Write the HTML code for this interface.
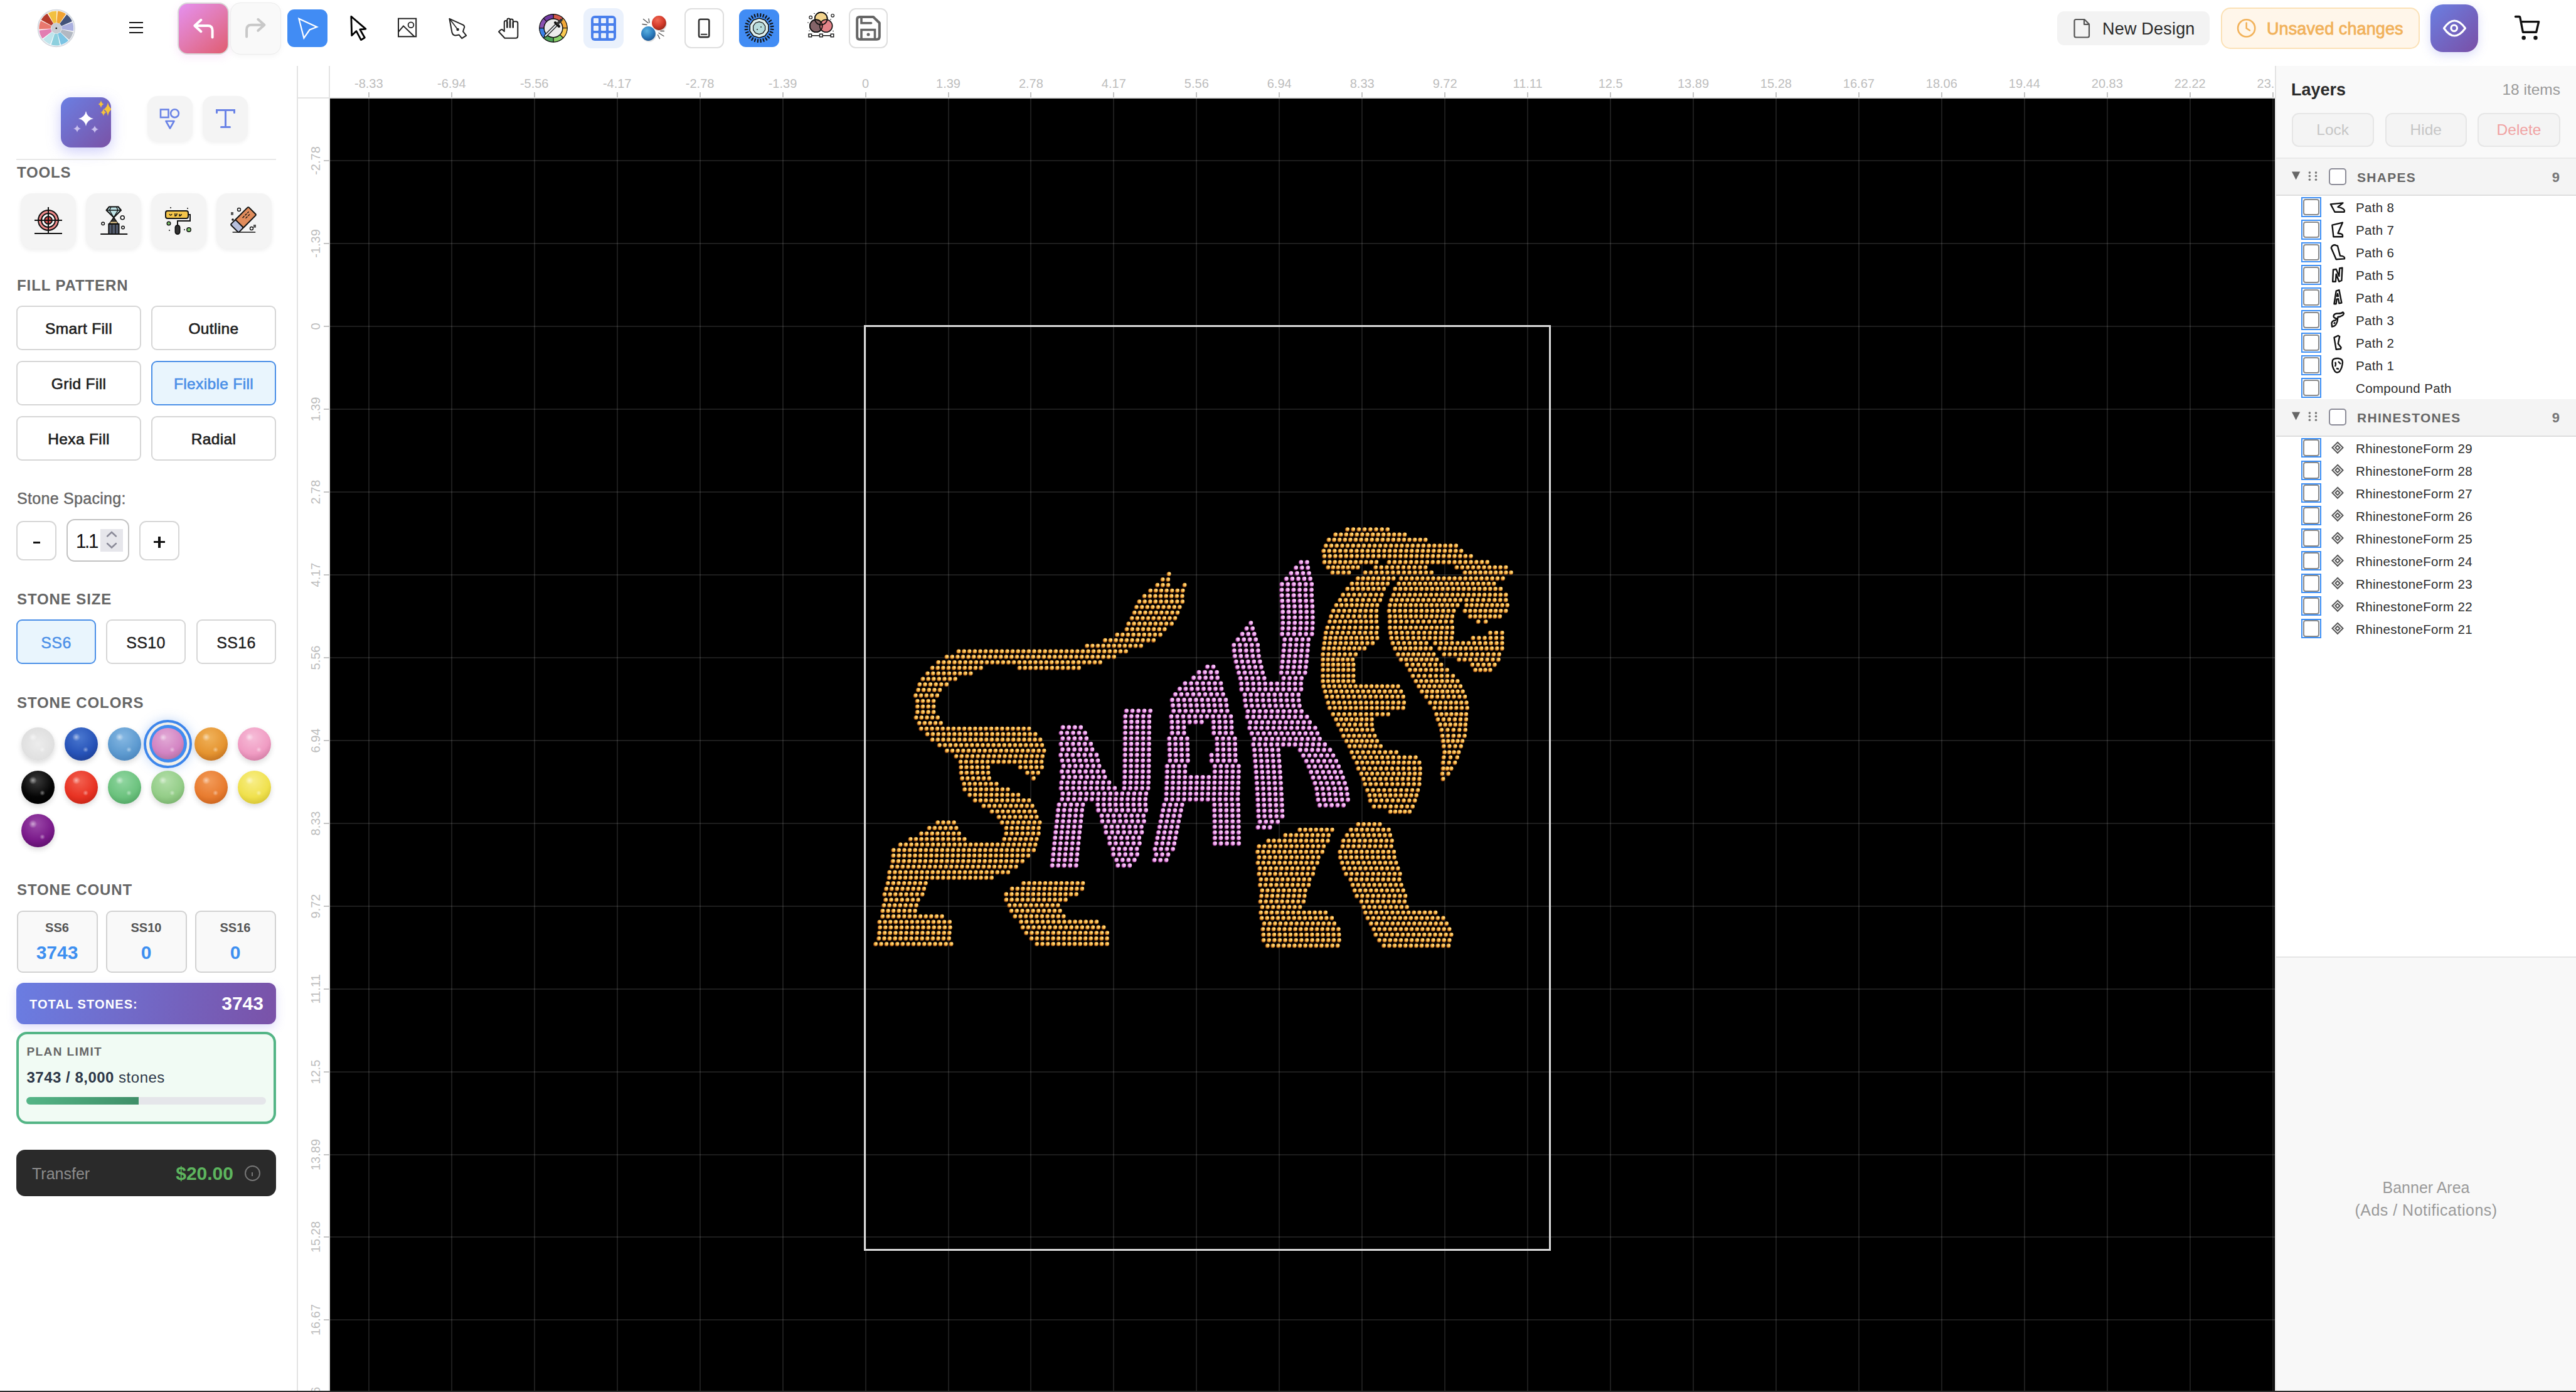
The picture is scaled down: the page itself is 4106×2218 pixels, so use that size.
<!DOCTYPE html><html><head><meta charset="utf-8"><style>
*{box-sizing:border-box;margin:0;padding:0}
html,body{width:4106px;height:2218px;overflow:hidden;background:#fff;font-family:"Liberation Sans",sans-serif}
.a{position:absolute}
.t{position:absolute;line-height:1;white-space:nowrap}
.c{display:flex;align-items:center;justify-content:center}
.hdr{font-weight:bold;color:#666;font-size:24px;letter-spacing:1.6px}
.fb{position:absolute;border:2px solid #d6d6d6;border-radius:9px;background:#fff;font-size:24.5px;color:#1d1d1d;font-weight:normal;-webkit-text-stroke:0.65px currentColor;letter-spacing:0.35px;padding-top:3px;display:flex;align-items:center;justify-content:center;line-height:1}
.rl{position:absolute;font-size:20px;color:#bdbdbd;line-height:1;white-space:nowrap}
.li{position:absolute;font-size:21px;color:#2c2c2c;line-height:1;white-space:nowrap}
</style></head><body>
<div class="a" style="left:526px;top:157px;width:3100px;height:2059px;background:#000;overflow:hidden">
<div class="a" style="left:60.8px;top:0;width:2px;height:2059px;background:rgba(255,255,255,.115)"></div>
<div class="a" style="left:192.8px;top:0;width:2px;height:2059px;background:rgba(255,255,255,.115)"></div>
<div class="a" style="left:324.7px;top:0;width:2px;height:2059px;background:rgba(255,255,255,.115)"></div>
<div class="a" style="left:456.7px;top:0;width:2px;height:2059px;background:rgba(255,255,255,.115)"></div>
<div class="a" style="left:588.6px;top:0;width:2px;height:2059px;background:rgba(255,255,255,.115)"></div>
<div class="a" style="left:720.5px;top:0;width:2px;height:2059px;background:rgba(255,255,255,.115)"></div>
<div class="a" style="left:852.5px;top:0;width:2px;height:2059px;background:rgba(255,255,255,.115)"></div>
<div class="a" style="left:984.5px;top:0;width:2px;height:2059px;background:rgba(255,255,255,.115)"></div>
<div class="a" style="left:1116.4px;top:0;width:2px;height:2059px;background:rgba(255,255,255,.115)"></div>
<div class="a" style="left:1248.3px;top:0;width:2px;height:2059px;background:rgba(255,255,255,.115)"></div>
<div class="a" style="left:1380.3px;top:0;width:2px;height:2059px;background:rgba(255,255,255,.115)"></div>
<div class="a" style="left:1512.2px;top:0;width:2px;height:2059px;background:rgba(255,255,255,.115)"></div>
<div class="a" style="left:1644.2px;top:0;width:2px;height:2059px;background:rgba(255,255,255,.115)"></div>
<div class="a" style="left:1776.1px;top:0;width:2px;height:2059px;background:rgba(255,255,255,.115)"></div>
<div class="a" style="left:1908.1px;top:0;width:2px;height:2059px;background:rgba(255,255,255,.115)"></div>
<div class="a" style="left:2040.1px;top:0;width:2px;height:2059px;background:rgba(255,255,255,.115)"></div>
<div class="a" style="left:2172.0px;top:0;width:2px;height:2059px;background:rgba(255,255,255,.115)"></div>
<div class="a" style="left:2303.9px;top:0;width:2px;height:2059px;background:rgba(255,255,255,.115)"></div>
<div class="a" style="left:2435.9px;top:0;width:2px;height:2059px;background:rgba(255,255,255,.115)"></div>
<div class="a" style="left:2567.8px;top:0;width:2px;height:2059px;background:rgba(255,255,255,.115)"></div>
<div class="a" style="left:2699.8px;top:0;width:2px;height:2059px;background:rgba(255,255,255,.115)"></div>
<div class="a" style="left:2831.8px;top:0;width:2px;height:2059px;background:rgba(255,255,255,.115)"></div>
<div class="a" style="left:2963.7px;top:0;width:2px;height:2059px;background:rgba(255,255,255,.115)"></div>
<div class="a" style="left:3095.6px;top:0;width:2px;height:2059px;background:rgba(255,255,255,.115)"></div>
<div class="a" style="left:0;top:98.1px;width:3100px;height:2px;background:rgba(255,255,255,.115)"></div>
<div class="a" style="left:0;top:230.1px;width:3100px;height:2px;background:rgba(255,255,255,.115)"></div>
<div class="a" style="left:0;top:362.0px;width:3100px;height:2px;background:rgba(255,255,255,.115)"></div>
<div class="a" style="left:0;top:494.0px;width:3100px;height:2px;background:rgba(255,255,255,.115)"></div>
<div class="a" style="left:0;top:625.9px;width:3100px;height:2px;background:rgba(255,255,255,.115)"></div>
<div class="a" style="left:0;top:757.8px;width:3100px;height:2px;background:rgba(255,255,255,.115)"></div>
<div class="a" style="left:0;top:889.8px;width:3100px;height:2px;background:rgba(255,255,255,.115)"></div>
<div class="a" style="left:0;top:1021.8px;width:3100px;height:2px;background:rgba(255,255,255,.115)"></div>
<div class="a" style="left:0;top:1153.7px;width:3100px;height:2px;background:rgba(255,255,255,.115)"></div>
<div class="a" style="left:0;top:1285.6px;width:3100px;height:2px;background:rgba(255,255,255,.115)"></div>
<div class="a" style="left:0;top:1417.6px;width:3100px;height:2px;background:rgba(255,255,255,.115)"></div>
<div class="a" style="left:0;top:1549.5px;width:3100px;height:2px;background:rgba(255,255,255,.115)"></div>
<div class="a" style="left:0;top:1681.5px;width:3100px;height:2px;background:rgba(255,255,255,.115)"></div>
<div class="a" style="left:0;top:1813.4px;width:3100px;height:2px;background:rgba(255,255,255,.115)"></div>
<div class="a" style="left:0;top:1945.4px;width:3100px;height:2px;background:rgba(255,255,255,.115)"></div>
<div class="a" style="left:851px;top:361px;width:1095px;height:1475px;border:3px solid #dcdcdc"></div>
<svg class="a" style="left:0;top:0" width="3100" height="2059" viewBox="0 0 3100 2059">
<path d="M1337.0 757.8h0M1327.0 766.6h0M1335.6 766.6h0M1318.5 775.4h0M1327.1 775.4h0M1335.7 775.4h0M1361.9 775.4h0M1307.4 784.2h0M1316.0 784.2h0M1324.6 784.2h0M1333.2 784.2h0M1341.8 784.2h0M1350.4 784.2h0M1359.0 784.2h0M1297.9 793.0h0M1306.5 793.0h0M1315.1 793.0h0M1323.7 793.0h0M1332.3 793.0h0M1340.9 793.0h0M1349.5 793.0h0M1358.1 793.0h0M1289.7 801.8h0M1298.3 801.8h0M1306.9 801.8h0M1315.5 801.8h0M1324.1 801.8h0M1332.7 801.8h0M1341.3 801.8h0M1349.9 801.8h0M1358.5 801.8h0M1285.2 810.6h0M1293.8 810.6h0M1302.4 810.6h0M1311.0 810.6h0M1319.6 810.6h0M1328.2 810.6h0M1336.8 810.6h0M1345.4 810.6h0M1354.0 810.6h0M1281.9 819.4h0M1290.5 819.4h0M1299.1 819.4h0M1307.7 819.4h0M1316.3 819.4h0M1324.9 819.4h0M1333.5 819.4h0M1342.1 819.4h0M1350.7 819.4h0M1277.9 828.2h0M1286.5 828.2h0M1295.1 828.2h0M1303.7 828.2h0M1312.3 828.2h0M1320.9 828.2h0M1329.5 828.2h0M1338.1 828.2h0M1346.7 828.2h0M1272.5 837.0h0M1281.1 837.0h0M1289.7 837.0h0M1298.3 837.0h0M1306.9 837.0h0M1315.5 837.0h0M1324.1 837.0h0M1332.7 837.0h0M1341.3 837.0h0M1269.8 845.8h0M1278.4 845.8h0M1287.0 845.8h0M1295.6 845.8h0M1304.2 845.8h0M1312.8 845.8h0M1321.4 845.8h0M1330.0 845.8h0M1254.4 854.6h0M1263.0 854.6h0M1271.6 854.6h0M1280.2 854.6h0M1288.8 854.6h0M1297.4 854.6h0M1306.0 854.6h0M1314.6 854.6h0M1323.2 854.6h0M1235.1 863.4h0M1243.7 863.4h0M1252.3 863.4h0M1260.9 863.4h0M1269.5 863.4h0M1278.1 863.4h0M1286.7 863.4h0M1295.3 863.4h0M1303.9 863.4h0M1312.5 863.4h0M1206.4 872.2h0M1215.0 872.2h0M1223.6 872.2h0M1232.2 872.2h0M1240.8 872.2h0M1249.4 872.2h0M1258.0 872.2h0M1266.6 872.2h0M1275.2 872.2h0M1283.8 872.2h0M1292.4 872.2h0M1001.7 881.0h0M1010.3 881.0h0M1018.9 881.0h0M1027.5 881.0h0M1036.1 881.0h0M1044.7 881.0h0M1053.3 881.0h0M1061.9 881.0h0M1070.5 881.0h0M1079.1 881.0h0M1087.7 881.0h0M1096.3 881.0h0M1104.9 881.0h0M1113.5 881.0h0M1122.1 881.0h0M1130.7 881.0h0M1139.3 881.0h0M1147.9 881.0h0M1156.5 881.0h0M1165.1 881.0h0M1173.7 881.0h0M1182.3 881.0h0M1190.9 881.0h0M1199.5 881.0h0M1208.1 881.0h0M1216.7 881.0h0M1225.3 881.0h0M1233.9 881.0h0M1242.5 881.0h0M1251.1 881.0h0M1259.7 881.0h0M1268.3 881.0h0M982.8 889.8h0M991.4 889.8h0M1000.0 889.8h0M1008.6 889.8h0M1017.2 889.8h0M1025.8 889.8h0M1034.4 889.8h0M1043.0 889.8h0M1051.6 889.8h0M1060.2 889.8h0M1068.8 889.8h0M1077.4 889.8h0M1086.0 889.8h0M1094.6 889.8h0M1103.2 889.8h0M1111.8 889.8h0M1120.4 889.8h0M1129.0 889.8h0M1137.6 889.8h0M1146.2 889.8h0M1154.8 889.8h0M1163.4 889.8h0M1172.0 889.8h0M1180.6 889.8h0M1189.2 889.8h0M1197.8 889.8h0M1206.4 889.8h0M1215.0 889.8h0M1223.6 889.8h0M1232.2 889.8h0M1240.8 889.8h0M1249.4 889.8h0M969.3 898.6h0M977.9 898.6h0M986.5 898.6h0M995.1 898.6h0M1003.7 898.6h0M1012.3 898.6h0M1020.9 898.6h0M1029.5 898.6h0M1038.1 898.6h0M1046.7 898.6h0M1055.3 898.6h0M1063.9 898.6h0M1072.5 898.6h0M1081.1 898.6h0M1089.7 898.6h0M1098.3 898.6h0M1106.9 898.6h0M1115.5 898.6h0M1124.1 898.6h0M1132.7 898.6h0M1141.3 898.6h0M1149.9 898.6h0M1158.5 898.6h0M1167.1 898.6h0M1175.7 898.6h0M1184.3 898.6h0M1192.9 898.6h0M1201.5 898.6h0M1210.1 898.6h0M1218.7 898.6h0M1227.3 898.6h0M959.8 907.4h0M968.4 907.4h0M977.0 907.4h0M985.6 907.4h0M994.2 907.4h0M1002.8 907.4h0M1011.4 907.4h0M1020.0 907.4h0M1028.6 907.4h0M1037.2 907.4h0M1098.8 907.4h0M1107.4 907.4h0M1116.0 907.4h0M1124.6 907.4h0M1133.2 907.4h0M1141.8 907.4h0M1150.4 907.4h0M1159.0 907.4h0M1167.6 907.4h0M1176.2 907.4h0M1184.8 907.4h0M1193.4 907.4h0M952.2 916.2h0M960.8 916.2h0M969.4 916.2h0M978.0 916.2h0M986.6 916.2h0M995.2 916.2h0M1003.8 916.2h0M1012.4 916.2h0M1021.0 916.2h0M944.7 925.0h0M953.3 925.0h0M961.9 925.0h0M970.5 925.0h0M979.1 925.0h0M987.7 925.0h0M996.3 925.0h0M939.5 933.8h0M948.1 933.8h0M956.7 933.8h0M965.3 933.8h0M973.9 933.8h0M982.5 933.8h0M937.3 942.6h0M945.9 942.6h0M954.5 942.6h0M963.1 942.6h0M971.7 942.6h0M933.1 951.4h0M941.7 951.4h0M950.3 951.4h0M958.9 951.4h0M967.5 951.4h0M936.0 960.2h0M944.6 960.2h0M953.2 960.2h0M961.8 960.2h0M936.0 969.0h0M944.6 969.0h0M953.2 969.0h0M961.8 969.0h0M936.0 977.8h0M944.6 977.8h0M953.2 977.8h0M961.8 977.8h0M933.9 986.6h0M942.5 986.6h0M951.1 986.6h0M959.7 986.6h0M968.3 986.6h0M938.9 995.4h0M947.5 995.4h0M956.1 995.4h0M964.7 995.4h0M973.3 995.4h0M941.9 1004.2h0M950.5 1004.2h0M959.1 1004.2h0M967.7 1004.2h0M976.3 1004.2h0M984.9 1004.2h0M993.5 1004.2h0M1002.1 1004.2h0M1010.7 1004.2h0M1019.3 1004.2h0M1027.9 1004.2h0M1036.5 1004.2h0M1045.1 1004.2h0M1053.7 1004.2h0M1062.3 1004.2h0M1070.9 1004.2h0M1079.5 1004.2h0M1088.1 1004.2h0M1096.7 1004.2h0M1105.3 1004.2h0M1113.9 1004.2h0M951.9 1013.0h0M960.5 1013.0h0M969.1 1013.0h0M977.7 1013.0h0M986.3 1013.0h0M994.9 1013.0h0M1003.5 1013.0h0M1012.1 1013.0h0M1020.7 1013.0h0M1029.3 1013.0h0M1037.9 1013.0h0M1046.5 1013.0h0M1055.1 1013.0h0M1063.7 1013.0h0M1072.3 1013.0h0M1080.9 1013.0h0M1089.5 1013.0h0M1098.1 1013.0h0M1106.7 1013.0h0M1115.3 1013.0h0M1123.9 1013.0h0M959.8 1021.8h0M968.4 1021.8h0M977.0 1021.8h0M985.6 1021.8h0M994.2 1021.8h0M1002.8 1021.8h0M1011.4 1021.8h0M1020.0 1021.8h0M1028.6 1021.8h0M1037.2 1021.8h0M1045.8 1021.8h0M1054.4 1021.8h0M1063.0 1021.8h0M1071.6 1021.8h0M1080.2 1021.8h0M1088.8 1021.8h0M1097.4 1021.8h0M1106.0 1021.8h0M1114.6 1021.8h0M1123.2 1021.8h0M1131.8 1021.8h0M971.2 1030.6h0M979.8 1030.6h0M988.4 1030.6h0M997.0 1030.6h0M1005.6 1030.6h0M1014.2 1030.6h0M1022.8 1030.6h0M1031.4 1030.6h0M1040.0 1030.6h0M1048.6 1030.6h0M1057.2 1030.6h0M1065.8 1030.6h0M1074.4 1030.6h0M1083.0 1030.6h0M1091.6 1030.6h0M1100.2 1030.6h0M1108.8 1030.6h0M1117.4 1030.6h0M1126.0 1030.6h0M1134.6 1030.6h0M983.1 1039.4h0M991.7 1039.4h0M1000.3 1039.4h0M1008.9 1039.4h0M1017.5 1039.4h0M1026.1 1039.4h0M1034.7 1039.4h0M1043.3 1039.4h0M1051.9 1039.4h0M1060.5 1039.4h0M1069.1 1039.4h0M1077.7 1039.4h0M1086.3 1039.4h0M1094.9 1039.4h0M1103.5 1039.4h0M1112.1 1039.4h0M1120.7 1039.4h0M1129.3 1039.4h0M1137.9 1039.4h0M997.8 1048.2h0M1006.4 1048.2h0M1015.0 1048.2h0M1023.6 1048.2h0M1032.2 1048.2h0M1040.8 1048.2h0M1049.4 1048.2h0M1058.0 1048.2h0M1066.6 1048.2h0M1075.2 1048.2h0M1083.8 1048.2h0M1092.4 1048.2h0M1101.0 1048.2h0M1109.6 1048.2h0M1118.2 1048.2h0M1126.8 1048.2h0M1135.4 1048.2h0M1004.8 1057.0h0M1013.4 1057.0h0M1022.0 1057.0h0M1030.6 1057.0h0M1039.2 1057.0h0M1047.8 1057.0h0M1056.4 1057.0h0M1065.0 1057.0h0M1073.6 1057.0h0M1082.2 1057.0h0M1090.8 1057.0h0M1099.4 1057.0h0M1108.0 1057.0h0M1116.6 1057.0h0M1125.2 1057.0h0M1133.8 1057.0h0M1005.5 1065.8h0M1014.1 1065.8h0M1022.7 1065.8h0M1031.3 1065.8h0M1039.9 1065.8h0M1048.5 1065.8h0M1100.0 1065.8h0M1108.6 1065.8h0M1117.2 1065.8h0M1125.8 1065.8h0M1134.4 1065.8h0M1005.8 1074.6h0M1014.4 1074.6h0M1023.0 1074.6h0M1031.6 1074.6h0M1040.2 1074.6h0M1048.8 1074.6h0M1111.2 1074.6h0M1119.8 1074.6h0M1128.4 1074.6h0M1007.3 1083.4h0M1015.9 1083.4h0M1024.5 1083.4h0M1033.1 1083.4h0M1041.7 1083.4h0M1050.3 1083.4h0M1121.2 1083.4h0M1010.4 1092.2h0M1019.0 1092.2h0M1027.6 1092.2h0M1036.2 1092.2h0M1044.8 1092.2h0M1053.4 1092.2h0M1062.0 1092.2h0M1011.3 1101.0h0M1019.9 1101.0h0M1028.5 1101.0h0M1037.1 1101.0h0M1045.7 1101.0h0M1054.3 1101.0h0M1062.9 1101.0h0M1071.5 1101.0h0M1080.1 1101.0h0M1019.3 1109.8h0M1027.9 1109.8h0M1036.5 1109.8h0M1045.1 1109.8h0M1053.7 1109.8h0M1062.3 1109.8h0M1070.9 1109.8h0M1079.5 1109.8h0M1088.1 1109.8h0M1096.7 1109.8h0M1027.9 1118.6h0M1036.5 1118.6h0M1045.1 1118.6h0M1053.7 1118.6h0M1062.3 1118.6h0M1070.9 1118.6h0M1079.5 1118.6h0M1088.1 1118.6h0M1096.7 1118.6h0M1105.3 1118.6h0M1113.9 1118.6h0M1041.7 1127.4h0M1050.3 1127.4h0M1058.9 1127.4h0M1067.5 1127.4h0M1076.1 1127.4h0M1084.7 1127.4h0M1093.3 1127.4h0M1101.9 1127.4h0M1110.5 1127.4h0M1119.1 1127.4h0M1054.7 1136.2h0M1063.3 1136.2h0M1071.9 1136.2h0M1080.5 1136.2h0M1089.1 1136.2h0M1097.7 1136.2h0M1106.3 1136.2h0M1114.9 1136.2h0M1123.5 1136.2h0M1065.8 1145.0h0M1074.4 1145.0h0M1083.0 1145.0h0M1091.6 1145.0h0M1100.2 1145.0h0M1108.8 1145.0h0M1117.4 1145.0h0M1126.0 1145.0h0M968.4 1153.8h0M977.0 1153.8h0M985.6 1153.8h0M994.2 1153.8h0M1070.8 1153.8h0M1079.4 1153.8h0M1088.0 1153.8h0M1096.6 1153.8h0M1105.2 1153.8h0M1113.8 1153.8h0M1122.4 1153.8h0M1131.0 1153.8h0M954.9 1162.6h0M963.5 1162.6h0M972.1 1162.6h0M980.7 1162.6h0M989.3 1162.6h0M997.9 1162.6h0M1077.7 1162.6h0M1086.3 1162.6h0M1094.9 1162.6h0M1103.5 1162.6h0M1112.1 1162.6h0M1120.7 1162.6h0M1129.3 1162.6h0M942.1 1171.4h0M950.7 1171.4h0M959.3 1171.4h0M967.9 1171.4h0M976.5 1171.4h0M985.1 1171.4h0M993.7 1171.4h0M1002.3 1171.4h0M1077.5 1171.4h0M1086.1 1171.4h0M1094.7 1171.4h0M1103.3 1171.4h0M1111.9 1171.4h0M1120.5 1171.4h0M1129.1 1171.4h0M925.0 1180.2h0M933.6 1180.2h0M942.2 1180.2h0M950.8 1180.2h0M959.4 1180.2h0M968.0 1180.2h0M976.6 1180.2h0M985.2 1180.2h0M993.8 1180.2h0M1002.4 1180.2h0M1011.0 1180.2h0M1074.5 1180.2h0M1083.1 1180.2h0M1091.7 1180.2h0M1100.3 1180.2h0M1108.9 1180.2h0M1117.5 1180.2h0M1126.1 1180.2h0M908.9 1189.0h0M917.5 1189.0h0M926.1 1189.0h0M934.7 1189.0h0M943.3 1189.0h0M951.9 1189.0h0M960.5 1189.0h0M969.1 1189.0h0M977.7 1189.0h0M986.3 1189.0h0M994.9 1189.0h0M1003.5 1189.0h0M1012.1 1189.0h0M1020.7 1189.0h0M1029.3 1189.0h0M1037.9 1189.0h0M1046.5 1189.0h0M1055.1 1189.0h0M1063.7 1189.0h0M1072.3 1189.0h0M1080.9 1189.0h0M1089.5 1189.0h0M1098.1 1189.0h0M1106.7 1189.0h0M1115.3 1189.0h0M1123.9 1189.0h0M897.9 1197.8h0M906.5 1197.8h0M915.1 1197.8h0M923.7 1197.8h0M932.3 1197.8h0M940.9 1197.8h0M949.5 1197.8h0M958.1 1197.8h0M966.7 1197.8h0M975.3 1197.8h0M983.9 1197.8h0M992.5 1197.8h0M1001.1 1197.8h0M1009.7 1197.8h0M1018.3 1197.8h0M1026.9 1197.8h0M1035.5 1197.8h0M1044.1 1197.8h0M1052.7 1197.8h0M1061.3 1197.8h0M1069.9 1197.8h0M1078.5 1197.8h0M1087.1 1197.8h0M1095.7 1197.8h0M1104.3 1197.8h0M1112.9 1197.8h0M1121.5 1197.8h0M897.7 1206.6h0M906.3 1206.6h0M914.9 1206.6h0M923.5 1206.6h0M932.1 1206.6h0M940.7 1206.6h0M949.3 1206.6h0M957.9 1206.6h0M966.5 1206.6h0M975.1 1206.6h0M983.7 1206.6h0M992.3 1206.6h0M1000.9 1206.6h0M1009.5 1206.6h0M1018.1 1206.6h0M1026.7 1206.6h0M1035.3 1206.6h0M1043.9 1206.6h0M1052.5 1206.6h0M1061.1 1206.6h0M1069.7 1206.6h0M1078.3 1206.6h0M1086.9 1206.6h0M1095.5 1206.6h0M1104.1 1206.6h0M1112.7 1206.6h0M897.0 1215.4h0M905.6 1215.4h0M914.2 1215.4h0M922.8 1215.4h0M931.4 1215.4h0M940.0 1215.4h0M948.6 1215.4h0M957.2 1215.4h0M965.8 1215.4h0M974.4 1215.4h0M983.0 1215.4h0M991.6 1215.4h0M1000.2 1215.4h0M1008.8 1215.4h0M1017.4 1215.4h0M1026.0 1215.4h0M1034.6 1215.4h0M1043.2 1215.4h0M1051.8 1215.4h0M1060.4 1215.4h0M1069.0 1215.4h0M1077.6 1215.4h0M1086.2 1215.4h0M1094.8 1215.4h0M1103.4 1215.4h0M895.3 1224.2h0M903.9 1224.2h0M912.5 1224.2h0M921.1 1224.2h0M929.7 1224.2h0M938.3 1224.2h0M946.9 1224.2h0M955.5 1224.2h0M964.1 1224.2h0M972.7 1224.2h0M981.3 1224.2h0M989.9 1224.2h0M998.5 1224.2h0M1007.1 1224.2h0M1015.7 1224.2h0M1024.3 1224.2h0M1032.9 1224.2h0M1041.5 1224.2h0M1050.1 1224.2h0M1058.7 1224.2h0M1067.3 1224.2h0M1075.9 1224.2h0M1084.5 1224.2h0M1093.1 1224.2h0M891.4 1233.0h0M900.0 1233.0h0M908.6 1233.0h0M917.2 1233.0h0M925.8 1233.0h0M934.4 1233.0h0M943.0 1233.0h0M951.6 1233.0h0M960.2 1233.0h0M968.8 1233.0h0M977.4 1233.0h0M986.0 1233.0h0M994.6 1233.0h0M1003.2 1233.0h0M1011.8 1233.0h0M1020.4 1233.0h0M1029.0 1233.0h0M1037.6 1233.0h0M1046.2 1233.0h0M1054.8 1233.0h0M1063.4 1233.0h0M1072.0 1233.0h0M1080.6 1233.0h0M890.9 1241.8h0M899.5 1241.8h0M908.1 1241.8h0M916.7 1241.8h0M925.3 1241.8h0M933.9 1241.8h0M942.5 1241.8h0M951.1 1241.8h0M959.7 1241.8h0M968.3 1241.8h0M976.9 1241.8h0M985.5 1241.8h0M994.1 1241.8h0M1002.7 1241.8h0M1011.3 1241.8h0M1019.9 1241.8h0M1028.5 1241.8h0M1037.1 1241.8h0M1045.7 1241.8h0M1054.3 1241.8h0M888.9 1250.6h0M897.5 1250.6h0M906.1 1250.6h0M914.7 1250.6h0M923.3 1250.6h0M931.9 1250.6h0M940.5 1250.6h0M949.1 1250.6h0M886.3 1259.4h0M894.9 1259.4h0M903.5 1259.4h0M912.1 1259.4h0M920.7 1259.4h0M929.3 1259.4h0M937.9 1259.4h0M946.5 1259.4h0M883.7 1268.2h0M892.3 1268.2h0M900.9 1268.2h0M909.5 1268.2h0M918.1 1268.2h0M926.7 1268.2h0M935.3 1268.2h0M943.9 1268.2h0M885.5 1277.0h0M894.1 1277.0h0M902.7 1277.0h0M911.3 1277.0h0M919.9 1277.0h0M928.5 1277.0h0M937.1 1277.0h0M882.6 1285.8h0M891.2 1285.8h0M899.8 1285.8h0M908.4 1285.8h0M917.0 1285.8h0M925.6 1285.8h0M934.2 1285.8h0M880.6 1294.6h0M889.2 1294.6h0M897.8 1294.6h0M906.4 1294.6h0M915.0 1294.6h0M923.6 1294.6h0M932.2 1294.6h0M880.5 1303.4h0M889.1 1303.4h0M897.7 1303.4h0M906.3 1303.4h0M914.9 1303.4h0M923.5 1303.4h0M932.1 1303.4h0M940.7 1303.4h0M949.3 1303.4h0M957.9 1303.4h0M966.5 1303.4h0M975.1 1303.4h0M875.6 1312.2h0M884.2 1312.2h0M892.8 1312.2h0M901.4 1312.2h0M910.0 1312.2h0M918.6 1312.2h0M927.2 1312.2h0M935.8 1312.2h0M944.4 1312.2h0M953.0 1312.2h0M961.6 1312.2h0M970.2 1312.2h0M978.8 1312.2h0M987.4 1312.2h0M876.3 1321.0h0M884.9 1321.0h0M893.5 1321.0h0M902.1 1321.0h0M910.7 1321.0h0M919.3 1321.0h0M927.9 1321.0h0M936.5 1321.0h0M945.1 1321.0h0M953.7 1321.0h0M962.3 1321.0h0M970.9 1321.0h0M979.5 1321.0h0M988.1 1321.0h0M875.2 1329.8h0M883.8 1329.8h0M892.4 1329.8h0M901.0 1329.8h0M909.6 1329.8h0M918.2 1329.8h0M926.8 1329.8h0M935.4 1329.8h0M944.0 1329.8h0M952.6 1329.8h0M961.2 1329.8h0M969.8 1329.8h0M978.4 1329.8h0M987.0 1329.8h0M874.5 1338.6h0M883.1 1338.6h0M891.7 1338.6h0M900.3 1338.6h0M908.9 1338.6h0M917.5 1338.6h0M926.1 1338.6h0M934.7 1338.6h0M943.3 1338.6h0M951.9 1338.6h0M960.5 1338.6h0M969.1 1338.6h0M977.7 1338.6h0M986.3 1338.6h0M869.5 1347.4h0M878.1 1347.4h0M886.7 1347.4h0M895.3 1347.4h0M903.9 1347.4h0M912.5 1347.4h0M921.1 1347.4h0M929.7 1347.4h0M938.3 1347.4h0M946.9 1347.4h0M955.5 1347.4h0M964.1 1347.4h0M972.7 1347.4h0M981.3 1347.4h0M989.9 1347.4h0M1105.2 1250.5h0M1113.8 1250.5h0M1122.4 1250.5h0M1131.0 1250.5h0M1139.6 1250.5h0M1148.2 1250.5h0M1156.8 1250.5h0M1165.4 1250.5h0M1174.0 1250.5h0M1182.6 1250.5h0M1191.2 1250.5h0M1199.8 1250.5h0M1086.8 1259.3h0M1095.4 1259.3h0M1104.0 1259.3h0M1112.6 1259.3h0M1121.2 1259.3h0M1129.8 1259.3h0M1138.4 1259.3h0M1147.0 1259.3h0M1155.6 1259.3h0M1164.2 1259.3h0M1172.8 1259.3h0M1181.4 1259.3h0M1190.0 1259.3h0M1198.6 1259.3h0M1077.5 1268.1h0M1086.1 1268.1h0M1094.7 1268.1h0M1103.3 1268.1h0M1111.9 1268.1h0M1120.5 1268.1h0M1129.1 1268.1h0M1137.7 1268.1h0M1146.3 1268.1h0M1154.9 1268.1h0M1163.5 1268.1h0M1172.1 1268.1h0M1180.7 1268.1h0M1189.3 1268.1h0M1077.6 1276.9h0M1086.2 1276.9h0M1094.8 1276.9h0M1103.4 1276.9h0M1112.0 1276.9h0M1120.6 1276.9h0M1129.2 1276.9h0M1137.8 1276.9h0M1146.4 1276.9h0M1155.0 1276.9h0M1163.6 1276.9h0M1172.2 1276.9h0M1082.6 1285.7h0M1091.2 1285.7h0M1099.8 1285.7h0M1108.4 1285.7h0M1117.0 1285.7h0M1125.6 1285.7h0M1134.2 1285.7h0M1142.8 1285.7h0M1151.4 1285.7h0M1160.0 1285.7h0M1085.8 1294.5h0M1094.4 1294.5h0M1103.0 1294.5h0M1111.6 1294.5h0M1120.2 1294.5h0M1128.8 1294.5h0M1137.4 1294.5h0M1146.0 1294.5h0M1154.6 1294.5h0M1163.2 1294.5h0M1091.6 1303.3h0M1100.2 1303.3h0M1108.8 1303.3h0M1117.4 1303.3h0M1126.0 1303.3h0M1134.6 1303.3h0M1143.2 1303.3h0M1151.8 1303.3h0M1160.4 1303.3h0M1169.0 1303.3h0M1101.2 1312.1h0M1109.8 1312.1h0M1118.4 1312.1h0M1127.0 1312.1h0M1135.6 1312.1h0M1144.2 1312.1h0M1152.8 1312.1h0M1161.4 1312.1h0M1170.0 1312.1h0M1178.6 1312.1h0M1187.2 1312.1h0M1195.8 1312.1h0M1204.4 1312.1h0M1213.0 1312.1h0M1221.6 1312.1h0M1103.9 1320.9h0M1112.5 1320.9h0M1121.1 1320.9h0M1129.7 1320.9h0M1138.3 1320.9h0M1146.9 1320.9h0M1155.5 1320.9h0M1164.1 1320.9h0M1172.7 1320.9h0M1181.3 1320.9h0M1189.9 1320.9h0M1198.5 1320.9h0M1207.1 1320.9h0M1215.7 1320.9h0M1224.3 1320.9h0M1232.9 1320.9h0M1109.5 1329.7h0M1118.1 1329.7h0M1126.7 1329.7h0M1135.3 1329.7h0M1143.9 1329.7h0M1152.5 1329.7h0M1161.1 1329.7h0M1169.7 1329.7h0M1178.3 1329.7h0M1186.9 1329.7h0M1195.5 1329.7h0M1204.1 1329.7h0M1212.7 1329.7h0M1221.3 1329.7h0M1229.9 1329.7h0M1238.5 1329.7h0M1117.8 1338.5h0M1126.4 1338.5h0M1135.0 1338.5h0M1143.6 1338.5h0M1152.2 1338.5h0M1160.8 1338.5h0M1169.4 1338.5h0M1178.0 1338.5h0M1186.6 1338.5h0M1195.2 1338.5h0M1203.8 1338.5h0M1212.4 1338.5h0M1221.0 1338.5h0M1229.6 1338.5h0M1238.2 1338.5h0M1126.5 1347.3h0M1135.1 1347.3h0M1143.7 1347.3h0M1152.3 1347.3h0M1160.9 1347.3h0M1169.5 1347.3h0M1178.1 1347.3h0M1186.7 1347.3h0M1195.3 1347.3h0M1203.9 1347.3h0M1212.5 1347.3h0M1221.1 1347.3h0M1229.7 1347.3h0M1238.3 1347.3h0M1545.5 1165.3h0M1554.1 1165.3h0M1562.7 1165.3h0M1571.3 1165.3h0M1579.9 1165.3h0M1588.5 1165.3h0M1597.1 1165.3h0M1522.5 1174.1h0M1531.1 1174.1h0M1539.7 1174.1h0M1548.3 1174.1h0M1556.9 1174.1h0M1565.5 1174.1h0M1574.1 1174.1h0M1582.7 1174.1h0M1591.3 1174.1h0M1495.5 1182.9h0M1504.1 1182.9h0M1512.7 1182.9h0M1521.3 1182.9h0M1529.9 1182.9h0M1538.5 1182.9h0M1547.1 1182.9h0M1555.7 1182.9h0M1564.3 1182.9h0M1572.9 1182.9h0M1581.5 1182.9h0M1590.1 1182.9h0M1480.4 1191.7h0M1489.0 1191.7h0M1497.6 1191.7h0M1506.2 1191.7h0M1514.8 1191.7h0M1523.4 1191.7h0M1532.0 1191.7h0M1540.6 1191.7h0M1549.2 1191.7h0M1557.8 1191.7h0M1566.4 1191.7h0M1575.0 1191.7h0M1583.6 1191.7h0M1478.2 1200.5h0M1486.8 1200.5h0M1495.4 1200.5h0M1504.0 1200.5h0M1512.6 1200.5h0M1521.2 1200.5h0M1529.8 1200.5h0M1538.4 1200.5h0M1547.0 1200.5h0M1555.6 1200.5h0M1564.2 1200.5h0M1572.8 1200.5h0M1581.4 1200.5h0M1480.5 1209.3h0M1489.1 1209.3h0M1497.7 1209.3h0M1506.3 1209.3h0M1514.9 1209.3h0M1523.5 1209.3h0M1532.1 1209.3h0M1540.7 1209.3h0M1549.3 1209.3h0M1557.9 1209.3h0M1566.5 1209.3h0M1575.1 1209.3h0M1478.7 1218.1h0M1487.3 1218.1h0M1495.9 1218.1h0M1504.5 1218.1h0M1513.1 1218.1h0M1521.7 1218.1h0M1530.3 1218.1h0M1538.9 1218.1h0M1547.5 1218.1h0M1556.1 1218.1h0M1564.7 1218.1h0M1573.3 1218.1h0M1481.7 1226.9h0M1490.3 1226.9h0M1498.9 1226.9h0M1507.5 1226.9h0M1516.1 1226.9h0M1524.7 1226.9h0M1533.3 1226.9h0M1541.9 1226.9h0M1550.5 1226.9h0M1559.1 1226.9h0M1567.7 1226.9h0M1480.4 1235.7h0M1489.0 1235.7h0M1497.6 1235.7h0M1506.2 1235.7h0M1514.8 1235.7h0M1523.4 1235.7h0M1532.0 1235.7h0M1540.6 1235.7h0M1549.2 1235.7h0M1557.8 1235.7h0M1566.4 1235.7h0M1483.4 1244.5h0M1492.0 1244.5h0M1500.6 1244.5h0M1509.2 1244.5h0M1517.8 1244.5h0M1526.4 1244.5h0M1535.0 1244.5h0M1543.6 1244.5h0M1552.2 1244.5h0M1560.8 1244.5h0M1482.2 1253.3h0M1490.8 1253.3h0M1499.4 1253.3h0M1508.0 1253.3h0M1516.6 1253.3h0M1525.2 1253.3h0M1533.8 1253.3h0M1542.4 1253.3h0M1551.0 1253.3h0M1559.6 1253.3h0M1485.4 1262.1h0M1494.0 1262.1h0M1502.6 1262.1h0M1511.2 1262.1h0M1519.8 1262.1h0M1528.4 1262.1h0M1537.0 1262.1h0M1545.6 1262.1h0M1554.2 1262.1h0M1484.2 1270.9h0M1492.8 1270.9h0M1501.4 1270.9h0M1510.0 1270.9h0M1518.6 1270.9h0M1527.2 1270.9h0M1535.8 1270.9h0M1544.4 1270.9h0M1553.0 1270.9h0M1482.7 1279.7h0M1491.3 1279.7h0M1499.9 1279.7h0M1508.5 1279.7h0M1517.1 1279.7h0M1525.7 1279.7h0M1534.3 1279.7h0M1542.9 1279.7h0M1551.5 1279.7h0M1485.6 1288.5h0M1494.2 1288.5h0M1502.8 1288.5h0M1511.4 1288.5h0M1520.0 1288.5h0M1528.6 1288.5h0M1537.2 1288.5h0M1545.8 1288.5h0M1483.3 1297.3h0M1491.9 1297.3h0M1500.5 1297.3h0M1509.1 1297.3h0M1517.7 1297.3h0M1526.3 1297.3h0M1534.9 1297.3h0M1543.5 1297.3h0M1552.1 1297.3h0M1560.7 1297.3h0M1569.3 1297.3h0M1577.9 1297.3h0M1586.5 1297.3h0M1484.8 1306.1h0M1493.4 1306.1h0M1502.0 1306.1h0M1510.6 1306.1h0M1519.2 1306.1h0M1527.8 1306.1h0M1536.4 1306.1h0M1545.0 1306.1h0M1553.6 1306.1h0M1562.2 1306.1h0M1570.8 1306.1h0M1579.4 1306.1h0M1588.0 1306.1h0M1596.6 1306.1h0M1488.7 1314.9h0M1497.3 1314.9h0M1505.9 1314.9h0M1514.5 1314.9h0M1523.1 1314.9h0M1531.7 1314.9h0M1540.3 1314.9h0M1548.9 1314.9h0M1557.5 1314.9h0M1566.1 1314.9h0M1574.7 1314.9h0M1583.3 1314.9h0M1591.9 1314.9h0M1600.5 1314.9h0M1486.7 1323.7h0M1495.3 1323.7h0M1503.9 1323.7h0M1512.5 1323.7h0M1521.1 1323.7h0M1529.7 1323.7h0M1538.3 1323.7h0M1546.9 1323.7h0M1555.5 1323.7h0M1564.1 1323.7h0M1572.7 1323.7h0M1581.3 1323.7h0M1589.9 1323.7h0M1598.5 1323.7h0M1607.1 1323.7h0M1487.5 1332.5h0M1496.1 1332.5h0M1504.7 1332.5h0M1513.3 1332.5h0M1521.9 1332.5h0M1530.5 1332.5h0M1539.1 1332.5h0M1547.7 1332.5h0M1556.3 1332.5h0M1564.9 1332.5h0M1573.5 1332.5h0M1582.1 1332.5h0M1590.7 1332.5h0M1599.3 1332.5h0M1607.9 1332.5h0M1487.8 1341.3h0M1496.4 1341.3h0M1505.0 1341.3h0M1513.6 1341.3h0M1522.2 1341.3h0M1530.8 1341.3h0M1539.4 1341.3h0M1548.0 1341.3h0M1556.6 1341.3h0M1565.2 1341.3h0M1573.8 1341.3h0M1582.4 1341.3h0M1591.0 1341.3h0M1599.6 1341.3h0M1608.2 1341.3h0M1494.1 1350.1h0M1502.7 1350.1h0M1511.3 1350.1h0M1519.9 1350.1h0M1528.5 1350.1h0M1537.1 1350.1h0M1545.7 1350.1h0M1554.3 1350.1h0M1562.9 1350.1h0M1571.5 1350.1h0M1580.1 1350.1h0M1588.7 1350.1h0M1597.3 1350.1h0M1605.9 1350.1h0M1638.6 1156.5h0M1647.2 1156.5h0M1655.8 1156.5h0M1664.4 1156.5h0M1673.0 1156.5h0M1627.0 1165.3h0M1635.6 1165.3h0M1644.2 1165.3h0M1652.8 1165.3h0M1661.4 1165.3h0M1670.0 1165.3h0M1678.6 1165.3h0M1687.2 1165.3h0M1620.7 1174.1h0M1629.3 1174.1h0M1637.9 1174.1h0M1646.5 1174.1h0M1655.1 1174.1h0M1663.7 1174.1h0M1672.3 1174.1h0M1680.9 1174.1h0M1689.5 1174.1h0M1614.9 1182.9h0M1623.5 1182.9h0M1632.1 1182.9h0M1640.7 1182.9h0M1649.3 1182.9h0M1657.9 1182.9h0M1666.5 1182.9h0M1675.1 1182.9h0M1683.7 1182.9h0M1692.3 1182.9h0M1613.8 1191.7h0M1622.4 1191.7h0M1631.0 1191.7h0M1639.6 1191.7h0M1648.2 1191.7h0M1656.8 1191.7h0M1665.4 1191.7h0M1674.0 1191.7h0M1682.6 1191.7h0M1691.2 1191.7h0M1609.5 1200.5h0M1618.1 1200.5h0M1626.7 1200.5h0M1635.3 1200.5h0M1643.9 1200.5h0M1652.5 1200.5h0M1661.1 1200.5h0M1669.7 1200.5h0M1678.3 1200.5h0M1686.9 1200.5h0M1695.5 1200.5h0M1610.1 1209.3h0M1618.7 1209.3h0M1627.3 1209.3h0M1635.9 1209.3h0M1644.5 1209.3h0M1653.1 1209.3h0M1661.7 1209.3h0M1670.3 1209.3h0M1678.9 1209.3h0M1687.5 1209.3h0M1696.1 1209.3h0M1612.9 1218.1h0M1621.5 1218.1h0M1630.1 1218.1h0M1638.7 1218.1h0M1647.3 1218.1h0M1655.9 1218.1h0M1664.5 1218.1h0M1673.1 1218.1h0M1681.7 1218.1h0M1690.3 1218.1h0M1698.9 1218.1h0M1615.9 1226.9h0M1624.5 1226.9h0M1633.1 1226.9h0M1641.7 1226.9h0M1650.3 1226.9h0M1658.9 1226.9h0M1667.5 1226.9h0M1676.1 1226.9h0M1684.7 1226.9h0M1693.3 1226.9h0M1701.9 1226.9h0M1619.2 1235.7h0M1627.8 1235.7h0M1636.4 1235.7h0M1645.0 1235.7h0M1653.6 1235.7h0M1662.2 1235.7h0M1670.8 1235.7h0M1679.4 1235.7h0M1688.0 1235.7h0M1696.6 1235.7h0M1705.2 1235.7h0M1626.6 1244.5h0M1635.2 1244.5h0M1643.8 1244.5h0M1652.4 1244.5h0M1661.0 1244.5h0M1669.6 1244.5h0M1678.2 1244.5h0M1686.8 1244.5h0M1695.4 1244.5h0M1704.0 1244.5h0M1629.8 1253.3h0M1638.4 1253.3h0M1647.0 1253.3h0M1655.6 1253.3h0M1664.2 1253.3h0M1672.8 1253.3h0M1681.4 1253.3h0M1690.0 1253.3h0M1698.6 1253.3h0M1707.2 1253.3h0M1632.9 1262.1h0M1641.5 1262.1h0M1650.1 1262.1h0M1658.7 1262.1h0M1667.3 1262.1h0M1675.9 1262.1h0M1684.5 1262.1h0M1693.1 1262.1h0M1701.7 1262.1h0M1710.3 1262.1h0M1636.3 1270.9h0M1644.9 1270.9h0M1653.5 1270.9h0M1662.1 1270.9h0M1670.7 1270.9h0M1679.3 1270.9h0M1687.9 1270.9h0M1696.5 1270.9h0M1705.1 1270.9h0M1713.7 1270.9h0M1643.7 1279.7h0M1652.3 1279.7h0M1660.9 1279.7h0M1669.5 1279.7h0M1678.1 1279.7h0M1686.7 1279.7h0M1695.3 1279.7h0M1703.9 1279.7h0M1712.5 1279.7h0M1647.4 1288.5h0M1656.0 1288.5h0M1664.6 1288.5h0M1673.2 1288.5h0M1681.8 1288.5h0M1690.4 1288.5h0M1699.0 1288.5h0M1707.6 1288.5h0M1716.2 1288.5h0M1650.0 1297.3h0M1658.6 1297.3h0M1667.2 1297.3h0M1675.8 1297.3h0M1684.4 1297.3h0M1693.0 1297.3h0M1701.6 1297.3h0M1710.2 1297.3h0M1718.8 1297.3h0M1727.4 1297.3h0M1736.0 1297.3h0M1744.6 1297.3h0M1753.2 1297.3h0M1761.8 1297.3h0M1653.7 1306.1h0M1662.3 1306.1h0M1670.9 1306.1h0M1679.5 1306.1h0M1688.1 1306.1h0M1696.7 1306.1h0M1705.3 1306.1h0M1713.9 1306.1h0M1722.5 1306.1h0M1731.1 1306.1h0M1739.7 1306.1h0M1748.3 1306.1h0M1756.9 1306.1h0M1765.5 1306.1h0M1774.1 1306.1h0M1659.0 1314.9h0M1667.6 1314.9h0M1676.2 1314.9h0M1684.8 1314.9h0M1693.4 1314.9h0M1702.0 1314.9h0M1710.6 1314.9h0M1719.2 1314.9h0M1727.8 1314.9h0M1736.4 1314.9h0M1745.0 1314.9h0M1753.6 1314.9h0M1762.2 1314.9h0M1770.8 1314.9h0M1779.4 1314.9h0M1663.5 1323.7h0M1672.1 1323.7h0M1680.7 1323.7h0M1689.3 1323.7h0M1697.9 1323.7h0M1706.5 1323.7h0M1715.1 1323.7h0M1723.7 1323.7h0M1732.3 1323.7h0M1740.9 1323.7h0M1749.5 1323.7h0M1758.1 1323.7h0M1766.7 1323.7h0M1775.3 1323.7h0M1783.9 1323.7h0M1666.5 1332.5h0M1675.1 1332.5h0M1683.7 1332.5h0M1692.3 1332.5h0M1700.9 1332.5h0M1709.5 1332.5h0M1718.1 1332.5h0M1726.7 1332.5h0M1735.3 1332.5h0M1743.9 1332.5h0M1752.5 1332.5h0M1761.1 1332.5h0M1769.7 1332.5h0M1778.3 1332.5h0M1786.9 1332.5h0M1672.2 1341.3h0M1680.8 1341.3h0M1689.4 1341.3h0M1698.0 1341.3h0M1706.6 1341.3h0M1715.2 1341.3h0M1723.8 1341.3h0M1732.4 1341.3h0M1741.0 1341.3h0M1749.6 1341.3h0M1758.2 1341.3h0M1766.8 1341.3h0M1775.4 1341.3h0M1784.0 1341.3h0M1679.5 1350.1h0M1688.1 1350.1h0M1696.7 1350.1h0M1705.3 1350.1h0M1713.9 1350.1h0M1722.5 1350.1h0M1731.1 1350.1h0M1739.7 1350.1h0M1748.3 1350.1h0M1756.9 1350.1h0M1765.5 1350.1h0M1774.1 1350.1h0M1782.7 1350.1h0M1621.4 686.7h0M1630.6 686.7h0M1639.7 686.7h0M1648.8 686.7h0M1658.0 686.7h0M1667.1 686.7h0M1676.3 686.7h0M1685.4 686.7h0M1602.4 695.0h0M1610.9 695.0h0M1619.4 695.0h0M1627.9 695.0h0M1636.4 695.0h0M1644.9 695.0h0M1653.3 695.0h0M1661.8 695.0h0M1670.3 695.0h0M1678.8 695.0h0M1687.3 695.0h0M1695.7 695.0h0M1704.2 695.0h0M1712.7 695.0h0M1591.8 703.3h0M1600.3 703.3h0M1608.9 703.3h0M1617.5 703.3h0M1626.0 703.3h0M1634.6 703.3h0M1643.1 703.3h0M1651.7 703.3h0M1660.3 703.3h0M1668.8 703.3h0M1677.4 703.3h0M1686.0 703.3h0M1694.5 703.3h0M1703.1 703.3h0M1711.6 703.3h0M1720.2 703.3h0M1728.8 703.3h0M1737.3 703.3h0M1745.9 703.3h0M1587.0 712.8h0M1595.7 712.8h0M1604.3 712.8h0M1613.0 712.8h0M1621.6 712.8h0M1630.3 712.8h0M1638.9 712.8h0M1647.5 712.8h0M1656.2 712.8h0M1664.8 712.8h0M1673.5 712.8h0M1682.1 712.8h0M1690.8 712.8h0M1699.4 712.8h0M1708.0 712.8h0M1716.7 712.8h0M1725.3 712.8h0M1734.0 712.8h0M1742.6 712.8h0M1751.3 712.8h0M1759.9 712.8h0M1768.6 712.8h0M1777.2 712.8h0M1785.8 712.8h0M1794.5 712.8h0M1583.5 721.1h0M1592.3 721.1h0M1601.0 721.1h0M1609.8 721.1h0M1618.6 721.1h0M1627.3 721.1h0M1636.1 721.1h0M1644.9 721.1h0M1653.7 721.1h0M1662.4 721.1h0M1671.2 721.1h0M1680.0 721.1h0M1688.7 721.1h0M1697.5 721.1h0M1706.3 721.1h0M1715.1 721.1h0M1723.8 721.1h0M1732.6 721.1h0M1741.4 721.1h0M1750.1 721.1h0M1758.9 721.1h0M1767.7 721.1h0M1776.5 721.1h0M1785.2 721.1h0M1794.0 721.1h0M1802.8 721.1h0M1584.7 729.4h0M1593.3 729.4h0M1602.0 729.4h0M1610.6 729.4h0M1619.3 729.4h0M1627.9 729.4h0M1636.6 729.4h0M1645.2 729.4h0M1653.9 729.4h0M1662.5 729.4h0M1671.2 729.4h0M1679.8 729.4h0M1688.5 729.4h0M1697.1 729.4h0M1705.8 729.4h0M1714.4 729.4h0M1723.1 729.4h0M1731.7 729.4h0M1740.4 729.4h0M1749.0 729.4h0M1757.6 729.4h0M1766.3 729.4h0M1774.9 729.4h0M1783.6 729.4h0M1792.2 729.4h0M1800.9 729.4h0M1809.5 729.4h0M1818.2 729.4h0M1584.7 738.9h0M1593.0 738.9h0M1601.3 738.9h0M1609.6 738.9h0M1617.9 738.9h0M1626.2 738.9h0M1634.5 738.9h0M1642.8 738.9h0M1651.1 738.9h0M1659.3 738.9h0M1667.6 738.9h0M1687.8 738.9h0M1696.5 738.9h0M1705.2 738.9h0M1713.9 738.9h0M1722.6 738.9h0M1731.3 738.9h0M1740.0 738.9h0M1748.6 738.9h0M1757.3 738.9h0M1766.0 738.9h0M1774.7 738.9h0M1783.4 738.9h0M1792.1 738.9h0M1800.8 738.9h0M1809.5 738.9h0M1818.2 738.9h0M1826.9 738.9h0M1835.6 738.9h0M1844.3 738.9h0M1590.6 747.2h0M1598.5 747.2h0M1606.4 747.2h0M1614.3 747.2h0M1622.2 747.2h0M1630.1 747.2h0M1638.0 747.2h0M1666.5 747.2h0M1675.3 747.2h0M1684.1 747.2h0M1692.9 747.2h0M1701.8 747.2h0M1710.6 747.2h0M1719.4 747.2h0M1728.2 747.2h0M1737.1 747.2h0M1745.9 747.2h0M1795.7 747.2h0M1804.4 747.2h0M1813.1 747.2h0M1821.7 747.2h0M1830.4 747.2h0M1839.1 747.2h0M1847.8 747.2h0M1856.5 747.2h0M1865.2 747.2h0M1873.9 747.2h0M1597.7 755.5h0M1606.4 755.5h0M1615.1 755.5h0M1623.8 755.5h0M1649.9 755.5h0M1658.7 755.5h0M1667.4 755.5h0M1676.2 755.5h0M1685.0 755.5h0M1693.8 755.5h0M1702.6 755.5h0M1711.4 755.5h0M1720.2 755.5h0M1729.0 755.5h0M1737.8 755.5h0M1746.6 755.5h0M1755.4 755.5h0M1808.7 755.5h0M1816.9 755.5h0M1825.0 755.5h0M1833.2 755.5h0M1841.4 755.5h0M1849.5 755.5h0M1857.7 755.5h0M1865.9 755.5h0M1874.0 755.5h0M1882.2 755.5h0M1638.0 764.9h0M1646.1 764.9h0M1654.3 764.9h0M1662.4 764.9h0M1670.5 764.9h0M1678.7 764.9h0M1686.8 764.9h0M1694.9 764.9h0M1706.8 764.9h0M1715.3 764.9h0M1723.9 764.9h0M1732.4 764.9h0M1741.0 764.9h0M1749.5 764.9h0M1758.0 764.9h0M1766.6 764.9h0M1775.1 764.9h0M1783.7 764.9h0M1792.2 764.9h0M1800.8 764.9h0M1809.3 764.9h0M1817.9 764.9h0M1826.4 764.9h0M1835.0 764.9h0M1843.5 764.9h0M1852.1 764.9h0M1860.6 764.9h0M1869.2 764.9h0M1628.5 773.2h0M1636.7 773.2h0M1644.8 773.2h0M1652.9 773.2h0M1661.0 773.2h0M1669.2 773.2h0M1677.3 773.2h0M1685.4 773.2h0M1703.2 773.2h0M1711.6 773.2h0M1720.1 773.2h0M1728.5 773.2h0M1736.9 773.2h0M1745.4 773.2h0M1753.8 773.2h0M1762.2 773.2h0M1770.6 773.2h0M1779.1 773.2h0M1787.5 773.2h0M1795.9 773.2h0M1804.4 773.2h0M1812.8 773.2h0M1821.2 773.2h0M1829.7 773.2h0M1838.1 773.2h0M1846.5 773.2h0M1854.9 773.2h0M1621.4 781.5h0M1629.7 781.5h0M1638.0 781.5h0M1646.3 781.5h0M1654.6 781.5h0M1662.9 781.5h0M1671.2 781.5h0M1679.5 781.5h0M1697.3 781.5h0M1705.7 781.5h0M1714.1 781.5h0M1722.5 781.5h0M1730.9 781.5h0M1739.4 781.5h0M1747.8 781.5h0M1756.2 781.5h0M1764.6 781.5h0M1773.0 781.5h0M1781.4 781.5h0M1789.9 781.5h0M1798.3 781.5h0M1806.7 781.5h0M1815.1 781.5h0M1823.5 781.5h0M1831.9 781.5h0M1840.4 781.5h0M1848.8 781.5h0M1857.2 781.5h0M1865.6 781.5h0M1614.3 791.0h0M1623.1 791.0h0M1631.9 791.0h0M1640.7 791.0h0M1649.5 791.0h0M1658.3 791.0h0M1667.1 791.0h0M1675.9 791.0h0M1694.9 791.0h0M1703.4 791.0h0M1712.0 791.0h0M1720.5 791.0h0M1729.0 791.0h0M1737.5 791.0h0M1746.1 791.0h0M1754.6 791.0h0M1763.1 791.0h0M1771.6 791.0h0M1780.1 791.0h0M1788.7 791.0h0M1797.2 791.0h0M1805.7 791.0h0M1814.2 791.0h0M1822.8 791.0h0M1831.3 791.0h0M1839.8 791.0h0M1848.3 791.0h0M1856.9 791.0h0M1865.4 791.0h0M1873.9 791.0h0M1609.6 799.3h0M1618.7 799.3h0M1627.9 799.3h0M1637.0 799.3h0M1646.1 799.3h0M1655.3 799.3h0M1664.4 799.3h0M1673.6 799.3h0M1691.4 799.3h0M1699.8 799.3h0M1708.3 799.3h0M1716.8 799.3h0M1725.3 799.3h0M1733.8 799.3h0M1742.2 799.3h0M1750.7 799.3h0M1759.2 799.3h0M1767.7 799.3h0M1776.2 799.3h0M1784.6 799.3h0M1793.1 799.3h0M1801.6 799.3h0M1811.1 799.3h0M1820.1 799.3h0M1829.0 799.3h0M1838.0 799.3h0M1847.0 799.3h0M1856.0 799.3h0M1864.9 799.3h0M1873.9 799.3h0M1603.6 807.6h0M1611.8 807.6h0M1619.9 807.6h0M1628.1 807.6h0M1636.2 807.6h0M1644.4 807.6h0M1652.5 807.6h0M1660.7 807.6h0M1668.8 807.6h0M1689.0 807.6h0M1697.3 807.6h0M1705.6 807.6h0M1713.9 807.6h0M1722.2 807.6h0M1730.5 807.6h0M1738.8 807.6h0M1747.1 807.6h0M1755.4 807.6h0M1763.7 807.6h0M1772.0 807.6h0M1780.3 807.6h0M1788.6 807.6h0M1796.9 807.6h0M1811.1 807.6h0M1819.2 807.6h0M1827.4 807.6h0M1835.5 807.6h0M1843.7 807.6h0M1851.8 807.6h0M1860.0 807.6h0M1868.1 807.6h0M1876.3 807.6h0M1598.9 816.6h0M1607.5 816.6h0M1616.1 816.6h0M1624.7 816.6h0M1633.3 816.6h0M1641.9 816.6h0M1650.5 816.6h0M1659.1 816.6h0M1667.6 816.6h0M1687.8 816.6h0M1696.4 816.6h0M1705.0 816.6h0M1713.6 816.6h0M1722.2 816.6h0M1730.8 816.6h0M1739.4 816.6h0M1748.0 816.6h0M1756.6 816.6h0M1765.1 816.6h0M1773.7 816.6h0M1782.3 816.6h0M1790.9 816.6h0M1808.7 816.6h0M1816.9 816.6h0M1825.0 816.6h0M1833.2 816.6h0M1841.3 816.6h0M1849.5 816.6h0M1857.6 816.6h0M1865.8 816.6h0M1873.9 816.6h0M1595.3 825.4h0M1604.4 825.4h0M1613.4 825.4h0M1622.5 825.4h0M1631.5 825.4h0M1640.5 825.4h0M1649.6 825.4h0M1658.6 825.4h0M1667.6 825.4h0M1689.0 825.4h0M1697.3 825.4h0M1705.6 825.4h0M1713.9 825.4h0M1722.2 825.4h0M1730.5 825.4h0M1738.8 825.4h0M1747.1 825.4h0M1755.4 825.4h0M1763.7 825.4h0M1772.0 825.4h0M1780.3 825.4h0M1788.6 825.4h0M1817.0 825.4h0M1824.9 825.4h0M1832.8 825.4h0M1840.7 825.4h0M1848.6 825.4h0M1856.5 825.4h0M1864.4 825.4h0M1593.0 833.7h0M1601.3 833.7h0M1609.6 833.7h0M1617.9 833.7h0M1626.2 833.7h0M1634.5 833.7h0M1642.8 833.7h0M1651.1 833.7h0M1659.3 833.7h0M1667.6 833.7h0M1689.0 833.7h0M1697.9 833.7h0M1706.9 833.7h0M1715.8 833.7h0M1724.8 833.7h0M1733.7 833.7h0M1742.6 833.7h0M1751.6 833.7h0M1760.5 833.7h0M1769.5 833.7h0M1778.4 833.7h0M1787.4 833.7h0M1830.0 833.7h0M1841.9 833.7h0M1589.4 843.2h0M1598.2 843.2h0M1607.1 843.2h0M1615.9 843.2h0M1624.7 843.2h0M1633.5 843.2h0M1642.4 843.2h0M1651.2 843.2h0M1660.0 843.2h0M1668.8 843.2h0M1689.0 843.2h0M1697.3 843.2h0M1705.6 843.2h0M1713.9 843.2h0M1722.2 843.2h0M1730.5 843.2h0M1738.8 843.2h0M1747.1 843.2h0M1755.4 843.2h0M1763.7 843.2h0M1772.0 843.2h0M1780.3 843.2h0M1788.6 843.2h0M1587.0 851.5h0M1596.0 851.5h0M1605.0 851.5h0M1613.9 851.5h0M1622.9 851.5h0M1631.8 851.5h0M1640.8 851.5h0M1649.7 851.5h0M1658.7 851.5h0M1667.6 851.5h0M1690.2 851.5h0M1699.1 851.5h0M1708.1 851.5h0M1717.0 851.5h0M1725.9 851.5h0M1734.9 851.5h0M1743.8 851.5h0M1752.8 851.5h0M1761.7 851.5h0M1770.7 851.5h0M1779.6 851.5h0M1788.6 851.5h0M1849.0 851.5h0M1858.5 851.5h0M1868.0 851.5h0M1585.9 859.8h0M1594.2 859.8h0M1602.4 859.8h0M1610.7 859.8h0M1619.0 859.8h0M1627.3 859.8h0M1635.6 859.8h0M1643.9 859.8h0M1652.2 859.8h0M1660.5 859.8h0M1668.8 859.8h0M1691.4 859.8h0M1700.1 859.8h0M1708.8 859.8h0M1717.5 859.8h0M1726.3 859.8h0M1735.0 859.8h0M1743.7 859.8h0M1752.5 859.8h0M1761.2 859.8h0M1769.9 859.8h0M1778.6 859.8h0M1787.4 859.8h0M1821.7 859.8h0M1831.0 859.8h0M1840.2 859.8h0M1849.5 859.8h0M1858.7 859.8h0M1868.0 859.8h0M1584.7 868.1h0M1593.2 868.1h0M1601.8 868.1h0M1610.4 868.1h0M1618.9 868.1h0M1627.5 868.1h0M1636.0 868.1h0M1644.6 868.1h0M1653.2 868.1h0M1661.7 868.1h0M1693.7 868.1h0M1702.6 868.1h0M1711.5 868.1h0M1720.4 868.1h0M1729.3 868.1h0M1738.2 868.1h0M1747.1 868.1h0M1761.3 868.1h0M1770.2 868.1h0M1779.1 868.1h0M1788.0 868.1h0M1796.9 868.1h0M1805.7 868.1h0M1814.6 868.1h0M1823.5 868.1h0M1832.4 868.1h0M1841.3 868.1h0M1850.2 868.1h0M1859.1 868.1h0M1868.0 868.1h0M1583.5 876.4h0M1591.6 876.4h0M1599.8 876.4h0M1607.9 876.4h0M1616.1 876.4h0M1624.2 876.4h0M1632.4 876.4h0M1640.5 876.4h0M1648.7 876.4h0M1697.3 876.4h0M1705.4 876.4h0M1713.5 876.4h0M1721.7 876.4h0M1729.8 876.4h0M1737.9 876.4h0M1746.1 876.4h0M1754.2 876.4h0M1768.4 876.4h0M1776.7 876.4h0M1785.0 876.4h0M1793.3 876.4h0M1801.6 876.4h0M1809.9 876.4h0M1818.2 876.4h0M1826.5 876.4h0M1834.8 876.4h0M1843.1 876.4h0M1851.4 876.4h0M1859.7 876.4h0M1868.0 876.4h0M1582.3 885.9h0M1591.0 885.9h0M1599.7 885.9h0M1608.4 885.9h0M1617.1 885.9h0M1625.8 885.9h0M1634.5 885.9h0M1702.0 885.9h0M1710.2 885.9h0M1718.3 885.9h0M1726.4 885.9h0M1734.5 885.9h0M1742.7 885.9h0M1750.8 885.9h0M1758.9 885.9h0M1775.5 885.9h0M1784.3 885.9h0M1793.1 885.9h0M1801.8 885.9h0M1810.6 885.9h0M1819.4 885.9h0M1828.1 885.9h0M1836.9 885.9h0M1845.7 885.9h0M1854.5 885.9h0M1863.2 885.9h0M1582.3 894.2h0M1590.2 894.2h0M1598.1 894.2h0M1606.0 894.2h0M1613.9 894.2h0M1621.8 894.2h0M1629.7 894.2h0M1706.8 894.2h0M1714.9 894.2h0M1723.0 894.2h0M1731.1 894.2h0M1739.3 894.2h0M1747.4 894.2h0M1755.5 894.2h0M1763.7 894.2h0M1799.2 894.2h0M1808.2 894.2h0M1817.2 894.2h0M1826.2 894.2h0M1835.1 894.2h0M1844.1 894.2h0M1853.1 894.2h0M1862.1 894.2h0M1582.3 902.4h0M1590.4 902.4h0M1598.5 902.4h0M1606.6 902.4h0M1614.7 902.4h0M1622.8 902.4h0M1630.9 902.4h0M1716.2 902.4h0M1725.3 902.4h0M1734.4 902.4h0M1743.5 902.4h0M1752.6 902.4h0M1761.7 902.4h0M1770.8 902.4h0M1820.6 902.4h0M1829.5 902.4h0M1838.3 902.4h0M1847.2 902.4h0M1856.1 902.4h0M1582.3 910.7h0M1590.4 910.7h0M1598.5 910.7h0M1606.6 910.7h0M1614.7 910.7h0M1622.8 910.7h0M1630.9 910.7h0M1721.0 910.7h0M1729.5 910.7h0M1737.9 910.7h0M1746.4 910.7h0M1754.9 910.7h0M1763.3 910.7h0M1771.8 910.7h0M1780.3 910.7h0M1825.3 910.7h0M1833.2 910.7h0M1841.1 910.7h0M1849.0 910.7h0M1582.3 920.2h0M1590.4 920.2h0M1598.5 920.2h0M1606.6 920.2h0M1614.7 920.2h0M1622.8 920.2h0M1630.9 920.2h0M1725.7 920.2h0M1734.9 920.2h0M1744.0 920.2h0M1753.2 920.2h0M1762.3 920.2h0M1771.5 920.2h0M1780.6 920.2h0M1789.7 920.2h0M1582.3 928.5h0M1590.4 928.5h0M1598.5 928.5h0M1606.6 928.5h0M1614.7 928.5h0M1622.8 928.5h0M1630.9 928.5h0M1730.5 928.5h0M1738.8 928.5h0M1747.1 928.5h0M1755.4 928.5h0M1763.7 928.5h0M1772.0 928.5h0M1780.3 928.5h0M1788.6 928.5h0M1796.9 928.5h0M1583.5 936.8h0M1592.0 936.8h0M1600.4 936.8h0M1608.9 936.8h0M1617.4 936.8h0M1625.8 936.8h0M1634.3 936.8h0M1642.8 936.8h0M1651.2 936.8h0M1659.7 936.8h0M1668.2 936.8h0M1676.6 936.8h0M1685.1 936.8h0M1693.6 936.8h0M1702.0 936.8h0M1735.2 936.8h0M1743.5 936.8h0M1751.8 936.8h0M1760.1 936.8h0M1768.4 936.8h0M1776.7 936.8h0M1785.0 936.8h0M1793.3 936.8h0M1801.6 936.8h0M1585.9 945.1h0M1594.5 945.1h0M1603.1 945.1h0M1611.8 945.1h0M1620.4 945.1h0M1629.0 945.1h0M1637.7 945.1h0M1646.3 945.1h0M1654.9 945.1h0M1663.6 945.1h0M1672.2 945.1h0M1680.9 945.1h0M1689.5 945.1h0M1698.1 945.1h0M1706.8 945.1h0M1740.0 945.1h0M1748.1 945.1h0M1756.3 945.1h0M1764.4 945.1h0M1772.6 945.1h0M1780.7 945.1h0M1788.9 945.1h0M1797.0 945.1h0M1805.2 945.1h0M1588.2 953.4h0M1596.9 953.4h0M1605.7 953.4h0M1614.4 953.4h0M1623.1 953.4h0M1631.8 953.4h0M1640.6 953.4h0M1649.3 953.4h0M1658.0 953.4h0M1666.7 953.4h0M1675.4 953.4h0M1684.2 953.4h0M1692.9 953.4h0M1701.6 953.4h0M1710.3 953.4h0M1747.1 953.4h0M1755.9 953.4h0M1764.7 953.4h0M1773.5 953.4h0M1782.3 953.4h0M1791.1 953.4h0M1799.9 953.4h0M1808.7 953.4h0M1590.6 962.9h0M1599.2 962.9h0M1607.9 962.9h0M1616.5 962.9h0M1625.1 962.9h0M1633.8 962.9h0M1642.4 962.9h0M1651.1 962.9h0M1659.7 962.9h0M1668.3 962.9h0M1677.0 962.9h0M1685.6 962.9h0M1694.2 962.9h0M1702.9 962.9h0M1711.5 962.9h0M1753.0 962.9h0M1761.3 962.9h0M1769.6 962.9h0M1777.9 962.9h0M1786.2 962.9h0M1794.5 962.9h0M1802.8 962.9h0M1811.1 962.9h0M1593.0 971.2h0M1601.3 971.2h0M1609.7 971.2h0M1618.1 971.2h0M1626.5 971.2h0M1634.9 971.2h0M1643.3 971.2h0M1651.6 971.2h0M1660.0 971.2h0M1668.4 971.2h0M1676.8 971.2h0M1685.2 971.2h0M1693.6 971.2h0M1701.9 971.2h0M1710.3 971.2h0M1760.1 971.2h0M1768.8 971.2h0M1777.5 971.2h0M1786.2 971.2h0M1794.9 971.2h0M1803.6 971.2h0M1812.3 971.2h0M1598.5 981.3h0M1607.3 981.3h0M1616.1 981.3h0M1624.9 981.3h0M1633.6 981.3h0M1642.4 981.3h0M1651.2 981.3h0M1659.9 981.3h0M1668.7 981.3h0M1677.5 981.3h0M1686.3 981.3h0M1763.2 981.3h0M1771.1 981.3h0M1779.0 981.3h0M1786.9 981.3h0M1794.8 981.3h0M1802.7 981.3h0M1810.6 981.3h0M1603.3 989.6h0M1611.4 989.6h0M1619.5 989.6h0M1627.7 989.6h0M1635.8 989.6h0M1643.9 989.6h0M1652.0 989.6h0M1660.2 989.6h0M1765.6 989.6h0M1774.6 989.6h0M1783.6 989.6h0M1792.6 989.6h0M1801.6 989.6h0M1810.6 989.6h0M1606.8 997.9h0M1615.7 997.9h0M1624.6 997.9h0M1633.5 997.9h0M1642.4 997.9h0M1651.3 997.9h0M1660.2 997.9h0M1769.1 997.9h0M1777.2 997.9h0M1785.2 997.9h0M1793.3 997.9h0M1801.4 997.9h0M1809.4 997.9h0M1611.6 1006.2h0M1619.9 1006.2h0M1628.2 1006.2h0M1636.5 1006.2h0M1644.8 1006.2h0M1653.1 1006.2h0M1661.4 1006.2h0M1771.5 1006.2h0M1781.0 1006.2h0M1790.5 1006.2h0M1799.9 1006.2h0M1809.4 1006.2h0M1615.1 1015.7h0M1623.4 1015.7h0M1631.7 1015.7h0M1640.0 1015.7h0M1648.3 1015.7h0M1656.6 1015.7h0M1664.9 1015.7h0M1772.7 1015.7h0M1781.6 1015.7h0M1790.5 1015.7h0M1799.3 1015.7h0M1808.2 1015.7h0M1619.9 1024.0h0M1628.0 1024.0h0M1636.1 1024.0h0M1644.2 1024.0h0M1652.3 1024.0h0M1660.4 1024.0h0M1668.5 1024.0h0M1773.9 1024.0h0M1781.6 1024.0h0M1789.3 1024.0h0M1797.0 1024.0h0M1804.7 1024.0h0M1624.6 1032.3h0M1632.9 1032.3h0M1641.2 1032.3h0M1649.5 1032.3h0M1657.8 1032.3h0M1666.1 1032.3h0M1674.4 1032.3h0M1775.0 1032.3h0M1784.1 1032.3h0M1793.2 1032.3h0M1802.3 1032.3h0M1628.2 1041.8h0M1637.1 1041.8h0M1646.0 1041.8h0M1654.8 1041.8h0M1663.7 1041.8h0M1672.6 1041.8h0M1681.5 1041.8h0M1690.4 1041.8h0M1699.3 1041.8h0M1776.2 1041.8h0M1783.7 1041.8h0M1791.2 1041.8h0M1798.8 1041.8h0M1631.7 1050.1h0M1640.7 1050.1h0M1649.6 1050.1h0M1658.6 1050.1h0M1667.5 1050.1h0M1676.5 1050.1h0M1685.4 1050.1h0M1694.3 1050.1h0M1703.3 1050.1h0M1712.2 1050.1h0M1721.2 1050.1h0M1730.1 1050.1h0M1775.0 1050.1h0M1785.7 1050.1h0M1796.4 1050.1h0M1636.5 1058.4h0M1644.8 1058.4h0M1653.1 1058.4h0M1661.4 1058.4h0M1669.7 1058.4h0M1678.0 1058.4h0M1686.3 1058.4h0M1694.6 1058.4h0M1702.9 1058.4h0M1711.2 1058.4h0M1719.4 1058.4h0M1727.7 1058.4h0M1736.0 1058.4h0M1773.9 1058.4h0M1783.3 1058.4h0M1792.8 1058.4h0M1638.8 1067.8h0M1647.8 1067.8h0M1656.7 1067.8h0M1665.7 1067.8h0M1674.6 1067.8h0M1683.6 1067.8h0M1692.5 1067.8h0M1701.5 1067.8h0M1710.4 1067.8h0M1719.3 1067.8h0M1728.3 1067.8h0M1737.2 1067.8h0M1773.9 1067.8h0M1780.4 1067.8h0M1786.9 1067.8h0M1643.6 1076.1h0M1652.1 1076.1h0M1660.6 1076.1h0M1669.1 1076.1h0M1677.6 1076.1h0M1686.1 1076.1h0M1694.7 1076.1h0M1703.2 1076.1h0M1711.7 1076.1h0M1720.2 1076.1h0M1728.7 1076.1h0M1737.2 1076.1h0M1772.7 1076.1h0M1782.2 1076.1h0M1647.1 1084.4h0M1656.0 1084.4h0M1664.9 1084.4h0M1673.8 1084.4h0M1682.7 1084.4h0M1691.6 1084.4h0M1700.5 1084.4h0M1709.4 1084.4h0M1718.3 1084.4h0M1727.2 1084.4h0M1736.0 1084.4h0M1773.9 1084.4h0M1649.5 1092.7h0M1658.2 1092.7h0M1666.8 1092.7h0M1675.5 1092.7h0M1684.1 1092.7h0M1692.8 1092.7h0M1701.4 1092.7h0M1710.1 1092.7h0M1718.7 1092.7h0M1727.4 1092.7h0M1736.0 1092.7h0M1653.1 1102.2h0M1662.0 1102.2h0M1671.0 1102.2h0M1679.9 1102.2h0M1688.9 1102.2h0M1697.8 1102.2h0M1706.8 1102.2h0M1715.8 1102.2h0M1724.7 1102.2h0M1733.7 1102.2h0M1656.6 1110.5h0M1664.9 1110.5h0M1673.2 1110.5h0M1681.5 1110.5h0M1689.8 1110.5h0M1698.1 1110.5h0M1706.4 1110.5h0M1714.7 1110.5h0M1723.0 1110.5h0M1731.3 1110.5h0M1657.8 1118.8h0M1666.7 1118.8h0M1675.6 1118.8h0M1684.5 1118.8h0M1693.4 1118.8h0M1702.3 1118.8h0M1711.2 1118.8h0M1720.0 1118.8h0M1728.9 1118.8h0M1663.7 1128.3h0M1672.5 1128.3h0M1681.3 1128.3h0M1690.2 1128.3h0M1699.0 1128.3h0M1707.8 1128.3h0M1716.6 1128.3h0M1725.4 1128.3h0M1689.8 1136.6h0M1697.5 1136.6h0M1705.2 1136.6h0M1712.9 1136.6h0M1720.6 1136.6h0" stroke="#8e4414" stroke-width="7.0" stroke-linecap="round" fill="none"/>
<path d="M1337.0 757.8h0M1327.0 766.6h0M1335.6 766.6h0M1318.5 775.4h0M1327.1 775.4h0M1335.7 775.4h0M1361.9 775.4h0M1307.4 784.2h0M1316.0 784.2h0M1324.6 784.2h0M1333.2 784.2h0M1341.8 784.2h0M1350.4 784.2h0M1359.0 784.2h0M1297.9 793.0h0M1306.5 793.0h0M1315.1 793.0h0M1323.7 793.0h0M1332.3 793.0h0M1340.9 793.0h0M1349.5 793.0h0M1358.1 793.0h0M1289.7 801.8h0M1298.3 801.8h0M1306.9 801.8h0M1315.5 801.8h0M1324.1 801.8h0M1332.7 801.8h0M1341.3 801.8h0M1349.9 801.8h0M1358.5 801.8h0M1285.2 810.6h0M1293.8 810.6h0M1302.4 810.6h0M1311.0 810.6h0M1319.6 810.6h0M1328.2 810.6h0M1336.8 810.6h0M1345.4 810.6h0M1354.0 810.6h0M1281.9 819.4h0M1290.5 819.4h0M1299.1 819.4h0M1307.7 819.4h0M1316.3 819.4h0M1324.9 819.4h0M1333.5 819.4h0M1342.1 819.4h0M1350.7 819.4h0M1277.9 828.2h0M1286.5 828.2h0M1295.1 828.2h0M1303.7 828.2h0M1312.3 828.2h0M1320.9 828.2h0M1329.5 828.2h0M1338.1 828.2h0M1346.7 828.2h0M1272.5 837.0h0M1281.1 837.0h0M1289.7 837.0h0M1298.3 837.0h0M1306.9 837.0h0M1315.5 837.0h0M1324.1 837.0h0M1332.7 837.0h0M1341.3 837.0h0M1269.8 845.8h0M1278.4 845.8h0M1287.0 845.8h0M1295.6 845.8h0M1304.2 845.8h0M1312.8 845.8h0M1321.4 845.8h0M1330.0 845.8h0M1254.4 854.6h0M1263.0 854.6h0M1271.6 854.6h0M1280.2 854.6h0M1288.8 854.6h0M1297.4 854.6h0M1306.0 854.6h0M1314.6 854.6h0M1323.2 854.6h0M1235.1 863.4h0M1243.7 863.4h0M1252.3 863.4h0M1260.9 863.4h0M1269.5 863.4h0M1278.1 863.4h0M1286.7 863.4h0M1295.3 863.4h0M1303.9 863.4h0M1312.5 863.4h0M1206.4 872.2h0M1215.0 872.2h0M1223.6 872.2h0M1232.2 872.2h0M1240.8 872.2h0M1249.4 872.2h0M1258.0 872.2h0M1266.6 872.2h0M1275.2 872.2h0M1283.8 872.2h0M1292.4 872.2h0M1001.7 881.0h0M1010.3 881.0h0M1018.9 881.0h0M1027.5 881.0h0M1036.1 881.0h0M1044.7 881.0h0M1053.3 881.0h0M1061.9 881.0h0M1070.5 881.0h0M1079.1 881.0h0M1087.7 881.0h0M1096.3 881.0h0M1104.9 881.0h0M1113.5 881.0h0M1122.1 881.0h0M1130.7 881.0h0M1139.3 881.0h0M1147.9 881.0h0M1156.5 881.0h0M1165.1 881.0h0M1173.7 881.0h0M1182.3 881.0h0M1190.9 881.0h0M1199.5 881.0h0M1208.1 881.0h0M1216.7 881.0h0M1225.3 881.0h0M1233.9 881.0h0M1242.5 881.0h0M1251.1 881.0h0M1259.7 881.0h0M1268.3 881.0h0M982.8 889.8h0M991.4 889.8h0M1000.0 889.8h0M1008.6 889.8h0M1017.2 889.8h0M1025.8 889.8h0M1034.4 889.8h0M1043.0 889.8h0M1051.6 889.8h0M1060.2 889.8h0M1068.8 889.8h0M1077.4 889.8h0M1086.0 889.8h0M1094.6 889.8h0M1103.2 889.8h0M1111.8 889.8h0M1120.4 889.8h0M1129.0 889.8h0M1137.6 889.8h0M1146.2 889.8h0M1154.8 889.8h0M1163.4 889.8h0M1172.0 889.8h0M1180.6 889.8h0M1189.2 889.8h0M1197.8 889.8h0M1206.4 889.8h0M1215.0 889.8h0M1223.6 889.8h0M1232.2 889.8h0M1240.8 889.8h0M1249.4 889.8h0M969.3 898.6h0M977.9 898.6h0M986.5 898.6h0M995.1 898.6h0M1003.7 898.6h0M1012.3 898.6h0M1020.9 898.6h0M1029.5 898.6h0M1038.1 898.6h0M1046.7 898.6h0M1055.3 898.6h0M1063.9 898.6h0M1072.5 898.6h0M1081.1 898.6h0M1089.7 898.6h0M1098.3 898.6h0M1106.9 898.6h0M1115.5 898.6h0M1124.1 898.6h0M1132.7 898.6h0M1141.3 898.6h0M1149.9 898.6h0M1158.5 898.6h0M1167.1 898.6h0M1175.7 898.6h0M1184.3 898.6h0M1192.9 898.6h0M1201.5 898.6h0M1210.1 898.6h0M1218.7 898.6h0M1227.3 898.6h0M959.8 907.4h0M968.4 907.4h0M977.0 907.4h0M985.6 907.4h0M994.2 907.4h0M1002.8 907.4h0M1011.4 907.4h0M1020.0 907.4h0M1028.6 907.4h0M1037.2 907.4h0M1098.8 907.4h0M1107.4 907.4h0M1116.0 907.4h0M1124.6 907.4h0M1133.2 907.4h0M1141.8 907.4h0M1150.4 907.4h0M1159.0 907.4h0M1167.6 907.4h0M1176.2 907.4h0M1184.8 907.4h0M1193.4 907.4h0M952.2 916.2h0M960.8 916.2h0M969.4 916.2h0M978.0 916.2h0M986.6 916.2h0M995.2 916.2h0M1003.8 916.2h0M1012.4 916.2h0M1021.0 916.2h0M944.7 925.0h0M953.3 925.0h0M961.9 925.0h0M970.5 925.0h0M979.1 925.0h0M987.7 925.0h0M996.3 925.0h0M939.5 933.8h0M948.1 933.8h0M956.7 933.8h0M965.3 933.8h0M973.9 933.8h0M982.5 933.8h0M937.3 942.6h0M945.9 942.6h0M954.5 942.6h0M963.1 942.6h0M971.7 942.6h0M933.1 951.4h0M941.7 951.4h0M950.3 951.4h0M958.9 951.4h0M967.5 951.4h0M936.0 960.2h0M944.6 960.2h0M953.2 960.2h0M961.8 960.2h0M936.0 969.0h0M944.6 969.0h0M953.2 969.0h0M961.8 969.0h0M936.0 977.8h0M944.6 977.8h0M953.2 977.8h0M961.8 977.8h0M933.9 986.6h0M942.5 986.6h0M951.1 986.6h0M959.7 986.6h0M968.3 986.6h0M938.9 995.4h0M947.5 995.4h0M956.1 995.4h0M964.7 995.4h0M973.3 995.4h0M941.9 1004.2h0M950.5 1004.2h0M959.1 1004.2h0M967.7 1004.2h0M976.3 1004.2h0M984.9 1004.2h0M993.5 1004.2h0M1002.1 1004.2h0M1010.7 1004.2h0M1019.3 1004.2h0M1027.9 1004.2h0M1036.5 1004.2h0M1045.1 1004.2h0M1053.7 1004.2h0M1062.3 1004.2h0M1070.9 1004.2h0M1079.5 1004.2h0M1088.1 1004.2h0M1096.7 1004.2h0M1105.3 1004.2h0M1113.9 1004.2h0M951.9 1013.0h0M960.5 1013.0h0M969.1 1013.0h0M977.7 1013.0h0M986.3 1013.0h0M994.9 1013.0h0M1003.5 1013.0h0M1012.1 1013.0h0M1020.7 1013.0h0M1029.3 1013.0h0M1037.9 1013.0h0M1046.5 1013.0h0M1055.1 1013.0h0M1063.7 1013.0h0M1072.3 1013.0h0M1080.9 1013.0h0M1089.5 1013.0h0M1098.1 1013.0h0M1106.7 1013.0h0M1115.3 1013.0h0M1123.9 1013.0h0M959.8 1021.8h0M968.4 1021.8h0M977.0 1021.8h0M985.6 1021.8h0M994.2 1021.8h0M1002.8 1021.8h0M1011.4 1021.8h0M1020.0 1021.8h0M1028.6 1021.8h0M1037.2 1021.8h0M1045.8 1021.8h0M1054.4 1021.8h0M1063.0 1021.8h0M1071.6 1021.8h0M1080.2 1021.8h0M1088.8 1021.8h0M1097.4 1021.8h0M1106.0 1021.8h0M1114.6 1021.8h0M1123.2 1021.8h0M1131.8 1021.8h0M971.2 1030.6h0M979.8 1030.6h0M988.4 1030.6h0M997.0 1030.6h0M1005.6 1030.6h0M1014.2 1030.6h0M1022.8 1030.6h0M1031.4 1030.6h0M1040.0 1030.6h0M1048.6 1030.6h0M1057.2 1030.6h0M1065.8 1030.6h0M1074.4 1030.6h0M1083.0 1030.6h0M1091.6 1030.6h0M1100.2 1030.6h0M1108.8 1030.6h0M1117.4 1030.6h0M1126.0 1030.6h0M1134.6 1030.6h0M983.1 1039.4h0M991.7 1039.4h0M1000.3 1039.4h0M1008.9 1039.4h0M1017.5 1039.4h0M1026.1 1039.4h0M1034.7 1039.4h0M1043.3 1039.4h0M1051.9 1039.4h0M1060.5 1039.4h0M1069.1 1039.4h0M1077.7 1039.4h0M1086.3 1039.4h0M1094.9 1039.4h0M1103.5 1039.4h0M1112.1 1039.4h0M1120.7 1039.4h0M1129.3 1039.4h0M1137.9 1039.4h0M997.8 1048.2h0M1006.4 1048.2h0M1015.0 1048.2h0M1023.6 1048.2h0M1032.2 1048.2h0M1040.8 1048.2h0M1049.4 1048.2h0M1058.0 1048.2h0M1066.6 1048.2h0M1075.2 1048.2h0M1083.8 1048.2h0M1092.4 1048.2h0M1101.0 1048.2h0M1109.6 1048.2h0M1118.2 1048.2h0M1126.8 1048.2h0M1135.4 1048.2h0M1004.8 1057.0h0M1013.4 1057.0h0M1022.0 1057.0h0M1030.6 1057.0h0M1039.2 1057.0h0M1047.8 1057.0h0M1056.4 1057.0h0M1065.0 1057.0h0M1073.6 1057.0h0M1082.2 1057.0h0M1090.8 1057.0h0M1099.4 1057.0h0M1108.0 1057.0h0M1116.6 1057.0h0M1125.2 1057.0h0M1133.8 1057.0h0M1005.5 1065.8h0M1014.1 1065.8h0M1022.7 1065.8h0M1031.3 1065.8h0M1039.9 1065.8h0M1048.5 1065.8h0M1100.0 1065.8h0M1108.6 1065.8h0M1117.2 1065.8h0M1125.8 1065.8h0M1134.4 1065.8h0M1005.8 1074.6h0M1014.4 1074.6h0M1023.0 1074.6h0M1031.6 1074.6h0M1040.2 1074.6h0M1048.8 1074.6h0M1111.2 1074.6h0M1119.8 1074.6h0M1128.4 1074.6h0M1007.3 1083.4h0M1015.9 1083.4h0M1024.5 1083.4h0M1033.1 1083.4h0M1041.7 1083.4h0M1050.3 1083.4h0M1121.2 1083.4h0M1010.4 1092.2h0M1019.0 1092.2h0M1027.6 1092.2h0M1036.2 1092.2h0M1044.8 1092.2h0M1053.4 1092.2h0M1062.0 1092.2h0M1011.3 1101.0h0M1019.9 1101.0h0M1028.5 1101.0h0M1037.1 1101.0h0M1045.7 1101.0h0M1054.3 1101.0h0M1062.9 1101.0h0M1071.5 1101.0h0M1080.1 1101.0h0M1019.3 1109.8h0M1027.9 1109.8h0M1036.5 1109.8h0M1045.1 1109.8h0M1053.7 1109.8h0M1062.3 1109.8h0M1070.9 1109.8h0M1079.5 1109.8h0M1088.1 1109.8h0M1096.7 1109.8h0M1027.9 1118.6h0M1036.5 1118.6h0M1045.1 1118.6h0M1053.7 1118.6h0M1062.3 1118.6h0M1070.9 1118.6h0M1079.5 1118.6h0M1088.1 1118.6h0M1096.7 1118.6h0M1105.3 1118.6h0M1113.9 1118.6h0M1041.7 1127.4h0M1050.3 1127.4h0M1058.9 1127.4h0M1067.5 1127.4h0M1076.1 1127.4h0M1084.7 1127.4h0M1093.3 1127.4h0M1101.9 1127.4h0M1110.5 1127.4h0M1119.1 1127.4h0M1054.7 1136.2h0M1063.3 1136.2h0M1071.9 1136.2h0M1080.5 1136.2h0M1089.1 1136.2h0M1097.7 1136.2h0M1106.3 1136.2h0M1114.9 1136.2h0M1123.5 1136.2h0M1065.8 1145.0h0M1074.4 1145.0h0M1083.0 1145.0h0M1091.6 1145.0h0M1100.2 1145.0h0M1108.8 1145.0h0M1117.4 1145.0h0M1126.0 1145.0h0M968.4 1153.8h0M977.0 1153.8h0M985.6 1153.8h0M994.2 1153.8h0M1070.8 1153.8h0M1079.4 1153.8h0M1088.0 1153.8h0M1096.6 1153.8h0M1105.2 1153.8h0M1113.8 1153.8h0M1122.4 1153.8h0M1131.0 1153.8h0M954.9 1162.6h0M963.5 1162.6h0M972.1 1162.6h0M980.7 1162.6h0M989.3 1162.6h0M997.9 1162.6h0M1077.7 1162.6h0M1086.3 1162.6h0M1094.9 1162.6h0M1103.5 1162.6h0M1112.1 1162.6h0M1120.7 1162.6h0M1129.3 1162.6h0M942.1 1171.4h0M950.7 1171.4h0M959.3 1171.4h0M967.9 1171.4h0M976.5 1171.4h0M985.1 1171.4h0M993.7 1171.4h0M1002.3 1171.4h0M1077.5 1171.4h0M1086.1 1171.4h0M1094.7 1171.4h0M1103.3 1171.4h0M1111.9 1171.4h0M1120.5 1171.4h0M1129.1 1171.4h0M925.0 1180.2h0M933.6 1180.2h0M942.2 1180.2h0M950.8 1180.2h0M959.4 1180.2h0M968.0 1180.2h0M976.6 1180.2h0M985.2 1180.2h0M993.8 1180.2h0M1002.4 1180.2h0M1011.0 1180.2h0M1074.5 1180.2h0M1083.1 1180.2h0M1091.7 1180.2h0M1100.3 1180.2h0M1108.9 1180.2h0M1117.5 1180.2h0M1126.1 1180.2h0M908.9 1189.0h0M917.5 1189.0h0M926.1 1189.0h0M934.7 1189.0h0M943.3 1189.0h0M951.9 1189.0h0M960.5 1189.0h0M969.1 1189.0h0M977.7 1189.0h0M986.3 1189.0h0M994.9 1189.0h0M1003.5 1189.0h0M1012.1 1189.0h0M1020.7 1189.0h0M1029.3 1189.0h0M1037.9 1189.0h0M1046.5 1189.0h0M1055.1 1189.0h0M1063.7 1189.0h0M1072.3 1189.0h0M1080.9 1189.0h0M1089.5 1189.0h0M1098.1 1189.0h0M1106.7 1189.0h0M1115.3 1189.0h0M1123.9 1189.0h0M897.9 1197.8h0M906.5 1197.8h0M915.1 1197.8h0M923.7 1197.8h0M932.3 1197.8h0M940.9 1197.8h0M949.5 1197.8h0M958.1 1197.8h0M966.7 1197.8h0M975.3 1197.8h0M983.9 1197.8h0M992.5 1197.8h0M1001.1 1197.8h0M1009.7 1197.8h0M1018.3 1197.8h0M1026.9 1197.8h0M1035.5 1197.8h0M1044.1 1197.8h0M1052.7 1197.8h0M1061.3 1197.8h0M1069.9 1197.8h0M1078.5 1197.8h0M1087.1 1197.8h0M1095.7 1197.8h0M1104.3 1197.8h0M1112.9 1197.8h0M1121.5 1197.8h0M897.7 1206.6h0M906.3 1206.6h0M914.9 1206.6h0M923.5 1206.6h0M932.1 1206.6h0M940.7 1206.6h0M949.3 1206.6h0M957.9 1206.6h0M966.5 1206.6h0M975.1 1206.6h0M983.7 1206.6h0M992.3 1206.6h0M1000.9 1206.6h0M1009.5 1206.6h0M1018.1 1206.6h0M1026.7 1206.6h0M1035.3 1206.6h0M1043.9 1206.6h0M1052.5 1206.6h0M1061.1 1206.6h0M1069.7 1206.6h0M1078.3 1206.6h0M1086.9 1206.6h0M1095.5 1206.6h0M1104.1 1206.6h0M1112.7 1206.6h0M897.0 1215.4h0M905.6 1215.4h0M914.2 1215.4h0M922.8 1215.4h0M931.4 1215.4h0M940.0 1215.4h0M948.6 1215.4h0M957.2 1215.4h0M965.8 1215.4h0M974.4 1215.4h0M983.0 1215.4h0M991.6 1215.4h0M1000.2 1215.4h0M1008.8 1215.4h0M1017.4 1215.4h0M1026.0 1215.4h0M1034.6 1215.4h0M1043.2 1215.4h0M1051.8 1215.4h0M1060.4 1215.4h0M1069.0 1215.4h0M1077.6 1215.4h0M1086.2 1215.4h0M1094.8 1215.4h0M1103.4 1215.4h0M895.3 1224.2h0M903.9 1224.2h0M912.5 1224.2h0M921.1 1224.2h0M929.7 1224.2h0M938.3 1224.2h0M946.9 1224.2h0M955.5 1224.2h0M964.1 1224.2h0M972.7 1224.2h0M981.3 1224.2h0M989.9 1224.2h0M998.5 1224.2h0M1007.1 1224.2h0M1015.7 1224.2h0M1024.3 1224.2h0M1032.9 1224.2h0M1041.5 1224.2h0M1050.1 1224.2h0M1058.7 1224.2h0M1067.3 1224.2h0M1075.9 1224.2h0M1084.5 1224.2h0M1093.1 1224.2h0M891.4 1233.0h0M900.0 1233.0h0M908.6 1233.0h0M917.2 1233.0h0M925.8 1233.0h0M934.4 1233.0h0M943.0 1233.0h0M951.6 1233.0h0M960.2 1233.0h0M968.8 1233.0h0M977.4 1233.0h0M986.0 1233.0h0M994.6 1233.0h0M1003.2 1233.0h0M1011.8 1233.0h0M1020.4 1233.0h0M1029.0 1233.0h0M1037.6 1233.0h0M1046.2 1233.0h0M1054.8 1233.0h0M1063.4 1233.0h0M1072.0 1233.0h0M1080.6 1233.0h0M890.9 1241.8h0M899.5 1241.8h0M908.1 1241.8h0M916.7 1241.8h0M925.3 1241.8h0M933.9 1241.8h0M942.5 1241.8h0M951.1 1241.8h0M959.7 1241.8h0M968.3 1241.8h0M976.9 1241.8h0M985.5 1241.8h0M994.1 1241.8h0M1002.7 1241.8h0M1011.3 1241.8h0M1019.9 1241.8h0M1028.5 1241.8h0M1037.1 1241.8h0M1045.7 1241.8h0M1054.3 1241.8h0M888.9 1250.6h0M897.5 1250.6h0M906.1 1250.6h0M914.7 1250.6h0M923.3 1250.6h0M931.9 1250.6h0M940.5 1250.6h0M949.1 1250.6h0M886.3 1259.4h0M894.9 1259.4h0M903.5 1259.4h0M912.1 1259.4h0M920.7 1259.4h0M929.3 1259.4h0M937.9 1259.4h0M946.5 1259.4h0M883.7 1268.2h0M892.3 1268.2h0M900.9 1268.2h0M909.5 1268.2h0M918.1 1268.2h0M926.7 1268.2h0M935.3 1268.2h0M943.9 1268.2h0M885.5 1277.0h0M894.1 1277.0h0M902.7 1277.0h0M911.3 1277.0h0M919.9 1277.0h0M928.5 1277.0h0M937.1 1277.0h0M882.6 1285.8h0M891.2 1285.8h0M899.8 1285.8h0M908.4 1285.8h0M917.0 1285.8h0M925.6 1285.8h0M934.2 1285.8h0M880.6 1294.6h0M889.2 1294.6h0M897.8 1294.6h0M906.4 1294.6h0M915.0 1294.6h0M923.6 1294.6h0M932.2 1294.6h0M880.5 1303.4h0M889.1 1303.4h0M897.7 1303.4h0M906.3 1303.4h0M914.9 1303.4h0M923.5 1303.4h0M932.1 1303.4h0M940.7 1303.4h0M949.3 1303.4h0M957.9 1303.4h0M966.5 1303.4h0M975.1 1303.4h0M875.6 1312.2h0M884.2 1312.2h0M892.8 1312.2h0M901.4 1312.2h0M910.0 1312.2h0M918.6 1312.2h0M927.2 1312.2h0M935.8 1312.2h0M944.4 1312.2h0M953.0 1312.2h0M961.6 1312.2h0M970.2 1312.2h0M978.8 1312.2h0M987.4 1312.2h0M876.3 1321.0h0M884.9 1321.0h0M893.5 1321.0h0M902.1 1321.0h0M910.7 1321.0h0M919.3 1321.0h0M927.9 1321.0h0M936.5 1321.0h0M945.1 1321.0h0M953.7 1321.0h0M962.3 1321.0h0M970.9 1321.0h0M979.5 1321.0h0M988.1 1321.0h0M875.2 1329.8h0M883.8 1329.8h0M892.4 1329.8h0M901.0 1329.8h0M909.6 1329.8h0M918.2 1329.8h0M926.8 1329.8h0M935.4 1329.8h0M944.0 1329.8h0M952.6 1329.8h0M961.2 1329.8h0M969.8 1329.8h0M978.4 1329.8h0M987.0 1329.8h0M874.5 1338.6h0M883.1 1338.6h0M891.7 1338.6h0M900.3 1338.6h0M908.9 1338.6h0M917.5 1338.6h0M926.1 1338.6h0M934.7 1338.6h0M943.3 1338.6h0M951.9 1338.6h0M960.5 1338.6h0M969.1 1338.6h0M977.7 1338.6h0M986.3 1338.6h0M869.5 1347.4h0M878.1 1347.4h0M886.7 1347.4h0M895.3 1347.4h0M903.9 1347.4h0M912.5 1347.4h0M921.1 1347.4h0M929.7 1347.4h0M938.3 1347.4h0M946.9 1347.4h0M955.5 1347.4h0M964.1 1347.4h0M972.7 1347.4h0M981.3 1347.4h0M989.9 1347.4h0M1105.2 1250.5h0M1113.8 1250.5h0M1122.4 1250.5h0M1131.0 1250.5h0M1139.6 1250.5h0M1148.2 1250.5h0M1156.8 1250.5h0M1165.4 1250.5h0M1174.0 1250.5h0M1182.6 1250.5h0M1191.2 1250.5h0M1199.8 1250.5h0M1086.8 1259.3h0M1095.4 1259.3h0M1104.0 1259.3h0M1112.6 1259.3h0M1121.2 1259.3h0M1129.8 1259.3h0M1138.4 1259.3h0M1147.0 1259.3h0M1155.6 1259.3h0M1164.2 1259.3h0M1172.8 1259.3h0M1181.4 1259.3h0M1190.0 1259.3h0M1198.6 1259.3h0M1077.5 1268.1h0M1086.1 1268.1h0M1094.7 1268.1h0M1103.3 1268.1h0M1111.9 1268.1h0M1120.5 1268.1h0M1129.1 1268.1h0M1137.7 1268.1h0M1146.3 1268.1h0M1154.9 1268.1h0M1163.5 1268.1h0M1172.1 1268.1h0M1180.7 1268.1h0M1189.3 1268.1h0M1077.6 1276.9h0M1086.2 1276.9h0M1094.8 1276.9h0M1103.4 1276.9h0M1112.0 1276.9h0M1120.6 1276.9h0M1129.2 1276.9h0M1137.8 1276.9h0M1146.4 1276.9h0M1155.0 1276.9h0M1163.6 1276.9h0M1172.2 1276.9h0M1082.6 1285.7h0M1091.2 1285.7h0M1099.8 1285.7h0M1108.4 1285.7h0M1117.0 1285.7h0M1125.6 1285.7h0M1134.2 1285.7h0M1142.8 1285.7h0M1151.4 1285.7h0M1160.0 1285.7h0M1085.8 1294.5h0M1094.4 1294.5h0M1103.0 1294.5h0M1111.6 1294.5h0M1120.2 1294.5h0M1128.8 1294.5h0M1137.4 1294.5h0M1146.0 1294.5h0M1154.6 1294.5h0M1163.2 1294.5h0M1091.6 1303.3h0M1100.2 1303.3h0M1108.8 1303.3h0M1117.4 1303.3h0M1126.0 1303.3h0M1134.6 1303.3h0M1143.2 1303.3h0M1151.8 1303.3h0M1160.4 1303.3h0M1169.0 1303.3h0M1101.2 1312.1h0M1109.8 1312.1h0M1118.4 1312.1h0M1127.0 1312.1h0M1135.6 1312.1h0M1144.2 1312.1h0M1152.8 1312.1h0M1161.4 1312.1h0M1170.0 1312.1h0M1178.6 1312.1h0M1187.2 1312.1h0M1195.8 1312.1h0M1204.4 1312.1h0M1213.0 1312.1h0M1221.6 1312.1h0M1103.9 1320.9h0M1112.5 1320.9h0M1121.1 1320.9h0M1129.7 1320.9h0M1138.3 1320.9h0M1146.9 1320.9h0M1155.5 1320.9h0M1164.1 1320.9h0M1172.7 1320.9h0M1181.3 1320.9h0M1189.9 1320.9h0M1198.5 1320.9h0M1207.1 1320.9h0M1215.7 1320.9h0M1224.3 1320.9h0M1232.9 1320.9h0M1109.5 1329.7h0M1118.1 1329.7h0M1126.7 1329.7h0M1135.3 1329.7h0M1143.9 1329.7h0M1152.5 1329.7h0M1161.1 1329.7h0M1169.7 1329.7h0M1178.3 1329.7h0M1186.9 1329.7h0M1195.5 1329.7h0M1204.1 1329.7h0M1212.7 1329.7h0M1221.3 1329.7h0M1229.9 1329.7h0M1238.5 1329.7h0M1117.8 1338.5h0M1126.4 1338.5h0M1135.0 1338.5h0M1143.6 1338.5h0M1152.2 1338.5h0M1160.8 1338.5h0M1169.4 1338.5h0M1178.0 1338.5h0M1186.6 1338.5h0M1195.2 1338.5h0M1203.8 1338.5h0M1212.4 1338.5h0M1221.0 1338.5h0M1229.6 1338.5h0M1238.2 1338.5h0M1126.5 1347.3h0M1135.1 1347.3h0M1143.7 1347.3h0M1152.3 1347.3h0M1160.9 1347.3h0M1169.5 1347.3h0M1178.1 1347.3h0M1186.7 1347.3h0M1195.3 1347.3h0M1203.9 1347.3h0M1212.5 1347.3h0M1221.1 1347.3h0M1229.7 1347.3h0M1238.3 1347.3h0M1545.5 1165.3h0M1554.1 1165.3h0M1562.7 1165.3h0M1571.3 1165.3h0M1579.9 1165.3h0M1588.5 1165.3h0M1597.1 1165.3h0M1522.5 1174.1h0M1531.1 1174.1h0M1539.7 1174.1h0M1548.3 1174.1h0M1556.9 1174.1h0M1565.5 1174.1h0M1574.1 1174.1h0M1582.7 1174.1h0M1591.3 1174.1h0M1495.5 1182.9h0M1504.1 1182.9h0M1512.7 1182.9h0M1521.3 1182.9h0M1529.9 1182.9h0M1538.5 1182.9h0M1547.1 1182.9h0M1555.7 1182.9h0M1564.3 1182.9h0M1572.9 1182.9h0M1581.5 1182.9h0M1590.1 1182.9h0M1480.4 1191.7h0M1489.0 1191.7h0M1497.6 1191.7h0M1506.2 1191.7h0M1514.8 1191.7h0M1523.4 1191.7h0M1532.0 1191.7h0M1540.6 1191.7h0M1549.2 1191.7h0M1557.8 1191.7h0M1566.4 1191.7h0M1575.0 1191.7h0M1583.6 1191.7h0M1478.2 1200.5h0M1486.8 1200.5h0M1495.4 1200.5h0M1504.0 1200.5h0M1512.6 1200.5h0M1521.2 1200.5h0M1529.8 1200.5h0M1538.4 1200.5h0M1547.0 1200.5h0M1555.6 1200.5h0M1564.2 1200.5h0M1572.8 1200.5h0M1581.4 1200.5h0M1480.5 1209.3h0M1489.1 1209.3h0M1497.7 1209.3h0M1506.3 1209.3h0M1514.9 1209.3h0M1523.5 1209.3h0M1532.1 1209.3h0M1540.7 1209.3h0M1549.3 1209.3h0M1557.9 1209.3h0M1566.5 1209.3h0M1575.1 1209.3h0M1478.7 1218.1h0M1487.3 1218.1h0M1495.9 1218.1h0M1504.5 1218.1h0M1513.1 1218.1h0M1521.7 1218.1h0M1530.3 1218.1h0M1538.9 1218.1h0M1547.5 1218.1h0M1556.1 1218.1h0M1564.7 1218.1h0M1573.3 1218.1h0M1481.7 1226.9h0M1490.3 1226.9h0M1498.9 1226.9h0M1507.5 1226.9h0M1516.1 1226.9h0M1524.7 1226.9h0M1533.3 1226.9h0M1541.9 1226.9h0M1550.5 1226.9h0M1559.1 1226.9h0M1567.7 1226.9h0M1480.4 1235.7h0M1489.0 1235.7h0M1497.6 1235.7h0M1506.2 1235.7h0M1514.8 1235.7h0M1523.4 1235.7h0M1532.0 1235.7h0M1540.6 1235.7h0M1549.2 1235.7h0M1557.8 1235.7h0M1566.4 1235.7h0M1483.4 1244.5h0M1492.0 1244.5h0M1500.6 1244.5h0M1509.2 1244.5h0M1517.8 1244.5h0M1526.4 1244.5h0M1535.0 1244.5h0M1543.6 1244.5h0M1552.2 1244.5h0M1560.8 1244.5h0M1482.2 1253.3h0M1490.8 1253.3h0M1499.4 1253.3h0M1508.0 1253.3h0M1516.6 1253.3h0M1525.2 1253.3h0M1533.8 1253.3h0M1542.4 1253.3h0M1551.0 1253.3h0M1559.6 1253.3h0M1485.4 1262.1h0M1494.0 1262.1h0M1502.6 1262.1h0M1511.2 1262.1h0M1519.8 1262.1h0M1528.4 1262.1h0M1537.0 1262.1h0M1545.6 1262.1h0M1554.2 1262.1h0M1484.2 1270.9h0M1492.8 1270.9h0M1501.4 1270.9h0M1510.0 1270.9h0M1518.6 1270.9h0M1527.2 1270.9h0M1535.8 1270.9h0M1544.4 1270.9h0M1553.0 1270.9h0M1482.7 1279.7h0M1491.3 1279.7h0M1499.9 1279.7h0M1508.5 1279.7h0M1517.1 1279.7h0M1525.7 1279.7h0M1534.3 1279.7h0M1542.9 1279.7h0M1551.5 1279.7h0M1485.6 1288.5h0M1494.2 1288.5h0M1502.8 1288.5h0M1511.4 1288.5h0M1520.0 1288.5h0M1528.6 1288.5h0M1537.2 1288.5h0M1545.8 1288.5h0M1483.3 1297.3h0M1491.9 1297.3h0M1500.5 1297.3h0M1509.1 1297.3h0M1517.7 1297.3h0M1526.3 1297.3h0M1534.9 1297.3h0M1543.5 1297.3h0M1552.1 1297.3h0M1560.7 1297.3h0M1569.3 1297.3h0M1577.9 1297.3h0M1586.5 1297.3h0M1484.8 1306.1h0M1493.4 1306.1h0M1502.0 1306.1h0M1510.6 1306.1h0M1519.2 1306.1h0M1527.8 1306.1h0M1536.4 1306.1h0M1545.0 1306.1h0M1553.6 1306.1h0M1562.2 1306.1h0M1570.8 1306.1h0M1579.4 1306.1h0M1588.0 1306.1h0M1596.6 1306.1h0M1488.7 1314.9h0M1497.3 1314.9h0M1505.9 1314.9h0M1514.5 1314.9h0M1523.1 1314.9h0M1531.7 1314.9h0M1540.3 1314.9h0M1548.9 1314.9h0M1557.5 1314.9h0M1566.1 1314.9h0M1574.7 1314.9h0M1583.3 1314.9h0M1591.9 1314.9h0M1600.5 1314.9h0M1486.7 1323.7h0M1495.3 1323.7h0M1503.9 1323.7h0M1512.5 1323.7h0M1521.1 1323.7h0M1529.7 1323.7h0M1538.3 1323.7h0M1546.9 1323.7h0M1555.5 1323.7h0M1564.1 1323.7h0M1572.7 1323.7h0M1581.3 1323.7h0M1589.9 1323.7h0M1598.5 1323.7h0M1607.1 1323.7h0M1487.5 1332.5h0M1496.1 1332.5h0M1504.7 1332.5h0M1513.3 1332.5h0M1521.9 1332.5h0M1530.5 1332.5h0M1539.1 1332.5h0M1547.7 1332.5h0M1556.3 1332.5h0M1564.9 1332.5h0M1573.5 1332.5h0M1582.1 1332.5h0M1590.7 1332.5h0M1599.3 1332.5h0M1607.9 1332.5h0M1487.8 1341.3h0M1496.4 1341.3h0M1505.0 1341.3h0M1513.6 1341.3h0M1522.2 1341.3h0M1530.8 1341.3h0M1539.4 1341.3h0M1548.0 1341.3h0M1556.6 1341.3h0M1565.2 1341.3h0M1573.8 1341.3h0M1582.4 1341.3h0M1591.0 1341.3h0M1599.6 1341.3h0M1608.2 1341.3h0M1494.1 1350.1h0M1502.7 1350.1h0M1511.3 1350.1h0M1519.9 1350.1h0M1528.5 1350.1h0M1537.1 1350.1h0M1545.7 1350.1h0M1554.3 1350.1h0M1562.9 1350.1h0M1571.5 1350.1h0M1580.1 1350.1h0M1588.7 1350.1h0M1597.3 1350.1h0M1605.9 1350.1h0M1638.6 1156.5h0M1647.2 1156.5h0M1655.8 1156.5h0M1664.4 1156.5h0M1673.0 1156.5h0M1627.0 1165.3h0M1635.6 1165.3h0M1644.2 1165.3h0M1652.8 1165.3h0M1661.4 1165.3h0M1670.0 1165.3h0M1678.6 1165.3h0M1687.2 1165.3h0M1620.7 1174.1h0M1629.3 1174.1h0M1637.9 1174.1h0M1646.5 1174.1h0M1655.1 1174.1h0M1663.7 1174.1h0M1672.3 1174.1h0M1680.9 1174.1h0M1689.5 1174.1h0M1614.9 1182.9h0M1623.5 1182.9h0M1632.1 1182.9h0M1640.7 1182.9h0M1649.3 1182.9h0M1657.9 1182.9h0M1666.5 1182.9h0M1675.1 1182.9h0M1683.7 1182.9h0M1692.3 1182.9h0M1613.8 1191.7h0M1622.4 1191.7h0M1631.0 1191.7h0M1639.6 1191.7h0M1648.2 1191.7h0M1656.8 1191.7h0M1665.4 1191.7h0M1674.0 1191.7h0M1682.6 1191.7h0M1691.2 1191.7h0M1609.5 1200.5h0M1618.1 1200.5h0M1626.7 1200.5h0M1635.3 1200.5h0M1643.9 1200.5h0M1652.5 1200.5h0M1661.1 1200.5h0M1669.7 1200.5h0M1678.3 1200.5h0M1686.9 1200.5h0M1695.5 1200.5h0M1610.1 1209.3h0M1618.7 1209.3h0M1627.3 1209.3h0M1635.9 1209.3h0M1644.5 1209.3h0M1653.1 1209.3h0M1661.7 1209.3h0M1670.3 1209.3h0M1678.9 1209.3h0M1687.5 1209.3h0M1696.1 1209.3h0M1612.9 1218.1h0M1621.5 1218.1h0M1630.1 1218.1h0M1638.7 1218.1h0M1647.3 1218.1h0M1655.9 1218.1h0M1664.5 1218.1h0M1673.1 1218.1h0M1681.7 1218.1h0M1690.3 1218.1h0M1698.9 1218.1h0M1615.9 1226.9h0M1624.5 1226.9h0M1633.1 1226.9h0M1641.7 1226.9h0M1650.3 1226.9h0M1658.9 1226.9h0M1667.5 1226.9h0M1676.1 1226.9h0M1684.7 1226.9h0M1693.3 1226.9h0M1701.9 1226.9h0M1619.2 1235.7h0M1627.8 1235.7h0M1636.4 1235.7h0M1645.0 1235.7h0M1653.6 1235.7h0M1662.2 1235.7h0M1670.8 1235.7h0M1679.4 1235.7h0M1688.0 1235.7h0M1696.6 1235.7h0M1705.2 1235.7h0M1626.6 1244.5h0M1635.2 1244.5h0M1643.8 1244.5h0M1652.4 1244.5h0M1661.0 1244.5h0M1669.6 1244.5h0M1678.2 1244.5h0M1686.8 1244.5h0M1695.4 1244.5h0M1704.0 1244.5h0M1629.8 1253.3h0M1638.4 1253.3h0M1647.0 1253.3h0M1655.6 1253.3h0M1664.2 1253.3h0M1672.8 1253.3h0M1681.4 1253.3h0M1690.0 1253.3h0M1698.6 1253.3h0M1707.2 1253.3h0M1632.9 1262.1h0M1641.5 1262.1h0M1650.1 1262.1h0M1658.7 1262.1h0M1667.3 1262.1h0M1675.9 1262.1h0M1684.5 1262.1h0M1693.1 1262.1h0M1701.7 1262.1h0M1710.3 1262.1h0M1636.3 1270.9h0M1644.9 1270.9h0M1653.5 1270.9h0M1662.1 1270.9h0M1670.7 1270.9h0M1679.3 1270.9h0M1687.9 1270.9h0M1696.5 1270.9h0M1705.1 1270.9h0M1713.7 1270.9h0M1643.7 1279.7h0M1652.3 1279.7h0M1660.9 1279.7h0M1669.5 1279.7h0M1678.1 1279.7h0M1686.7 1279.7h0M1695.3 1279.7h0M1703.9 1279.7h0M1712.5 1279.7h0M1647.4 1288.5h0M1656.0 1288.5h0M1664.6 1288.5h0M1673.2 1288.5h0M1681.8 1288.5h0M1690.4 1288.5h0M1699.0 1288.5h0M1707.6 1288.5h0M1716.2 1288.5h0M1650.0 1297.3h0M1658.6 1297.3h0M1667.2 1297.3h0M1675.8 1297.3h0M1684.4 1297.3h0M1693.0 1297.3h0M1701.6 1297.3h0M1710.2 1297.3h0M1718.8 1297.3h0M1727.4 1297.3h0M1736.0 1297.3h0M1744.6 1297.3h0M1753.2 1297.3h0M1761.8 1297.3h0M1653.7 1306.1h0M1662.3 1306.1h0M1670.9 1306.1h0M1679.5 1306.1h0M1688.1 1306.1h0M1696.7 1306.1h0M1705.3 1306.1h0M1713.9 1306.1h0M1722.5 1306.1h0M1731.1 1306.1h0M1739.7 1306.1h0M1748.3 1306.1h0M1756.9 1306.1h0M1765.5 1306.1h0M1774.1 1306.1h0M1659.0 1314.9h0M1667.6 1314.9h0M1676.2 1314.9h0M1684.8 1314.9h0M1693.4 1314.9h0M1702.0 1314.9h0M1710.6 1314.9h0M1719.2 1314.9h0M1727.8 1314.9h0M1736.4 1314.9h0M1745.0 1314.9h0M1753.6 1314.9h0M1762.2 1314.9h0M1770.8 1314.9h0M1779.4 1314.9h0M1663.5 1323.7h0M1672.1 1323.7h0M1680.7 1323.7h0M1689.3 1323.7h0M1697.9 1323.7h0M1706.5 1323.7h0M1715.1 1323.7h0M1723.7 1323.7h0M1732.3 1323.7h0M1740.9 1323.7h0M1749.5 1323.7h0M1758.1 1323.7h0M1766.7 1323.7h0M1775.3 1323.7h0M1783.9 1323.7h0M1666.5 1332.5h0M1675.1 1332.5h0M1683.7 1332.5h0M1692.3 1332.5h0M1700.9 1332.5h0M1709.5 1332.5h0M1718.1 1332.5h0M1726.7 1332.5h0M1735.3 1332.5h0M1743.9 1332.5h0M1752.5 1332.5h0M1761.1 1332.5h0M1769.7 1332.5h0M1778.3 1332.5h0M1786.9 1332.5h0M1672.2 1341.3h0M1680.8 1341.3h0M1689.4 1341.3h0M1698.0 1341.3h0M1706.6 1341.3h0M1715.2 1341.3h0M1723.8 1341.3h0M1732.4 1341.3h0M1741.0 1341.3h0M1749.6 1341.3h0M1758.2 1341.3h0M1766.8 1341.3h0M1775.4 1341.3h0M1784.0 1341.3h0M1679.5 1350.1h0M1688.1 1350.1h0M1696.7 1350.1h0M1705.3 1350.1h0M1713.9 1350.1h0M1722.5 1350.1h0M1731.1 1350.1h0M1739.7 1350.1h0M1748.3 1350.1h0M1756.9 1350.1h0M1765.5 1350.1h0M1774.1 1350.1h0M1782.7 1350.1h0M1621.4 686.7h0M1630.6 686.7h0M1639.7 686.7h0M1648.8 686.7h0M1658.0 686.7h0M1667.1 686.7h0M1676.3 686.7h0M1685.4 686.7h0M1602.4 695.0h0M1610.9 695.0h0M1619.4 695.0h0M1627.9 695.0h0M1636.4 695.0h0M1644.9 695.0h0M1653.3 695.0h0M1661.8 695.0h0M1670.3 695.0h0M1678.8 695.0h0M1687.3 695.0h0M1695.7 695.0h0M1704.2 695.0h0M1712.7 695.0h0M1591.8 703.3h0M1600.3 703.3h0M1608.9 703.3h0M1617.5 703.3h0M1626.0 703.3h0M1634.6 703.3h0M1643.1 703.3h0M1651.7 703.3h0M1660.3 703.3h0M1668.8 703.3h0M1677.4 703.3h0M1686.0 703.3h0M1694.5 703.3h0M1703.1 703.3h0M1711.6 703.3h0M1720.2 703.3h0M1728.8 703.3h0M1737.3 703.3h0M1745.9 703.3h0M1587.0 712.8h0M1595.7 712.8h0M1604.3 712.8h0M1613.0 712.8h0M1621.6 712.8h0M1630.3 712.8h0M1638.9 712.8h0M1647.5 712.8h0M1656.2 712.8h0M1664.8 712.8h0M1673.5 712.8h0M1682.1 712.8h0M1690.8 712.8h0M1699.4 712.8h0M1708.0 712.8h0M1716.7 712.8h0M1725.3 712.8h0M1734.0 712.8h0M1742.6 712.8h0M1751.3 712.8h0M1759.9 712.8h0M1768.6 712.8h0M1777.2 712.8h0M1785.8 712.8h0M1794.5 712.8h0M1583.5 721.1h0M1592.3 721.1h0M1601.0 721.1h0M1609.8 721.1h0M1618.6 721.1h0M1627.3 721.1h0M1636.1 721.1h0M1644.9 721.1h0M1653.7 721.1h0M1662.4 721.1h0M1671.2 721.1h0M1680.0 721.1h0M1688.7 721.1h0M1697.5 721.1h0M1706.3 721.1h0M1715.1 721.1h0M1723.8 721.1h0M1732.6 721.1h0M1741.4 721.1h0M1750.1 721.1h0M1758.9 721.1h0M1767.7 721.1h0M1776.5 721.1h0M1785.2 721.1h0M1794.0 721.1h0M1802.8 721.1h0M1584.7 729.4h0M1593.3 729.4h0M1602.0 729.4h0M1610.6 729.4h0M1619.3 729.4h0M1627.9 729.4h0M1636.6 729.4h0M1645.2 729.4h0M1653.9 729.4h0M1662.5 729.4h0M1671.2 729.4h0M1679.8 729.4h0M1688.5 729.4h0M1697.1 729.4h0M1705.8 729.4h0M1714.4 729.4h0M1723.1 729.4h0M1731.7 729.4h0M1740.4 729.4h0M1749.0 729.4h0M1757.6 729.4h0M1766.3 729.4h0M1774.9 729.4h0M1783.6 729.4h0M1792.2 729.4h0M1800.9 729.4h0M1809.5 729.4h0M1818.2 729.4h0M1584.7 738.9h0M1593.0 738.9h0M1601.3 738.9h0M1609.6 738.9h0M1617.9 738.9h0M1626.2 738.9h0M1634.5 738.9h0M1642.8 738.9h0M1651.1 738.9h0M1659.3 738.9h0M1667.6 738.9h0M1687.8 738.9h0M1696.5 738.9h0M1705.2 738.9h0M1713.9 738.9h0M1722.6 738.9h0M1731.3 738.9h0M1740.0 738.9h0M1748.6 738.9h0M1757.3 738.9h0M1766.0 738.9h0M1774.7 738.9h0M1783.4 738.9h0M1792.1 738.9h0M1800.8 738.9h0M1809.5 738.9h0M1818.2 738.9h0M1826.9 738.9h0M1835.6 738.9h0M1844.3 738.9h0M1590.6 747.2h0M1598.5 747.2h0M1606.4 747.2h0M1614.3 747.2h0M1622.2 747.2h0M1630.1 747.2h0M1638.0 747.2h0M1666.5 747.2h0M1675.3 747.2h0M1684.1 747.2h0M1692.9 747.2h0M1701.8 747.2h0M1710.6 747.2h0M1719.4 747.2h0M1728.2 747.2h0M1737.1 747.2h0M1745.9 747.2h0M1795.7 747.2h0M1804.4 747.2h0M1813.1 747.2h0M1821.7 747.2h0M1830.4 747.2h0M1839.1 747.2h0M1847.8 747.2h0M1856.5 747.2h0M1865.2 747.2h0M1873.9 747.2h0M1597.7 755.5h0M1606.4 755.5h0M1615.1 755.5h0M1623.8 755.5h0M1649.9 755.5h0M1658.7 755.5h0M1667.4 755.5h0M1676.2 755.5h0M1685.0 755.5h0M1693.8 755.5h0M1702.6 755.5h0M1711.4 755.5h0M1720.2 755.5h0M1729.0 755.5h0M1737.8 755.5h0M1746.6 755.5h0M1755.4 755.5h0M1808.7 755.5h0M1816.9 755.5h0M1825.0 755.5h0M1833.2 755.5h0M1841.4 755.5h0M1849.5 755.5h0M1857.7 755.5h0M1865.9 755.5h0M1874.0 755.5h0M1882.2 755.5h0M1638.0 764.9h0M1646.1 764.9h0M1654.3 764.9h0M1662.4 764.9h0M1670.5 764.9h0M1678.7 764.9h0M1686.8 764.9h0M1694.9 764.9h0M1706.8 764.9h0M1715.3 764.9h0M1723.9 764.9h0M1732.4 764.9h0M1741.0 764.9h0M1749.5 764.9h0M1758.0 764.9h0M1766.6 764.9h0M1775.1 764.9h0M1783.7 764.9h0M1792.2 764.9h0M1800.8 764.9h0M1809.3 764.9h0M1817.9 764.9h0M1826.4 764.9h0M1835.0 764.9h0M1843.5 764.9h0M1852.1 764.9h0M1860.6 764.9h0M1869.2 764.9h0M1628.5 773.2h0M1636.7 773.2h0M1644.8 773.2h0M1652.9 773.2h0M1661.0 773.2h0M1669.2 773.2h0M1677.3 773.2h0M1685.4 773.2h0M1703.2 773.2h0M1711.6 773.2h0M1720.1 773.2h0M1728.5 773.2h0M1736.9 773.2h0M1745.4 773.2h0M1753.8 773.2h0M1762.2 773.2h0M1770.6 773.2h0M1779.1 773.2h0M1787.5 773.2h0M1795.9 773.2h0M1804.4 773.2h0M1812.8 773.2h0M1821.2 773.2h0M1829.7 773.2h0M1838.1 773.2h0M1846.5 773.2h0M1854.9 773.2h0M1621.4 781.5h0M1629.7 781.5h0M1638.0 781.5h0M1646.3 781.5h0M1654.6 781.5h0M1662.9 781.5h0M1671.2 781.5h0M1679.5 781.5h0M1697.3 781.5h0M1705.7 781.5h0M1714.1 781.5h0M1722.5 781.5h0M1730.9 781.5h0M1739.4 781.5h0M1747.8 781.5h0M1756.2 781.5h0M1764.6 781.5h0M1773.0 781.5h0M1781.4 781.5h0M1789.9 781.5h0M1798.3 781.5h0M1806.7 781.5h0M1815.1 781.5h0M1823.5 781.5h0M1831.9 781.5h0M1840.4 781.5h0M1848.8 781.5h0M1857.2 781.5h0M1865.6 781.5h0M1614.3 791.0h0M1623.1 791.0h0M1631.9 791.0h0M1640.7 791.0h0M1649.5 791.0h0M1658.3 791.0h0M1667.1 791.0h0M1675.9 791.0h0M1694.9 791.0h0M1703.4 791.0h0M1712.0 791.0h0M1720.5 791.0h0M1729.0 791.0h0M1737.5 791.0h0M1746.1 791.0h0M1754.6 791.0h0M1763.1 791.0h0M1771.6 791.0h0M1780.1 791.0h0M1788.7 791.0h0M1797.2 791.0h0M1805.7 791.0h0M1814.2 791.0h0M1822.8 791.0h0M1831.3 791.0h0M1839.8 791.0h0M1848.3 791.0h0M1856.9 791.0h0M1865.4 791.0h0M1873.9 791.0h0M1609.6 799.3h0M1618.7 799.3h0M1627.9 799.3h0M1637.0 799.3h0M1646.1 799.3h0M1655.3 799.3h0M1664.4 799.3h0M1673.6 799.3h0M1691.4 799.3h0M1699.8 799.3h0M1708.3 799.3h0M1716.8 799.3h0M1725.3 799.3h0M1733.8 799.3h0M1742.2 799.3h0M1750.7 799.3h0M1759.2 799.3h0M1767.7 799.3h0M1776.2 799.3h0M1784.6 799.3h0M1793.1 799.3h0M1801.6 799.3h0M1811.1 799.3h0M1820.1 799.3h0M1829.0 799.3h0M1838.0 799.3h0M1847.0 799.3h0M1856.0 799.3h0M1864.9 799.3h0M1873.9 799.3h0M1603.6 807.6h0M1611.8 807.6h0M1619.9 807.6h0M1628.1 807.6h0M1636.2 807.6h0M1644.4 807.6h0M1652.5 807.6h0M1660.7 807.6h0M1668.8 807.6h0M1689.0 807.6h0M1697.3 807.6h0M1705.6 807.6h0M1713.9 807.6h0M1722.2 807.6h0M1730.5 807.6h0M1738.8 807.6h0M1747.1 807.6h0M1755.4 807.6h0M1763.7 807.6h0M1772.0 807.6h0M1780.3 807.6h0M1788.6 807.6h0M1796.9 807.6h0M1811.1 807.6h0M1819.2 807.6h0M1827.4 807.6h0M1835.5 807.6h0M1843.7 807.6h0M1851.8 807.6h0M1860.0 807.6h0M1868.1 807.6h0M1876.3 807.6h0M1598.9 816.6h0M1607.5 816.6h0M1616.1 816.6h0M1624.7 816.6h0M1633.3 816.6h0M1641.9 816.6h0M1650.5 816.6h0M1659.1 816.6h0M1667.6 816.6h0M1687.8 816.6h0M1696.4 816.6h0M1705.0 816.6h0M1713.6 816.6h0M1722.2 816.6h0M1730.8 816.6h0M1739.4 816.6h0M1748.0 816.6h0M1756.6 816.6h0M1765.1 816.6h0M1773.7 816.6h0M1782.3 816.6h0M1790.9 816.6h0M1808.7 816.6h0M1816.9 816.6h0M1825.0 816.6h0M1833.2 816.6h0M1841.3 816.6h0M1849.5 816.6h0M1857.6 816.6h0M1865.8 816.6h0M1873.9 816.6h0M1595.3 825.4h0M1604.4 825.4h0M1613.4 825.4h0M1622.5 825.4h0M1631.5 825.4h0M1640.5 825.4h0M1649.6 825.4h0M1658.6 825.4h0M1667.6 825.4h0M1689.0 825.4h0M1697.3 825.4h0M1705.6 825.4h0M1713.9 825.4h0M1722.2 825.4h0M1730.5 825.4h0M1738.8 825.4h0M1747.1 825.4h0M1755.4 825.4h0M1763.7 825.4h0M1772.0 825.4h0M1780.3 825.4h0M1788.6 825.4h0M1817.0 825.4h0M1824.9 825.4h0M1832.8 825.4h0M1840.7 825.4h0M1848.6 825.4h0M1856.5 825.4h0M1864.4 825.4h0M1593.0 833.7h0M1601.3 833.7h0M1609.6 833.7h0M1617.9 833.7h0M1626.2 833.7h0M1634.5 833.7h0M1642.8 833.7h0M1651.1 833.7h0M1659.3 833.7h0M1667.6 833.7h0M1689.0 833.7h0M1697.9 833.7h0M1706.9 833.7h0M1715.8 833.7h0M1724.8 833.7h0M1733.7 833.7h0M1742.6 833.7h0M1751.6 833.7h0M1760.5 833.7h0M1769.5 833.7h0M1778.4 833.7h0M1787.4 833.7h0M1830.0 833.7h0M1841.9 833.7h0M1589.4 843.2h0M1598.2 843.2h0M1607.1 843.2h0M1615.9 843.2h0M1624.7 843.2h0M1633.5 843.2h0M1642.4 843.2h0M1651.2 843.2h0M1660.0 843.2h0M1668.8 843.2h0M1689.0 843.2h0M1697.3 843.2h0M1705.6 843.2h0M1713.9 843.2h0M1722.2 843.2h0M1730.5 843.2h0M1738.8 843.2h0M1747.1 843.2h0M1755.4 843.2h0M1763.7 843.2h0M1772.0 843.2h0M1780.3 843.2h0M1788.6 843.2h0M1587.0 851.5h0M1596.0 851.5h0M1605.0 851.5h0M1613.9 851.5h0M1622.9 851.5h0M1631.8 851.5h0M1640.8 851.5h0M1649.7 851.5h0M1658.7 851.5h0M1667.6 851.5h0M1690.2 851.5h0M1699.1 851.5h0M1708.1 851.5h0M1717.0 851.5h0M1725.9 851.5h0M1734.9 851.5h0M1743.8 851.5h0M1752.8 851.5h0M1761.7 851.5h0M1770.7 851.5h0M1779.6 851.5h0M1788.6 851.5h0M1849.0 851.5h0M1858.5 851.5h0M1868.0 851.5h0M1585.9 859.8h0M1594.2 859.8h0M1602.4 859.8h0M1610.7 859.8h0M1619.0 859.8h0M1627.3 859.8h0M1635.6 859.8h0M1643.9 859.8h0M1652.2 859.8h0M1660.5 859.8h0M1668.8 859.8h0M1691.4 859.8h0M1700.1 859.8h0M1708.8 859.8h0M1717.5 859.8h0M1726.3 859.8h0M1735.0 859.8h0M1743.7 859.8h0M1752.5 859.8h0M1761.2 859.8h0M1769.9 859.8h0M1778.6 859.8h0M1787.4 859.8h0M1821.7 859.8h0M1831.0 859.8h0M1840.2 859.8h0M1849.5 859.8h0M1858.7 859.8h0M1868.0 859.8h0M1584.7 868.1h0M1593.2 868.1h0M1601.8 868.1h0M1610.4 868.1h0M1618.9 868.1h0M1627.5 868.1h0M1636.0 868.1h0M1644.6 868.1h0M1653.2 868.1h0M1661.7 868.1h0M1693.7 868.1h0M1702.6 868.1h0M1711.5 868.1h0M1720.4 868.1h0M1729.3 868.1h0M1738.2 868.1h0M1747.1 868.1h0M1761.3 868.1h0M1770.2 868.1h0M1779.1 868.1h0M1788.0 868.1h0M1796.9 868.1h0M1805.7 868.1h0M1814.6 868.1h0M1823.5 868.1h0M1832.4 868.1h0M1841.3 868.1h0M1850.2 868.1h0M1859.1 868.1h0M1868.0 868.1h0M1583.5 876.4h0M1591.6 876.4h0M1599.8 876.4h0M1607.9 876.4h0M1616.1 876.4h0M1624.2 876.4h0M1632.4 876.4h0M1640.5 876.4h0M1648.7 876.4h0M1697.3 876.4h0M1705.4 876.4h0M1713.5 876.4h0M1721.7 876.4h0M1729.8 876.4h0M1737.9 876.4h0M1746.1 876.4h0M1754.2 876.4h0M1768.4 876.4h0M1776.7 876.4h0M1785.0 876.4h0M1793.3 876.4h0M1801.6 876.4h0M1809.9 876.4h0M1818.2 876.4h0M1826.5 876.4h0M1834.8 876.4h0M1843.1 876.4h0M1851.4 876.4h0M1859.7 876.4h0M1868.0 876.4h0M1582.3 885.9h0M1591.0 885.9h0M1599.7 885.9h0M1608.4 885.9h0M1617.1 885.9h0M1625.8 885.9h0M1634.5 885.9h0M1702.0 885.9h0M1710.2 885.9h0M1718.3 885.9h0M1726.4 885.9h0M1734.5 885.9h0M1742.7 885.9h0M1750.8 885.9h0M1758.9 885.9h0M1775.5 885.9h0M1784.3 885.9h0M1793.1 885.9h0M1801.8 885.9h0M1810.6 885.9h0M1819.4 885.9h0M1828.1 885.9h0M1836.9 885.9h0M1845.7 885.9h0M1854.5 885.9h0M1863.2 885.9h0M1582.3 894.2h0M1590.2 894.2h0M1598.1 894.2h0M1606.0 894.2h0M1613.9 894.2h0M1621.8 894.2h0M1629.7 894.2h0M1706.8 894.2h0M1714.9 894.2h0M1723.0 894.2h0M1731.1 894.2h0M1739.3 894.2h0M1747.4 894.2h0M1755.5 894.2h0M1763.7 894.2h0M1799.2 894.2h0M1808.2 894.2h0M1817.2 894.2h0M1826.2 894.2h0M1835.1 894.2h0M1844.1 894.2h0M1853.1 894.2h0M1862.1 894.2h0M1582.3 902.4h0M1590.4 902.4h0M1598.5 902.4h0M1606.6 902.4h0M1614.7 902.4h0M1622.8 902.4h0M1630.9 902.4h0M1716.2 902.4h0M1725.3 902.4h0M1734.4 902.4h0M1743.5 902.4h0M1752.6 902.4h0M1761.7 902.4h0M1770.8 902.4h0M1820.6 902.4h0M1829.5 902.4h0M1838.3 902.4h0M1847.2 902.4h0M1856.1 902.4h0M1582.3 910.7h0M1590.4 910.7h0M1598.5 910.7h0M1606.6 910.7h0M1614.7 910.7h0M1622.8 910.7h0M1630.9 910.7h0M1721.0 910.7h0M1729.5 910.7h0M1737.9 910.7h0M1746.4 910.7h0M1754.9 910.7h0M1763.3 910.7h0M1771.8 910.7h0M1780.3 910.7h0M1825.3 910.7h0M1833.2 910.7h0M1841.1 910.7h0M1849.0 910.7h0M1582.3 920.2h0M1590.4 920.2h0M1598.5 920.2h0M1606.6 920.2h0M1614.7 920.2h0M1622.8 920.2h0M1630.9 920.2h0M1725.7 920.2h0M1734.9 920.2h0M1744.0 920.2h0M1753.2 920.2h0M1762.3 920.2h0M1771.5 920.2h0M1780.6 920.2h0M1789.7 920.2h0M1582.3 928.5h0M1590.4 928.5h0M1598.5 928.5h0M1606.6 928.5h0M1614.7 928.5h0M1622.8 928.5h0M1630.9 928.5h0M1730.5 928.5h0M1738.8 928.5h0M1747.1 928.5h0M1755.4 928.5h0M1763.7 928.5h0M1772.0 928.5h0M1780.3 928.5h0M1788.6 928.5h0M1796.9 928.5h0M1583.5 936.8h0M1592.0 936.8h0M1600.4 936.8h0M1608.9 936.8h0M1617.4 936.8h0M1625.8 936.8h0M1634.3 936.8h0M1642.8 936.8h0M1651.2 936.8h0M1659.7 936.8h0M1668.2 936.8h0M1676.6 936.8h0M1685.1 936.8h0M1693.6 936.8h0M1702.0 936.8h0M1735.2 936.8h0M1743.5 936.8h0M1751.8 936.8h0M1760.1 936.8h0M1768.4 936.8h0M1776.7 936.8h0M1785.0 936.8h0M1793.3 936.8h0M1801.6 936.8h0M1585.9 945.1h0M1594.5 945.1h0M1603.1 945.1h0M1611.8 945.1h0M1620.4 945.1h0M1629.0 945.1h0M1637.7 945.1h0M1646.3 945.1h0M1654.9 945.1h0M1663.6 945.1h0M1672.2 945.1h0M1680.9 945.1h0M1689.5 945.1h0M1698.1 945.1h0M1706.8 945.1h0M1740.0 945.1h0M1748.1 945.1h0M1756.3 945.1h0M1764.4 945.1h0M1772.6 945.1h0M1780.7 945.1h0M1788.9 945.1h0M1797.0 945.1h0M1805.2 945.1h0M1588.2 953.4h0M1596.9 953.4h0M1605.7 953.4h0M1614.4 953.4h0M1623.1 953.4h0M1631.8 953.4h0M1640.6 953.4h0M1649.3 953.4h0M1658.0 953.4h0M1666.7 953.4h0M1675.4 953.4h0M1684.2 953.4h0M1692.9 953.4h0M1701.6 953.4h0M1710.3 953.4h0M1747.1 953.4h0M1755.9 953.4h0M1764.7 953.4h0M1773.5 953.4h0M1782.3 953.4h0M1791.1 953.4h0M1799.9 953.4h0M1808.7 953.4h0M1590.6 962.9h0M1599.2 962.9h0M1607.9 962.9h0M1616.5 962.9h0M1625.1 962.9h0M1633.8 962.9h0M1642.4 962.9h0M1651.1 962.9h0M1659.7 962.9h0M1668.3 962.9h0M1677.0 962.9h0M1685.6 962.9h0M1694.2 962.9h0M1702.9 962.9h0M1711.5 962.9h0M1753.0 962.9h0M1761.3 962.9h0M1769.6 962.9h0M1777.9 962.9h0M1786.2 962.9h0M1794.5 962.9h0M1802.8 962.9h0M1811.1 962.9h0M1593.0 971.2h0M1601.3 971.2h0M1609.7 971.2h0M1618.1 971.2h0M1626.5 971.2h0M1634.9 971.2h0M1643.3 971.2h0M1651.6 971.2h0M1660.0 971.2h0M1668.4 971.2h0M1676.8 971.2h0M1685.2 971.2h0M1693.6 971.2h0M1701.9 971.2h0M1710.3 971.2h0M1760.1 971.2h0M1768.8 971.2h0M1777.5 971.2h0M1786.2 971.2h0M1794.9 971.2h0M1803.6 971.2h0M1812.3 971.2h0M1598.5 981.3h0M1607.3 981.3h0M1616.1 981.3h0M1624.9 981.3h0M1633.6 981.3h0M1642.4 981.3h0M1651.2 981.3h0M1659.9 981.3h0M1668.7 981.3h0M1677.5 981.3h0M1686.3 981.3h0M1763.2 981.3h0M1771.1 981.3h0M1779.0 981.3h0M1786.9 981.3h0M1794.8 981.3h0M1802.7 981.3h0M1810.6 981.3h0M1603.3 989.6h0M1611.4 989.6h0M1619.5 989.6h0M1627.7 989.6h0M1635.8 989.6h0M1643.9 989.6h0M1652.0 989.6h0M1660.2 989.6h0M1765.6 989.6h0M1774.6 989.6h0M1783.6 989.6h0M1792.6 989.6h0M1801.6 989.6h0M1810.6 989.6h0M1606.8 997.9h0M1615.7 997.9h0M1624.6 997.9h0M1633.5 997.9h0M1642.4 997.9h0M1651.3 997.9h0M1660.2 997.9h0M1769.1 997.9h0M1777.2 997.9h0M1785.2 997.9h0M1793.3 997.9h0M1801.4 997.9h0M1809.4 997.9h0M1611.6 1006.2h0M1619.9 1006.2h0M1628.2 1006.2h0M1636.5 1006.2h0M1644.8 1006.2h0M1653.1 1006.2h0M1661.4 1006.2h0M1771.5 1006.2h0M1781.0 1006.2h0M1790.5 1006.2h0M1799.9 1006.2h0M1809.4 1006.2h0M1615.1 1015.7h0M1623.4 1015.7h0M1631.7 1015.7h0M1640.0 1015.7h0M1648.3 1015.7h0M1656.6 1015.7h0M1664.9 1015.7h0M1772.7 1015.7h0M1781.6 1015.7h0M1790.5 1015.7h0M1799.3 1015.7h0M1808.2 1015.7h0M1619.9 1024.0h0M1628.0 1024.0h0M1636.1 1024.0h0M1644.2 1024.0h0M1652.3 1024.0h0M1660.4 1024.0h0M1668.5 1024.0h0M1773.9 1024.0h0M1781.6 1024.0h0M1789.3 1024.0h0M1797.0 1024.0h0M1804.7 1024.0h0M1624.6 1032.3h0M1632.9 1032.3h0M1641.2 1032.3h0M1649.5 1032.3h0M1657.8 1032.3h0M1666.1 1032.3h0M1674.4 1032.3h0M1775.0 1032.3h0M1784.1 1032.3h0M1793.2 1032.3h0M1802.3 1032.3h0M1628.2 1041.8h0M1637.1 1041.8h0M1646.0 1041.8h0M1654.8 1041.8h0M1663.7 1041.8h0M1672.6 1041.8h0M1681.5 1041.8h0M1690.4 1041.8h0M1699.3 1041.8h0M1776.2 1041.8h0M1783.7 1041.8h0M1791.2 1041.8h0M1798.8 1041.8h0M1631.7 1050.1h0M1640.7 1050.1h0M1649.6 1050.1h0M1658.6 1050.1h0M1667.5 1050.1h0M1676.5 1050.1h0M1685.4 1050.1h0M1694.3 1050.1h0M1703.3 1050.1h0M1712.2 1050.1h0M1721.2 1050.1h0M1730.1 1050.1h0M1775.0 1050.1h0M1785.7 1050.1h0M1796.4 1050.1h0M1636.5 1058.4h0M1644.8 1058.4h0M1653.1 1058.4h0M1661.4 1058.4h0M1669.7 1058.4h0M1678.0 1058.4h0M1686.3 1058.4h0M1694.6 1058.4h0M1702.9 1058.4h0M1711.2 1058.4h0M1719.4 1058.4h0M1727.7 1058.4h0M1736.0 1058.4h0M1773.9 1058.4h0M1783.3 1058.4h0M1792.8 1058.4h0M1638.8 1067.8h0M1647.8 1067.8h0M1656.7 1067.8h0M1665.7 1067.8h0M1674.6 1067.8h0M1683.6 1067.8h0M1692.5 1067.8h0M1701.5 1067.8h0M1710.4 1067.8h0M1719.3 1067.8h0M1728.3 1067.8h0M1737.2 1067.8h0M1773.9 1067.8h0M1780.4 1067.8h0M1786.9 1067.8h0M1643.6 1076.1h0M1652.1 1076.1h0M1660.6 1076.1h0M1669.1 1076.1h0M1677.6 1076.1h0M1686.1 1076.1h0M1694.7 1076.1h0M1703.2 1076.1h0M1711.7 1076.1h0M1720.2 1076.1h0M1728.7 1076.1h0M1737.2 1076.1h0M1772.7 1076.1h0M1782.2 1076.1h0M1647.1 1084.4h0M1656.0 1084.4h0M1664.9 1084.4h0M1673.8 1084.4h0M1682.7 1084.4h0M1691.6 1084.4h0M1700.5 1084.4h0M1709.4 1084.4h0M1718.3 1084.4h0M1727.2 1084.4h0M1736.0 1084.4h0M1773.9 1084.4h0M1649.5 1092.7h0M1658.2 1092.7h0M1666.8 1092.7h0M1675.5 1092.7h0M1684.1 1092.7h0M1692.8 1092.7h0M1701.4 1092.7h0M1710.1 1092.7h0M1718.7 1092.7h0M1727.4 1092.7h0M1736.0 1092.7h0M1653.1 1102.2h0M1662.0 1102.2h0M1671.0 1102.2h0M1679.9 1102.2h0M1688.9 1102.2h0M1697.8 1102.2h0M1706.8 1102.2h0M1715.8 1102.2h0M1724.7 1102.2h0M1733.7 1102.2h0M1656.6 1110.5h0M1664.9 1110.5h0M1673.2 1110.5h0M1681.5 1110.5h0M1689.8 1110.5h0M1698.1 1110.5h0M1706.4 1110.5h0M1714.7 1110.5h0M1723.0 1110.5h0M1731.3 1110.5h0M1657.8 1118.8h0M1666.7 1118.8h0M1675.6 1118.8h0M1684.5 1118.8h0M1693.4 1118.8h0M1702.3 1118.8h0M1711.2 1118.8h0M1720.0 1118.8h0M1728.9 1118.8h0M1663.7 1128.3h0M1672.5 1128.3h0M1681.3 1128.3h0M1690.2 1128.3h0M1699.0 1128.3h0M1707.8 1128.3h0M1716.6 1128.3h0M1725.4 1128.3h0M1689.8 1136.6h0M1697.5 1136.6h0M1705.2 1136.6h0M1712.9 1136.6h0M1720.6 1136.6h0" stroke="#f2b244" stroke-width="5.9" stroke-linecap="round" fill="none" transform="translate(0.6 -0.6)"/>
<path d="M1337.0 757.8h0M1327.0 766.6h0M1335.6 766.6h0M1318.5 775.4h0M1327.1 775.4h0M1335.7 775.4h0M1361.9 775.4h0M1307.4 784.2h0M1316.0 784.2h0M1324.6 784.2h0M1333.2 784.2h0M1341.8 784.2h0M1350.4 784.2h0M1359.0 784.2h0M1297.9 793.0h0M1306.5 793.0h0M1315.1 793.0h0M1323.7 793.0h0M1332.3 793.0h0M1340.9 793.0h0M1349.5 793.0h0M1358.1 793.0h0M1289.7 801.8h0M1298.3 801.8h0M1306.9 801.8h0M1315.5 801.8h0M1324.1 801.8h0M1332.7 801.8h0M1341.3 801.8h0M1349.9 801.8h0M1358.5 801.8h0M1285.2 810.6h0M1293.8 810.6h0M1302.4 810.6h0M1311.0 810.6h0M1319.6 810.6h0M1328.2 810.6h0M1336.8 810.6h0M1345.4 810.6h0M1354.0 810.6h0M1281.9 819.4h0M1290.5 819.4h0M1299.1 819.4h0M1307.7 819.4h0M1316.3 819.4h0M1324.9 819.4h0M1333.5 819.4h0M1342.1 819.4h0M1350.7 819.4h0M1277.9 828.2h0M1286.5 828.2h0M1295.1 828.2h0M1303.7 828.2h0M1312.3 828.2h0M1320.9 828.2h0M1329.5 828.2h0M1338.1 828.2h0M1346.7 828.2h0M1272.5 837.0h0M1281.1 837.0h0M1289.7 837.0h0M1298.3 837.0h0M1306.9 837.0h0M1315.5 837.0h0M1324.1 837.0h0M1332.7 837.0h0M1341.3 837.0h0M1269.8 845.8h0M1278.4 845.8h0M1287.0 845.8h0M1295.6 845.8h0M1304.2 845.8h0M1312.8 845.8h0M1321.4 845.8h0M1330.0 845.8h0M1254.4 854.6h0M1263.0 854.6h0M1271.6 854.6h0M1280.2 854.6h0M1288.8 854.6h0M1297.4 854.6h0M1306.0 854.6h0M1314.6 854.6h0M1323.2 854.6h0M1235.1 863.4h0M1243.7 863.4h0M1252.3 863.4h0M1260.9 863.4h0M1269.5 863.4h0M1278.1 863.4h0M1286.7 863.4h0M1295.3 863.4h0M1303.9 863.4h0M1312.5 863.4h0M1206.4 872.2h0M1215.0 872.2h0M1223.6 872.2h0M1232.2 872.2h0M1240.8 872.2h0M1249.4 872.2h0M1258.0 872.2h0M1266.6 872.2h0M1275.2 872.2h0M1283.8 872.2h0M1292.4 872.2h0M1001.7 881.0h0M1010.3 881.0h0M1018.9 881.0h0M1027.5 881.0h0M1036.1 881.0h0M1044.7 881.0h0M1053.3 881.0h0M1061.9 881.0h0M1070.5 881.0h0M1079.1 881.0h0M1087.7 881.0h0M1096.3 881.0h0M1104.9 881.0h0M1113.5 881.0h0M1122.1 881.0h0M1130.7 881.0h0M1139.3 881.0h0M1147.9 881.0h0M1156.5 881.0h0M1165.1 881.0h0M1173.7 881.0h0M1182.3 881.0h0M1190.9 881.0h0M1199.5 881.0h0M1208.1 881.0h0M1216.7 881.0h0M1225.3 881.0h0M1233.9 881.0h0M1242.5 881.0h0M1251.1 881.0h0M1259.7 881.0h0M1268.3 881.0h0M982.8 889.8h0M991.4 889.8h0M1000.0 889.8h0M1008.6 889.8h0M1017.2 889.8h0M1025.8 889.8h0M1034.4 889.8h0M1043.0 889.8h0M1051.6 889.8h0M1060.2 889.8h0M1068.8 889.8h0M1077.4 889.8h0M1086.0 889.8h0M1094.6 889.8h0M1103.2 889.8h0M1111.8 889.8h0M1120.4 889.8h0M1129.0 889.8h0M1137.6 889.8h0M1146.2 889.8h0M1154.8 889.8h0M1163.4 889.8h0M1172.0 889.8h0M1180.6 889.8h0M1189.2 889.8h0M1197.8 889.8h0M1206.4 889.8h0M1215.0 889.8h0M1223.6 889.8h0M1232.2 889.8h0M1240.8 889.8h0M1249.4 889.8h0M969.3 898.6h0M977.9 898.6h0M986.5 898.6h0M995.1 898.6h0M1003.7 898.6h0M1012.3 898.6h0M1020.9 898.6h0M1029.5 898.6h0M1038.1 898.6h0M1046.7 898.6h0M1055.3 898.6h0M1063.9 898.6h0M1072.5 898.6h0M1081.1 898.6h0M1089.7 898.6h0M1098.3 898.6h0M1106.9 898.6h0M1115.5 898.6h0M1124.1 898.6h0M1132.7 898.6h0M1141.3 898.6h0M1149.9 898.6h0M1158.5 898.6h0M1167.1 898.6h0M1175.7 898.6h0M1184.3 898.6h0M1192.9 898.6h0M1201.5 898.6h0M1210.1 898.6h0M1218.7 898.6h0M1227.3 898.6h0M959.8 907.4h0M968.4 907.4h0M977.0 907.4h0M985.6 907.4h0M994.2 907.4h0M1002.8 907.4h0M1011.4 907.4h0M1020.0 907.4h0M1028.6 907.4h0M1037.2 907.4h0M1098.8 907.4h0M1107.4 907.4h0M1116.0 907.4h0M1124.6 907.4h0M1133.2 907.4h0M1141.8 907.4h0M1150.4 907.4h0M1159.0 907.4h0M1167.6 907.4h0M1176.2 907.4h0M1184.8 907.4h0M1193.4 907.4h0M952.2 916.2h0M960.8 916.2h0M969.4 916.2h0M978.0 916.2h0M986.6 916.2h0M995.2 916.2h0M1003.8 916.2h0M1012.4 916.2h0M1021.0 916.2h0M944.7 925.0h0M953.3 925.0h0M961.9 925.0h0M970.5 925.0h0M979.1 925.0h0M987.7 925.0h0M996.3 925.0h0M939.5 933.8h0M948.1 933.8h0M956.7 933.8h0M965.3 933.8h0M973.9 933.8h0M982.5 933.8h0M937.3 942.6h0M945.9 942.6h0M954.5 942.6h0M963.1 942.6h0M971.7 942.6h0M933.1 951.4h0M941.7 951.4h0M950.3 951.4h0M958.9 951.4h0M967.5 951.4h0M936.0 960.2h0M944.6 960.2h0M953.2 960.2h0M961.8 960.2h0M936.0 969.0h0M944.6 969.0h0M953.2 969.0h0M961.8 969.0h0M936.0 977.8h0M944.6 977.8h0M953.2 977.8h0M961.8 977.8h0M933.9 986.6h0M942.5 986.6h0M951.1 986.6h0M959.7 986.6h0M968.3 986.6h0M938.9 995.4h0M947.5 995.4h0M956.1 995.4h0M964.7 995.4h0M973.3 995.4h0M941.9 1004.2h0M950.5 1004.2h0M959.1 1004.2h0M967.7 1004.2h0M976.3 1004.2h0M984.9 1004.2h0M993.5 1004.2h0M1002.1 1004.2h0M1010.7 1004.2h0M1019.3 1004.2h0M1027.9 1004.2h0M1036.5 1004.2h0M1045.1 1004.2h0M1053.7 1004.2h0M1062.3 1004.2h0M1070.9 1004.2h0M1079.5 1004.2h0M1088.1 1004.2h0M1096.7 1004.2h0M1105.3 1004.2h0M1113.9 1004.2h0M951.9 1013.0h0M960.5 1013.0h0M969.1 1013.0h0M977.7 1013.0h0M986.3 1013.0h0M994.9 1013.0h0M1003.5 1013.0h0M1012.1 1013.0h0M1020.7 1013.0h0M1029.3 1013.0h0M1037.9 1013.0h0M1046.5 1013.0h0M1055.1 1013.0h0M1063.7 1013.0h0M1072.3 1013.0h0M1080.9 1013.0h0M1089.5 1013.0h0M1098.1 1013.0h0M1106.7 1013.0h0M1115.3 1013.0h0M1123.9 1013.0h0M959.8 1021.8h0M968.4 1021.8h0M977.0 1021.8h0M985.6 1021.8h0M994.2 1021.8h0M1002.8 1021.8h0M1011.4 1021.8h0M1020.0 1021.8h0M1028.6 1021.8h0M1037.2 1021.8h0M1045.8 1021.8h0M1054.4 1021.8h0M1063.0 1021.8h0M1071.6 1021.8h0M1080.2 1021.8h0M1088.8 1021.8h0M1097.4 1021.8h0M1106.0 1021.8h0M1114.6 1021.8h0M1123.2 1021.8h0M1131.8 1021.8h0M971.2 1030.6h0M979.8 1030.6h0M988.4 1030.6h0M997.0 1030.6h0M1005.6 1030.6h0M1014.2 1030.6h0M1022.8 1030.6h0M1031.4 1030.6h0M1040.0 1030.6h0M1048.6 1030.6h0M1057.2 1030.6h0M1065.8 1030.6h0M1074.4 1030.6h0M1083.0 1030.6h0M1091.6 1030.6h0M1100.2 1030.6h0M1108.8 1030.6h0M1117.4 1030.6h0M1126.0 1030.6h0M1134.6 1030.6h0M983.1 1039.4h0M991.7 1039.4h0M1000.3 1039.4h0M1008.9 1039.4h0M1017.5 1039.4h0M1026.1 1039.4h0M1034.7 1039.4h0M1043.3 1039.4h0M1051.9 1039.4h0M1060.5 1039.4h0M1069.1 1039.4h0M1077.7 1039.4h0M1086.3 1039.4h0M1094.9 1039.4h0M1103.5 1039.4h0M1112.1 1039.4h0M1120.7 1039.4h0M1129.3 1039.4h0M1137.9 1039.4h0M997.8 1048.2h0M1006.4 1048.2h0M1015.0 1048.2h0M1023.6 1048.2h0M1032.2 1048.2h0M1040.8 1048.2h0M1049.4 1048.2h0M1058.0 1048.2h0M1066.6 1048.2h0M1075.2 1048.2h0M1083.8 1048.2h0M1092.4 1048.2h0M1101.0 1048.2h0M1109.6 1048.2h0M1118.2 1048.2h0M1126.8 1048.2h0M1135.4 1048.2h0M1004.8 1057.0h0M1013.4 1057.0h0M1022.0 1057.0h0M1030.6 1057.0h0M1039.2 1057.0h0M1047.8 1057.0h0M1056.4 1057.0h0M1065.0 1057.0h0M1073.6 1057.0h0M1082.2 1057.0h0M1090.8 1057.0h0M1099.4 1057.0h0M1108.0 1057.0h0M1116.6 1057.0h0M1125.2 1057.0h0M1133.8 1057.0h0M1005.5 1065.8h0M1014.1 1065.8h0M1022.7 1065.8h0M1031.3 1065.8h0M1039.9 1065.8h0M1048.5 1065.8h0M1100.0 1065.8h0M1108.6 1065.8h0M1117.2 1065.8h0M1125.8 1065.8h0M1134.4 1065.8h0M1005.8 1074.6h0M1014.4 1074.6h0M1023.0 1074.6h0M1031.6 1074.6h0M1040.2 1074.6h0M1048.8 1074.6h0M1111.2 1074.6h0M1119.8 1074.6h0M1128.4 1074.6h0M1007.3 1083.4h0M1015.9 1083.4h0M1024.5 1083.4h0M1033.1 1083.4h0M1041.7 1083.4h0M1050.3 1083.4h0M1121.2 1083.4h0M1010.4 1092.2h0M1019.0 1092.2h0M1027.6 1092.2h0M1036.2 1092.2h0M1044.8 1092.2h0M1053.4 1092.2h0M1062.0 1092.2h0M1011.3 1101.0h0M1019.9 1101.0h0M1028.5 1101.0h0M1037.1 1101.0h0M1045.7 1101.0h0M1054.3 1101.0h0M1062.9 1101.0h0M1071.5 1101.0h0M1080.1 1101.0h0M1019.3 1109.8h0M1027.9 1109.8h0M1036.5 1109.8h0M1045.1 1109.8h0M1053.7 1109.8h0M1062.3 1109.8h0M1070.9 1109.8h0M1079.5 1109.8h0M1088.1 1109.8h0M1096.7 1109.8h0M1027.9 1118.6h0M1036.5 1118.6h0M1045.1 1118.6h0M1053.7 1118.6h0M1062.3 1118.6h0M1070.9 1118.6h0M1079.5 1118.6h0M1088.1 1118.6h0M1096.7 1118.6h0M1105.3 1118.6h0M1113.9 1118.6h0M1041.7 1127.4h0M1050.3 1127.4h0M1058.9 1127.4h0M1067.5 1127.4h0M1076.1 1127.4h0M1084.7 1127.4h0M1093.3 1127.4h0M1101.9 1127.4h0M1110.5 1127.4h0M1119.1 1127.4h0M1054.7 1136.2h0M1063.3 1136.2h0M1071.9 1136.2h0M1080.5 1136.2h0M1089.1 1136.2h0M1097.7 1136.2h0M1106.3 1136.2h0M1114.9 1136.2h0M1123.5 1136.2h0M1065.8 1145.0h0M1074.4 1145.0h0M1083.0 1145.0h0M1091.6 1145.0h0M1100.2 1145.0h0M1108.8 1145.0h0M1117.4 1145.0h0M1126.0 1145.0h0M968.4 1153.8h0M977.0 1153.8h0M985.6 1153.8h0M994.2 1153.8h0M1070.8 1153.8h0M1079.4 1153.8h0M1088.0 1153.8h0M1096.6 1153.8h0M1105.2 1153.8h0M1113.8 1153.8h0M1122.4 1153.8h0M1131.0 1153.8h0M954.9 1162.6h0M963.5 1162.6h0M972.1 1162.6h0M980.7 1162.6h0M989.3 1162.6h0M997.9 1162.6h0M1077.7 1162.6h0M1086.3 1162.6h0M1094.9 1162.6h0M1103.5 1162.6h0M1112.1 1162.6h0M1120.7 1162.6h0M1129.3 1162.6h0M942.1 1171.4h0M950.7 1171.4h0M959.3 1171.4h0M967.9 1171.4h0M976.5 1171.4h0M985.1 1171.4h0M993.7 1171.4h0M1002.3 1171.4h0M1077.5 1171.4h0M1086.1 1171.4h0M1094.7 1171.4h0M1103.3 1171.4h0M1111.9 1171.4h0M1120.5 1171.4h0M1129.1 1171.4h0M925.0 1180.2h0M933.6 1180.2h0M942.2 1180.2h0M950.8 1180.2h0M959.4 1180.2h0M968.0 1180.2h0M976.6 1180.2h0M985.2 1180.2h0M993.8 1180.2h0M1002.4 1180.2h0M1011.0 1180.2h0M1074.5 1180.2h0M1083.1 1180.2h0M1091.7 1180.2h0M1100.3 1180.2h0M1108.9 1180.2h0M1117.5 1180.2h0M1126.1 1180.2h0M908.9 1189.0h0M917.5 1189.0h0M926.1 1189.0h0M934.7 1189.0h0M943.3 1189.0h0M951.9 1189.0h0M960.5 1189.0h0M969.1 1189.0h0M977.7 1189.0h0M986.3 1189.0h0M994.9 1189.0h0M1003.5 1189.0h0M1012.1 1189.0h0M1020.7 1189.0h0M1029.3 1189.0h0M1037.9 1189.0h0M1046.5 1189.0h0M1055.1 1189.0h0M1063.7 1189.0h0M1072.3 1189.0h0M1080.9 1189.0h0M1089.5 1189.0h0M1098.1 1189.0h0M1106.7 1189.0h0M1115.3 1189.0h0M1123.9 1189.0h0M897.9 1197.8h0M906.5 1197.8h0M915.1 1197.8h0M923.7 1197.8h0M932.3 1197.8h0M940.9 1197.8h0M949.5 1197.8h0M958.1 1197.8h0M966.7 1197.8h0M975.3 1197.8h0M983.9 1197.8h0M992.5 1197.8h0M1001.1 1197.8h0M1009.7 1197.8h0M1018.3 1197.8h0M1026.9 1197.8h0M1035.5 1197.8h0M1044.1 1197.8h0M1052.7 1197.8h0M1061.3 1197.8h0M1069.9 1197.8h0M1078.5 1197.8h0M1087.1 1197.8h0M1095.7 1197.8h0M1104.3 1197.8h0M1112.9 1197.8h0M1121.5 1197.8h0M897.7 1206.6h0M906.3 1206.6h0M914.9 1206.6h0M923.5 1206.6h0M932.1 1206.6h0M940.7 1206.6h0M949.3 1206.6h0M957.9 1206.6h0M966.5 1206.6h0M975.1 1206.6h0M983.7 1206.6h0M992.3 1206.6h0M1000.9 1206.6h0M1009.5 1206.6h0M1018.1 1206.6h0M1026.7 1206.6h0M1035.3 1206.6h0M1043.9 1206.6h0M1052.5 1206.6h0M1061.1 1206.6h0M1069.7 1206.6h0M1078.3 1206.6h0M1086.9 1206.6h0M1095.5 1206.6h0M1104.1 1206.6h0M1112.7 1206.6h0M897.0 1215.4h0M905.6 1215.4h0M914.2 1215.4h0M922.8 1215.4h0M931.4 1215.4h0M940.0 1215.4h0M948.6 1215.4h0M957.2 1215.4h0M965.8 1215.4h0M974.4 1215.4h0M983.0 1215.4h0M991.6 1215.4h0M1000.2 1215.4h0M1008.8 1215.4h0M1017.4 1215.4h0M1026.0 1215.4h0M1034.6 1215.4h0M1043.2 1215.4h0M1051.8 1215.4h0M1060.4 1215.4h0M1069.0 1215.4h0M1077.6 1215.4h0M1086.2 1215.4h0M1094.8 1215.4h0M1103.4 1215.4h0M895.3 1224.2h0M903.9 1224.2h0M912.5 1224.2h0M921.1 1224.2h0M929.7 1224.2h0M938.3 1224.2h0M946.9 1224.2h0M955.5 1224.2h0M964.1 1224.2h0M972.7 1224.2h0M981.3 1224.2h0M989.9 1224.2h0M998.5 1224.2h0M1007.1 1224.2h0M1015.7 1224.2h0M1024.3 1224.2h0M1032.9 1224.2h0M1041.5 1224.2h0M1050.1 1224.2h0M1058.7 1224.2h0M1067.3 1224.2h0M1075.9 1224.2h0M1084.5 1224.2h0M1093.1 1224.2h0M891.4 1233.0h0M900.0 1233.0h0M908.6 1233.0h0M917.2 1233.0h0M925.8 1233.0h0M934.4 1233.0h0M943.0 1233.0h0M951.6 1233.0h0M960.2 1233.0h0M968.8 1233.0h0M977.4 1233.0h0M986.0 1233.0h0M994.6 1233.0h0M1003.2 1233.0h0M1011.8 1233.0h0M1020.4 1233.0h0M1029.0 1233.0h0M1037.6 1233.0h0M1046.2 1233.0h0M1054.8 1233.0h0M1063.4 1233.0h0M1072.0 1233.0h0M1080.6 1233.0h0M890.9 1241.8h0M899.5 1241.8h0M908.1 1241.8h0M916.7 1241.8h0M925.3 1241.8h0M933.9 1241.8h0M942.5 1241.8h0M951.1 1241.8h0M959.7 1241.8h0M968.3 1241.8h0M976.9 1241.8h0M985.5 1241.8h0M994.1 1241.8h0M1002.7 1241.8h0M1011.3 1241.8h0M1019.9 1241.8h0M1028.5 1241.8h0M1037.1 1241.8h0M1045.7 1241.8h0M1054.3 1241.8h0M888.9 1250.6h0M897.5 1250.6h0M906.1 1250.6h0M914.7 1250.6h0M923.3 1250.6h0M931.9 1250.6h0M940.5 1250.6h0M949.1 1250.6h0M886.3 1259.4h0M894.9 1259.4h0M903.5 1259.4h0M912.1 1259.4h0M920.7 1259.4h0M929.3 1259.4h0M937.9 1259.4h0M946.5 1259.4h0M883.7 1268.2h0M892.3 1268.2h0M900.9 1268.2h0M909.5 1268.2h0M918.1 1268.2h0M926.7 1268.2h0M935.3 1268.2h0M943.9 1268.2h0M885.5 1277.0h0M894.1 1277.0h0M902.7 1277.0h0M911.3 1277.0h0M919.9 1277.0h0M928.5 1277.0h0M937.1 1277.0h0M882.6 1285.8h0M891.2 1285.8h0M899.8 1285.8h0M908.4 1285.8h0M917.0 1285.8h0M925.6 1285.8h0M934.2 1285.8h0M880.6 1294.6h0M889.2 1294.6h0M897.8 1294.6h0M906.4 1294.6h0M915.0 1294.6h0M923.6 1294.6h0M932.2 1294.6h0M880.5 1303.4h0M889.1 1303.4h0M897.7 1303.4h0M906.3 1303.4h0M914.9 1303.4h0M923.5 1303.4h0M932.1 1303.4h0M940.7 1303.4h0M949.3 1303.4h0M957.9 1303.4h0M966.5 1303.4h0M975.1 1303.4h0M875.6 1312.2h0M884.2 1312.2h0M892.8 1312.2h0M901.4 1312.2h0M910.0 1312.2h0M918.6 1312.2h0M927.2 1312.2h0M935.8 1312.2h0M944.4 1312.2h0M953.0 1312.2h0M961.6 1312.2h0M970.2 1312.2h0M978.8 1312.2h0M987.4 1312.2h0M876.3 1321.0h0M884.9 1321.0h0M893.5 1321.0h0M902.1 1321.0h0M910.7 1321.0h0M919.3 1321.0h0M927.9 1321.0h0M936.5 1321.0h0M945.1 1321.0h0M953.7 1321.0h0M962.3 1321.0h0M970.9 1321.0h0M979.5 1321.0h0M988.1 1321.0h0M875.2 1329.8h0M883.8 1329.8h0M892.4 1329.8h0M901.0 1329.8h0M909.6 1329.8h0M918.2 1329.8h0M926.8 1329.8h0M935.4 1329.8h0M944.0 1329.8h0M952.6 1329.8h0M961.2 1329.8h0M969.8 1329.8h0M978.4 1329.8h0M987.0 1329.8h0M874.5 1338.6h0M883.1 1338.6h0M891.7 1338.6h0M900.3 1338.6h0M908.9 1338.6h0M917.5 1338.6h0M926.1 1338.6h0M934.7 1338.6h0M943.3 1338.6h0M951.9 1338.6h0M960.5 1338.6h0M969.1 1338.6h0M977.7 1338.6h0M986.3 1338.6h0M869.5 1347.4h0M878.1 1347.4h0M886.7 1347.4h0M895.3 1347.4h0M903.9 1347.4h0M912.5 1347.4h0M921.1 1347.4h0M929.7 1347.4h0M938.3 1347.4h0M946.9 1347.4h0M955.5 1347.4h0M964.1 1347.4h0M972.7 1347.4h0M981.3 1347.4h0M989.9 1347.4h0M1105.2 1250.5h0M1113.8 1250.5h0M1122.4 1250.5h0M1131.0 1250.5h0M1139.6 1250.5h0M1148.2 1250.5h0M1156.8 1250.5h0M1165.4 1250.5h0M1174.0 1250.5h0M1182.6 1250.5h0M1191.2 1250.5h0M1199.8 1250.5h0M1086.8 1259.3h0M1095.4 1259.3h0M1104.0 1259.3h0M1112.6 1259.3h0M1121.2 1259.3h0M1129.8 1259.3h0M1138.4 1259.3h0M1147.0 1259.3h0M1155.6 1259.3h0M1164.2 1259.3h0M1172.8 1259.3h0M1181.4 1259.3h0M1190.0 1259.3h0M1198.6 1259.3h0M1077.5 1268.1h0M1086.1 1268.1h0M1094.7 1268.1h0M1103.3 1268.1h0M1111.9 1268.1h0M1120.5 1268.1h0M1129.1 1268.1h0M1137.7 1268.1h0M1146.3 1268.1h0M1154.9 1268.1h0M1163.5 1268.1h0M1172.1 1268.1h0M1180.7 1268.1h0M1189.3 1268.1h0M1077.6 1276.9h0M1086.2 1276.9h0M1094.8 1276.9h0M1103.4 1276.9h0M1112.0 1276.9h0M1120.6 1276.9h0M1129.2 1276.9h0M1137.8 1276.9h0M1146.4 1276.9h0M1155.0 1276.9h0M1163.6 1276.9h0M1172.2 1276.9h0M1082.6 1285.7h0M1091.2 1285.7h0M1099.8 1285.7h0M1108.4 1285.7h0M1117.0 1285.7h0M1125.6 1285.7h0M1134.2 1285.7h0M1142.8 1285.7h0M1151.4 1285.7h0M1160.0 1285.7h0M1085.8 1294.5h0M1094.4 1294.5h0M1103.0 1294.5h0M1111.6 1294.5h0M1120.2 1294.5h0M1128.8 1294.5h0M1137.4 1294.5h0M1146.0 1294.5h0M1154.6 1294.5h0M1163.2 1294.5h0M1091.6 1303.3h0M1100.2 1303.3h0M1108.8 1303.3h0M1117.4 1303.3h0M1126.0 1303.3h0M1134.6 1303.3h0M1143.2 1303.3h0M1151.8 1303.3h0M1160.4 1303.3h0M1169.0 1303.3h0M1101.2 1312.1h0M1109.8 1312.1h0M1118.4 1312.1h0M1127.0 1312.1h0M1135.6 1312.1h0M1144.2 1312.1h0M1152.8 1312.1h0M1161.4 1312.1h0M1170.0 1312.1h0M1178.6 1312.1h0M1187.2 1312.1h0M1195.8 1312.1h0M1204.4 1312.1h0M1213.0 1312.1h0M1221.6 1312.1h0M1103.9 1320.9h0M1112.5 1320.9h0M1121.1 1320.9h0M1129.7 1320.9h0M1138.3 1320.9h0M1146.9 1320.9h0M1155.5 1320.9h0M1164.1 1320.9h0M1172.7 1320.9h0M1181.3 1320.9h0M1189.9 1320.9h0M1198.5 1320.9h0M1207.1 1320.9h0M1215.7 1320.9h0M1224.3 1320.9h0M1232.9 1320.9h0M1109.5 1329.7h0M1118.1 1329.7h0M1126.7 1329.7h0M1135.3 1329.7h0M1143.9 1329.7h0M1152.5 1329.7h0M1161.1 1329.7h0M1169.7 1329.7h0M1178.3 1329.7h0M1186.9 1329.7h0M1195.5 1329.7h0M1204.1 1329.7h0M1212.7 1329.7h0M1221.3 1329.7h0M1229.9 1329.7h0M1238.5 1329.7h0M1117.8 1338.5h0M1126.4 1338.5h0M1135.0 1338.5h0M1143.6 1338.5h0M1152.2 1338.5h0M1160.8 1338.5h0M1169.4 1338.5h0M1178.0 1338.5h0M1186.6 1338.5h0M1195.2 1338.5h0M1203.8 1338.5h0M1212.4 1338.5h0M1221.0 1338.5h0M1229.6 1338.5h0M1238.2 1338.5h0M1126.5 1347.3h0M1135.1 1347.3h0M1143.7 1347.3h0M1152.3 1347.3h0M1160.9 1347.3h0M1169.5 1347.3h0M1178.1 1347.3h0M1186.7 1347.3h0M1195.3 1347.3h0M1203.9 1347.3h0M1212.5 1347.3h0M1221.1 1347.3h0M1229.7 1347.3h0M1238.3 1347.3h0M1545.5 1165.3h0M1554.1 1165.3h0M1562.7 1165.3h0M1571.3 1165.3h0M1579.9 1165.3h0M1588.5 1165.3h0M1597.1 1165.3h0M1522.5 1174.1h0M1531.1 1174.1h0M1539.7 1174.1h0M1548.3 1174.1h0M1556.9 1174.1h0M1565.5 1174.1h0M1574.1 1174.1h0M1582.7 1174.1h0M1591.3 1174.1h0M1495.5 1182.9h0M1504.1 1182.9h0M1512.7 1182.9h0M1521.3 1182.9h0M1529.9 1182.9h0M1538.5 1182.9h0M1547.1 1182.9h0M1555.7 1182.9h0M1564.3 1182.9h0M1572.9 1182.9h0M1581.5 1182.9h0M1590.1 1182.9h0M1480.4 1191.7h0M1489.0 1191.7h0M1497.6 1191.7h0M1506.2 1191.7h0M1514.8 1191.7h0M1523.4 1191.7h0M1532.0 1191.7h0M1540.6 1191.7h0M1549.2 1191.7h0M1557.8 1191.7h0M1566.4 1191.7h0M1575.0 1191.7h0M1583.6 1191.7h0M1478.2 1200.5h0M1486.8 1200.5h0M1495.4 1200.5h0M1504.0 1200.5h0M1512.6 1200.5h0M1521.2 1200.5h0M1529.8 1200.5h0M1538.4 1200.5h0M1547.0 1200.5h0M1555.6 1200.5h0M1564.2 1200.5h0M1572.8 1200.5h0M1581.4 1200.5h0M1480.5 1209.3h0M1489.1 1209.3h0M1497.7 1209.3h0M1506.3 1209.3h0M1514.9 1209.3h0M1523.5 1209.3h0M1532.1 1209.3h0M1540.7 1209.3h0M1549.3 1209.3h0M1557.9 1209.3h0M1566.5 1209.3h0M1575.1 1209.3h0M1478.7 1218.1h0M1487.3 1218.1h0M1495.9 1218.1h0M1504.5 1218.1h0M1513.1 1218.1h0M1521.7 1218.1h0M1530.3 1218.1h0M1538.9 1218.1h0M1547.5 1218.1h0M1556.1 1218.1h0M1564.7 1218.1h0M1573.3 1218.1h0M1481.7 1226.9h0M1490.3 1226.9h0M1498.9 1226.9h0M1507.5 1226.9h0M1516.1 1226.9h0M1524.7 1226.9h0M1533.3 1226.9h0M1541.9 1226.9h0M1550.5 1226.9h0M1559.1 1226.9h0M1567.7 1226.9h0M1480.4 1235.7h0M1489.0 1235.7h0M1497.6 1235.7h0M1506.2 1235.7h0M1514.8 1235.7h0M1523.4 1235.7h0M1532.0 1235.7h0M1540.6 1235.7h0M1549.2 1235.7h0M1557.8 1235.7h0M1566.4 1235.7h0M1483.4 1244.5h0M1492.0 1244.5h0M1500.6 1244.5h0M1509.2 1244.5h0M1517.8 1244.5h0M1526.4 1244.5h0M1535.0 1244.5h0M1543.6 1244.5h0M1552.2 1244.5h0M1560.8 1244.5h0M1482.2 1253.3h0M1490.8 1253.3h0M1499.4 1253.3h0M1508.0 1253.3h0M1516.6 1253.3h0M1525.2 1253.3h0M1533.8 1253.3h0M1542.4 1253.3h0M1551.0 1253.3h0M1559.6 1253.3h0M1485.4 1262.1h0M1494.0 1262.1h0M1502.6 1262.1h0M1511.2 1262.1h0M1519.8 1262.1h0M1528.4 1262.1h0M1537.0 1262.1h0M1545.6 1262.1h0M1554.2 1262.1h0M1484.2 1270.9h0M1492.8 1270.9h0M1501.4 1270.9h0M1510.0 1270.9h0M1518.6 1270.9h0M1527.2 1270.9h0M1535.8 1270.9h0M1544.4 1270.9h0M1553.0 1270.9h0M1482.7 1279.7h0M1491.3 1279.7h0M1499.9 1279.7h0M1508.5 1279.7h0M1517.1 1279.7h0M1525.7 1279.7h0M1534.3 1279.7h0M1542.9 1279.7h0M1551.5 1279.7h0M1485.6 1288.5h0M1494.2 1288.5h0M1502.8 1288.5h0M1511.4 1288.5h0M1520.0 1288.5h0M1528.6 1288.5h0M1537.2 1288.5h0M1545.8 1288.5h0M1483.3 1297.3h0M1491.9 1297.3h0M1500.5 1297.3h0M1509.1 1297.3h0M1517.7 1297.3h0M1526.3 1297.3h0M1534.9 1297.3h0M1543.5 1297.3h0M1552.1 1297.3h0M1560.7 1297.3h0M1569.3 1297.3h0M1577.9 1297.3h0M1586.5 1297.3h0M1484.8 1306.1h0M1493.4 1306.1h0M1502.0 1306.1h0M1510.6 1306.1h0M1519.2 1306.1h0M1527.8 1306.1h0M1536.4 1306.1h0M1545.0 1306.1h0M1553.6 1306.1h0M1562.2 1306.1h0M1570.8 1306.1h0M1579.4 1306.1h0M1588.0 1306.1h0M1596.6 1306.1h0M1488.7 1314.9h0M1497.3 1314.9h0M1505.9 1314.9h0M1514.5 1314.9h0M1523.1 1314.9h0M1531.7 1314.9h0M1540.3 1314.9h0M1548.9 1314.9h0M1557.5 1314.9h0M1566.1 1314.9h0M1574.7 1314.9h0M1583.3 1314.9h0M1591.9 1314.9h0M1600.5 1314.9h0M1486.7 1323.7h0M1495.3 1323.7h0M1503.9 1323.7h0M1512.5 1323.7h0M1521.1 1323.7h0M1529.7 1323.7h0M1538.3 1323.7h0M1546.9 1323.7h0M1555.5 1323.7h0M1564.1 1323.7h0M1572.7 1323.7h0M1581.3 1323.7h0M1589.9 1323.7h0M1598.5 1323.7h0M1607.1 1323.7h0M1487.5 1332.5h0M1496.1 1332.5h0M1504.7 1332.5h0M1513.3 1332.5h0M1521.9 1332.5h0M1530.5 1332.5h0M1539.1 1332.5h0M1547.7 1332.5h0M1556.3 1332.5h0M1564.9 1332.5h0M1573.5 1332.5h0M1582.1 1332.5h0M1590.7 1332.5h0M1599.3 1332.5h0M1607.9 1332.5h0M1487.8 1341.3h0M1496.4 1341.3h0M1505.0 1341.3h0M1513.6 1341.3h0M1522.2 1341.3h0M1530.8 1341.3h0M1539.4 1341.3h0M1548.0 1341.3h0M1556.6 1341.3h0M1565.2 1341.3h0M1573.8 1341.3h0M1582.4 1341.3h0M1591.0 1341.3h0M1599.6 1341.3h0M1608.2 1341.3h0M1494.1 1350.1h0M1502.7 1350.1h0M1511.3 1350.1h0M1519.9 1350.1h0M1528.5 1350.1h0M1537.1 1350.1h0M1545.7 1350.1h0M1554.3 1350.1h0M1562.9 1350.1h0M1571.5 1350.1h0M1580.1 1350.1h0M1588.7 1350.1h0M1597.3 1350.1h0M1605.9 1350.1h0M1638.6 1156.5h0M1647.2 1156.5h0M1655.8 1156.5h0M1664.4 1156.5h0M1673.0 1156.5h0M1627.0 1165.3h0M1635.6 1165.3h0M1644.2 1165.3h0M1652.8 1165.3h0M1661.4 1165.3h0M1670.0 1165.3h0M1678.6 1165.3h0M1687.2 1165.3h0M1620.7 1174.1h0M1629.3 1174.1h0M1637.9 1174.1h0M1646.5 1174.1h0M1655.1 1174.1h0M1663.7 1174.1h0M1672.3 1174.1h0M1680.9 1174.1h0M1689.5 1174.1h0M1614.9 1182.9h0M1623.5 1182.9h0M1632.1 1182.9h0M1640.7 1182.9h0M1649.3 1182.9h0M1657.9 1182.9h0M1666.5 1182.9h0M1675.1 1182.9h0M1683.7 1182.9h0M1692.3 1182.9h0M1613.8 1191.7h0M1622.4 1191.7h0M1631.0 1191.7h0M1639.6 1191.7h0M1648.2 1191.7h0M1656.8 1191.7h0M1665.4 1191.7h0M1674.0 1191.7h0M1682.6 1191.7h0M1691.2 1191.7h0M1609.5 1200.5h0M1618.1 1200.5h0M1626.7 1200.5h0M1635.3 1200.5h0M1643.9 1200.5h0M1652.5 1200.5h0M1661.1 1200.5h0M1669.7 1200.5h0M1678.3 1200.5h0M1686.9 1200.5h0M1695.5 1200.5h0M1610.1 1209.3h0M1618.7 1209.3h0M1627.3 1209.3h0M1635.9 1209.3h0M1644.5 1209.3h0M1653.1 1209.3h0M1661.7 1209.3h0M1670.3 1209.3h0M1678.9 1209.3h0M1687.5 1209.3h0M1696.1 1209.3h0M1612.9 1218.1h0M1621.5 1218.1h0M1630.1 1218.1h0M1638.7 1218.1h0M1647.3 1218.1h0M1655.9 1218.1h0M1664.5 1218.1h0M1673.1 1218.1h0M1681.7 1218.1h0M1690.3 1218.1h0M1698.9 1218.1h0M1615.9 1226.9h0M1624.5 1226.9h0M1633.1 1226.9h0M1641.7 1226.9h0M1650.3 1226.9h0M1658.9 1226.9h0M1667.5 1226.9h0M1676.1 1226.9h0M1684.7 1226.9h0M1693.3 1226.9h0M1701.9 1226.9h0M1619.2 1235.7h0M1627.8 1235.7h0M1636.4 1235.7h0M1645.0 1235.7h0M1653.6 1235.7h0M1662.2 1235.7h0M1670.8 1235.7h0M1679.4 1235.7h0M1688.0 1235.7h0M1696.6 1235.7h0M1705.2 1235.7h0M1626.6 1244.5h0M1635.2 1244.5h0M1643.8 1244.5h0M1652.4 1244.5h0M1661.0 1244.5h0M1669.6 1244.5h0M1678.2 1244.5h0M1686.8 1244.5h0M1695.4 1244.5h0M1704.0 1244.5h0M1629.8 1253.3h0M1638.4 1253.3h0M1647.0 1253.3h0M1655.6 1253.3h0M1664.2 1253.3h0M1672.8 1253.3h0M1681.4 1253.3h0M1690.0 1253.3h0M1698.6 1253.3h0M1707.2 1253.3h0M1632.9 1262.1h0M1641.5 1262.1h0M1650.1 1262.1h0M1658.7 1262.1h0M1667.3 1262.1h0M1675.9 1262.1h0M1684.5 1262.1h0M1693.1 1262.1h0M1701.7 1262.1h0M1710.3 1262.1h0M1636.3 1270.9h0M1644.9 1270.9h0M1653.5 1270.9h0M1662.1 1270.9h0M1670.7 1270.9h0M1679.3 1270.9h0M1687.9 1270.9h0M1696.5 1270.9h0M1705.1 1270.9h0M1713.7 1270.9h0M1643.7 1279.7h0M1652.3 1279.7h0M1660.9 1279.7h0M1669.5 1279.7h0M1678.1 1279.7h0M1686.7 1279.7h0M1695.3 1279.7h0M1703.9 1279.7h0M1712.5 1279.7h0M1647.4 1288.5h0M1656.0 1288.5h0M1664.6 1288.5h0M1673.2 1288.5h0M1681.8 1288.5h0M1690.4 1288.5h0M1699.0 1288.5h0M1707.6 1288.5h0M1716.2 1288.5h0M1650.0 1297.3h0M1658.6 1297.3h0M1667.2 1297.3h0M1675.8 1297.3h0M1684.4 1297.3h0M1693.0 1297.3h0M1701.6 1297.3h0M1710.2 1297.3h0M1718.8 1297.3h0M1727.4 1297.3h0M1736.0 1297.3h0M1744.6 1297.3h0M1753.2 1297.3h0M1761.8 1297.3h0M1653.7 1306.1h0M1662.3 1306.1h0M1670.9 1306.1h0M1679.5 1306.1h0M1688.1 1306.1h0M1696.7 1306.1h0M1705.3 1306.1h0M1713.9 1306.1h0M1722.5 1306.1h0M1731.1 1306.1h0M1739.7 1306.1h0M1748.3 1306.1h0M1756.9 1306.1h0M1765.5 1306.1h0M1774.1 1306.1h0M1659.0 1314.9h0M1667.6 1314.9h0M1676.2 1314.9h0M1684.8 1314.9h0M1693.4 1314.9h0M1702.0 1314.9h0M1710.6 1314.9h0M1719.2 1314.9h0M1727.8 1314.9h0M1736.4 1314.9h0M1745.0 1314.9h0M1753.6 1314.9h0M1762.2 1314.9h0M1770.8 1314.9h0M1779.4 1314.9h0M1663.5 1323.7h0M1672.1 1323.7h0M1680.7 1323.7h0M1689.3 1323.7h0M1697.9 1323.7h0M1706.5 1323.7h0M1715.1 1323.7h0M1723.7 1323.7h0M1732.3 1323.7h0M1740.9 1323.7h0M1749.5 1323.7h0M1758.1 1323.7h0M1766.7 1323.7h0M1775.3 1323.7h0M1783.9 1323.7h0M1666.5 1332.5h0M1675.1 1332.5h0M1683.7 1332.5h0M1692.3 1332.5h0M1700.9 1332.5h0M1709.5 1332.5h0M1718.1 1332.5h0M1726.7 1332.5h0M1735.3 1332.5h0M1743.9 1332.5h0M1752.5 1332.5h0M1761.1 1332.5h0M1769.7 1332.5h0M1778.3 1332.5h0M1786.9 1332.5h0M1672.2 1341.3h0M1680.8 1341.3h0M1689.4 1341.3h0M1698.0 1341.3h0M1706.6 1341.3h0M1715.2 1341.3h0M1723.8 1341.3h0M1732.4 1341.3h0M1741.0 1341.3h0M1749.6 1341.3h0M1758.2 1341.3h0M1766.8 1341.3h0M1775.4 1341.3h0M1784.0 1341.3h0M1679.5 1350.1h0M1688.1 1350.1h0M1696.7 1350.1h0M1705.3 1350.1h0M1713.9 1350.1h0M1722.5 1350.1h0M1731.1 1350.1h0M1739.7 1350.1h0M1748.3 1350.1h0M1756.9 1350.1h0M1765.5 1350.1h0M1774.1 1350.1h0M1782.7 1350.1h0M1621.4 686.7h0M1630.6 686.7h0M1639.7 686.7h0M1648.8 686.7h0M1658.0 686.7h0M1667.1 686.7h0M1676.3 686.7h0M1685.4 686.7h0M1602.4 695.0h0M1610.9 695.0h0M1619.4 695.0h0M1627.9 695.0h0M1636.4 695.0h0M1644.9 695.0h0M1653.3 695.0h0M1661.8 695.0h0M1670.3 695.0h0M1678.8 695.0h0M1687.3 695.0h0M1695.7 695.0h0M1704.2 695.0h0M1712.7 695.0h0M1591.8 703.3h0M1600.3 703.3h0M1608.9 703.3h0M1617.5 703.3h0M1626.0 703.3h0M1634.6 703.3h0M1643.1 703.3h0M1651.7 703.3h0M1660.3 703.3h0M1668.8 703.3h0M1677.4 703.3h0M1686.0 703.3h0M1694.5 703.3h0M1703.1 703.3h0M1711.6 703.3h0M1720.2 703.3h0M1728.8 703.3h0M1737.3 703.3h0M1745.9 703.3h0M1587.0 712.8h0M1595.7 712.8h0M1604.3 712.8h0M1613.0 712.8h0M1621.6 712.8h0M1630.3 712.8h0M1638.9 712.8h0M1647.5 712.8h0M1656.2 712.8h0M1664.8 712.8h0M1673.5 712.8h0M1682.1 712.8h0M1690.8 712.8h0M1699.4 712.8h0M1708.0 712.8h0M1716.7 712.8h0M1725.3 712.8h0M1734.0 712.8h0M1742.6 712.8h0M1751.3 712.8h0M1759.9 712.8h0M1768.6 712.8h0M1777.2 712.8h0M1785.8 712.8h0M1794.5 712.8h0M1583.5 721.1h0M1592.3 721.1h0M1601.0 721.1h0M1609.8 721.1h0M1618.6 721.1h0M1627.3 721.1h0M1636.1 721.1h0M1644.9 721.1h0M1653.7 721.1h0M1662.4 721.1h0M1671.2 721.1h0M1680.0 721.1h0M1688.7 721.1h0M1697.5 721.1h0M1706.3 721.1h0M1715.1 721.1h0M1723.8 721.1h0M1732.6 721.1h0M1741.4 721.1h0M1750.1 721.1h0M1758.9 721.1h0M1767.7 721.1h0M1776.5 721.1h0M1785.2 721.1h0M1794.0 721.1h0M1802.8 721.1h0M1584.7 729.4h0M1593.3 729.4h0M1602.0 729.4h0M1610.6 729.4h0M1619.3 729.4h0M1627.9 729.4h0M1636.6 729.4h0M1645.2 729.4h0M1653.9 729.4h0M1662.5 729.4h0M1671.2 729.4h0M1679.8 729.4h0M1688.5 729.4h0M1697.1 729.4h0M1705.8 729.4h0M1714.4 729.4h0M1723.1 729.4h0M1731.7 729.4h0M1740.4 729.4h0M1749.0 729.4h0M1757.6 729.4h0M1766.3 729.4h0M1774.9 729.4h0M1783.6 729.4h0M1792.2 729.4h0M1800.9 729.4h0M1809.5 729.4h0M1818.2 729.4h0M1584.7 738.9h0M1593.0 738.9h0M1601.3 738.9h0M1609.6 738.9h0M1617.9 738.9h0M1626.2 738.9h0M1634.5 738.9h0M1642.8 738.9h0M1651.1 738.9h0M1659.3 738.9h0M1667.6 738.9h0M1687.8 738.9h0M1696.5 738.9h0M1705.2 738.9h0M1713.9 738.9h0M1722.6 738.9h0M1731.3 738.9h0M1740.0 738.9h0M1748.6 738.9h0M1757.3 738.9h0M1766.0 738.9h0M1774.7 738.9h0M1783.4 738.9h0M1792.1 738.9h0M1800.8 738.9h0M1809.5 738.9h0M1818.2 738.9h0M1826.9 738.9h0M1835.6 738.9h0M1844.3 738.9h0M1590.6 747.2h0M1598.5 747.2h0M1606.4 747.2h0M1614.3 747.2h0M1622.2 747.2h0M1630.1 747.2h0M1638.0 747.2h0M1666.5 747.2h0M1675.3 747.2h0M1684.1 747.2h0M1692.9 747.2h0M1701.8 747.2h0M1710.6 747.2h0M1719.4 747.2h0M1728.2 747.2h0M1737.1 747.2h0M1745.9 747.2h0M1795.7 747.2h0M1804.4 747.2h0M1813.1 747.2h0M1821.7 747.2h0M1830.4 747.2h0M1839.1 747.2h0M1847.8 747.2h0M1856.5 747.2h0M1865.2 747.2h0M1873.9 747.2h0M1597.7 755.5h0M1606.4 755.5h0M1615.1 755.5h0M1623.8 755.5h0M1649.9 755.5h0M1658.7 755.5h0M1667.4 755.5h0M1676.2 755.5h0M1685.0 755.5h0M1693.8 755.5h0M1702.6 755.5h0M1711.4 755.5h0M1720.2 755.5h0M1729.0 755.5h0M1737.8 755.5h0M1746.6 755.5h0M1755.4 755.5h0M1808.7 755.5h0M1816.9 755.5h0M1825.0 755.5h0M1833.2 755.5h0M1841.4 755.5h0M1849.5 755.5h0M1857.7 755.5h0M1865.9 755.5h0M1874.0 755.5h0M1882.2 755.5h0M1638.0 764.9h0M1646.1 764.9h0M1654.3 764.9h0M1662.4 764.9h0M1670.5 764.9h0M1678.7 764.9h0M1686.8 764.9h0M1694.9 764.9h0M1706.8 764.9h0M1715.3 764.9h0M1723.9 764.9h0M1732.4 764.9h0M1741.0 764.9h0M1749.5 764.9h0M1758.0 764.9h0M1766.6 764.9h0M1775.1 764.9h0M1783.7 764.9h0M1792.2 764.9h0M1800.8 764.9h0M1809.3 764.9h0M1817.9 764.9h0M1826.4 764.9h0M1835.0 764.9h0M1843.5 764.9h0M1852.1 764.9h0M1860.6 764.9h0M1869.2 764.9h0M1628.5 773.2h0M1636.7 773.2h0M1644.8 773.2h0M1652.9 773.2h0M1661.0 773.2h0M1669.2 773.2h0M1677.3 773.2h0M1685.4 773.2h0M1703.2 773.2h0M1711.6 773.2h0M1720.1 773.2h0M1728.5 773.2h0M1736.9 773.2h0M1745.4 773.2h0M1753.8 773.2h0M1762.2 773.2h0M1770.6 773.2h0M1779.1 773.2h0M1787.5 773.2h0M1795.9 773.2h0M1804.4 773.2h0M1812.8 773.2h0M1821.2 773.2h0M1829.7 773.2h0M1838.1 773.2h0M1846.5 773.2h0M1854.9 773.2h0M1621.4 781.5h0M1629.7 781.5h0M1638.0 781.5h0M1646.3 781.5h0M1654.6 781.5h0M1662.9 781.5h0M1671.2 781.5h0M1679.5 781.5h0M1697.3 781.5h0M1705.7 781.5h0M1714.1 781.5h0M1722.5 781.5h0M1730.9 781.5h0M1739.4 781.5h0M1747.8 781.5h0M1756.2 781.5h0M1764.6 781.5h0M1773.0 781.5h0M1781.4 781.5h0M1789.9 781.5h0M1798.3 781.5h0M1806.7 781.5h0M1815.1 781.5h0M1823.5 781.5h0M1831.9 781.5h0M1840.4 781.5h0M1848.8 781.5h0M1857.2 781.5h0M1865.6 781.5h0M1614.3 791.0h0M1623.1 791.0h0M1631.9 791.0h0M1640.7 791.0h0M1649.5 791.0h0M1658.3 791.0h0M1667.1 791.0h0M1675.9 791.0h0M1694.9 791.0h0M1703.4 791.0h0M1712.0 791.0h0M1720.5 791.0h0M1729.0 791.0h0M1737.5 791.0h0M1746.1 791.0h0M1754.6 791.0h0M1763.1 791.0h0M1771.6 791.0h0M1780.1 791.0h0M1788.7 791.0h0M1797.2 791.0h0M1805.7 791.0h0M1814.2 791.0h0M1822.8 791.0h0M1831.3 791.0h0M1839.8 791.0h0M1848.3 791.0h0M1856.9 791.0h0M1865.4 791.0h0M1873.9 791.0h0M1609.6 799.3h0M1618.7 799.3h0M1627.9 799.3h0M1637.0 799.3h0M1646.1 799.3h0M1655.3 799.3h0M1664.4 799.3h0M1673.6 799.3h0M1691.4 799.3h0M1699.8 799.3h0M1708.3 799.3h0M1716.8 799.3h0M1725.3 799.3h0M1733.8 799.3h0M1742.2 799.3h0M1750.7 799.3h0M1759.2 799.3h0M1767.7 799.3h0M1776.2 799.3h0M1784.6 799.3h0M1793.1 799.3h0M1801.6 799.3h0M1811.1 799.3h0M1820.1 799.3h0M1829.0 799.3h0M1838.0 799.3h0M1847.0 799.3h0M1856.0 799.3h0M1864.9 799.3h0M1873.9 799.3h0M1603.6 807.6h0M1611.8 807.6h0M1619.9 807.6h0M1628.1 807.6h0M1636.2 807.6h0M1644.4 807.6h0M1652.5 807.6h0M1660.7 807.6h0M1668.8 807.6h0M1689.0 807.6h0M1697.3 807.6h0M1705.6 807.6h0M1713.9 807.6h0M1722.2 807.6h0M1730.5 807.6h0M1738.8 807.6h0M1747.1 807.6h0M1755.4 807.6h0M1763.7 807.6h0M1772.0 807.6h0M1780.3 807.6h0M1788.6 807.6h0M1796.9 807.6h0M1811.1 807.6h0M1819.2 807.6h0M1827.4 807.6h0M1835.5 807.6h0M1843.7 807.6h0M1851.8 807.6h0M1860.0 807.6h0M1868.1 807.6h0M1876.3 807.6h0M1598.9 816.6h0M1607.5 816.6h0M1616.1 816.6h0M1624.7 816.6h0M1633.3 816.6h0M1641.9 816.6h0M1650.5 816.6h0M1659.1 816.6h0M1667.6 816.6h0M1687.8 816.6h0M1696.4 816.6h0M1705.0 816.6h0M1713.6 816.6h0M1722.2 816.6h0M1730.8 816.6h0M1739.4 816.6h0M1748.0 816.6h0M1756.6 816.6h0M1765.1 816.6h0M1773.7 816.6h0M1782.3 816.6h0M1790.9 816.6h0M1808.7 816.6h0M1816.9 816.6h0M1825.0 816.6h0M1833.2 816.6h0M1841.3 816.6h0M1849.5 816.6h0M1857.6 816.6h0M1865.8 816.6h0M1873.9 816.6h0M1595.3 825.4h0M1604.4 825.4h0M1613.4 825.4h0M1622.5 825.4h0M1631.5 825.4h0M1640.5 825.4h0M1649.6 825.4h0M1658.6 825.4h0M1667.6 825.4h0M1689.0 825.4h0M1697.3 825.4h0M1705.6 825.4h0M1713.9 825.4h0M1722.2 825.4h0M1730.5 825.4h0M1738.8 825.4h0M1747.1 825.4h0M1755.4 825.4h0M1763.7 825.4h0M1772.0 825.4h0M1780.3 825.4h0M1788.6 825.4h0M1817.0 825.4h0M1824.9 825.4h0M1832.8 825.4h0M1840.7 825.4h0M1848.6 825.4h0M1856.5 825.4h0M1864.4 825.4h0M1593.0 833.7h0M1601.3 833.7h0M1609.6 833.7h0M1617.9 833.7h0M1626.2 833.7h0M1634.5 833.7h0M1642.8 833.7h0M1651.1 833.7h0M1659.3 833.7h0M1667.6 833.7h0M1689.0 833.7h0M1697.9 833.7h0M1706.9 833.7h0M1715.8 833.7h0M1724.8 833.7h0M1733.7 833.7h0M1742.6 833.7h0M1751.6 833.7h0M1760.5 833.7h0M1769.5 833.7h0M1778.4 833.7h0M1787.4 833.7h0M1830.0 833.7h0M1841.9 833.7h0M1589.4 843.2h0M1598.2 843.2h0M1607.1 843.2h0M1615.9 843.2h0M1624.7 843.2h0M1633.5 843.2h0M1642.4 843.2h0M1651.2 843.2h0M1660.0 843.2h0M1668.8 843.2h0M1689.0 843.2h0M1697.3 843.2h0M1705.6 843.2h0M1713.9 843.2h0M1722.2 843.2h0M1730.5 843.2h0M1738.8 843.2h0M1747.1 843.2h0M1755.4 843.2h0M1763.7 843.2h0M1772.0 843.2h0M1780.3 843.2h0M1788.6 843.2h0M1587.0 851.5h0M1596.0 851.5h0M1605.0 851.5h0M1613.9 851.5h0M1622.9 851.5h0M1631.8 851.5h0M1640.8 851.5h0M1649.7 851.5h0M1658.7 851.5h0M1667.6 851.5h0M1690.2 851.5h0M1699.1 851.5h0M1708.1 851.5h0M1717.0 851.5h0M1725.9 851.5h0M1734.9 851.5h0M1743.8 851.5h0M1752.8 851.5h0M1761.7 851.5h0M1770.7 851.5h0M1779.6 851.5h0M1788.6 851.5h0M1849.0 851.5h0M1858.5 851.5h0M1868.0 851.5h0M1585.9 859.8h0M1594.2 859.8h0M1602.4 859.8h0M1610.7 859.8h0M1619.0 859.8h0M1627.3 859.8h0M1635.6 859.8h0M1643.9 859.8h0M1652.2 859.8h0M1660.5 859.8h0M1668.8 859.8h0M1691.4 859.8h0M1700.1 859.8h0M1708.8 859.8h0M1717.5 859.8h0M1726.3 859.8h0M1735.0 859.8h0M1743.7 859.8h0M1752.5 859.8h0M1761.2 859.8h0M1769.9 859.8h0M1778.6 859.8h0M1787.4 859.8h0M1821.7 859.8h0M1831.0 859.8h0M1840.2 859.8h0M1849.5 859.8h0M1858.7 859.8h0M1868.0 859.8h0M1584.7 868.1h0M1593.2 868.1h0M1601.8 868.1h0M1610.4 868.1h0M1618.9 868.1h0M1627.5 868.1h0M1636.0 868.1h0M1644.6 868.1h0M1653.2 868.1h0M1661.7 868.1h0M1693.7 868.1h0M1702.6 868.1h0M1711.5 868.1h0M1720.4 868.1h0M1729.3 868.1h0M1738.2 868.1h0M1747.1 868.1h0M1761.3 868.1h0M1770.2 868.1h0M1779.1 868.1h0M1788.0 868.1h0M1796.9 868.1h0M1805.7 868.1h0M1814.6 868.1h0M1823.5 868.1h0M1832.4 868.1h0M1841.3 868.1h0M1850.2 868.1h0M1859.1 868.1h0M1868.0 868.1h0M1583.5 876.4h0M1591.6 876.4h0M1599.8 876.4h0M1607.9 876.4h0M1616.1 876.4h0M1624.2 876.4h0M1632.4 876.4h0M1640.5 876.4h0M1648.7 876.4h0M1697.3 876.4h0M1705.4 876.4h0M1713.5 876.4h0M1721.7 876.4h0M1729.8 876.4h0M1737.9 876.4h0M1746.1 876.4h0M1754.2 876.4h0M1768.4 876.4h0M1776.7 876.4h0M1785.0 876.4h0M1793.3 876.4h0M1801.6 876.4h0M1809.9 876.4h0M1818.2 876.4h0M1826.5 876.4h0M1834.8 876.4h0M1843.1 876.4h0M1851.4 876.4h0M1859.7 876.4h0M1868.0 876.4h0M1582.3 885.9h0M1591.0 885.9h0M1599.7 885.9h0M1608.4 885.9h0M1617.1 885.9h0M1625.8 885.9h0M1634.5 885.9h0M1702.0 885.9h0M1710.2 885.9h0M1718.3 885.9h0M1726.4 885.9h0M1734.5 885.9h0M1742.7 885.9h0M1750.8 885.9h0M1758.9 885.9h0M1775.5 885.9h0M1784.3 885.9h0M1793.1 885.9h0M1801.8 885.9h0M1810.6 885.9h0M1819.4 885.9h0M1828.1 885.9h0M1836.9 885.9h0M1845.7 885.9h0M1854.5 885.9h0M1863.2 885.9h0M1582.3 894.2h0M1590.2 894.2h0M1598.1 894.2h0M1606.0 894.2h0M1613.9 894.2h0M1621.8 894.2h0M1629.7 894.2h0M1706.8 894.2h0M1714.9 894.2h0M1723.0 894.2h0M1731.1 894.2h0M1739.3 894.2h0M1747.4 894.2h0M1755.5 894.2h0M1763.7 894.2h0M1799.2 894.2h0M1808.2 894.2h0M1817.2 894.2h0M1826.2 894.2h0M1835.1 894.2h0M1844.1 894.2h0M1853.1 894.2h0M1862.1 894.2h0M1582.3 902.4h0M1590.4 902.4h0M1598.5 902.4h0M1606.6 902.4h0M1614.7 902.4h0M1622.8 902.4h0M1630.9 902.4h0M1716.2 902.4h0M1725.3 902.4h0M1734.4 902.4h0M1743.5 902.4h0M1752.6 902.4h0M1761.7 902.4h0M1770.8 902.4h0M1820.6 902.4h0M1829.5 902.4h0M1838.3 902.4h0M1847.2 902.4h0M1856.1 902.4h0M1582.3 910.7h0M1590.4 910.7h0M1598.5 910.7h0M1606.6 910.7h0M1614.7 910.7h0M1622.8 910.7h0M1630.9 910.7h0M1721.0 910.7h0M1729.5 910.7h0M1737.9 910.7h0M1746.4 910.7h0M1754.9 910.7h0M1763.3 910.7h0M1771.8 910.7h0M1780.3 910.7h0M1825.3 910.7h0M1833.2 910.7h0M1841.1 910.7h0M1849.0 910.7h0M1582.3 920.2h0M1590.4 920.2h0M1598.5 920.2h0M1606.6 920.2h0M1614.7 920.2h0M1622.8 920.2h0M1630.9 920.2h0M1725.7 920.2h0M1734.9 920.2h0M1744.0 920.2h0M1753.2 920.2h0M1762.3 920.2h0M1771.5 920.2h0M1780.6 920.2h0M1789.7 920.2h0M1582.3 928.5h0M1590.4 928.5h0M1598.5 928.5h0M1606.6 928.5h0M1614.7 928.5h0M1622.8 928.5h0M1630.9 928.5h0M1730.5 928.5h0M1738.8 928.5h0M1747.1 928.5h0M1755.4 928.5h0M1763.7 928.5h0M1772.0 928.5h0M1780.3 928.5h0M1788.6 928.5h0M1796.9 928.5h0M1583.5 936.8h0M1592.0 936.8h0M1600.4 936.8h0M1608.9 936.8h0M1617.4 936.8h0M1625.8 936.8h0M1634.3 936.8h0M1642.8 936.8h0M1651.2 936.8h0M1659.7 936.8h0M1668.2 936.8h0M1676.6 936.8h0M1685.1 936.8h0M1693.6 936.8h0M1702.0 936.8h0M1735.2 936.8h0M1743.5 936.8h0M1751.8 936.8h0M1760.1 936.8h0M1768.4 936.8h0M1776.7 936.8h0M1785.0 936.8h0M1793.3 936.8h0M1801.6 936.8h0M1585.9 945.1h0M1594.5 945.1h0M1603.1 945.1h0M1611.8 945.1h0M1620.4 945.1h0M1629.0 945.1h0M1637.7 945.1h0M1646.3 945.1h0M1654.9 945.1h0M1663.6 945.1h0M1672.2 945.1h0M1680.9 945.1h0M1689.5 945.1h0M1698.1 945.1h0M1706.8 945.1h0M1740.0 945.1h0M1748.1 945.1h0M1756.3 945.1h0M1764.4 945.1h0M1772.6 945.1h0M1780.7 945.1h0M1788.9 945.1h0M1797.0 945.1h0M1805.2 945.1h0M1588.2 953.4h0M1596.9 953.4h0M1605.7 953.4h0M1614.4 953.4h0M1623.1 953.4h0M1631.8 953.4h0M1640.6 953.4h0M1649.3 953.4h0M1658.0 953.4h0M1666.7 953.4h0M1675.4 953.4h0M1684.2 953.4h0M1692.9 953.4h0M1701.6 953.4h0M1710.3 953.4h0M1747.1 953.4h0M1755.9 953.4h0M1764.7 953.4h0M1773.5 953.4h0M1782.3 953.4h0M1791.1 953.4h0M1799.9 953.4h0M1808.7 953.4h0M1590.6 962.9h0M1599.2 962.9h0M1607.9 962.9h0M1616.5 962.9h0M1625.1 962.9h0M1633.8 962.9h0M1642.4 962.9h0M1651.1 962.9h0M1659.7 962.9h0M1668.3 962.9h0M1677.0 962.9h0M1685.6 962.9h0M1694.2 962.9h0M1702.9 962.9h0M1711.5 962.9h0M1753.0 962.9h0M1761.3 962.9h0M1769.6 962.9h0M1777.9 962.9h0M1786.2 962.9h0M1794.5 962.9h0M1802.8 962.9h0M1811.1 962.9h0M1593.0 971.2h0M1601.3 971.2h0M1609.7 971.2h0M1618.1 971.2h0M1626.5 971.2h0M1634.9 971.2h0M1643.3 971.2h0M1651.6 971.2h0M1660.0 971.2h0M1668.4 971.2h0M1676.8 971.2h0M1685.2 971.2h0M1693.6 971.2h0M1701.9 971.2h0M1710.3 971.2h0M1760.1 971.2h0M1768.8 971.2h0M1777.5 971.2h0M1786.2 971.2h0M1794.9 971.2h0M1803.6 971.2h0M1812.3 971.2h0M1598.5 981.3h0M1607.3 981.3h0M1616.1 981.3h0M1624.9 981.3h0M1633.6 981.3h0M1642.4 981.3h0M1651.2 981.3h0M1659.9 981.3h0M1668.7 981.3h0M1677.5 981.3h0M1686.3 981.3h0M1763.2 981.3h0M1771.1 981.3h0M1779.0 981.3h0M1786.9 981.3h0M1794.8 981.3h0M1802.7 981.3h0M1810.6 981.3h0M1603.3 989.6h0M1611.4 989.6h0M1619.5 989.6h0M1627.7 989.6h0M1635.8 989.6h0M1643.9 989.6h0M1652.0 989.6h0M1660.2 989.6h0M1765.6 989.6h0M1774.6 989.6h0M1783.6 989.6h0M1792.6 989.6h0M1801.6 989.6h0M1810.6 989.6h0M1606.8 997.9h0M1615.7 997.9h0M1624.6 997.9h0M1633.5 997.9h0M1642.4 997.9h0M1651.3 997.9h0M1660.2 997.9h0M1769.1 997.9h0M1777.2 997.9h0M1785.2 997.9h0M1793.3 997.9h0M1801.4 997.9h0M1809.4 997.9h0M1611.6 1006.2h0M1619.9 1006.2h0M1628.2 1006.2h0M1636.5 1006.2h0M1644.8 1006.2h0M1653.1 1006.2h0M1661.4 1006.2h0M1771.5 1006.2h0M1781.0 1006.2h0M1790.5 1006.2h0M1799.9 1006.2h0M1809.4 1006.2h0M1615.1 1015.7h0M1623.4 1015.7h0M1631.7 1015.7h0M1640.0 1015.7h0M1648.3 1015.7h0M1656.6 1015.7h0M1664.9 1015.7h0M1772.7 1015.7h0M1781.6 1015.7h0M1790.5 1015.7h0M1799.3 1015.7h0M1808.2 1015.7h0M1619.9 1024.0h0M1628.0 1024.0h0M1636.1 1024.0h0M1644.2 1024.0h0M1652.3 1024.0h0M1660.4 1024.0h0M1668.5 1024.0h0M1773.9 1024.0h0M1781.6 1024.0h0M1789.3 1024.0h0M1797.0 1024.0h0M1804.7 1024.0h0M1624.6 1032.3h0M1632.9 1032.3h0M1641.2 1032.3h0M1649.5 1032.3h0M1657.8 1032.3h0M1666.1 1032.3h0M1674.4 1032.3h0M1775.0 1032.3h0M1784.1 1032.3h0M1793.2 1032.3h0M1802.3 1032.3h0M1628.2 1041.8h0M1637.1 1041.8h0M1646.0 1041.8h0M1654.8 1041.8h0M1663.7 1041.8h0M1672.6 1041.8h0M1681.5 1041.8h0M1690.4 1041.8h0M1699.3 1041.8h0M1776.2 1041.8h0M1783.7 1041.8h0M1791.2 1041.8h0M1798.8 1041.8h0M1631.7 1050.1h0M1640.7 1050.1h0M1649.6 1050.1h0M1658.6 1050.1h0M1667.5 1050.1h0M1676.5 1050.1h0M1685.4 1050.1h0M1694.3 1050.1h0M1703.3 1050.1h0M1712.2 1050.1h0M1721.2 1050.1h0M1730.1 1050.1h0M1775.0 1050.1h0M1785.7 1050.1h0M1796.4 1050.1h0M1636.5 1058.4h0M1644.8 1058.4h0M1653.1 1058.4h0M1661.4 1058.4h0M1669.7 1058.4h0M1678.0 1058.4h0M1686.3 1058.4h0M1694.6 1058.4h0M1702.9 1058.4h0M1711.2 1058.4h0M1719.4 1058.4h0M1727.7 1058.4h0M1736.0 1058.4h0M1773.9 1058.4h0M1783.3 1058.4h0M1792.8 1058.4h0M1638.8 1067.8h0M1647.8 1067.8h0M1656.7 1067.8h0M1665.7 1067.8h0M1674.6 1067.8h0M1683.6 1067.8h0M1692.5 1067.8h0M1701.5 1067.8h0M1710.4 1067.8h0M1719.3 1067.8h0M1728.3 1067.8h0M1737.2 1067.8h0M1773.9 1067.8h0M1780.4 1067.8h0M1786.9 1067.8h0M1643.6 1076.1h0M1652.1 1076.1h0M1660.6 1076.1h0M1669.1 1076.1h0M1677.6 1076.1h0M1686.1 1076.1h0M1694.7 1076.1h0M1703.2 1076.1h0M1711.7 1076.1h0M1720.2 1076.1h0M1728.7 1076.1h0M1737.2 1076.1h0M1772.7 1076.1h0M1782.2 1076.1h0M1647.1 1084.4h0M1656.0 1084.4h0M1664.9 1084.4h0M1673.8 1084.4h0M1682.7 1084.4h0M1691.6 1084.4h0M1700.5 1084.4h0M1709.4 1084.4h0M1718.3 1084.4h0M1727.2 1084.4h0M1736.0 1084.4h0M1773.9 1084.4h0M1649.5 1092.7h0M1658.2 1092.7h0M1666.8 1092.7h0M1675.5 1092.7h0M1684.1 1092.7h0M1692.8 1092.7h0M1701.4 1092.7h0M1710.1 1092.7h0M1718.7 1092.7h0M1727.4 1092.7h0M1736.0 1092.7h0M1653.1 1102.2h0M1662.0 1102.2h0M1671.0 1102.2h0M1679.9 1102.2h0M1688.9 1102.2h0M1697.8 1102.2h0M1706.8 1102.2h0M1715.8 1102.2h0M1724.7 1102.2h0M1733.7 1102.2h0M1656.6 1110.5h0M1664.9 1110.5h0M1673.2 1110.5h0M1681.5 1110.5h0M1689.8 1110.5h0M1698.1 1110.5h0M1706.4 1110.5h0M1714.7 1110.5h0M1723.0 1110.5h0M1731.3 1110.5h0M1657.8 1118.8h0M1666.7 1118.8h0M1675.6 1118.8h0M1684.5 1118.8h0M1693.4 1118.8h0M1702.3 1118.8h0M1711.2 1118.8h0M1720.0 1118.8h0M1728.9 1118.8h0M1663.7 1128.3h0M1672.5 1128.3h0M1681.3 1128.3h0M1690.2 1128.3h0M1699.0 1128.3h0M1707.8 1128.3h0M1716.6 1128.3h0M1725.4 1128.3h0M1689.8 1136.6h0M1697.5 1136.6h0M1705.2 1136.6h0M1712.9 1136.6h0M1720.6 1136.6h0" stroke="#ffd977" stroke-width="3.0" stroke-linecap="round" fill="none" transform="translate(1.0 -1.0)"/>
<path d="M1337.0 757.8h0M1327.0 766.6h0M1335.6 766.6h0M1318.5 775.4h0M1327.1 775.4h0M1335.7 775.4h0M1361.9 775.4h0M1307.4 784.2h0M1316.0 784.2h0M1324.6 784.2h0M1333.2 784.2h0M1341.8 784.2h0M1350.4 784.2h0M1359.0 784.2h0M1297.9 793.0h0M1306.5 793.0h0M1315.1 793.0h0M1323.7 793.0h0M1332.3 793.0h0M1340.9 793.0h0M1349.5 793.0h0M1358.1 793.0h0M1289.7 801.8h0M1298.3 801.8h0M1306.9 801.8h0M1315.5 801.8h0M1324.1 801.8h0M1332.7 801.8h0M1341.3 801.8h0M1349.9 801.8h0M1358.5 801.8h0M1285.2 810.6h0M1293.8 810.6h0M1302.4 810.6h0M1311.0 810.6h0M1319.6 810.6h0M1328.2 810.6h0M1336.8 810.6h0M1345.4 810.6h0M1354.0 810.6h0M1281.9 819.4h0M1290.5 819.4h0M1299.1 819.4h0M1307.7 819.4h0M1316.3 819.4h0M1324.9 819.4h0M1333.5 819.4h0M1342.1 819.4h0M1350.7 819.4h0M1277.9 828.2h0M1286.5 828.2h0M1295.1 828.2h0M1303.7 828.2h0M1312.3 828.2h0M1320.9 828.2h0M1329.5 828.2h0M1338.1 828.2h0M1346.7 828.2h0M1272.5 837.0h0M1281.1 837.0h0M1289.7 837.0h0M1298.3 837.0h0M1306.9 837.0h0M1315.5 837.0h0M1324.1 837.0h0M1332.7 837.0h0M1341.3 837.0h0M1269.8 845.8h0M1278.4 845.8h0M1287.0 845.8h0M1295.6 845.8h0M1304.2 845.8h0M1312.8 845.8h0M1321.4 845.8h0M1330.0 845.8h0M1254.4 854.6h0M1263.0 854.6h0M1271.6 854.6h0M1280.2 854.6h0M1288.8 854.6h0M1297.4 854.6h0M1306.0 854.6h0M1314.6 854.6h0M1323.2 854.6h0M1235.1 863.4h0M1243.7 863.4h0M1252.3 863.4h0M1260.9 863.4h0M1269.5 863.4h0M1278.1 863.4h0M1286.7 863.4h0M1295.3 863.4h0M1303.9 863.4h0M1312.5 863.4h0M1206.4 872.2h0M1215.0 872.2h0M1223.6 872.2h0M1232.2 872.2h0M1240.8 872.2h0M1249.4 872.2h0M1258.0 872.2h0M1266.6 872.2h0M1275.2 872.2h0M1283.8 872.2h0M1292.4 872.2h0M1001.7 881.0h0M1010.3 881.0h0M1018.9 881.0h0M1027.5 881.0h0M1036.1 881.0h0M1044.7 881.0h0M1053.3 881.0h0M1061.9 881.0h0M1070.5 881.0h0M1079.1 881.0h0M1087.7 881.0h0M1096.3 881.0h0M1104.9 881.0h0M1113.5 881.0h0M1122.1 881.0h0M1130.7 881.0h0M1139.3 881.0h0M1147.9 881.0h0M1156.5 881.0h0M1165.1 881.0h0M1173.7 881.0h0M1182.3 881.0h0M1190.9 881.0h0M1199.5 881.0h0M1208.1 881.0h0M1216.7 881.0h0M1225.3 881.0h0M1233.9 881.0h0M1242.5 881.0h0M1251.1 881.0h0M1259.7 881.0h0M1268.3 881.0h0M982.8 889.8h0M991.4 889.8h0M1000.0 889.8h0M1008.6 889.8h0M1017.2 889.8h0M1025.8 889.8h0M1034.4 889.8h0M1043.0 889.8h0M1051.6 889.8h0M1060.2 889.8h0M1068.8 889.8h0M1077.4 889.8h0M1086.0 889.8h0M1094.6 889.8h0M1103.2 889.8h0M1111.8 889.8h0M1120.4 889.8h0M1129.0 889.8h0M1137.6 889.8h0M1146.2 889.8h0M1154.8 889.8h0M1163.4 889.8h0M1172.0 889.8h0M1180.6 889.8h0M1189.2 889.8h0M1197.8 889.8h0M1206.4 889.8h0M1215.0 889.8h0M1223.6 889.8h0M1232.2 889.8h0M1240.8 889.8h0M1249.4 889.8h0M969.3 898.6h0M977.9 898.6h0M986.5 898.6h0M995.1 898.6h0M1003.7 898.6h0M1012.3 898.6h0M1020.9 898.6h0M1029.5 898.6h0M1038.1 898.6h0M1046.7 898.6h0M1055.3 898.6h0M1063.9 898.6h0M1072.5 898.6h0M1081.1 898.6h0M1089.7 898.6h0M1098.3 898.6h0M1106.9 898.6h0M1115.5 898.6h0M1124.1 898.6h0M1132.7 898.6h0M1141.3 898.6h0M1149.9 898.6h0M1158.5 898.6h0M1167.1 898.6h0M1175.7 898.6h0M1184.3 898.6h0M1192.9 898.6h0M1201.5 898.6h0M1210.1 898.6h0M1218.7 898.6h0M1227.3 898.6h0M959.8 907.4h0M968.4 907.4h0M977.0 907.4h0M985.6 907.4h0M994.2 907.4h0M1002.8 907.4h0M1011.4 907.4h0M1020.0 907.4h0M1028.6 907.4h0M1037.2 907.4h0M1098.8 907.4h0M1107.4 907.4h0M1116.0 907.4h0M1124.6 907.4h0M1133.2 907.4h0M1141.8 907.4h0M1150.4 907.4h0M1159.0 907.4h0M1167.6 907.4h0M1176.2 907.4h0M1184.8 907.4h0M1193.4 907.4h0M952.2 916.2h0M960.8 916.2h0M969.4 916.2h0M978.0 916.2h0M986.6 916.2h0M995.2 916.2h0M1003.8 916.2h0M1012.4 916.2h0M1021.0 916.2h0M944.7 925.0h0M953.3 925.0h0M961.9 925.0h0M970.5 925.0h0M979.1 925.0h0M987.7 925.0h0M996.3 925.0h0M939.5 933.8h0M948.1 933.8h0M956.7 933.8h0M965.3 933.8h0M973.9 933.8h0M982.5 933.8h0M937.3 942.6h0M945.9 942.6h0M954.5 942.6h0M963.1 942.6h0M971.7 942.6h0M933.1 951.4h0M941.7 951.4h0M950.3 951.4h0M958.9 951.4h0M967.5 951.4h0M936.0 960.2h0M944.6 960.2h0M953.2 960.2h0M961.8 960.2h0M936.0 969.0h0M944.6 969.0h0M953.2 969.0h0M961.8 969.0h0M936.0 977.8h0M944.6 977.8h0M953.2 977.8h0M961.8 977.8h0M933.9 986.6h0M942.5 986.6h0M951.1 986.6h0M959.7 986.6h0M968.3 986.6h0M938.9 995.4h0M947.5 995.4h0M956.1 995.4h0M964.7 995.4h0M973.3 995.4h0M941.9 1004.2h0M950.5 1004.2h0M959.1 1004.2h0M967.7 1004.2h0M976.3 1004.2h0M984.9 1004.2h0M993.5 1004.2h0M1002.1 1004.2h0M1010.7 1004.2h0M1019.3 1004.2h0M1027.9 1004.2h0M1036.5 1004.2h0M1045.1 1004.2h0M1053.7 1004.2h0M1062.3 1004.2h0M1070.9 1004.2h0M1079.5 1004.2h0M1088.1 1004.2h0M1096.7 1004.2h0M1105.3 1004.2h0M1113.9 1004.2h0M951.9 1013.0h0M960.5 1013.0h0M969.1 1013.0h0M977.7 1013.0h0M986.3 1013.0h0M994.9 1013.0h0M1003.5 1013.0h0M1012.1 1013.0h0M1020.7 1013.0h0M1029.3 1013.0h0M1037.9 1013.0h0M1046.5 1013.0h0M1055.1 1013.0h0M1063.7 1013.0h0M1072.3 1013.0h0M1080.9 1013.0h0M1089.5 1013.0h0M1098.1 1013.0h0M1106.7 1013.0h0M1115.3 1013.0h0M1123.9 1013.0h0M959.8 1021.8h0M968.4 1021.8h0M977.0 1021.8h0M985.6 1021.8h0M994.2 1021.8h0M1002.8 1021.8h0M1011.4 1021.8h0M1020.0 1021.8h0M1028.6 1021.8h0M1037.2 1021.8h0M1045.8 1021.8h0M1054.4 1021.8h0M1063.0 1021.8h0M1071.6 1021.8h0M1080.2 1021.8h0M1088.8 1021.8h0M1097.4 1021.8h0M1106.0 1021.8h0M1114.6 1021.8h0M1123.2 1021.8h0M1131.8 1021.8h0M971.2 1030.6h0M979.8 1030.6h0M988.4 1030.6h0M997.0 1030.6h0M1005.6 1030.6h0M1014.2 1030.6h0M1022.8 1030.6h0M1031.4 1030.6h0M1040.0 1030.6h0M1048.6 1030.6h0M1057.2 1030.6h0M1065.8 1030.6h0M1074.4 1030.6h0M1083.0 1030.6h0M1091.6 1030.6h0M1100.2 1030.6h0M1108.8 1030.6h0M1117.4 1030.6h0M1126.0 1030.6h0M1134.6 1030.6h0M983.1 1039.4h0M991.7 1039.4h0M1000.3 1039.4h0M1008.9 1039.4h0M1017.5 1039.4h0M1026.1 1039.4h0M1034.7 1039.4h0M1043.3 1039.4h0M1051.9 1039.4h0M1060.5 1039.4h0M1069.1 1039.4h0M1077.7 1039.4h0M1086.3 1039.4h0M1094.9 1039.4h0M1103.5 1039.4h0M1112.1 1039.4h0M1120.7 1039.4h0M1129.3 1039.4h0M1137.9 1039.4h0M997.8 1048.2h0M1006.4 1048.2h0M1015.0 1048.2h0M1023.6 1048.2h0M1032.2 1048.2h0M1040.8 1048.2h0M1049.4 1048.2h0M1058.0 1048.2h0M1066.6 1048.2h0M1075.2 1048.2h0M1083.8 1048.2h0M1092.4 1048.2h0M1101.0 1048.2h0M1109.6 1048.2h0M1118.2 1048.2h0M1126.8 1048.2h0M1135.4 1048.2h0M1004.8 1057.0h0M1013.4 1057.0h0M1022.0 1057.0h0M1030.6 1057.0h0M1039.2 1057.0h0M1047.8 1057.0h0M1056.4 1057.0h0M1065.0 1057.0h0M1073.6 1057.0h0M1082.2 1057.0h0M1090.8 1057.0h0M1099.4 1057.0h0M1108.0 1057.0h0M1116.6 1057.0h0M1125.2 1057.0h0M1133.8 1057.0h0M1005.5 1065.8h0M1014.1 1065.8h0M1022.7 1065.8h0M1031.3 1065.8h0M1039.9 1065.8h0M1048.5 1065.8h0M1100.0 1065.8h0M1108.6 1065.8h0M1117.2 1065.8h0M1125.8 1065.8h0M1134.4 1065.8h0M1005.8 1074.6h0M1014.4 1074.6h0M1023.0 1074.6h0M1031.6 1074.6h0M1040.2 1074.6h0M1048.8 1074.6h0M1111.2 1074.6h0M1119.8 1074.6h0M1128.4 1074.6h0M1007.3 1083.4h0M1015.9 1083.4h0M1024.5 1083.4h0M1033.1 1083.4h0M1041.7 1083.4h0M1050.3 1083.4h0M1121.2 1083.4h0M1010.4 1092.2h0M1019.0 1092.2h0M1027.6 1092.2h0M1036.2 1092.2h0M1044.8 1092.2h0M1053.4 1092.2h0M1062.0 1092.2h0M1011.3 1101.0h0M1019.9 1101.0h0M1028.5 1101.0h0M1037.1 1101.0h0M1045.7 1101.0h0M1054.3 1101.0h0M1062.9 1101.0h0M1071.5 1101.0h0M1080.1 1101.0h0M1019.3 1109.8h0M1027.9 1109.8h0M1036.5 1109.8h0M1045.1 1109.8h0M1053.7 1109.8h0M1062.3 1109.8h0M1070.9 1109.8h0M1079.5 1109.8h0M1088.1 1109.8h0M1096.7 1109.8h0M1027.9 1118.6h0M1036.5 1118.6h0M1045.1 1118.6h0M1053.7 1118.6h0M1062.3 1118.6h0M1070.9 1118.6h0M1079.5 1118.6h0M1088.1 1118.6h0M1096.7 1118.6h0M1105.3 1118.6h0M1113.9 1118.6h0M1041.7 1127.4h0M1050.3 1127.4h0M1058.9 1127.4h0M1067.5 1127.4h0M1076.1 1127.4h0M1084.7 1127.4h0M1093.3 1127.4h0M1101.9 1127.4h0M1110.5 1127.4h0M1119.1 1127.4h0M1054.7 1136.2h0M1063.3 1136.2h0M1071.9 1136.2h0M1080.5 1136.2h0M1089.1 1136.2h0M1097.7 1136.2h0M1106.3 1136.2h0M1114.9 1136.2h0M1123.5 1136.2h0M1065.8 1145.0h0M1074.4 1145.0h0M1083.0 1145.0h0M1091.6 1145.0h0M1100.2 1145.0h0M1108.8 1145.0h0M1117.4 1145.0h0M1126.0 1145.0h0M968.4 1153.8h0M977.0 1153.8h0M985.6 1153.8h0M994.2 1153.8h0M1070.8 1153.8h0M1079.4 1153.8h0M1088.0 1153.8h0M1096.6 1153.8h0M1105.2 1153.8h0M1113.8 1153.8h0M1122.4 1153.8h0M1131.0 1153.8h0M954.9 1162.6h0M963.5 1162.6h0M972.1 1162.6h0M980.7 1162.6h0M989.3 1162.6h0M997.9 1162.6h0M1077.7 1162.6h0M1086.3 1162.6h0M1094.9 1162.6h0M1103.5 1162.6h0M1112.1 1162.6h0M1120.7 1162.6h0M1129.3 1162.6h0M942.1 1171.4h0M950.7 1171.4h0M959.3 1171.4h0M967.9 1171.4h0M976.5 1171.4h0M985.1 1171.4h0M993.7 1171.4h0M1002.3 1171.4h0M1077.5 1171.4h0M1086.1 1171.4h0M1094.7 1171.4h0M1103.3 1171.4h0M1111.9 1171.4h0M1120.5 1171.4h0M1129.1 1171.4h0M925.0 1180.2h0M933.6 1180.2h0M942.2 1180.2h0M950.8 1180.2h0M959.4 1180.2h0M968.0 1180.2h0M976.6 1180.2h0M985.2 1180.2h0M993.8 1180.2h0M1002.4 1180.2h0M1011.0 1180.2h0M1074.5 1180.2h0M1083.1 1180.2h0M1091.7 1180.2h0M1100.3 1180.2h0M1108.9 1180.2h0M1117.5 1180.2h0M1126.1 1180.2h0M908.9 1189.0h0M917.5 1189.0h0M926.1 1189.0h0M934.7 1189.0h0M943.3 1189.0h0M951.9 1189.0h0M960.5 1189.0h0M969.1 1189.0h0M977.7 1189.0h0M986.3 1189.0h0M994.9 1189.0h0M1003.5 1189.0h0M1012.1 1189.0h0M1020.7 1189.0h0M1029.3 1189.0h0M1037.9 1189.0h0M1046.5 1189.0h0M1055.1 1189.0h0M1063.7 1189.0h0M1072.3 1189.0h0M1080.9 1189.0h0M1089.5 1189.0h0M1098.1 1189.0h0M1106.7 1189.0h0M1115.3 1189.0h0M1123.9 1189.0h0M897.9 1197.8h0M906.5 1197.8h0M915.1 1197.8h0M923.7 1197.8h0M932.3 1197.8h0M940.9 1197.8h0M949.5 1197.8h0M958.1 1197.8h0M966.7 1197.8h0M975.3 1197.8h0M983.9 1197.8h0M992.5 1197.8h0M1001.1 1197.8h0M1009.7 1197.8h0M1018.3 1197.8h0M1026.9 1197.8h0M1035.5 1197.8h0M1044.1 1197.8h0M1052.7 1197.8h0M1061.3 1197.8h0M1069.9 1197.8h0M1078.5 1197.8h0M1087.1 1197.8h0M1095.7 1197.8h0M1104.3 1197.8h0M1112.9 1197.8h0M1121.5 1197.8h0M897.7 1206.6h0M906.3 1206.6h0M914.9 1206.6h0M923.5 1206.6h0M932.1 1206.6h0M940.7 1206.6h0M949.3 1206.6h0M957.9 1206.6h0M966.5 1206.6h0M975.1 1206.6h0M983.7 1206.6h0M992.3 1206.6h0M1000.9 1206.6h0M1009.5 1206.6h0M1018.1 1206.6h0M1026.7 1206.6h0M1035.3 1206.6h0M1043.9 1206.6h0M1052.5 1206.6h0M1061.1 1206.6h0M1069.7 1206.6h0M1078.3 1206.6h0M1086.9 1206.6h0M1095.5 1206.6h0M1104.1 1206.6h0M1112.7 1206.6h0M897.0 1215.4h0M905.6 1215.4h0M914.2 1215.4h0M922.8 1215.4h0M931.4 1215.4h0M940.0 1215.4h0M948.6 1215.4h0M957.2 1215.4h0M965.8 1215.4h0M974.4 1215.4h0M983.0 1215.4h0M991.6 1215.4h0M1000.2 1215.4h0M1008.8 1215.4h0M1017.4 1215.4h0M1026.0 1215.4h0M1034.6 1215.4h0M1043.2 1215.4h0M1051.8 1215.4h0M1060.4 1215.4h0M1069.0 1215.4h0M1077.6 1215.4h0M1086.2 1215.4h0M1094.8 1215.4h0M1103.4 1215.4h0M895.3 1224.2h0M903.9 1224.2h0M912.5 1224.2h0M921.1 1224.2h0M929.7 1224.2h0M938.3 1224.2h0M946.9 1224.2h0M955.5 1224.2h0M964.1 1224.2h0M972.7 1224.2h0M981.3 1224.2h0M989.9 1224.2h0M998.5 1224.2h0M1007.1 1224.2h0M1015.7 1224.2h0M1024.3 1224.2h0M1032.9 1224.2h0M1041.5 1224.2h0M1050.1 1224.2h0M1058.7 1224.2h0M1067.3 1224.2h0M1075.9 1224.2h0M1084.5 1224.2h0M1093.1 1224.2h0M891.4 1233.0h0M900.0 1233.0h0M908.6 1233.0h0M917.2 1233.0h0M925.8 1233.0h0M934.4 1233.0h0M943.0 1233.0h0M951.6 1233.0h0M960.2 1233.0h0M968.8 1233.0h0M977.4 1233.0h0M986.0 1233.0h0M994.6 1233.0h0M1003.2 1233.0h0M1011.8 1233.0h0M1020.4 1233.0h0M1029.0 1233.0h0M1037.6 1233.0h0M1046.2 1233.0h0M1054.8 1233.0h0M1063.4 1233.0h0M1072.0 1233.0h0M1080.6 1233.0h0M890.9 1241.8h0M899.5 1241.8h0M908.1 1241.8h0M916.7 1241.8h0M925.3 1241.8h0M933.9 1241.8h0M942.5 1241.8h0M951.1 1241.8h0M959.7 1241.8h0M968.3 1241.8h0M976.9 1241.8h0M985.5 1241.8h0M994.1 1241.8h0M1002.7 1241.8h0M1011.3 1241.8h0M1019.9 1241.8h0M1028.5 1241.8h0M1037.1 1241.8h0M1045.7 1241.8h0M1054.3 1241.8h0M888.9 1250.6h0M897.5 1250.6h0M906.1 1250.6h0M914.7 1250.6h0M923.3 1250.6h0M931.9 1250.6h0M940.5 1250.6h0M949.1 1250.6h0M886.3 1259.4h0M894.9 1259.4h0M903.5 1259.4h0M912.1 1259.4h0M920.7 1259.4h0M929.3 1259.4h0M937.9 1259.4h0M946.5 1259.4h0M883.7 1268.2h0M892.3 1268.2h0M900.9 1268.2h0M909.5 1268.2h0M918.1 1268.2h0M926.7 1268.2h0M935.3 1268.2h0M943.9 1268.2h0M885.5 1277.0h0M894.1 1277.0h0M902.7 1277.0h0M911.3 1277.0h0M919.9 1277.0h0M928.5 1277.0h0M937.1 1277.0h0M882.6 1285.8h0M891.2 1285.8h0M899.8 1285.8h0M908.4 1285.8h0M917.0 1285.8h0M925.6 1285.8h0M934.2 1285.8h0M880.6 1294.6h0M889.2 1294.6h0M897.8 1294.6h0M906.4 1294.6h0M915.0 1294.6h0M923.6 1294.6h0M932.2 1294.6h0M880.5 1303.4h0M889.1 1303.4h0M897.7 1303.4h0M906.3 1303.4h0M914.9 1303.4h0M923.5 1303.4h0M932.1 1303.4h0M940.7 1303.4h0M949.3 1303.4h0M957.9 1303.4h0M966.5 1303.4h0M975.1 1303.4h0M875.6 1312.2h0M884.2 1312.2h0M892.8 1312.2h0M901.4 1312.2h0M910.0 1312.2h0M918.6 1312.2h0M927.2 1312.2h0M935.8 1312.2h0M944.4 1312.2h0M953.0 1312.2h0M961.6 1312.2h0M970.2 1312.2h0M978.8 1312.2h0M987.4 1312.2h0M876.3 1321.0h0M884.9 1321.0h0M893.5 1321.0h0M902.1 1321.0h0M910.7 1321.0h0M919.3 1321.0h0M927.9 1321.0h0M936.5 1321.0h0M945.1 1321.0h0M953.7 1321.0h0M962.3 1321.0h0M970.9 1321.0h0M979.5 1321.0h0M988.1 1321.0h0M875.2 1329.8h0M883.8 1329.8h0M892.4 1329.8h0M901.0 1329.8h0M909.6 1329.8h0M918.2 1329.8h0M926.8 1329.8h0M935.4 1329.8h0M944.0 1329.8h0M952.6 1329.8h0M961.2 1329.8h0M969.8 1329.8h0M978.4 1329.8h0M987.0 1329.8h0M874.5 1338.6h0M883.1 1338.6h0M891.7 1338.6h0M900.3 1338.6h0M908.9 1338.6h0M917.5 1338.6h0M926.1 1338.6h0M934.7 1338.6h0M943.3 1338.6h0M951.9 1338.6h0M960.5 1338.6h0M969.1 1338.6h0M977.7 1338.6h0M986.3 1338.6h0M869.5 1347.4h0M878.1 1347.4h0M886.7 1347.4h0M895.3 1347.4h0M903.9 1347.4h0M912.5 1347.4h0M921.1 1347.4h0M929.7 1347.4h0M938.3 1347.4h0M946.9 1347.4h0M955.5 1347.4h0M964.1 1347.4h0M972.7 1347.4h0M981.3 1347.4h0M989.9 1347.4h0M1105.2 1250.5h0M1113.8 1250.5h0M1122.4 1250.5h0M1131.0 1250.5h0M1139.6 1250.5h0M1148.2 1250.5h0M1156.8 1250.5h0M1165.4 1250.5h0M1174.0 1250.5h0M1182.6 1250.5h0M1191.2 1250.5h0M1199.8 1250.5h0M1086.8 1259.3h0M1095.4 1259.3h0M1104.0 1259.3h0M1112.6 1259.3h0M1121.2 1259.3h0M1129.8 1259.3h0M1138.4 1259.3h0M1147.0 1259.3h0M1155.6 1259.3h0M1164.2 1259.3h0M1172.8 1259.3h0M1181.4 1259.3h0M1190.0 1259.3h0M1198.6 1259.3h0M1077.5 1268.1h0M1086.1 1268.1h0M1094.7 1268.1h0M1103.3 1268.1h0M1111.9 1268.1h0M1120.5 1268.1h0M1129.1 1268.1h0M1137.7 1268.1h0M1146.3 1268.1h0M1154.9 1268.1h0M1163.5 1268.1h0M1172.1 1268.1h0M1180.7 1268.1h0M1189.3 1268.1h0M1077.6 1276.9h0M1086.2 1276.9h0M1094.8 1276.9h0M1103.4 1276.9h0M1112.0 1276.9h0M1120.6 1276.9h0M1129.2 1276.9h0M1137.8 1276.9h0M1146.4 1276.9h0M1155.0 1276.9h0M1163.6 1276.9h0M1172.2 1276.9h0M1082.6 1285.7h0M1091.2 1285.7h0M1099.8 1285.7h0M1108.4 1285.7h0M1117.0 1285.7h0M1125.6 1285.7h0M1134.2 1285.7h0M1142.8 1285.7h0M1151.4 1285.7h0M1160.0 1285.7h0M1085.8 1294.5h0M1094.4 1294.5h0M1103.0 1294.5h0M1111.6 1294.5h0M1120.2 1294.5h0M1128.8 1294.5h0M1137.4 1294.5h0M1146.0 1294.5h0M1154.6 1294.5h0M1163.2 1294.5h0M1091.6 1303.3h0M1100.2 1303.3h0M1108.8 1303.3h0M1117.4 1303.3h0M1126.0 1303.3h0M1134.6 1303.3h0M1143.2 1303.3h0M1151.8 1303.3h0M1160.4 1303.3h0M1169.0 1303.3h0M1101.2 1312.1h0M1109.8 1312.1h0M1118.4 1312.1h0M1127.0 1312.1h0M1135.6 1312.1h0M1144.2 1312.1h0M1152.8 1312.1h0M1161.4 1312.1h0M1170.0 1312.1h0M1178.6 1312.1h0M1187.2 1312.1h0M1195.8 1312.1h0M1204.4 1312.1h0M1213.0 1312.1h0M1221.6 1312.1h0M1103.9 1320.9h0M1112.5 1320.9h0M1121.1 1320.9h0M1129.7 1320.9h0M1138.3 1320.9h0M1146.9 1320.9h0M1155.5 1320.9h0M1164.1 1320.9h0M1172.7 1320.9h0M1181.3 1320.9h0M1189.9 1320.9h0M1198.5 1320.9h0M1207.1 1320.9h0M1215.7 1320.9h0M1224.3 1320.9h0M1232.9 1320.9h0M1109.5 1329.7h0M1118.1 1329.7h0M1126.7 1329.7h0M1135.3 1329.7h0M1143.9 1329.7h0M1152.5 1329.7h0M1161.1 1329.7h0M1169.7 1329.7h0M1178.3 1329.7h0M1186.9 1329.7h0M1195.5 1329.7h0M1204.1 1329.7h0M1212.7 1329.7h0M1221.3 1329.7h0M1229.9 1329.7h0M1238.5 1329.7h0M1117.8 1338.5h0M1126.4 1338.5h0M1135.0 1338.5h0M1143.6 1338.5h0M1152.2 1338.5h0M1160.8 1338.5h0M1169.4 1338.5h0M1178.0 1338.5h0M1186.6 1338.5h0M1195.2 1338.5h0M1203.8 1338.5h0M1212.4 1338.5h0M1221.0 1338.5h0M1229.6 1338.5h0M1238.2 1338.5h0M1126.5 1347.3h0M1135.1 1347.3h0M1143.7 1347.3h0M1152.3 1347.3h0M1160.9 1347.3h0M1169.5 1347.3h0M1178.1 1347.3h0M1186.7 1347.3h0M1195.3 1347.3h0M1203.9 1347.3h0M1212.5 1347.3h0M1221.1 1347.3h0M1229.7 1347.3h0M1238.3 1347.3h0M1545.5 1165.3h0M1554.1 1165.3h0M1562.7 1165.3h0M1571.3 1165.3h0M1579.9 1165.3h0M1588.5 1165.3h0M1597.1 1165.3h0M1522.5 1174.1h0M1531.1 1174.1h0M1539.7 1174.1h0M1548.3 1174.1h0M1556.9 1174.1h0M1565.5 1174.1h0M1574.1 1174.1h0M1582.7 1174.1h0M1591.3 1174.1h0M1495.5 1182.9h0M1504.1 1182.9h0M1512.7 1182.9h0M1521.3 1182.9h0M1529.9 1182.9h0M1538.5 1182.9h0M1547.1 1182.9h0M1555.7 1182.9h0M1564.3 1182.9h0M1572.9 1182.9h0M1581.5 1182.9h0M1590.1 1182.9h0M1480.4 1191.7h0M1489.0 1191.7h0M1497.6 1191.7h0M1506.2 1191.7h0M1514.8 1191.7h0M1523.4 1191.7h0M1532.0 1191.7h0M1540.6 1191.7h0M1549.2 1191.7h0M1557.8 1191.7h0M1566.4 1191.7h0M1575.0 1191.7h0M1583.6 1191.7h0M1478.2 1200.5h0M1486.8 1200.5h0M1495.4 1200.5h0M1504.0 1200.5h0M1512.6 1200.5h0M1521.2 1200.5h0M1529.8 1200.5h0M1538.4 1200.5h0M1547.0 1200.5h0M1555.6 1200.5h0M1564.2 1200.5h0M1572.8 1200.5h0M1581.4 1200.5h0M1480.5 1209.3h0M1489.1 1209.3h0M1497.7 1209.3h0M1506.3 1209.3h0M1514.9 1209.3h0M1523.5 1209.3h0M1532.1 1209.3h0M1540.7 1209.3h0M1549.3 1209.3h0M1557.9 1209.3h0M1566.5 1209.3h0M1575.1 1209.3h0M1478.7 1218.1h0M1487.3 1218.1h0M1495.9 1218.1h0M1504.5 1218.1h0M1513.1 1218.1h0M1521.7 1218.1h0M1530.3 1218.1h0M1538.9 1218.1h0M1547.5 1218.1h0M1556.1 1218.1h0M1564.7 1218.1h0M1573.3 1218.1h0M1481.7 1226.9h0M1490.3 1226.9h0M1498.9 1226.9h0M1507.5 1226.9h0M1516.1 1226.9h0M1524.7 1226.9h0M1533.3 1226.9h0M1541.9 1226.9h0M1550.5 1226.9h0M1559.1 1226.9h0M1567.7 1226.9h0M1480.4 1235.7h0M1489.0 1235.7h0M1497.6 1235.7h0M1506.2 1235.7h0M1514.8 1235.7h0M1523.4 1235.7h0M1532.0 1235.7h0M1540.6 1235.7h0M1549.2 1235.7h0M1557.8 1235.7h0M1566.4 1235.7h0M1483.4 1244.5h0M1492.0 1244.5h0M1500.6 1244.5h0M1509.2 1244.5h0M1517.8 1244.5h0M1526.4 1244.5h0M1535.0 1244.5h0M1543.6 1244.5h0M1552.2 1244.5h0M1560.8 1244.5h0M1482.2 1253.3h0M1490.8 1253.3h0M1499.4 1253.3h0M1508.0 1253.3h0M1516.6 1253.3h0M1525.2 1253.3h0M1533.8 1253.3h0M1542.4 1253.3h0M1551.0 1253.3h0M1559.6 1253.3h0M1485.4 1262.1h0M1494.0 1262.1h0M1502.6 1262.1h0M1511.2 1262.1h0M1519.8 1262.1h0M1528.4 1262.1h0M1537.0 1262.1h0M1545.6 1262.1h0M1554.2 1262.1h0M1484.2 1270.9h0M1492.8 1270.9h0M1501.4 1270.9h0M1510.0 1270.9h0M1518.6 1270.9h0M1527.2 1270.9h0M1535.8 1270.9h0M1544.4 1270.9h0M1553.0 1270.9h0M1482.7 1279.7h0M1491.3 1279.7h0M1499.9 1279.7h0M1508.5 1279.7h0M1517.1 1279.7h0M1525.7 1279.7h0M1534.3 1279.7h0M1542.9 1279.7h0M1551.5 1279.7h0M1485.6 1288.5h0M1494.2 1288.5h0M1502.8 1288.5h0M1511.4 1288.5h0M1520.0 1288.5h0M1528.6 1288.5h0M1537.2 1288.5h0M1545.8 1288.5h0M1483.3 1297.3h0M1491.9 1297.3h0M1500.5 1297.3h0M1509.1 1297.3h0M1517.7 1297.3h0M1526.3 1297.3h0M1534.9 1297.3h0M1543.5 1297.3h0M1552.1 1297.3h0M1560.7 1297.3h0M1569.3 1297.3h0M1577.9 1297.3h0M1586.5 1297.3h0M1484.8 1306.1h0M1493.4 1306.1h0M1502.0 1306.1h0M1510.6 1306.1h0M1519.2 1306.1h0M1527.8 1306.1h0M1536.4 1306.1h0M1545.0 1306.1h0M1553.6 1306.1h0M1562.2 1306.1h0M1570.8 1306.1h0M1579.4 1306.1h0M1588.0 1306.1h0M1596.6 1306.1h0M1488.7 1314.9h0M1497.3 1314.9h0M1505.9 1314.9h0M1514.5 1314.9h0M1523.1 1314.9h0M1531.7 1314.9h0M1540.3 1314.9h0M1548.9 1314.9h0M1557.5 1314.9h0M1566.1 1314.9h0M1574.7 1314.9h0M1583.3 1314.9h0M1591.9 1314.9h0M1600.5 1314.9h0M1486.7 1323.7h0M1495.3 1323.7h0M1503.9 1323.7h0M1512.5 1323.7h0M1521.1 1323.7h0M1529.7 1323.7h0M1538.3 1323.7h0M1546.9 1323.7h0M1555.5 1323.7h0M1564.1 1323.7h0M1572.7 1323.7h0M1581.3 1323.7h0M1589.9 1323.7h0M1598.5 1323.7h0M1607.1 1323.7h0M1487.5 1332.5h0M1496.1 1332.5h0M1504.7 1332.5h0M1513.3 1332.5h0M1521.9 1332.5h0M1530.5 1332.5h0M1539.1 1332.5h0M1547.7 1332.5h0M1556.3 1332.5h0M1564.9 1332.5h0M1573.5 1332.5h0M1582.1 1332.5h0M1590.7 1332.5h0M1599.3 1332.5h0M1607.9 1332.5h0M1487.8 1341.3h0M1496.4 1341.3h0M1505.0 1341.3h0M1513.6 1341.3h0M1522.2 1341.3h0M1530.8 1341.3h0M1539.4 1341.3h0M1548.0 1341.3h0M1556.6 1341.3h0M1565.2 1341.3h0M1573.8 1341.3h0M1582.4 1341.3h0M1591.0 1341.3h0M1599.6 1341.3h0M1608.2 1341.3h0M1494.1 1350.1h0M1502.7 1350.1h0M1511.3 1350.1h0M1519.9 1350.1h0M1528.5 1350.1h0M1537.1 1350.1h0M1545.7 1350.1h0M1554.3 1350.1h0M1562.9 1350.1h0M1571.5 1350.1h0M1580.1 1350.1h0M1588.7 1350.1h0M1597.3 1350.1h0M1605.9 1350.1h0M1638.6 1156.5h0M1647.2 1156.5h0M1655.8 1156.5h0M1664.4 1156.5h0M1673.0 1156.5h0M1627.0 1165.3h0M1635.6 1165.3h0M1644.2 1165.3h0M1652.8 1165.3h0M1661.4 1165.3h0M1670.0 1165.3h0M1678.6 1165.3h0M1687.2 1165.3h0M1620.7 1174.1h0M1629.3 1174.1h0M1637.9 1174.1h0M1646.5 1174.1h0M1655.1 1174.1h0M1663.7 1174.1h0M1672.3 1174.1h0M1680.9 1174.1h0M1689.5 1174.1h0M1614.9 1182.9h0M1623.5 1182.9h0M1632.1 1182.9h0M1640.7 1182.9h0M1649.3 1182.9h0M1657.9 1182.9h0M1666.5 1182.9h0M1675.1 1182.9h0M1683.7 1182.9h0M1692.3 1182.9h0M1613.8 1191.7h0M1622.4 1191.7h0M1631.0 1191.7h0M1639.6 1191.7h0M1648.2 1191.7h0M1656.8 1191.7h0M1665.4 1191.7h0M1674.0 1191.7h0M1682.6 1191.7h0M1691.2 1191.7h0M1609.5 1200.5h0M1618.1 1200.5h0M1626.7 1200.5h0M1635.3 1200.5h0M1643.9 1200.5h0M1652.5 1200.5h0M1661.1 1200.5h0M1669.7 1200.5h0M1678.3 1200.5h0M1686.9 1200.5h0M1695.5 1200.5h0M1610.1 1209.3h0M1618.7 1209.3h0M1627.3 1209.3h0M1635.9 1209.3h0M1644.5 1209.3h0M1653.1 1209.3h0M1661.7 1209.3h0M1670.3 1209.3h0M1678.9 1209.3h0M1687.5 1209.3h0M1696.1 1209.3h0M1612.9 1218.1h0M1621.5 1218.1h0M1630.1 1218.1h0M1638.7 1218.1h0M1647.3 1218.1h0M1655.9 1218.1h0M1664.5 1218.1h0M1673.1 1218.1h0M1681.7 1218.1h0M1690.3 1218.1h0M1698.9 1218.1h0M1615.9 1226.9h0M1624.5 1226.9h0M1633.1 1226.9h0M1641.7 1226.9h0M1650.3 1226.9h0M1658.9 1226.9h0M1667.5 1226.9h0M1676.1 1226.9h0M1684.7 1226.9h0M1693.3 1226.9h0M1701.9 1226.9h0M1619.2 1235.7h0M1627.8 1235.7h0M1636.4 1235.7h0M1645.0 1235.7h0M1653.6 1235.7h0M1662.2 1235.7h0M1670.8 1235.7h0M1679.4 1235.7h0M1688.0 1235.7h0M1696.6 1235.7h0M1705.2 1235.7h0M1626.6 1244.5h0M1635.2 1244.5h0M1643.8 1244.5h0M1652.4 1244.5h0M1661.0 1244.5h0M1669.6 1244.5h0M1678.2 1244.5h0M1686.8 1244.5h0M1695.4 1244.5h0M1704.0 1244.5h0M1629.8 1253.3h0M1638.4 1253.3h0M1647.0 1253.3h0M1655.6 1253.3h0M1664.2 1253.3h0M1672.8 1253.3h0M1681.4 1253.3h0M1690.0 1253.3h0M1698.6 1253.3h0M1707.2 1253.3h0M1632.9 1262.1h0M1641.5 1262.1h0M1650.1 1262.1h0M1658.7 1262.1h0M1667.3 1262.1h0M1675.9 1262.1h0M1684.5 1262.1h0M1693.1 1262.1h0M1701.7 1262.1h0M1710.3 1262.1h0M1636.3 1270.9h0M1644.9 1270.9h0M1653.5 1270.9h0M1662.1 1270.9h0M1670.7 1270.9h0M1679.3 1270.9h0M1687.9 1270.9h0M1696.5 1270.9h0M1705.1 1270.9h0M1713.7 1270.9h0M1643.7 1279.7h0M1652.3 1279.7h0M1660.9 1279.7h0M1669.5 1279.7h0M1678.1 1279.7h0M1686.7 1279.7h0M1695.3 1279.7h0M1703.9 1279.7h0M1712.5 1279.7h0M1647.4 1288.5h0M1656.0 1288.5h0M1664.6 1288.5h0M1673.2 1288.5h0M1681.8 1288.5h0M1690.4 1288.5h0M1699.0 1288.5h0M1707.6 1288.5h0M1716.2 1288.5h0M1650.0 1297.3h0M1658.6 1297.3h0M1667.2 1297.3h0M1675.8 1297.3h0M1684.4 1297.3h0M1693.0 1297.3h0M1701.6 1297.3h0M1710.2 1297.3h0M1718.8 1297.3h0M1727.4 1297.3h0M1736.0 1297.3h0M1744.6 1297.3h0M1753.2 1297.3h0M1761.8 1297.3h0M1653.7 1306.1h0M1662.3 1306.1h0M1670.9 1306.1h0M1679.5 1306.1h0M1688.1 1306.1h0M1696.7 1306.1h0M1705.3 1306.1h0M1713.9 1306.1h0M1722.5 1306.1h0M1731.1 1306.1h0M1739.7 1306.1h0M1748.3 1306.1h0M1756.9 1306.1h0M1765.5 1306.1h0M1774.1 1306.1h0M1659.0 1314.9h0M1667.6 1314.9h0M1676.2 1314.9h0M1684.8 1314.9h0M1693.4 1314.9h0M1702.0 1314.9h0M1710.6 1314.9h0M1719.2 1314.9h0M1727.8 1314.9h0M1736.4 1314.9h0M1745.0 1314.9h0M1753.6 1314.9h0M1762.2 1314.9h0M1770.8 1314.9h0M1779.4 1314.9h0M1663.5 1323.7h0M1672.1 1323.7h0M1680.7 1323.7h0M1689.3 1323.7h0M1697.9 1323.7h0M1706.5 1323.7h0M1715.1 1323.7h0M1723.7 1323.7h0M1732.3 1323.7h0M1740.9 1323.7h0M1749.5 1323.7h0M1758.1 1323.7h0M1766.7 1323.7h0M1775.3 1323.7h0M1783.9 1323.7h0M1666.5 1332.5h0M1675.1 1332.5h0M1683.7 1332.5h0M1692.3 1332.5h0M1700.9 1332.5h0M1709.5 1332.5h0M1718.1 1332.5h0M1726.7 1332.5h0M1735.3 1332.5h0M1743.9 1332.5h0M1752.5 1332.5h0M1761.1 1332.5h0M1769.7 1332.5h0M1778.3 1332.5h0M1786.9 1332.5h0M1672.2 1341.3h0M1680.8 1341.3h0M1689.4 1341.3h0M1698.0 1341.3h0M1706.6 1341.3h0M1715.2 1341.3h0M1723.8 1341.3h0M1732.4 1341.3h0M1741.0 1341.3h0M1749.6 1341.3h0M1758.2 1341.3h0M1766.8 1341.3h0M1775.4 1341.3h0M1784.0 1341.3h0M1679.5 1350.1h0M1688.1 1350.1h0M1696.7 1350.1h0M1705.3 1350.1h0M1713.9 1350.1h0M1722.5 1350.1h0M1731.1 1350.1h0M1739.7 1350.1h0M1748.3 1350.1h0M1756.9 1350.1h0M1765.5 1350.1h0M1774.1 1350.1h0M1782.7 1350.1h0M1621.4 686.7h0M1630.6 686.7h0M1639.7 686.7h0M1648.8 686.7h0M1658.0 686.7h0M1667.1 686.7h0M1676.3 686.7h0M1685.4 686.7h0M1602.4 695.0h0M1610.9 695.0h0M1619.4 695.0h0M1627.9 695.0h0M1636.4 695.0h0M1644.9 695.0h0M1653.3 695.0h0M1661.8 695.0h0M1670.3 695.0h0M1678.8 695.0h0M1687.3 695.0h0M1695.7 695.0h0M1704.2 695.0h0M1712.7 695.0h0M1591.8 703.3h0M1600.3 703.3h0M1608.9 703.3h0M1617.5 703.3h0M1626.0 703.3h0M1634.6 703.3h0M1643.1 703.3h0M1651.7 703.3h0M1660.3 703.3h0M1668.8 703.3h0M1677.4 703.3h0M1686.0 703.3h0M1694.5 703.3h0M1703.1 703.3h0M1711.6 703.3h0M1720.2 703.3h0M1728.8 703.3h0M1737.3 703.3h0M1745.9 703.3h0M1587.0 712.8h0M1595.7 712.8h0M1604.3 712.8h0M1613.0 712.8h0M1621.6 712.8h0M1630.3 712.8h0M1638.9 712.8h0M1647.5 712.8h0M1656.2 712.8h0M1664.8 712.8h0M1673.5 712.8h0M1682.1 712.8h0M1690.8 712.8h0M1699.4 712.8h0M1708.0 712.8h0M1716.7 712.8h0M1725.3 712.8h0M1734.0 712.8h0M1742.6 712.8h0M1751.3 712.8h0M1759.9 712.8h0M1768.6 712.8h0M1777.2 712.8h0M1785.8 712.8h0M1794.5 712.8h0M1583.5 721.1h0M1592.3 721.1h0M1601.0 721.1h0M1609.8 721.1h0M1618.6 721.1h0M1627.3 721.1h0M1636.1 721.1h0M1644.9 721.1h0M1653.7 721.1h0M1662.4 721.1h0M1671.2 721.1h0M1680.0 721.1h0M1688.7 721.1h0M1697.5 721.1h0M1706.3 721.1h0M1715.1 721.1h0M1723.8 721.1h0M1732.6 721.1h0M1741.4 721.1h0M1750.1 721.1h0M1758.9 721.1h0M1767.7 721.1h0M1776.5 721.1h0M1785.2 721.1h0M1794.0 721.1h0M1802.8 721.1h0M1584.7 729.4h0M1593.3 729.4h0M1602.0 729.4h0M1610.6 729.4h0M1619.3 729.4h0M1627.9 729.4h0M1636.6 729.4h0M1645.2 729.4h0M1653.9 729.4h0M1662.5 729.4h0M1671.2 729.4h0M1679.8 729.4h0M1688.5 729.4h0M1697.1 729.4h0M1705.8 729.4h0M1714.4 729.4h0M1723.1 729.4h0M1731.7 729.4h0M1740.4 729.4h0M1749.0 729.4h0M1757.6 729.4h0M1766.3 729.4h0M1774.9 729.4h0M1783.6 729.4h0M1792.2 729.4h0M1800.9 729.4h0M1809.5 729.4h0M1818.2 729.4h0M1584.7 738.9h0M1593.0 738.9h0M1601.3 738.9h0M1609.6 738.9h0M1617.9 738.9h0M1626.2 738.9h0M1634.5 738.9h0M1642.8 738.9h0M1651.1 738.9h0M1659.3 738.9h0M1667.6 738.9h0M1687.8 738.9h0M1696.5 738.9h0M1705.2 738.9h0M1713.9 738.9h0M1722.6 738.9h0M1731.3 738.9h0M1740.0 738.9h0M1748.6 738.9h0M1757.3 738.9h0M1766.0 738.9h0M1774.7 738.9h0M1783.4 738.9h0M1792.1 738.9h0M1800.8 738.9h0M1809.5 738.9h0M1818.2 738.9h0M1826.9 738.9h0M1835.6 738.9h0M1844.3 738.9h0M1590.6 747.2h0M1598.5 747.2h0M1606.4 747.2h0M1614.3 747.2h0M1622.2 747.2h0M1630.1 747.2h0M1638.0 747.2h0M1666.5 747.2h0M1675.3 747.2h0M1684.1 747.2h0M1692.9 747.2h0M1701.8 747.2h0M1710.6 747.2h0M1719.4 747.2h0M1728.2 747.2h0M1737.1 747.2h0M1745.9 747.2h0M1795.7 747.2h0M1804.4 747.2h0M1813.1 747.2h0M1821.7 747.2h0M1830.4 747.2h0M1839.1 747.2h0M1847.8 747.2h0M1856.5 747.2h0M1865.2 747.2h0M1873.9 747.2h0M1597.7 755.5h0M1606.4 755.5h0M1615.1 755.5h0M1623.8 755.5h0M1649.9 755.5h0M1658.7 755.5h0M1667.4 755.5h0M1676.2 755.5h0M1685.0 755.5h0M1693.8 755.5h0M1702.6 755.5h0M1711.4 755.5h0M1720.2 755.5h0M1729.0 755.5h0M1737.8 755.5h0M1746.6 755.5h0M1755.4 755.5h0M1808.7 755.5h0M1816.9 755.5h0M1825.0 755.5h0M1833.2 755.5h0M1841.4 755.5h0M1849.5 755.5h0M1857.7 755.5h0M1865.9 755.5h0M1874.0 755.5h0M1882.2 755.5h0M1638.0 764.9h0M1646.1 764.9h0M1654.3 764.9h0M1662.4 764.9h0M1670.5 764.9h0M1678.7 764.9h0M1686.8 764.9h0M1694.9 764.9h0M1706.8 764.9h0M1715.3 764.9h0M1723.9 764.9h0M1732.4 764.9h0M1741.0 764.9h0M1749.5 764.9h0M1758.0 764.9h0M1766.6 764.9h0M1775.1 764.9h0M1783.7 764.9h0M1792.2 764.9h0M1800.8 764.9h0M1809.3 764.9h0M1817.9 764.9h0M1826.4 764.9h0M1835.0 764.9h0M1843.5 764.9h0M1852.1 764.9h0M1860.6 764.9h0M1869.2 764.9h0M1628.5 773.2h0M1636.7 773.2h0M1644.8 773.2h0M1652.9 773.2h0M1661.0 773.2h0M1669.2 773.2h0M1677.3 773.2h0M1685.4 773.2h0M1703.2 773.2h0M1711.6 773.2h0M1720.1 773.2h0M1728.5 773.2h0M1736.9 773.2h0M1745.4 773.2h0M1753.8 773.2h0M1762.2 773.2h0M1770.6 773.2h0M1779.1 773.2h0M1787.5 773.2h0M1795.9 773.2h0M1804.4 773.2h0M1812.8 773.2h0M1821.2 773.2h0M1829.7 773.2h0M1838.1 773.2h0M1846.5 773.2h0M1854.9 773.2h0M1621.4 781.5h0M1629.7 781.5h0M1638.0 781.5h0M1646.3 781.5h0M1654.6 781.5h0M1662.9 781.5h0M1671.2 781.5h0M1679.5 781.5h0M1697.3 781.5h0M1705.7 781.5h0M1714.1 781.5h0M1722.5 781.5h0M1730.9 781.5h0M1739.4 781.5h0M1747.8 781.5h0M1756.2 781.5h0M1764.6 781.5h0M1773.0 781.5h0M1781.4 781.5h0M1789.9 781.5h0M1798.3 781.5h0M1806.7 781.5h0M1815.1 781.5h0M1823.5 781.5h0M1831.9 781.5h0M1840.4 781.5h0M1848.8 781.5h0M1857.2 781.5h0M1865.6 781.5h0M1614.3 791.0h0M1623.1 791.0h0M1631.9 791.0h0M1640.7 791.0h0M1649.5 791.0h0M1658.3 791.0h0M1667.1 791.0h0M1675.9 791.0h0M1694.9 791.0h0M1703.4 791.0h0M1712.0 791.0h0M1720.5 791.0h0M1729.0 791.0h0M1737.5 791.0h0M1746.1 791.0h0M1754.6 791.0h0M1763.1 791.0h0M1771.6 791.0h0M1780.1 791.0h0M1788.7 791.0h0M1797.2 791.0h0M1805.7 791.0h0M1814.2 791.0h0M1822.8 791.0h0M1831.3 791.0h0M1839.8 791.0h0M1848.3 791.0h0M1856.9 791.0h0M1865.4 791.0h0M1873.9 791.0h0M1609.6 799.3h0M1618.7 799.3h0M1627.9 799.3h0M1637.0 799.3h0M1646.1 799.3h0M1655.3 799.3h0M1664.4 799.3h0M1673.6 799.3h0M1691.4 799.3h0M1699.8 799.3h0M1708.3 799.3h0M1716.8 799.3h0M1725.3 799.3h0M1733.8 799.3h0M1742.2 799.3h0M1750.7 799.3h0M1759.2 799.3h0M1767.7 799.3h0M1776.2 799.3h0M1784.6 799.3h0M1793.1 799.3h0M1801.6 799.3h0M1811.1 799.3h0M1820.1 799.3h0M1829.0 799.3h0M1838.0 799.3h0M1847.0 799.3h0M1856.0 799.3h0M1864.9 799.3h0M1873.9 799.3h0M1603.6 807.6h0M1611.8 807.6h0M1619.9 807.6h0M1628.1 807.6h0M1636.2 807.6h0M1644.4 807.6h0M1652.5 807.6h0M1660.7 807.6h0M1668.8 807.6h0M1689.0 807.6h0M1697.3 807.6h0M1705.6 807.6h0M1713.9 807.6h0M1722.2 807.6h0M1730.5 807.6h0M1738.8 807.6h0M1747.1 807.6h0M1755.4 807.6h0M1763.7 807.6h0M1772.0 807.6h0M1780.3 807.6h0M1788.6 807.6h0M1796.9 807.6h0M1811.1 807.6h0M1819.2 807.6h0M1827.4 807.6h0M1835.5 807.6h0M1843.7 807.6h0M1851.8 807.6h0M1860.0 807.6h0M1868.1 807.6h0M1876.3 807.6h0M1598.9 816.6h0M1607.5 816.6h0M1616.1 816.6h0M1624.7 816.6h0M1633.3 816.6h0M1641.9 816.6h0M1650.5 816.6h0M1659.1 816.6h0M1667.6 816.6h0M1687.8 816.6h0M1696.4 816.6h0M1705.0 816.6h0M1713.6 816.6h0M1722.2 816.6h0M1730.8 816.6h0M1739.4 816.6h0M1748.0 816.6h0M1756.6 816.6h0M1765.1 816.6h0M1773.7 816.6h0M1782.3 816.6h0M1790.9 816.6h0M1808.7 816.6h0M1816.9 816.6h0M1825.0 816.6h0M1833.2 816.6h0M1841.3 816.6h0M1849.5 816.6h0M1857.6 816.6h0M1865.8 816.6h0M1873.9 816.6h0M1595.3 825.4h0M1604.4 825.4h0M1613.4 825.4h0M1622.5 825.4h0M1631.5 825.4h0M1640.5 825.4h0M1649.6 825.4h0M1658.6 825.4h0M1667.6 825.4h0M1689.0 825.4h0M1697.3 825.4h0M1705.6 825.4h0M1713.9 825.4h0M1722.2 825.4h0M1730.5 825.4h0M1738.8 825.4h0M1747.1 825.4h0M1755.4 825.4h0M1763.7 825.4h0M1772.0 825.4h0M1780.3 825.4h0M1788.6 825.4h0M1817.0 825.4h0M1824.9 825.4h0M1832.8 825.4h0M1840.7 825.4h0M1848.6 825.4h0M1856.5 825.4h0M1864.4 825.4h0M1593.0 833.7h0M1601.3 833.7h0M1609.6 833.7h0M1617.9 833.7h0M1626.2 833.7h0M1634.5 833.7h0M1642.8 833.7h0M1651.1 833.7h0M1659.3 833.7h0M1667.6 833.7h0M1689.0 833.7h0M1697.9 833.7h0M1706.9 833.7h0M1715.8 833.7h0M1724.8 833.7h0M1733.7 833.7h0M1742.6 833.7h0M1751.6 833.7h0M1760.5 833.7h0M1769.5 833.7h0M1778.4 833.7h0M1787.4 833.7h0M1830.0 833.7h0M1841.9 833.7h0M1589.4 843.2h0M1598.2 843.2h0M1607.1 843.2h0M1615.9 843.2h0M1624.7 843.2h0M1633.5 843.2h0M1642.4 843.2h0M1651.2 843.2h0M1660.0 843.2h0M1668.8 843.2h0M1689.0 843.2h0M1697.3 843.2h0M1705.6 843.2h0M1713.9 843.2h0M1722.2 843.2h0M1730.5 843.2h0M1738.8 843.2h0M1747.1 843.2h0M1755.4 843.2h0M1763.7 843.2h0M1772.0 843.2h0M1780.3 843.2h0M1788.6 843.2h0M1587.0 851.5h0M1596.0 851.5h0M1605.0 851.5h0M1613.9 851.5h0M1622.9 851.5h0M1631.8 851.5h0M1640.8 851.5h0M1649.7 851.5h0M1658.7 851.5h0M1667.6 851.5h0M1690.2 851.5h0M1699.1 851.5h0M1708.1 851.5h0M1717.0 851.5h0M1725.9 851.5h0M1734.9 851.5h0M1743.8 851.5h0M1752.8 851.5h0M1761.7 851.5h0M1770.7 851.5h0M1779.6 851.5h0M1788.6 851.5h0M1849.0 851.5h0M1858.5 851.5h0M1868.0 851.5h0M1585.9 859.8h0M1594.2 859.8h0M1602.4 859.8h0M1610.7 859.8h0M1619.0 859.8h0M1627.3 859.8h0M1635.6 859.8h0M1643.9 859.8h0M1652.2 859.8h0M1660.5 859.8h0M1668.8 859.8h0M1691.4 859.8h0M1700.1 859.8h0M1708.8 859.8h0M1717.5 859.8h0M1726.3 859.8h0M1735.0 859.8h0M1743.7 859.8h0M1752.5 859.8h0M1761.2 859.8h0M1769.9 859.8h0M1778.6 859.8h0M1787.4 859.8h0M1821.7 859.8h0M1831.0 859.8h0M1840.2 859.8h0M1849.5 859.8h0M1858.7 859.8h0M1868.0 859.8h0M1584.7 868.1h0M1593.2 868.1h0M1601.8 868.1h0M1610.4 868.1h0M1618.9 868.1h0M1627.5 868.1h0M1636.0 868.1h0M1644.6 868.1h0M1653.2 868.1h0M1661.7 868.1h0M1693.7 868.1h0M1702.6 868.1h0M1711.5 868.1h0M1720.4 868.1h0M1729.3 868.1h0M1738.2 868.1h0M1747.1 868.1h0M1761.3 868.1h0M1770.2 868.1h0M1779.1 868.1h0M1788.0 868.1h0M1796.9 868.1h0M1805.7 868.1h0M1814.6 868.1h0M1823.5 868.1h0M1832.4 868.1h0M1841.3 868.1h0M1850.2 868.1h0M1859.1 868.1h0M1868.0 868.1h0M1583.5 876.4h0M1591.6 876.4h0M1599.8 876.4h0M1607.9 876.4h0M1616.1 876.4h0M1624.2 876.4h0M1632.4 876.4h0M1640.5 876.4h0M1648.7 876.4h0M1697.3 876.4h0M1705.4 876.4h0M1713.5 876.4h0M1721.7 876.4h0M1729.8 876.4h0M1737.9 876.4h0M1746.1 876.4h0M1754.2 876.4h0M1768.4 876.4h0M1776.7 876.4h0M1785.0 876.4h0M1793.3 876.4h0M1801.6 876.4h0M1809.9 876.4h0M1818.2 876.4h0M1826.5 876.4h0M1834.8 876.4h0M1843.1 876.4h0M1851.4 876.4h0M1859.7 876.4h0M1868.0 876.4h0M1582.3 885.9h0M1591.0 885.9h0M1599.7 885.9h0M1608.4 885.9h0M1617.1 885.9h0M1625.8 885.9h0M1634.5 885.9h0M1702.0 885.9h0M1710.2 885.9h0M1718.3 885.9h0M1726.4 885.9h0M1734.5 885.9h0M1742.7 885.9h0M1750.8 885.9h0M1758.9 885.9h0M1775.5 885.9h0M1784.3 885.9h0M1793.1 885.9h0M1801.8 885.9h0M1810.6 885.9h0M1819.4 885.9h0M1828.1 885.9h0M1836.9 885.9h0M1845.7 885.9h0M1854.5 885.9h0M1863.2 885.9h0M1582.3 894.2h0M1590.2 894.2h0M1598.1 894.2h0M1606.0 894.2h0M1613.9 894.2h0M1621.8 894.2h0M1629.7 894.2h0M1706.8 894.2h0M1714.9 894.2h0M1723.0 894.2h0M1731.1 894.2h0M1739.3 894.2h0M1747.4 894.2h0M1755.5 894.2h0M1763.7 894.2h0M1799.2 894.2h0M1808.2 894.2h0M1817.2 894.2h0M1826.2 894.2h0M1835.1 894.2h0M1844.1 894.2h0M1853.1 894.2h0M1862.1 894.2h0M1582.3 902.4h0M1590.4 902.4h0M1598.5 902.4h0M1606.6 902.4h0M1614.7 902.4h0M1622.8 902.4h0M1630.9 902.4h0M1716.2 902.4h0M1725.3 902.4h0M1734.4 902.4h0M1743.5 902.4h0M1752.6 902.4h0M1761.7 902.4h0M1770.8 902.4h0M1820.6 902.4h0M1829.5 902.4h0M1838.3 902.4h0M1847.2 902.4h0M1856.1 902.4h0M1582.3 910.7h0M1590.4 910.7h0M1598.5 910.7h0M1606.6 910.7h0M1614.7 910.7h0M1622.8 910.7h0M1630.9 910.7h0M1721.0 910.7h0M1729.5 910.7h0M1737.9 910.7h0M1746.4 910.7h0M1754.9 910.7h0M1763.3 910.7h0M1771.8 910.7h0M1780.3 910.7h0M1825.3 910.7h0M1833.2 910.7h0M1841.1 910.7h0M1849.0 910.7h0M1582.3 920.2h0M1590.4 920.2h0M1598.5 920.2h0M1606.6 920.2h0M1614.7 920.2h0M1622.8 920.2h0M1630.9 920.2h0M1725.7 920.2h0M1734.9 920.2h0M1744.0 920.2h0M1753.2 920.2h0M1762.3 920.2h0M1771.5 920.2h0M1780.6 920.2h0M1789.7 920.2h0M1582.3 928.5h0M1590.4 928.5h0M1598.5 928.5h0M1606.6 928.5h0M1614.7 928.5h0M1622.8 928.5h0M1630.9 928.5h0M1730.5 928.5h0M1738.8 928.5h0M1747.1 928.5h0M1755.4 928.5h0M1763.7 928.5h0M1772.0 928.5h0M1780.3 928.5h0M1788.6 928.5h0M1796.9 928.5h0M1583.5 936.8h0M1592.0 936.8h0M1600.4 936.8h0M1608.9 936.8h0M1617.4 936.8h0M1625.8 936.8h0M1634.3 936.8h0M1642.8 936.8h0M1651.2 936.8h0M1659.7 936.8h0M1668.2 936.8h0M1676.6 936.8h0M1685.1 936.8h0M1693.6 936.8h0M1702.0 936.8h0M1735.2 936.8h0M1743.5 936.8h0M1751.8 936.8h0M1760.1 936.8h0M1768.4 936.8h0M1776.7 936.8h0M1785.0 936.8h0M1793.3 936.8h0M1801.6 936.8h0M1585.9 945.1h0M1594.5 945.1h0M1603.1 945.1h0M1611.8 945.1h0M1620.4 945.1h0M1629.0 945.1h0M1637.7 945.1h0M1646.3 945.1h0M1654.9 945.1h0M1663.6 945.1h0M1672.2 945.1h0M1680.9 945.1h0M1689.5 945.1h0M1698.1 945.1h0M1706.8 945.1h0M1740.0 945.1h0M1748.1 945.1h0M1756.3 945.1h0M1764.4 945.1h0M1772.6 945.1h0M1780.7 945.1h0M1788.9 945.1h0M1797.0 945.1h0M1805.2 945.1h0M1588.2 953.4h0M1596.9 953.4h0M1605.7 953.4h0M1614.4 953.4h0M1623.1 953.4h0M1631.8 953.4h0M1640.6 953.4h0M1649.3 953.4h0M1658.0 953.4h0M1666.7 953.4h0M1675.4 953.4h0M1684.2 953.4h0M1692.9 953.4h0M1701.6 953.4h0M1710.3 953.4h0M1747.1 953.4h0M1755.9 953.4h0M1764.7 953.4h0M1773.5 953.4h0M1782.3 953.4h0M1791.1 953.4h0M1799.9 953.4h0M1808.7 953.4h0M1590.6 962.9h0M1599.2 962.9h0M1607.9 962.9h0M1616.5 962.9h0M1625.1 962.9h0M1633.8 962.9h0M1642.4 962.9h0M1651.1 962.9h0M1659.7 962.9h0M1668.3 962.9h0M1677.0 962.9h0M1685.6 962.9h0M1694.2 962.9h0M1702.9 962.9h0M1711.5 962.9h0M1753.0 962.9h0M1761.3 962.9h0M1769.6 962.9h0M1777.9 962.9h0M1786.2 962.9h0M1794.5 962.9h0M1802.8 962.9h0M1811.1 962.9h0M1593.0 971.2h0M1601.3 971.2h0M1609.7 971.2h0M1618.1 971.2h0M1626.5 971.2h0M1634.9 971.2h0M1643.3 971.2h0M1651.6 971.2h0M1660.0 971.2h0M1668.4 971.2h0M1676.8 971.2h0M1685.2 971.2h0M1693.6 971.2h0M1701.9 971.2h0M1710.3 971.2h0M1760.1 971.2h0M1768.8 971.2h0M1777.5 971.2h0M1786.2 971.2h0M1794.9 971.2h0M1803.6 971.2h0M1812.3 971.2h0M1598.5 981.3h0M1607.3 981.3h0M1616.1 981.3h0M1624.9 981.3h0M1633.6 981.3h0M1642.4 981.3h0M1651.2 981.3h0M1659.9 981.3h0M1668.7 981.3h0M1677.5 981.3h0M1686.3 981.3h0M1763.2 981.3h0M1771.1 981.3h0M1779.0 981.3h0M1786.9 981.3h0M1794.8 981.3h0M1802.7 981.3h0M1810.6 981.3h0M1603.3 989.6h0M1611.4 989.6h0M1619.5 989.6h0M1627.7 989.6h0M1635.8 989.6h0M1643.9 989.6h0M1652.0 989.6h0M1660.2 989.6h0M1765.6 989.6h0M1774.6 989.6h0M1783.6 989.6h0M1792.6 989.6h0M1801.6 989.6h0M1810.6 989.6h0M1606.8 997.9h0M1615.7 997.9h0M1624.6 997.9h0M1633.5 997.9h0M1642.4 997.9h0M1651.3 997.9h0M1660.2 997.9h0M1769.1 997.9h0M1777.2 997.9h0M1785.2 997.9h0M1793.3 997.9h0M1801.4 997.9h0M1809.4 997.9h0M1611.6 1006.2h0M1619.9 1006.2h0M1628.2 1006.2h0M1636.5 1006.2h0M1644.8 1006.2h0M1653.1 1006.2h0M1661.4 1006.2h0M1771.5 1006.2h0M1781.0 1006.2h0M1790.5 1006.2h0M1799.9 1006.2h0M1809.4 1006.2h0M1615.1 1015.7h0M1623.4 1015.7h0M1631.7 1015.7h0M1640.0 1015.7h0M1648.3 1015.7h0M1656.6 1015.7h0M1664.9 1015.7h0M1772.7 1015.7h0M1781.6 1015.7h0M1790.5 1015.7h0M1799.3 1015.7h0M1808.2 1015.7h0M1619.9 1024.0h0M1628.0 1024.0h0M1636.1 1024.0h0M1644.2 1024.0h0M1652.3 1024.0h0M1660.4 1024.0h0M1668.5 1024.0h0M1773.9 1024.0h0M1781.6 1024.0h0M1789.3 1024.0h0M1797.0 1024.0h0M1804.7 1024.0h0M1624.6 1032.3h0M1632.9 1032.3h0M1641.2 1032.3h0M1649.5 1032.3h0M1657.8 1032.3h0M1666.1 1032.3h0M1674.4 1032.3h0M1775.0 1032.3h0M1784.1 1032.3h0M1793.2 1032.3h0M1802.3 1032.3h0M1628.2 1041.8h0M1637.1 1041.8h0M1646.0 1041.8h0M1654.8 1041.8h0M1663.7 1041.8h0M1672.6 1041.8h0M1681.5 1041.8h0M1690.4 1041.8h0M1699.3 1041.8h0M1776.2 1041.8h0M1783.7 1041.8h0M1791.2 1041.8h0M1798.8 1041.8h0M1631.7 1050.1h0M1640.7 1050.1h0M1649.6 1050.1h0M1658.6 1050.1h0M1667.5 1050.1h0M1676.5 1050.1h0M1685.4 1050.1h0M1694.3 1050.1h0M1703.3 1050.1h0M1712.2 1050.1h0M1721.2 1050.1h0M1730.1 1050.1h0M1775.0 1050.1h0M1785.7 1050.1h0M1796.4 1050.1h0M1636.5 1058.4h0M1644.8 1058.4h0M1653.1 1058.4h0M1661.4 1058.4h0M1669.7 1058.4h0M1678.0 1058.4h0M1686.3 1058.4h0M1694.6 1058.4h0M1702.9 1058.4h0M1711.2 1058.4h0M1719.4 1058.4h0M1727.7 1058.4h0M1736.0 1058.4h0M1773.9 1058.4h0M1783.3 1058.4h0M1792.8 1058.4h0M1638.8 1067.8h0M1647.8 1067.8h0M1656.7 1067.8h0M1665.7 1067.8h0M1674.6 1067.8h0M1683.6 1067.8h0M1692.5 1067.8h0M1701.5 1067.8h0M1710.4 1067.8h0M1719.3 1067.8h0M1728.3 1067.8h0M1737.2 1067.8h0M1773.9 1067.8h0M1780.4 1067.8h0M1786.9 1067.8h0M1643.6 1076.1h0M1652.1 1076.1h0M1660.6 1076.1h0M1669.1 1076.1h0M1677.6 1076.1h0M1686.1 1076.1h0M1694.7 1076.1h0M1703.2 1076.1h0M1711.7 1076.1h0M1720.2 1076.1h0M1728.7 1076.1h0M1737.2 1076.1h0M1772.7 1076.1h0M1782.2 1076.1h0M1647.1 1084.4h0M1656.0 1084.4h0M1664.9 1084.4h0M1673.8 1084.4h0M1682.7 1084.4h0M1691.6 1084.4h0M1700.5 1084.4h0M1709.4 1084.4h0M1718.3 1084.4h0M1727.2 1084.4h0M1736.0 1084.4h0M1773.9 1084.4h0M1649.5 1092.7h0M1658.2 1092.7h0M1666.8 1092.7h0M1675.5 1092.7h0M1684.1 1092.7h0M1692.8 1092.7h0M1701.4 1092.7h0M1710.1 1092.7h0M1718.7 1092.7h0M1727.4 1092.7h0M1736.0 1092.7h0M1653.1 1102.2h0M1662.0 1102.2h0M1671.0 1102.2h0M1679.9 1102.2h0M1688.9 1102.2h0M1697.8 1102.2h0M1706.8 1102.2h0M1715.8 1102.2h0M1724.7 1102.2h0M1733.7 1102.2h0M1656.6 1110.5h0M1664.9 1110.5h0M1673.2 1110.5h0M1681.5 1110.5h0M1689.8 1110.5h0M1698.1 1110.5h0M1706.4 1110.5h0M1714.7 1110.5h0M1723.0 1110.5h0M1731.3 1110.5h0M1657.8 1118.8h0M1666.7 1118.8h0M1675.6 1118.8h0M1684.5 1118.8h0M1693.4 1118.8h0M1702.3 1118.8h0M1711.2 1118.8h0M1720.0 1118.8h0M1728.9 1118.8h0M1663.7 1128.3h0M1672.5 1128.3h0M1681.3 1128.3h0M1690.2 1128.3h0M1699.0 1128.3h0M1707.8 1128.3h0M1716.6 1128.3h0M1725.4 1128.3h0M1689.8 1136.6h0M1697.5 1136.6h0M1705.2 1136.6h0M1712.9 1136.6h0M1720.6 1136.6h0" stroke="#fff6e0" stroke-width="1.5" stroke-linecap="round" fill="none" transform="translate(2.2 -1.8)"/>
<path d="M1269.2 975.9h0M1278.7 975.9h0M1288.2 975.9h0M1297.7 975.9h0M1307.2 975.9h0M1267.4 984.7h0M1276.9 984.7h0M1286.4 984.7h0M1295.9 984.7h0M1305.4 984.7h0M1267.4 993.5h0M1276.9 993.5h0M1286.4 993.5h0M1295.9 993.5h0M1305.4 993.5h0M1167.9 1002.3h0M1177.4 1002.3h0M1186.9 1002.3h0M1196.4 1002.3h0M1267.3 1002.3h0M1276.8 1002.3h0M1286.3 1002.3h0M1295.8 1002.3h0M1305.3 1002.3h0M1165.1 1011.1h0M1174.6 1011.1h0M1184.1 1011.1h0M1193.6 1011.1h0M1203.1 1011.1h0M1267.2 1011.1h0M1276.7 1011.1h0M1286.2 1011.1h0M1295.7 1011.1h0M1305.2 1011.1h0M1167.4 1019.9h0M1176.9 1019.9h0M1186.4 1019.9h0M1195.9 1019.9h0M1205.4 1019.9h0M1267.1 1019.9h0M1276.6 1019.9h0M1286.1 1019.9h0M1295.6 1019.9h0M1305.1 1019.9h0M1164.9 1028.7h0M1174.4 1028.7h0M1183.9 1028.7h0M1193.4 1028.7h0M1202.9 1028.7h0M1212.4 1028.7h0M1267.1 1028.7h0M1276.6 1028.7h0M1286.1 1028.7h0M1295.6 1028.7h0M1305.1 1028.7h0M1167.1 1037.5h0M1176.6 1037.5h0M1186.1 1037.5h0M1195.6 1037.5h0M1205.1 1037.5h0M1214.6 1037.5h0M1267.0 1037.5h0M1276.5 1037.5h0M1286.0 1037.5h0M1295.5 1037.5h0M1305.0 1037.5h0M1164.5 1046.3h0M1174.0 1046.3h0M1183.5 1046.3h0M1193.0 1046.3h0M1202.5 1046.3h0M1212.0 1046.3h0M1221.5 1046.3h0M1266.9 1046.3h0M1276.4 1046.3h0M1285.9 1046.3h0M1295.4 1046.3h0M1304.9 1046.3h0M1166.6 1055.1h0M1176.1 1055.1h0M1185.6 1055.1h0M1195.1 1055.1h0M1204.6 1055.1h0M1214.1 1055.1h0M1223.6 1055.1h0M1266.8 1055.1h0M1276.3 1055.1h0M1285.8 1055.1h0M1295.3 1055.1h0M1304.8 1055.1h0M1168.7 1063.9h0M1178.2 1063.9h0M1187.7 1063.9h0M1197.2 1063.9h0M1206.7 1063.9h0M1216.2 1063.9h0M1225.7 1063.9h0M1266.7 1063.9h0M1276.2 1063.9h0M1285.7 1063.9h0M1295.2 1063.9h0M1304.7 1063.9h0M1166.1 1072.7h0M1175.6 1072.7h0M1185.1 1072.7h0M1194.6 1072.7h0M1204.1 1072.7h0M1213.6 1072.7h0M1223.1 1072.7h0M1232.6 1072.7h0M1266.6 1072.7h0M1276.1 1072.7h0M1285.6 1072.7h0M1295.1 1072.7h0M1304.6 1072.7h0M1168.2 1081.5h0M1177.7 1081.5h0M1187.2 1081.5h0M1196.7 1081.5h0M1206.2 1081.5h0M1215.7 1081.5h0M1225.2 1081.5h0M1234.7 1081.5h0M1266.5 1081.5h0M1276.0 1081.5h0M1285.5 1081.5h0M1295.0 1081.5h0M1304.5 1081.5h0M1165.6 1090.3h0M1175.1 1090.3h0M1184.6 1090.3h0M1194.1 1090.3h0M1203.6 1090.3h0M1213.1 1090.3h0M1222.6 1090.3h0M1232.1 1090.3h0M1241.6 1090.3h0M1266.1 1090.3h0M1275.6 1090.3h0M1285.1 1090.3h0M1294.6 1090.3h0M1304.1 1090.3h0M1165.0 1099.1h0M1174.5 1099.1h0M1184.0 1099.1h0M1193.5 1099.1h0M1203.0 1099.1h0M1212.5 1099.1h0M1222.0 1099.1h0M1231.5 1099.1h0M1241.0 1099.1h0M1250.5 1099.1h0M1265.7 1099.1h0M1275.2 1099.1h0M1284.7 1099.1h0M1294.2 1099.1h0M1303.7 1099.1h0M1167.5 1107.9h0M1177.0 1107.9h0M1186.5 1107.9h0M1196.0 1107.9h0M1205.5 1107.9h0M1215.0 1107.9h0M1224.5 1107.9h0M1234.0 1107.9h0M1243.5 1107.9h0M1253.0 1107.9h0M1262.5 1107.9h0M1272.0 1107.9h0M1281.5 1107.9h0M1291.0 1107.9h0M1300.5 1107.9h0M1166.5 1116.7h0M1176.0 1116.7h0M1185.5 1116.7h0M1195.0 1116.7h0M1204.5 1116.7h0M1214.0 1116.7h0M1223.5 1116.7h0M1233.0 1116.7h0M1242.5 1116.7h0M1252.0 1116.7h0M1261.5 1116.7h0M1271.0 1116.7h0M1280.5 1116.7h0M1290.0 1116.7h0M1299.5 1116.7h0M1161.7 1125.5h0M1171.2 1125.5h0M1180.7 1125.5h0M1190.2 1125.5h0M1199.7 1125.5h0M1223.4 1125.5h0M1232.9 1125.5h0M1242.4 1125.5h0M1251.9 1125.5h0M1261.4 1125.5h0M1270.9 1125.5h0M1280.4 1125.5h0M1289.9 1125.5h0M1299.4 1125.5h0M1160.3 1134.3h0M1169.8 1134.3h0M1179.3 1134.3h0M1188.8 1134.3h0M1198.3 1134.3h0M1224.3 1134.3h0M1233.8 1134.3h0M1243.3 1134.3h0M1252.8 1134.3h0M1262.3 1134.3h0M1271.8 1134.3h0M1281.3 1134.3h0M1290.8 1134.3h0M1300.3 1134.3h0M1159.4 1143.1h0M1168.9 1143.1h0M1178.4 1143.1h0M1187.9 1143.1h0M1197.4 1143.1h0M1229.8 1143.1h0M1239.3 1143.1h0M1248.8 1143.1h0M1258.3 1143.1h0M1267.8 1143.1h0M1277.3 1143.1h0M1286.8 1143.1h0M1296.3 1143.1h0M1158.4 1151.9h0M1167.9 1151.9h0M1177.4 1151.9h0M1186.9 1151.9h0M1196.4 1151.9h0M1230.6 1151.9h0M1240.1 1151.9h0M1249.6 1151.9h0M1259.1 1151.9h0M1268.6 1151.9h0M1278.1 1151.9h0M1287.6 1151.9h0M1297.1 1151.9h0M1157.4 1160.7h0M1166.9 1160.7h0M1176.4 1160.7h0M1185.9 1160.7h0M1195.4 1160.7h0M1236.0 1160.7h0M1245.5 1160.7h0M1255.0 1160.7h0M1264.5 1160.7h0M1274.0 1160.7h0M1283.5 1160.7h0M1293.0 1160.7h0M1156.3 1169.5h0M1165.8 1169.5h0M1175.3 1169.5h0M1184.8 1169.5h0M1194.3 1169.5h0M1236.6 1169.5h0M1246.1 1169.5h0M1255.6 1169.5h0M1265.1 1169.5h0M1274.6 1169.5h0M1284.1 1169.5h0M1293.6 1169.5h0M1155.4 1178.3h0M1164.9 1178.3h0M1174.4 1178.3h0M1183.9 1178.3h0M1193.4 1178.3h0M1241.9 1178.3h0M1251.4 1178.3h0M1260.9 1178.3h0M1270.4 1178.3h0M1279.9 1178.3h0M1289.4 1178.3h0M1154.5 1187.1h0M1164.0 1187.1h0M1173.5 1187.1h0M1183.0 1187.1h0M1192.5 1187.1h0M1242.5 1187.1h0M1252.0 1187.1h0M1261.5 1187.1h0M1271.0 1187.1h0M1280.5 1187.1h0M1290.0 1187.1h0M1153.5 1195.9h0M1163.0 1195.9h0M1172.5 1195.9h0M1182.0 1195.9h0M1191.5 1195.9h0M1247.8 1195.9h0M1257.3 1195.9h0M1266.8 1195.9h0M1276.3 1195.9h0M1285.8 1195.9h0M1152.6 1204.7h0M1162.1 1204.7h0M1171.6 1204.7h0M1181.1 1204.7h0M1190.6 1204.7h0M1248.3 1204.7h0M1257.8 1204.7h0M1267.3 1204.7h0M1276.8 1204.7h0M1286.3 1204.7h0M1151.8 1213.5h0M1161.3 1213.5h0M1170.8 1213.5h0M1180.3 1213.5h0M1189.8 1213.5h0M1253.4 1213.5h0M1262.9 1213.5h0M1272.4 1213.5h0M1281.9 1213.5h0M1150.9 1222.3h0M1160.4 1222.3h0M1169.9 1222.3h0M1179.4 1222.3h0M1188.9 1222.3h0M1255.5 1222.3h0M1265.0 1222.3h0M1274.5 1222.3h0M1398.2 905.7h0M1407.7 905.7h0M1384.7 914.5h0M1394.2 914.5h0M1403.7 914.5h0M1413.2 914.5h0M1376.2 923.3h0M1385.7 923.3h0M1395.2 923.3h0M1404.7 923.3h0M1414.2 923.3h0M1362.6 932.1h0M1372.1 932.1h0M1381.6 932.1h0M1391.1 932.1h0M1400.6 932.1h0M1410.1 932.1h0M1419.6 932.1h0M1354.1 940.9h0M1363.6 940.9h0M1373.1 940.9h0M1382.6 940.9h0M1392.1 940.9h0M1401.6 940.9h0M1411.1 940.9h0M1420.6 940.9h0M1347.1 949.7h0M1356.6 949.7h0M1366.1 949.7h0M1375.6 949.7h0M1385.1 949.7h0M1394.6 949.7h0M1404.1 949.7h0M1413.6 949.7h0M1423.1 949.7h0M1342.0 958.5h0M1351.5 958.5h0M1361.0 958.5h0M1370.5 958.5h0M1380.0 958.5h0M1389.5 958.5h0M1399.0 958.5h0M1408.5 958.5h0M1418.0 958.5h0M1427.5 958.5h0M1343.1 967.3h0M1352.6 967.3h0M1362.1 967.3h0M1371.6 967.3h0M1381.1 967.3h0M1390.6 967.3h0M1400.1 967.3h0M1409.6 967.3h0M1419.1 967.3h0M1428.6 967.3h0M1344.3 976.1h0M1353.8 976.1h0M1363.3 976.1h0M1372.8 976.1h0M1382.3 976.1h0M1391.8 976.1h0M1401.3 976.1h0M1410.8 976.1h0M1420.3 976.1h0M1429.8 976.1h0M1340.6 984.9h0M1350.1 984.9h0M1359.6 984.9h0M1369.1 984.9h0M1378.6 984.9h0M1388.1 984.9h0M1397.6 984.9h0M1407.1 984.9h0M1416.6 984.9h0M1426.1 984.9h0M1435.6 984.9h0M1341.5 993.7h0M1351.0 993.7h0M1360.5 993.7h0M1370.0 993.7h0M1379.5 993.7h0M1389.0 993.7h0M1408.0 993.7h0M1417.5 993.7h0M1427.0 993.7h0M1436.5 993.7h0M1341.7 1002.5h0M1351.2 1002.5h0M1360.7 1002.5h0M1408.2 1002.5h0M1417.7 1002.5h0M1427.2 1002.5h0M1436.7 1002.5h0M1341.9 1011.3h0M1351.4 1011.3h0M1360.9 1011.3h0M1408.4 1011.3h0M1417.9 1011.3h0M1427.4 1011.3h0M1436.9 1011.3h0M1337.4 1020.1h0M1346.9 1020.1h0M1356.4 1020.1h0M1365.9 1020.1h0M1413.4 1020.1h0M1422.9 1020.1h0M1432.4 1020.1h0M1441.9 1020.1h0M1337.7 1028.9h0M1347.2 1028.9h0M1356.7 1028.9h0M1366.2 1028.9h0M1413.7 1028.9h0M1423.2 1028.9h0M1432.7 1028.9h0M1442.2 1028.9h0M1338.0 1037.7h0M1347.5 1037.7h0M1357.0 1037.7h0M1366.5 1037.7h0M1414.0 1037.7h0M1423.5 1037.7h0M1433.0 1037.7h0M1442.5 1037.7h0M1338.2 1046.5h0M1347.7 1046.5h0M1357.2 1046.5h0M1366.7 1046.5h0M1404.7 1046.5h0M1414.2 1046.5h0M1423.7 1046.5h0M1433.2 1046.5h0M1442.7 1046.5h0M1338.5 1055.3h0M1348.0 1055.3h0M1357.5 1055.3h0M1367.0 1055.3h0M1405.0 1055.3h0M1414.5 1055.3h0M1424.0 1055.3h0M1433.5 1055.3h0M1443.0 1055.3h0M1334.0 1064.1h0M1343.5 1064.1h0M1353.0 1064.1h0M1362.5 1064.1h0M1410.0 1064.1h0M1419.5 1064.1h0M1429.0 1064.1h0M1438.5 1064.1h0M1448.0 1064.1h0M1334.0 1072.9h0M1343.5 1072.9h0M1353.0 1072.9h0M1362.5 1072.9h0M1410.0 1072.9h0M1419.5 1072.9h0M1429.0 1072.9h0M1438.5 1072.9h0M1448.0 1072.9h0M1333.8 1081.7h0M1343.3 1081.7h0M1352.8 1081.7h0M1362.3 1081.7h0M1371.8 1081.7h0M1381.3 1081.7h0M1390.8 1081.7h0M1400.3 1081.7h0M1409.8 1081.7h0M1419.3 1081.7h0M1428.8 1081.7h0M1438.3 1081.7h0M1447.8 1081.7h0M1333.5 1090.5h0M1343.0 1090.5h0M1352.5 1090.5h0M1362.0 1090.5h0M1371.5 1090.5h0M1381.0 1090.5h0M1390.5 1090.5h0M1400.0 1090.5h0M1409.5 1090.5h0M1419.0 1090.5h0M1428.5 1090.5h0M1438.0 1090.5h0M1447.5 1090.5h0M1333.2 1099.3h0M1342.7 1099.3h0M1352.2 1099.3h0M1361.7 1099.3h0M1371.2 1099.3h0M1380.7 1099.3h0M1390.2 1099.3h0M1399.7 1099.3h0M1409.2 1099.3h0M1418.7 1099.3h0M1428.2 1099.3h0M1437.7 1099.3h0M1447.2 1099.3h0M1332.8 1108.1h0M1342.3 1108.1h0M1351.8 1108.1h0M1361.3 1108.1h0M1370.8 1108.1h0M1380.3 1108.1h0M1389.8 1108.1h0M1399.3 1108.1h0M1408.8 1108.1h0M1418.3 1108.1h0M1427.8 1108.1h0M1437.3 1108.1h0M1446.8 1108.1h0M1332.5 1116.9h0M1342.0 1116.9h0M1351.5 1116.9h0M1361.0 1116.9h0M1370.5 1116.9h0M1380.0 1116.9h0M1389.5 1116.9h0M1399.0 1116.9h0M1408.5 1116.9h0M1418.0 1116.9h0M1427.5 1116.9h0M1437.0 1116.9h0M1446.5 1116.9h0M1329.3 1125.7h0M1338.8 1125.7h0M1348.3 1125.7h0M1357.8 1125.7h0M1409.3 1125.7h0M1418.8 1125.7h0M1428.3 1125.7h0M1437.8 1125.7h0M1447.3 1125.7h0M1327.5 1134.5h0M1337.0 1134.5h0M1346.5 1134.5h0M1356.0 1134.5h0M1409.4 1134.5h0M1418.9 1134.5h0M1428.4 1134.5h0M1437.9 1134.5h0M1447.4 1134.5h0M1325.6 1143.3h0M1335.1 1143.3h0M1344.6 1143.3h0M1354.1 1143.3h0M1409.6 1143.3h0M1419.1 1143.3h0M1428.6 1143.3h0M1438.1 1143.3h0M1447.6 1143.3h0M1323.8 1152.1h0M1333.3 1152.1h0M1342.8 1152.1h0M1352.3 1152.1h0M1409.8 1152.1h0M1419.3 1152.1h0M1428.8 1152.1h0M1438.3 1152.1h0M1447.8 1152.1h0M1322.0 1160.9h0M1331.5 1160.9h0M1341.0 1160.9h0M1350.5 1160.9h0M1409.9 1160.9h0M1419.4 1160.9h0M1428.9 1160.9h0M1438.4 1160.9h0M1447.9 1160.9h0M1320.2 1169.7h0M1329.7 1169.7h0M1339.2 1169.7h0M1348.7 1169.7h0M1410.0 1169.7h0M1419.5 1169.7h0M1429.0 1169.7h0M1438.5 1169.7h0M1448.0 1169.7h0M1318.5 1178.5h0M1328.0 1178.5h0M1337.5 1178.5h0M1347.0 1178.5h0M1410.1 1178.5h0M1419.6 1178.5h0M1429.1 1178.5h0M1438.6 1178.5h0M1448.1 1178.5h0M1316.9 1187.3h0M1326.4 1187.3h0M1335.9 1187.3h0M1345.4 1187.3h0M1410.2 1187.3h0M1419.7 1187.3h0M1429.2 1187.3h0M1438.7 1187.3h0M1448.2 1187.3h0M1314.7 1196.1h0M1324.2 1196.1h0M1333.7 1196.1h0M1343.2 1196.1h0M1316.6 1204.9h0M1326.1 1204.9h0M1335.6 1204.9h0M1313.8 1213.7h0M1323.3 1213.7h0M1332.8 1213.7h0M1547.5 739.1h0M1557.0 739.1h0M1539.4 747.9h0M1548.9 747.9h0M1558.4 747.9h0M1531.6 756.7h0M1541.1 756.7h0M1550.6 756.7h0M1560.1 756.7h0M1524.1 765.5h0M1533.6 765.5h0M1543.1 765.5h0M1552.6 765.5h0M1562.1 765.5h0M1516.9 774.3h0M1526.4 774.3h0M1535.9 774.3h0M1545.4 774.3h0M1554.9 774.3h0M1564.4 774.3h0M1516.6 783.1h0M1526.1 783.1h0M1535.6 783.1h0M1545.1 783.1h0M1554.6 783.1h0M1564.1 783.1h0M1516.8 791.9h0M1526.3 791.9h0M1535.8 791.9h0M1545.3 791.9h0M1554.8 791.9h0M1564.3 791.9h0M1517.3 800.7h0M1526.8 800.7h0M1536.3 800.7h0M1545.8 800.7h0M1555.3 800.7h0M1564.8 800.7h0M1518.0 809.5h0M1527.5 809.5h0M1537.0 809.5h0M1546.5 809.5h0M1556.0 809.5h0M1565.5 809.5h0M1518.2 818.3h0M1527.7 818.3h0M1537.2 818.3h0M1546.7 818.3h0M1556.2 818.3h0M1565.7 818.3h0M1518.4 827.1h0M1527.9 827.1h0M1537.4 827.1h0M1546.9 827.1h0M1556.4 827.1h0M1565.9 827.1h0M1467.5 835.9h0M1518.4 835.9h0M1527.9 835.9h0M1537.4 835.9h0M1546.9 835.9h0M1556.4 835.9h0M1565.9 835.9h0M1460.7 844.7h0M1470.2 844.7h0M1518.0 844.7h0M1527.5 844.7h0M1537.0 844.7h0M1546.5 844.7h0M1556.0 844.7h0M1565.5 844.7h0M1453.8 853.5h0M1463.3 853.5h0M1472.8 853.5h0M1517.3 853.5h0M1526.8 853.5h0M1536.3 853.5h0M1545.8 853.5h0M1555.3 853.5h0M1564.8 853.5h0M1446.8 862.3h0M1456.3 862.3h0M1465.8 862.3h0M1475.3 862.3h0M1521.3 862.3h0M1530.8 862.3h0M1540.3 862.3h0M1549.8 862.3h0M1559.3 862.3h0M1440.4 871.1h0M1449.9 871.1h0M1459.4 871.1h0M1468.9 871.1h0M1478.4 871.1h0M1520.6 871.1h0M1530.1 871.1h0M1539.6 871.1h0M1549.1 871.1h0M1558.6 871.1h0M1440.9 879.9h0M1450.4 879.9h0M1459.9 879.9h0M1469.4 879.9h0M1478.9 879.9h0M1519.8 879.9h0M1529.3 879.9h0M1538.8 879.9h0M1548.3 879.9h0M1557.8 879.9h0M1442.0 888.7h0M1451.5 888.7h0M1461.0 888.7h0M1470.5 888.7h0M1480.0 888.7h0M1518.8 888.7h0M1528.3 888.7h0M1537.8 888.7h0M1547.3 888.7h0M1556.8 888.7h0M1443.9 897.5h0M1453.4 897.5h0M1462.9 897.5h0M1472.4 897.5h0M1481.9 897.5h0M1517.9 897.5h0M1527.4 897.5h0M1536.9 897.5h0M1546.4 897.5h0M1555.9 897.5h0M1446.0 906.3h0M1455.5 906.3h0M1465.0 906.3h0M1474.5 906.3h0M1484.0 906.3h0M1516.9 906.3h0M1526.4 906.3h0M1535.9 906.3h0M1545.4 906.3h0M1554.9 906.3h0M1448.2 915.1h0M1457.7 915.1h0M1467.2 915.1h0M1476.7 915.1h0M1486.2 915.1h0M1515.9 915.1h0M1525.4 915.1h0M1534.9 915.1h0M1544.4 915.1h0M1553.9 915.1h0M1450.8 923.9h0M1460.3 923.9h0M1469.8 923.9h0M1479.3 923.9h0M1488.8 923.9h0M1519.7 923.9h0M1529.2 923.9h0M1538.7 923.9h0M1548.2 923.9h0M1452.2 932.7h0M1461.7 932.7h0M1471.2 932.7h0M1480.7 932.7h0M1490.2 932.7h0M1499.7 932.7h0M1509.2 932.7h0M1518.7 932.7h0M1528.2 932.7h0M1537.7 932.7h0M1547.2 932.7h0M1452.6 941.5h0M1462.1 941.5h0M1471.6 941.5h0M1481.1 941.5h0M1490.6 941.5h0M1500.1 941.5h0M1509.6 941.5h0M1519.1 941.5h0M1528.6 941.5h0M1538.1 941.5h0M1547.6 941.5h0M1457.8 950.3h0M1467.3 950.3h0M1476.8 950.3h0M1486.3 950.3h0M1495.8 950.3h0M1505.3 950.3h0M1514.8 950.3h0M1524.3 950.3h0M1533.8 950.3h0M1543.3 950.3h0M1458.2 959.1h0M1467.7 959.1h0M1477.2 959.1h0M1486.7 959.1h0M1496.2 959.1h0M1505.7 959.1h0M1515.2 959.1h0M1524.7 959.1h0M1534.2 959.1h0M1543.7 959.1h0M1459.5 967.9h0M1469.0 967.9h0M1478.5 967.9h0M1488.0 967.9h0M1497.5 967.9h0M1507.0 967.9h0M1516.5 967.9h0M1526.0 967.9h0M1535.5 967.9h0M1545.0 967.9h0M1462.7 976.7h0M1472.2 976.7h0M1481.7 976.7h0M1491.2 976.7h0M1500.7 976.7h0M1510.2 976.7h0M1519.7 976.7h0M1529.2 976.7h0M1538.7 976.7h0M1548.2 976.7h0M1461.8 985.5h0M1471.3 985.5h0M1480.8 985.5h0M1490.3 985.5h0M1499.8 985.5h0M1509.3 985.5h0M1518.8 985.5h0M1528.3 985.5h0M1537.8 985.5h0M1547.3 985.5h0M1556.8 985.5h0M1466.4 994.3h0M1475.9 994.3h0M1485.4 994.3h0M1494.9 994.3h0M1504.4 994.3h0M1513.9 994.3h0M1523.4 994.3h0M1532.9 994.3h0M1542.4 994.3h0M1551.9 994.3h0M1561.4 994.3h0M1465.4 1003.1h0M1474.9 1003.1h0M1484.4 1003.1h0M1493.9 1003.1h0M1503.4 1003.1h0M1512.9 1003.1h0M1522.4 1003.1h0M1531.9 1003.1h0M1541.4 1003.1h0M1550.9 1003.1h0M1560.4 1003.1h0M1569.9 1003.1h0M1469.0 1011.9h0M1478.5 1011.9h0M1488.0 1011.9h0M1497.5 1011.9h0M1507.0 1011.9h0M1516.5 1011.9h0M1526.0 1011.9h0M1535.5 1011.9h0M1545.0 1011.9h0M1554.5 1011.9h0M1564.0 1011.9h0M1573.5 1011.9h0M1472.7 1020.7h0M1482.2 1020.7h0M1491.7 1020.7h0M1501.2 1020.7h0M1510.7 1020.7h0M1520.2 1020.7h0M1529.7 1020.7h0M1539.2 1020.7h0M1548.7 1020.7h0M1558.2 1020.7h0M1567.7 1020.7h0M1577.2 1020.7h0M1471.4 1029.5h0M1480.9 1029.5h0M1490.4 1029.5h0M1499.9 1029.5h0M1509.4 1029.5h0M1518.9 1029.5h0M1528.4 1029.5h0M1537.9 1029.5h0M1547.4 1029.5h0M1556.9 1029.5h0M1566.4 1029.5h0M1575.9 1029.5h0M1585.4 1029.5h0M1473.1 1038.3h0M1482.6 1038.3h0M1492.1 1038.3h0M1501.6 1038.3h0M1511.1 1038.3h0M1546.1 1038.3h0M1555.6 1038.3h0M1565.1 1038.3h0M1574.6 1038.3h0M1584.1 1038.3h0M1593.6 1038.3h0M1473.8 1047.1h0M1483.3 1047.1h0M1492.8 1047.1h0M1502.3 1047.1h0M1511.8 1047.1h0M1551.1 1047.1h0M1560.6 1047.1h0M1570.1 1047.1h0M1579.6 1047.1h0M1589.1 1047.1h0M1598.6 1047.1h0M1474.5 1055.9h0M1484.0 1055.9h0M1493.5 1055.9h0M1503.0 1055.9h0M1512.5 1055.9h0M1555.9 1055.9h0M1565.4 1055.9h0M1574.9 1055.9h0M1584.4 1055.9h0M1593.9 1055.9h0M1603.4 1055.9h0M1475.2 1064.7h0M1484.7 1064.7h0M1494.2 1064.7h0M1503.7 1064.7h0M1513.2 1064.7h0M1559.9 1064.7h0M1569.4 1064.7h0M1578.9 1064.7h0M1588.4 1064.7h0M1597.9 1064.7h0M1607.4 1064.7h0M1475.9 1073.5h0M1485.4 1073.5h0M1494.9 1073.5h0M1504.4 1073.5h0M1513.9 1073.5h0M1563.4 1073.5h0M1572.9 1073.5h0M1582.4 1073.5h0M1591.9 1073.5h0M1601.4 1073.5h0M1610.9 1073.5h0M1476.5 1082.3h0M1486.0 1082.3h0M1495.5 1082.3h0M1505.0 1082.3h0M1514.5 1082.3h0M1566.6 1082.3h0M1576.1 1082.3h0M1585.6 1082.3h0M1595.1 1082.3h0M1604.6 1082.3h0M1614.1 1082.3h0M1477.1 1091.1h0M1486.6 1091.1h0M1496.1 1091.1h0M1505.6 1091.1h0M1515.1 1091.1h0M1569.7 1091.1h0M1579.2 1091.1h0M1588.7 1091.1h0M1598.2 1091.1h0M1607.7 1091.1h0M1617.2 1091.1h0M1477.6 1099.9h0M1487.1 1099.9h0M1496.6 1099.9h0M1506.1 1099.9h0M1515.6 1099.9h0M1572.3 1099.9h0M1581.8 1099.9h0M1591.3 1099.9h0M1600.8 1099.9h0M1610.3 1099.9h0M1619.8 1099.9h0M1478.1 1108.7h0M1487.6 1108.7h0M1497.1 1108.7h0M1506.6 1108.7h0M1516.1 1108.7h0M1573.5 1108.7h0M1583.0 1108.7h0M1592.5 1108.7h0M1602.0 1108.7h0M1611.5 1108.7h0M1621.0 1108.7h0M1478.6 1117.5h0M1488.1 1117.5h0M1497.6 1117.5h0M1507.1 1117.5h0M1516.6 1117.5h0M1574.7 1117.5h0M1584.2 1117.5h0M1593.7 1117.5h0M1603.2 1117.5h0M1612.7 1117.5h0M1622.2 1117.5h0M1479.0 1126.3h0M1488.5 1126.3h0M1498.0 1126.3h0M1507.5 1126.3h0M1517.0 1126.3h0M1577.2 1126.3h0M1586.7 1126.3h0M1596.2 1126.3h0M1605.7 1126.3h0M1615.2 1126.3h0M1479.4 1135.1h0M1488.9 1135.1h0M1498.4 1135.1h0M1507.9 1135.1h0M1517.4 1135.1h0M1479.7 1143.9h0M1489.2 1143.9h0M1498.7 1143.9h0M1508.2 1143.9h0M1517.7 1143.9h0M1481.9 1152.7h0M1491.4 1152.7h0M1500.9 1152.7h0M1510.4 1152.7h0M1478.9 1161.5h0M1488.4 1161.5h0M1497.9 1161.5h0" stroke="#7a2a70" stroke-width="7.4" stroke-linecap="round" fill="none"/>
<path d="M1269.2 975.9h0M1278.7 975.9h0M1288.2 975.9h0M1297.7 975.9h0M1307.2 975.9h0M1267.4 984.7h0M1276.9 984.7h0M1286.4 984.7h0M1295.9 984.7h0M1305.4 984.7h0M1267.4 993.5h0M1276.9 993.5h0M1286.4 993.5h0M1295.9 993.5h0M1305.4 993.5h0M1167.9 1002.3h0M1177.4 1002.3h0M1186.9 1002.3h0M1196.4 1002.3h0M1267.3 1002.3h0M1276.8 1002.3h0M1286.3 1002.3h0M1295.8 1002.3h0M1305.3 1002.3h0M1165.1 1011.1h0M1174.6 1011.1h0M1184.1 1011.1h0M1193.6 1011.1h0M1203.1 1011.1h0M1267.2 1011.1h0M1276.7 1011.1h0M1286.2 1011.1h0M1295.7 1011.1h0M1305.2 1011.1h0M1167.4 1019.9h0M1176.9 1019.9h0M1186.4 1019.9h0M1195.9 1019.9h0M1205.4 1019.9h0M1267.1 1019.9h0M1276.6 1019.9h0M1286.1 1019.9h0M1295.6 1019.9h0M1305.1 1019.9h0M1164.9 1028.7h0M1174.4 1028.7h0M1183.9 1028.7h0M1193.4 1028.7h0M1202.9 1028.7h0M1212.4 1028.7h0M1267.1 1028.7h0M1276.6 1028.7h0M1286.1 1028.7h0M1295.6 1028.7h0M1305.1 1028.7h0M1167.1 1037.5h0M1176.6 1037.5h0M1186.1 1037.5h0M1195.6 1037.5h0M1205.1 1037.5h0M1214.6 1037.5h0M1267.0 1037.5h0M1276.5 1037.5h0M1286.0 1037.5h0M1295.5 1037.5h0M1305.0 1037.5h0M1164.5 1046.3h0M1174.0 1046.3h0M1183.5 1046.3h0M1193.0 1046.3h0M1202.5 1046.3h0M1212.0 1046.3h0M1221.5 1046.3h0M1266.9 1046.3h0M1276.4 1046.3h0M1285.9 1046.3h0M1295.4 1046.3h0M1304.9 1046.3h0M1166.6 1055.1h0M1176.1 1055.1h0M1185.6 1055.1h0M1195.1 1055.1h0M1204.6 1055.1h0M1214.1 1055.1h0M1223.6 1055.1h0M1266.8 1055.1h0M1276.3 1055.1h0M1285.8 1055.1h0M1295.3 1055.1h0M1304.8 1055.1h0M1168.7 1063.9h0M1178.2 1063.9h0M1187.7 1063.9h0M1197.2 1063.9h0M1206.7 1063.9h0M1216.2 1063.9h0M1225.7 1063.9h0M1266.7 1063.9h0M1276.2 1063.9h0M1285.7 1063.9h0M1295.2 1063.9h0M1304.7 1063.9h0M1166.1 1072.7h0M1175.6 1072.7h0M1185.1 1072.7h0M1194.6 1072.7h0M1204.1 1072.7h0M1213.6 1072.7h0M1223.1 1072.7h0M1232.6 1072.7h0M1266.6 1072.7h0M1276.1 1072.7h0M1285.6 1072.7h0M1295.1 1072.7h0M1304.6 1072.7h0M1168.2 1081.5h0M1177.7 1081.5h0M1187.2 1081.5h0M1196.7 1081.5h0M1206.2 1081.5h0M1215.7 1081.5h0M1225.2 1081.5h0M1234.7 1081.5h0M1266.5 1081.5h0M1276.0 1081.5h0M1285.5 1081.5h0M1295.0 1081.5h0M1304.5 1081.5h0M1165.6 1090.3h0M1175.1 1090.3h0M1184.6 1090.3h0M1194.1 1090.3h0M1203.6 1090.3h0M1213.1 1090.3h0M1222.6 1090.3h0M1232.1 1090.3h0M1241.6 1090.3h0M1266.1 1090.3h0M1275.6 1090.3h0M1285.1 1090.3h0M1294.6 1090.3h0M1304.1 1090.3h0M1165.0 1099.1h0M1174.5 1099.1h0M1184.0 1099.1h0M1193.5 1099.1h0M1203.0 1099.1h0M1212.5 1099.1h0M1222.0 1099.1h0M1231.5 1099.1h0M1241.0 1099.1h0M1250.5 1099.1h0M1265.7 1099.1h0M1275.2 1099.1h0M1284.7 1099.1h0M1294.2 1099.1h0M1303.7 1099.1h0M1167.5 1107.9h0M1177.0 1107.9h0M1186.5 1107.9h0M1196.0 1107.9h0M1205.5 1107.9h0M1215.0 1107.9h0M1224.5 1107.9h0M1234.0 1107.9h0M1243.5 1107.9h0M1253.0 1107.9h0M1262.5 1107.9h0M1272.0 1107.9h0M1281.5 1107.9h0M1291.0 1107.9h0M1300.5 1107.9h0M1166.5 1116.7h0M1176.0 1116.7h0M1185.5 1116.7h0M1195.0 1116.7h0M1204.5 1116.7h0M1214.0 1116.7h0M1223.5 1116.7h0M1233.0 1116.7h0M1242.5 1116.7h0M1252.0 1116.7h0M1261.5 1116.7h0M1271.0 1116.7h0M1280.5 1116.7h0M1290.0 1116.7h0M1299.5 1116.7h0M1161.7 1125.5h0M1171.2 1125.5h0M1180.7 1125.5h0M1190.2 1125.5h0M1199.7 1125.5h0M1223.4 1125.5h0M1232.9 1125.5h0M1242.4 1125.5h0M1251.9 1125.5h0M1261.4 1125.5h0M1270.9 1125.5h0M1280.4 1125.5h0M1289.9 1125.5h0M1299.4 1125.5h0M1160.3 1134.3h0M1169.8 1134.3h0M1179.3 1134.3h0M1188.8 1134.3h0M1198.3 1134.3h0M1224.3 1134.3h0M1233.8 1134.3h0M1243.3 1134.3h0M1252.8 1134.3h0M1262.3 1134.3h0M1271.8 1134.3h0M1281.3 1134.3h0M1290.8 1134.3h0M1300.3 1134.3h0M1159.4 1143.1h0M1168.9 1143.1h0M1178.4 1143.1h0M1187.9 1143.1h0M1197.4 1143.1h0M1229.8 1143.1h0M1239.3 1143.1h0M1248.8 1143.1h0M1258.3 1143.1h0M1267.8 1143.1h0M1277.3 1143.1h0M1286.8 1143.1h0M1296.3 1143.1h0M1158.4 1151.9h0M1167.9 1151.9h0M1177.4 1151.9h0M1186.9 1151.9h0M1196.4 1151.9h0M1230.6 1151.9h0M1240.1 1151.9h0M1249.6 1151.9h0M1259.1 1151.9h0M1268.6 1151.9h0M1278.1 1151.9h0M1287.6 1151.9h0M1297.1 1151.9h0M1157.4 1160.7h0M1166.9 1160.7h0M1176.4 1160.7h0M1185.9 1160.7h0M1195.4 1160.7h0M1236.0 1160.7h0M1245.5 1160.7h0M1255.0 1160.7h0M1264.5 1160.7h0M1274.0 1160.7h0M1283.5 1160.7h0M1293.0 1160.7h0M1156.3 1169.5h0M1165.8 1169.5h0M1175.3 1169.5h0M1184.8 1169.5h0M1194.3 1169.5h0M1236.6 1169.5h0M1246.1 1169.5h0M1255.6 1169.5h0M1265.1 1169.5h0M1274.6 1169.5h0M1284.1 1169.5h0M1293.6 1169.5h0M1155.4 1178.3h0M1164.9 1178.3h0M1174.4 1178.3h0M1183.9 1178.3h0M1193.4 1178.3h0M1241.9 1178.3h0M1251.4 1178.3h0M1260.9 1178.3h0M1270.4 1178.3h0M1279.9 1178.3h0M1289.4 1178.3h0M1154.5 1187.1h0M1164.0 1187.1h0M1173.5 1187.1h0M1183.0 1187.1h0M1192.5 1187.1h0M1242.5 1187.1h0M1252.0 1187.1h0M1261.5 1187.1h0M1271.0 1187.1h0M1280.5 1187.1h0M1290.0 1187.1h0M1153.5 1195.9h0M1163.0 1195.9h0M1172.5 1195.9h0M1182.0 1195.9h0M1191.5 1195.9h0M1247.8 1195.9h0M1257.3 1195.9h0M1266.8 1195.9h0M1276.3 1195.9h0M1285.8 1195.9h0M1152.6 1204.7h0M1162.1 1204.7h0M1171.6 1204.7h0M1181.1 1204.7h0M1190.6 1204.7h0M1248.3 1204.7h0M1257.8 1204.7h0M1267.3 1204.7h0M1276.8 1204.7h0M1286.3 1204.7h0M1151.8 1213.5h0M1161.3 1213.5h0M1170.8 1213.5h0M1180.3 1213.5h0M1189.8 1213.5h0M1253.4 1213.5h0M1262.9 1213.5h0M1272.4 1213.5h0M1281.9 1213.5h0M1150.9 1222.3h0M1160.4 1222.3h0M1169.9 1222.3h0M1179.4 1222.3h0M1188.9 1222.3h0M1255.5 1222.3h0M1265.0 1222.3h0M1274.5 1222.3h0M1398.2 905.7h0M1407.7 905.7h0M1384.7 914.5h0M1394.2 914.5h0M1403.7 914.5h0M1413.2 914.5h0M1376.2 923.3h0M1385.7 923.3h0M1395.2 923.3h0M1404.7 923.3h0M1414.2 923.3h0M1362.6 932.1h0M1372.1 932.1h0M1381.6 932.1h0M1391.1 932.1h0M1400.6 932.1h0M1410.1 932.1h0M1419.6 932.1h0M1354.1 940.9h0M1363.6 940.9h0M1373.1 940.9h0M1382.6 940.9h0M1392.1 940.9h0M1401.6 940.9h0M1411.1 940.9h0M1420.6 940.9h0M1347.1 949.7h0M1356.6 949.7h0M1366.1 949.7h0M1375.6 949.7h0M1385.1 949.7h0M1394.6 949.7h0M1404.1 949.7h0M1413.6 949.7h0M1423.1 949.7h0M1342.0 958.5h0M1351.5 958.5h0M1361.0 958.5h0M1370.5 958.5h0M1380.0 958.5h0M1389.5 958.5h0M1399.0 958.5h0M1408.5 958.5h0M1418.0 958.5h0M1427.5 958.5h0M1343.1 967.3h0M1352.6 967.3h0M1362.1 967.3h0M1371.6 967.3h0M1381.1 967.3h0M1390.6 967.3h0M1400.1 967.3h0M1409.6 967.3h0M1419.1 967.3h0M1428.6 967.3h0M1344.3 976.1h0M1353.8 976.1h0M1363.3 976.1h0M1372.8 976.1h0M1382.3 976.1h0M1391.8 976.1h0M1401.3 976.1h0M1410.8 976.1h0M1420.3 976.1h0M1429.8 976.1h0M1340.6 984.9h0M1350.1 984.9h0M1359.6 984.9h0M1369.1 984.9h0M1378.6 984.9h0M1388.1 984.9h0M1397.6 984.9h0M1407.1 984.9h0M1416.6 984.9h0M1426.1 984.9h0M1435.6 984.9h0M1341.5 993.7h0M1351.0 993.7h0M1360.5 993.7h0M1370.0 993.7h0M1379.5 993.7h0M1389.0 993.7h0M1408.0 993.7h0M1417.5 993.7h0M1427.0 993.7h0M1436.5 993.7h0M1341.7 1002.5h0M1351.2 1002.5h0M1360.7 1002.5h0M1408.2 1002.5h0M1417.7 1002.5h0M1427.2 1002.5h0M1436.7 1002.5h0M1341.9 1011.3h0M1351.4 1011.3h0M1360.9 1011.3h0M1408.4 1011.3h0M1417.9 1011.3h0M1427.4 1011.3h0M1436.9 1011.3h0M1337.4 1020.1h0M1346.9 1020.1h0M1356.4 1020.1h0M1365.9 1020.1h0M1413.4 1020.1h0M1422.9 1020.1h0M1432.4 1020.1h0M1441.9 1020.1h0M1337.7 1028.9h0M1347.2 1028.9h0M1356.7 1028.9h0M1366.2 1028.9h0M1413.7 1028.9h0M1423.2 1028.9h0M1432.7 1028.9h0M1442.2 1028.9h0M1338.0 1037.7h0M1347.5 1037.7h0M1357.0 1037.7h0M1366.5 1037.7h0M1414.0 1037.7h0M1423.5 1037.7h0M1433.0 1037.7h0M1442.5 1037.7h0M1338.2 1046.5h0M1347.7 1046.5h0M1357.2 1046.5h0M1366.7 1046.5h0M1404.7 1046.5h0M1414.2 1046.5h0M1423.7 1046.5h0M1433.2 1046.5h0M1442.7 1046.5h0M1338.5 1055.3h0M1348.0 1055.3h0M1357.5 1055.3h0M1367.0 1055.3h0M1405.0 1055.3h0M1414.5 1055.3h0M1424.0 1055.3h0M1433.5 1055.3h0M1443.0 1055.3h0M1334.0 1064.1h0M1343.5 1064.1h0M1353.0 1064.1h0M1362.5 1064.1h0M1410.0 1064.1h0M1419.5 1064.1h0M1429.0 1064.1h0M1438.5 1064.1h0M1448.0 1064.1h0M1334.0 1072.9h0M1343.5 1072.9h0M1353.0 1072.9h0M1362.5 1072.9h0M1410.0 1072.9h0M1419.5 1072.9h0M1429.0 1072.9h0M1438.5 1072.9h0M1448.0 1072.9h0M1333.8 1081.7h0M1343.3 1081.7h0M1352.8 1081.7h0M1362.3 1081.7h0M1371.8 1081.7h0M1381.3 1081.7h0M1390.8 1081.7h0M1400.3 1081.7h0M1409.8 1081.7h0M1419.3 1081.7h0M1428.8 1081.7h0M1438.3 1081.7h0M1447.8 1081.7h0M1333.5 1090.5h0M1343.0 1090.5h0M1352.5 1090.5h0M1362.0 1090.5h0M1371.5 1090.5h0M1381.0 1090.5h0M1390.5 1090.5h0M1400.0 1090.5h0M1409.5 1090.5h0M1419.0 1090.5h0M1428.5 1090.5h0M1438.0 1090.5h0M1447.5 1090.5h0M1333.2 1099.3h0M1342.7 1099.3h0M1352.2 1099.3h0M1361.7 1099.3h0M1371.2 1099.3h0M1380.7 1099.3h0M1390.2 1099.3h0M1399.7 1099.3h0M1409.2 1099.3h0M1418.7 1099.3h0M1428.2 1099.3h0M1437.7 1099.3h0M1447.2 1099.3h0M1332.8 1108.1h0M1342.3 1108.1h0M1351.8 1108.1h0M1361.3 1108.1h0M1370.8 1108.1h0M1380.3 1108.1h0M1389.8 1108.1h0M1399.3 1108.1h0M1408.8 1108.1h0M1418.3 1108.1h0M1427.8 1108.1h0M1437.3 1108.1h0M1446.8 1108.1h0M1332.5 1116.9h0M1342.0 1116.9h0M1351.5 1116.9h0M1361.0 1116.9h0M1370.5 1116.9h0M1380.0 1116.9h0M1389.5 1116.9h0M1399.0 1116.9h0M1408.5 1116.9h0M1418.0 1116.9h0M1427.5 1116.9h0M1437.0 1116.9h0M1446.5 1116.9h0M1329.3 1125.7h0M1338.8 1125.7h0M1348.3 1125.7h0M1357.8 1125.7h0M1409.3 1125.7h0M1418.8 1125.7h0M1428.3 1125.7h0M1437.8 1125.7h0M1447.3 1125.7h0M1327.5 1134.5h0M1337.0 1134.5h0M1346.5 1134.5h0M1356.0 1134.5h0M1409.4 1134.5h0M1418.9 1134.5h0M1428.4 1134.5h0M1437.9 1134.5h0M1447.4 1134.5h0M1325.6 1143.3h0M1335.1 1143.3h0M1344.6 1143.3h0M1354.1 1143.3h0M1409.6 1143.3h0M1419.1 1143.3h0M1428.6 1143.3h0M1438.1 1143.3h0M1447.6 1143.3h0M1323.8 1152.1h0M1333.3 1152.1h0M1342.8 1152.1h0M1352.3 1152.1h0M1409.8 1152.1h0M1419.3 1152.1h0M1428.8 1152.1h0M1438.3 1152.1h0M1447.8 1152.1h0M1322.0 1160.9h0M1331.5 1160.9h0M1341.0 1160.9h0M1350.5 1160.9h0M1409.9 1160.9h0M1419.4 1160.9h0M1428.9 1160.9h0M1438.4 1160.9h0M1447.9 1160.9h0M1320.2 1169.7h0M1329.7 1169.7h0M1339.2 1169.7h0M1348.7 1169.7h0M1410.0 1169.7h0M1419.5 1169.7h0M1429.0 1169.7h0M1438.5 1169.7h0M1448.0 1169.7h0M1318.5 1178.5h0M1328.0 1178.5h0M1337.5 1178.5h0M1347.0 1178.5h0M1410.1 1178.5h0M1419.6 1178.5h0M1429.1 1178.5h0M1438.6 1178.5h0M1448.1 1178.5h0M1316.9 1187.3h0M1326.4 1187.3h0M1335.9 1187.3h0M1345.4 1187.3h0M1410.2 1187.3h0M1419.7 1187.3h0M1429.2 1187.3h0M1438.7 1187.3h0M1448.2 1187.3h0M1314.7 1196.1h0M1324.2 1196.1h0M1333.7 1196.1h0M1343.2 1196.1h0M1316.6 1204.9h0M1326.1 1204.9h0M1335.6 1204.9h0M1313.8 1213.7h0M1323.3 1213.7h0M1332.8 1213.7h0M1547.5 739.1h0M1557.0 739.1h0M1539.4 747.9h0M1548.9 747.9h0M1558.4 747.9h0M1531.6 756.7h0M1541.1 756.7h0M1550.6 756.7h0M1560.1 756.7h0M1524.1 765.5h0M1533.6 765.5h0M1543.1 765.5h0M1552.6 765.5h0M1562.1 765.5h0M1516.9 774.3h0M1526.4 774.3h0M1535.9 774.3h0M1545.4 774.3h0M1554.9 774.3h0M1564.4 774.3h0M1516.6 783.1h0M1526.1 783.1h0M1535.6 783.1h0M1545.1 783.1h0M1554.6 783.1h0M1564.1 783.1h0M1516.8 791.9h0M1526.3 791.9h0M1535.8 791.9h0M1545.3 791.9h0M1554.8 791.9h0M1564.3 791.9h0M1517.3 800.7h0M1526.8 800.7h0M1536.3 800.7h0M1545.8 800.7h0M1555.3 800.7h0M1564.8 800.7h0M1518.0 809.5h0M1527.5 809.5h0M1537.0 809.5h0M1546.5 809.5h0M1556.0 809.5h0M1565.5 809.5h0M1518.2 818.3h0M1527.7 818.3h0M1537.2 818.3h0M1546.7 818.3h0M1556.2 818.3h0M1565.7 818.3h0M1518.4 827.1h0M1527.9 827.1h0M1537.4 827.1h0M1546.9 827.1h0M1556.4 827.1h0M1565.9 827.1h0M1467.5 835.9h0M1518.4 835.9h0M1527.9 835.9h0M1537.4 835.9h0M1546.9 835.9h0M1556.4 835.9h0M1565.9 835.9h0M1460.7 844.7h0M1470.2 844.7h0M1518.0 844.7h0M1527.5 844.7h0M1537.0 844.7h0M1546.5 844.7h0M1556.0 844.7h0M1565.5 844.7h0M1453.8 853.5h0M1463.3 853.5h0M1472.8 853.5h0M1517.3 853.5h0M1526.8 853.5h0M1536.3 853.5h0M1545.8 853.5h0M1555.3 853.5h0M1564.8 853.5h0M1446.8 862.3h0M1456.3 862.3h0M1465.8 862.3h0M1475.3 862.3h0M1521.3 862.3h0M1530.8 862.3h0M1540.3 862.3h0M1549.8 862.3h0M1559.3 862.3h0M1440.4 871.1h0M1449.9 871.1h0M1459.4 871.1h0M1468.9 871.1h0M1478.4 871.1h0M1520.6 871.1h0M1530.1 871.1h0M1539.6 871.1h0M1549.1 871.1h0M1558.6 871.1h0M1440.9 879.9h0M1450.4 879.9h0M1459.9 879.9h0M1469.4 879.9h0M1478.9 879.9h0M1519.8 879.9h0M1529.3 879.9h0M1538.8 879.9h0M1548.3 879.9h0M1557.8 879.9h0M1442.0 888.7h0M1451.5 888.7h0M1461.0 888.7h0M1470.5 888.7h0M1480.0 888.7h0M1518.8 888.7h0M1528.3 888.7h0M1537.8 888.7h0M1547.3 888.7h0M1556.8 888.7h0M1443.9 897.5h0M1453.4 897.5h0M1462.9 897.5h0M1472.4 897.5h0M1481.9 897.5h0M1517.9 897.5h0M1527.4 897.5h0M1536.9 897.5h0M1546.4 897.5h0M1555.9 897.5h0M1446.0 906.3h0M1455.5 906.3h0M1465.0 906.3h0M1474.5 906.3h0M1484.0 906.3h0M1516.9 906.3h0M1526.4 906.3h0M1535.9 906.3h0M1545.4 906.3h0M1554.9 906.3h0M1448.2 915.1h0M1457.7 915.1h0M1467.2 915.1h0M1476.7 915.1h0M1486.2 915.1h0M1515.9 915.1h0M1525.4 915.1h0M1534.9 915.1h0M1544.4 915.1h0M1553.9 915.1h0M1450.8 923.9h0M1460.3 923.9h0M1469.8 923.9h0M1479.3 923.9h0M1488.8 923.9h0M1519.7 923.9h0M1529.2 923.9h0M1538.7 923.9h0M1548.2 923.9h0M1452.2 932.7h0M1461.7 932.7h0M1471.2 932.7h0M1480.7 932.7h0M1490.2 932.7h0M1499.7 932.7h0M1509.2 932.7h0M1518.7 932.7h0M1528.2 932.7h0M1537.7 932.7h0M1547.2 932.7h0M1452.6 941.5h0M1462.1 941.5h0M1471.6 941.5h0M1481.1 941.5h0M1490.6 941.5h0M1500.1 941.5h0M1509.6 941.5h0M1519.1 941.5h0M1528.6 941.5h0M1538.1 941.5h0M1547.6 941.5h0M1457.8 950.3h0M1467.3 950.3h0M1476.8 950.3h0M1486.3 950.3h0M1495.8 950.3h0M1505.3 950.3h0M1514.8 950.3h0M1524.3 950.3h0M1533.8 950.3h0M1543.3 950.3h0M1458.2 959.1h0M1467.7 959.1h0M1477.2 959.1h0M1486.7 959.1h0M1496.2 959.1h0M1505.7 959.1h0M1515.2 959.1h0M1524.7 959.1h0M1534.2 959.1h0M1543.7 959.1h0M1459.5 967.9h0M1469.0 967.9h0M1478.5 967.9h0M1488.0 967.9h0M1497.5 967.9h0M1507.0 967.9h0M1516.5 967.9h0M1526.0 967.9h0M1535.5 967.9h0M1545.0 967.9h0M1462.7 976.7h0M1472.2 976.7h0M1481.7 976.7h0M1491.2 976.7h0M1500.7 976.7h0M1510.2 976.7h0M1519.7 976.7h0M1529.2 976.7h0M1538.7 976.7h0M1548.2 976.7h0M1461.8 985.5h0M1471.3 985.5h0M1480.8 985.5h0M1490.3 985.5h0M1499.8 985.5h0M1509.3 985.5h0M1518.8 985.5h0M1528.3 985.5h0M1537.8 985.5h0M1547.3 985.5h0M1556.8 985.5h0M1466.4 994.3h0M1475.9 994.3h0M1485.4 994.3h0M1494.9 994.3h0M1504.4 994.3h0M1513.9 994.3h0M1523.4 994.3h0M1532.9 994.3h0M1542.4 994.3h0M1551.9 994.3h0M1561.4 994.3h0M1465.4 1003.1h0M1474.9 1003.1h0M1484.4 1003.1h0M1493.9 1003.1h0M1503.4 1003.1h0M1512.9 1003.1h0M1522.4 1003.1h0M1531.9 1003.1h0M1541.4 1003.1h0M1550.9 1003.1h0M1560.4 1003.1h0M1569.9 1003.1h0M1469.0 1011.9h0M1478.5 1011.9h0M1488.0 1011.9h0M1497.5 1011.9h0M1507.0 1011.9h0M1516.5 1011.9h0M1526.0 1011.9h0M1535.5 1011.9h0M1545.0 1011.9h0M1554.5 1011.9h0M1564.0 1011.9h0M1573.5 1011.9h0M1472.7 1020.7h0M1482.2 1020.7h0M1491.7 1020.7h0M1501.2 1020.7h0M1510.7 1020.7h0M1520.2 1020.7h0M1529.7 1020.7h0M1539.2 1020.7h0M1548.7 1020.7h0M1558.2 1020.7h0M1567.7 1020.7h0M1577.2 1020.7h0M1471.4 1029.5h0M1480.9 1029.5h0M1490.4 1029.5h0M1499.9 1029.5h0M1509.4 1029.5h0M1518.9 1029.5h0M1528.4 1029.5h0M1537.9 1029.5h0M1547.4 1029.5h0M1556.9 1029.5h0M1566.4 1029.5h0M1575.9 1029.5h0M1585.4 1029.5h0M1473.1 1038.3h0M1482.6 1038.3h0M1492.1 1038.3h0M1501.6 1038.3h0M1511.1 1038.3h0M1546.1 1038.3h0M1555.6 1038.3h0M1565.1 1038.3h0M1574.6 1038.3h0M1584.1 1038.3h0M1593.6 1038.3h0M1473.8 1047.1h0M1483.3 1047.1h0M1492.8 1047.1h0M1502.3 1047.1h0M1511.8 1047.1h0M1551.1 1047.1h0M1560.6 1047.1h0M1570.1 1047.1h0M1579.6 1047.1h0M1589.1 1047.1h0M1598.6 1047.1h0M1474.5 1055.9h0M1484.0 1055.9h0M1493.5 1055.9h0M1503.0 1055.9h0M1512.5 1055.9h0M1555.9 1055.9h0M1565.4 1055.9h0M1574.9 1055.9h0M1584.4 1055.9h0M1593.9 1055.9h0M1603.4 1055.9h0M1475.2 1064.7h0M1484.7 1064.7h0M1494.2 1064.7h0M1503.7 1064.7h0M1513.2 1064.7h0M1559.9 1064.7h0M1569.4 1064.7h0M1578.9 1064.7h0M1588.4 1064.7h0M1597.9 1064.7h0M1607.4 1064.7h0M1475.9 1073.5h0M1485.4 1073.5h0M1494.9 1073.5h0M1504.4 1073.5h0M1513.9 1073.5h0M1563.4 1073.5h0M1572.9 1073.5h0M1582.4 1073.5h0M1591.9 1073.5h0M1601.4 1073.5h0M1610.9 1073.5h0M1476.5 1082.3h0M1486.0 1082.3h0M1495.5 1082.3h0M1505.0 1082.3h0M1514.5 1082.3h0M1566.6 1082.3h0M1576.1 1082.3h0M1585.6 1082.3h0M1595.1 1082.3h0M1604.6 1082.3h0M1614.1 1082.3h0M1477.1 1091.1h0M1486.6 1091.1h0M1496.1 1091.1h0M1505.6 1091.1h0M1515.1 1091.1h0M1569.7 1091.1h0M1579.2 1091.1h0M1588.7 1091.1h0M1598.2 1091.1h0M1607.7 1091.1h0M1617.2 1091.1h0M1477.6 1099.9h0M1487.1 1099.9h0M1496.6 1099.9h0M1506.1 1099.9h0M1515.6 1099.9h0M1572.3 1099.9h0M1581.8 1099.9h0M1591.3 1099.9h0M1600.8 1099.9h0M1610.3 1099.9h0M1619.8 1099.9h0M1478.1 1108.7h0M1487.6 1108.7h0M1497.1 1108.7h0M1506.6 1108.7h0M1516.1 1108.7h0M1573.5 1108.7h0M1583.0 1108.7h0M1592.5 1108.7h0M1602.0 1108.7h0M1611.5 1108.7h0M1621.0 1108.7h0M1478.6 1117.5h0M1488.1 1117.5h0M1497.6 1117.5h0M1507.1 1117.5h0M1516.6 1117.5h0M1574.7 1117.5h0M1584.2 1117.5h0M1593.7 1117.5h0M1603.2 1117.5h0M1612.7 1117.5h0M1622.2 1117.5h0M1479.0 1126.3h0M1488.5 1126.3h0M1498.0 1126.3h0M1507.5 1126.3h0M1517.0 1126.3h0M1577.2 1126.3h0M1586.7 1126.3h0M1596.2 1126.3h0M1605.7 1126.3h0M1615.2 1126.3h0M1479.4 1135.1h0M1488.9 1135.1h0M1498.4 1135.1h0M1507.9 1135.1h0M1517.4 1135.1h0M1479.7 1143.9h0M1489.2 1143.9h0M1498.7 1143.9h0M1508.2 1143.9h0M1517.7 1143.9h0M1481.9 1152.7h0M1491.4 1152.7h0M1500.9 1152.7h0M1510.4 1152.7h0M1478.9 1161.5h0M1488.4 1161.5h0M1497.9 1161.5h0" stroke="#eea4ee" stroke-width="6.2" stroke-linecap="round" fill="none" transform="translate(0.6 -0.6)"/>
<path d="M1269.2 975.9h0M1278.7 975.9h0M1288.2 975.9h0M1297.7 975.9h0M1307.2 975.9h0M1267.4 984.7h0M1276.9 984.7h0M1286.4 984.7h0M1295.9 984.7h0M1305.4 984.7h0M1267.4 993.5h0M1276.9 993.5h0M1286.4 993.5h0M1295.9 993.5h0M1305.4 993.5h0M1167.9 1002.3h0M1177.4 1002.3h0M1186.9 1002.3h0M1196.4 1002.3h0M1267.3 1002.3h0M1276.8 1002.3h0M1286.3 1002.3h0M1295.8 1002.3h0M1305.3 1002.3h0M1165.1 1011.1h0M1174.6 1011.1h0M1184.1 1011.1h0M1193.6 1011.1h0M1203.1 1011.1h0M1267.2 1011.1h0M1276.7 1011.1h0M1286.2 1011.1h0M1295.7 1011.1h0M1305.2 1011.1h0M1167.4 1019.9h0M1176.9 1019.9h0M1186.4 1019.9h0M1195.9 1019.9h0M1205.4 1019.9h0M1267.1 1019.9h0M1276.6 1019.9h0M1286.1 1019.9h0M1295.6 1019.9h0M1305.1 1019.9h0M1164.9 1028.7h0M1174.4 1028.7h0M1183.9 1028.7h0M1193.4 1028.7h0M1202.9 1028.7h0M1212.4 1028.7h0M1267.1 1028.7h0M1276.6 1028.7h0M1286.1 1028.7h0M1295.6 1028.7h0M1305.1 1028.7h0M1167.1 1037.5h0M1176.6 1037.5h0M1186.1 1037.5h0M1195.6 1037.5h0M1205.1 1037.5h0M1214.6 1037.5h0M1267.0 1037.5h0M1276.5 1037.5h0M1286.0 1037.5h0M1295.5 1037.5h0M1305.0 1037.5h0M1164.5 1046.3h0M1174.0 1046.3h0M1183.5 1046.3h0M1193.0 1046.3h0M1202.5 1046.3h0M1212.0 1046.3h0M1221.5 1046.3h0M1266.9 1046.3h0M1276.4 1046.3h0M1285.9 1046.3h0M1295.4 1046.3h0M1304.9 1046.3h0M1166.6 1055.1h0M1176.1 1055.1h0M1185.6 1055.1h0M1195.1 1055.1h0M1204.6 1055.1h0M1214.1 1055.1h0M1223.6 1055.1h0M1266.8 1055.1h0M1276.3 1055.1h0M1285.8 1055.1h0M1295.3 1055.1h0M1304.8 1055.1h0M1168.7 1063.9h0M1178.2 1063.9h0M1187.7 1063.9h0M1197.2 1063.9h0M1206.7 1063.9h0M1216.2 1063.9h0M1225.7 1063.9h0M1266.7 1063.9h0M1276.2 1063.9h0M1285.7 1063.9h0M1295.2 1063.9h0M1304.7 1063.9h0M1166.1 1072.7h0M1175.6 1072.7h0M1185.1 1072.7h0M1194.6 1072.7h0M1204.1 1072.7h0M1213.6 1072.7h0M1223.1 1072.7h0M1232.6 1072.7h0M1266.6 1072.7h0M1276.1 1072.7h0M1285.6 1072.7h0M1295.1 1072.7h0M1304.6 1072.7h0M1168.2 1081.5h0M1177.7 1081.5h0M1187.2 1081.5h0M1196.7 1081.5h0M1206.2 1081.5h0M1215.7 1081.5h0M1225.2 1081.5h0M1234.7 1081.5h0M1266.5 1081.5h0M1276.0 1081.5h0M1285.5 1081.5h0M1295.0 1081.5h0M1304.5 1081.5h0M1165.6 1090.3h0M1175.1 1090.3h0M1184.6 1090.3h0M1194.1 1090.3h0M1203.6 1090.3h0M1213.1 1090.3h0M1222.6 1090.3h0M1232.1 1090.3h0M1241.6 1090.3h0M1266.1 1090.3h0M1275.6 1090.3h0M1285.1 1090.3h0M1294.6 1090.3h0M1304.1 1090.3h0M1165.0 1099.1h0M1174.5 1099.1h0M1184.0 1099.1h0M1193.5 1099.1h0M1203.0 1099.1h0M1212.5 1099.1h0M1222.0 1099.1h0M1231.5 1099.1h0M1241.0 1099.1h0M1250.5 1099.1h0M1265.7 1099.1h0M1275.2 1099.1h0M1284.7 1099.1h0M1294.2 1099.1h0M1303.7 1099.1h0M1167.5 1107.9h0M1177.0 1107.9h0M1186.5 1107.9h0M1196.0 1107.9h0M1205.5 1107.9h0M1215.0 1107.9h0M1224.5 1107.9h0M1234.0 1107.9h0M1243.5 1107.9h0M1253.0 1107.9h0M1262.5 1107.9h0M1272.0 1107.9h0M1281.5 1107.9h0M1291.0 1107.9h0M1300.5 1107.9h0M1166.5 1116.7h0M1176.0 1116.7h0M1185.5 1116.7h0M1195.0 1116.7h0M1204.5 1116.7h0M1214.0 1116.7h0M1223.5 1116.7h0M1233.0 1116.7h0M1242.5 1116.7h0M1252.0 1116.7h0M1261.5 1116.7h0M1271.0 1116.7h0M1280.5 1116.7h0M1290.0 1116.7h0M1299.5 1116.7h0M1161.7 1125.5h0M1171.2 1125.5h0M1180.7 1125.5h0M1190.2 1125.5h0M1199.7 1125.5h0M1223.4 1125.5h0M1232.9 1125.5h0M1242.4 1125.5h0M1251.9 1125.5h0M1261.4 1125.5h0M1270.9 1125.5h0M1280.4 1125.5h0M1289.9 1125.5h0M1299.4 1125.5h0M1160.3 1134.3h0M1169.8 1134.3h0M1179.3 1134.3h0M1188.8 1134.3h0M1198.3 1134.3h0M1224.3 1134.3h0M1233.8 1134.3h0M1243.3 1134.3h0M1252.8 1134.3h0M1262.3 1134.3h0M1271.8 1134.3h0M1281.3 1134.3h0M1290.8 1134.3h0M1300.3 1134.3h0M1159.4 1143.1h0M1168.9 1143.1h0M1178.4 1143.1h0M1187.9 1143.1h0M1197.4 1143.1h0M1229.8 1143.1h0M1239.3 1143.1h0M1248.8 1143.1h0M1258.3 1143.1h0M1267.8 1143.1h0M1277.3 1143.1h0M1286.8 1143.1h0M1296.3 1143.1h0M1158.4 1151.9h0M1167.9 1151.9h0M1177.4 1151.9h0M1186.9 1151.9h0M1196.4 1151.9h0M1230.6 1151.9h0M1240.1 1151.9h0M1249.6 1151.9h0M1259.1 1151.9h0M1268.6 1151.9h0M1278.1 1151.9h0M1287.6 1151.9h0M1297.1 1151.9h0M1157.4 1160.7h0M1166.9 1160.7h0M1176.4 1160.7h0M1185.9 1160.7h0M1195.4 1160.7h0M1236.0 1160.7h0M1245.5 1160.7h0M1255.0 1160.7h0M1264.5 1160.7h0M1274.0 1160.7h0M1283.5 1160.7h0M1293.0 1160.7h0M1156.3 1169.5h0M1165.8 1169.5h0M1175.3 1169.5h0M1184.8 1169.5h0M1194.3 1169.5h0M1236.6 1169.5h0M1246.1 1169.5h0M1255.6 1169.5h0M1265.1 1169.5h0M1274.6 1169.5h0M1284.1 1169.5h0M1293.6 1169.5h0M1155.4 1178.3h0M1164.9 1178.3h0M1174.4 1178.3h0M1183.9 1178.3h0M1193.4 1178.3h0M1241.9 1178.3h0M1251.4 1178.3h0M1260.9 1178.3h0M1270.4 1178.3h0M1279.9 1178.3h0M1289.4 1178.3h0M1154.5 1187.1h0M1164.0 1187.1h0M1173.5 1187.1h0M1183.0 1187.1h0M1192.5 1187.1h0M1242.5 1187.1h0M1252.0 1187.1h0M1261.5 1187.1h0M1271.0 1187.1h0M1280.5 1187.1h0M1290.0 1187.1h0M1153.5 1195.9h0M1163.0 1195.9h0M1172.5 1195.9h0M1182.0 1195.9h0M1191.5 1195.9h0M1247.8 1195.9h0M1257.3 1195.9h0M1266.8 1195.9h0M1276.3 1195.9h0M1285.8 1195.9h0M1152.6 1204.7h0M1162.1 1204.7h0M1171.6 1204.7h0M1181.1 1204.7h0M1190.6 1204.7h0M1248.3 1204.7h0M1257.8 1204.7h0M1267.3 1204.7h0M1276.8 1204.7h0M1286.3 1204.7h0M1151.8 1213.5h0M1161.3 1213.5h0M1170.8 1213.5h0M1180.3 1213.5h0M1189.8 1213.5h0M1253.4 1213.5h0M1262.9 1213.5h0M1272.4 1213.5h0M1281.9 1213.5h0M1150.9 1222.3h0M1160.4 1222.3h0M1169.9 1222.3h0M1179.4 1222.3h0M1188.9 1222.3h0M1255.5 1222.3h0M1265.0 1222.3h0M1274.5 1222.3h0M1398.2 905.7h0M1407.7 905.7h0M1384.7 914.5h0M1394.2 914.5h0M1403.7 914.5h0M1413.2 914.5h0M1376.2 923.3h0M1385.7 923.3h0M1395.2 923.3h0M1404.7 923.3h0M1414.2 923.3h0M1362.6 932.1h0M1372.1 932.1h0M1381.6 932.1h0M1391.1 932.1h0M1400.6 932.1h0M1410.1 932.1h0M1419.6 932.1h0M1354.1 940.9h0M1363.6 940.9h0M1373.1 940.9h0M1382.6 940.9h0M1392.1 940.9h0M1401.6 940.9h0M1411.1 940.9h0M1420.6 940.9h0M1347.1 949.7h0M1356.6 949.7h0M1366.1 949.7h0M1375.6 949.7h0M1385.1 949.7h0M1394.6 949.7h0M1404.1 949.7h0M1413.6 949.7h0M1423.1 949.7h0M1342.0 958.5h0M1351.5 958.5h0M1361.0 958.5h0M1370.5 958.5h0M1380.0 958.5h0M1389.5 958.5h0M1399.0 958.5h0M1408.5 958.5h0M1418.0 958.5h0M1427.5 958.5h0M1343.1 967.3h0M1352.6 967.3h0M1362.1 967.3h0M1371.6 967.3h0M1381.1 967.3h0M1390.6 967.3h0M1400.1 967.3h0M1409.6 967.3h0M1419.1 967.3h0M1428.6 967.3h0M1344.3 976.1h0M1353.8 976.1h0M1363.3 976.1h0M1372.8 976.1h0M1382.3 976.1h0M1391.8 976.1h0M1401.3 976.1h0M1410.8 976.1h0M1420.3 976.1h0M1429.8 976.1h0M1340.6 984.9h0M1350.1 984.9h0M1359.6 984.9h0M1369.1 984.9h0M1378.6 984.9h0M1388.1 984.9h0M1397.6 984.9h0M1407.1 984.9h0M1416.6 984.9h0M1426.1 984.9h0M1435.6 984.9h0M1341.5 993.7h0M1351.0 993.7h0M1360.5 993.7h0M1370.0 993.7h0M1379.5 993.7h0M1389.0 993.7h0M1408.0 993.7h0M1417.5 993.7h0M1427.0 993.7h0M1436.5 993.7h0M1341.7 1002.5h0M1351.2 1002.5h0M1360.7 1002.5h0M1408.2 1002.5h0M1417.7 1002.5h0M1427.2 1002.5h0M1436.7 1002.5h0M1341.9 1011.3h0M1351.4 1011.3h0M1360.9 1011.3h0M1408.4 1011.3h0M1417.9 1011.3h0M1427.4 1011.3h0M1436.9 1011.3h0M1337.4 1020.1h0M1346.9 1020.1h0M1356.4 1020.1h0M1365.9 1020.1h0M1413.4 1020.1h0M1422.9 1020.1h0M1432.4 1020.1h0M1441.9 1020.1h0M1337.7 1028.9h0M1347.2 1028.9h0M1356.7 1028.9h0M1366.2 1028.9h0M1413.7 1028.9h0M1423.2 1028.9h0M1432.7 1028.9h0M1442.2 1028.9h0M1338.0 1037.7h0M1347.5 1037.7h0M1357.0 1037.7h0M1366.5 1037.7h0M1414.0 1037.7h0M1423.5 1037.7h0M1433.0 1037.7h0M1442.5 1037.7h0M1338.2 1046.5h0M1347.7 1046.5h0M1357.2 1046.5h0M1366.7 1046.5h0M1404.7 1046.5h0M1414.2 1046.5h0M1423.7 1046.5h0M1433.2 1046.5h0M1442.7 1046.5h0M1338.5 1055.3h0M1348.0 1055.3h0M1357.5 1055.3h0M1367.0 1055.3h0M1405.0 1055.3h0M1414.5 1055.3h0M1424.0 1055.3h0M1433.5 1055.3h0M1443.0 1055.3h0M1334.0 1064.1h0M1343.5 1064.1h0M1353.0 1064.1h0M1362.5 1064.1h0M1410.0 1064.1h0M1419.5 1064.1h0M1429.0 1064.1h0M1438.5 1064.1h0M1448.0 1064.1h0M1334.0 1072.9h0M1343.5 1072.9h0M1353.0 1072.9h0M1362.5 1072.9h0M1410.0 1072.9h0M1419.5 1072.9h0M1429.0 1072.9h0M1438.5 1072.9h0M1448.0 1072.9h0M1333.8 1081.7h0M1343.3 1081.7h0M1352.8 1081.7h0M1362.3 1081.7h0M1371.8 1081.7h0M1381.3 1081.7h0M1390.8 1081.7h0M1400.3 1081.7h0M1409.8 1081.7h0M1419.3 1081.7h0M1428.8 1081.7h0M1438.3 1081.7h0M1447.8 1081.7h0M1333.5 1090.5h0M1343.0 1090.5h0M1352.5 1090.5h0M1362.0 1090.5h0M1371.5 1090.5h0M1381.0 1090.5h0M1390.5 1090.5h0M1400.0 1090.5h0M1409.5 1090.5h0M1419.0 1090.5h0M1428.5 1090.5h0M1438.0 1090.5h0M1447.5 1090.5h0M1333.2 1099.3h0M1342.7 1099.3h0M1352.2 1099.3h0M1361.7 1099.3h0M1371.2 1099.3h0M1380.7 1099.3h0M1390.2 1099.3h0M1399.7 1099.3h0M1409.2 1099.3h0M1418.7 1099.3h0M1428.2 1099.3h0M1437.7 1099.3h0M1447.2 1099.3h0M1332.8 1108.1h0M1342.3 1108.1h0M1351.8 1108.1h0M1361.3 1108.1h0M1370.8 1108.1h0M1380.3 1108.1h0M1389.8 1108.1h0M1399.3 1108.1h0M1408.8 1108.1h0M1418.3 1108.1h0M1427.8 1108.1h0M1437.3 1108.1h0M1446.8 1108.1h0M1332.5 1116.9h0M1342.0 1116.9h0M1351.5 1116.9h0M1361.0 1116.9h0M1370.5 1116.9h0M1380.0 1116.9h0M1389.5 1116.9h0M1399.0 1116.9h0M1408.5 1116.9h0M1418.0 1116.9h0M1427.5 1116.9h0M1437.0 1116.9h0M1446.5 1116.9h0M1329.3 1125.7h0M1338.8 1125.7h0M1348.3 1125.7h0M1357.8 1125.7h0M1409.3 1125.7h0M1418.8 1125.7h0M1428.3 1125.7h0M1437.8 1125.7h0M1447.3 1125.7h0M1327.5 1134.5h0M1337.0 1134.5h0M1346.5 1134.5h0M1356.0 1134.5h0M1409.4 1134.5h0M1418.9 1134.5h0M1428.4 1134.5h0M1437.9 1134.5h0M1447.4 1134.5h0M1325.6 1143.3h0M1335.1 1143.3h0M1344.6 1143.3h0M1354.1 1143.3h0M1409.6 1143.3h0M1419.1 1143.3h0M1428.6 1143.3h0M1438.1 1143.3h0M1447.6 1143.3h0M1323.8 1152.1h0M1333.3 1152.1h0M1342.8 1152.1h0M1352.3 1152.1h0M1409.8 1152.1h0M1419.3 1152.1h0M1428.8 1152.1h0M1438.3 1152.1h0M1447.8 1152.1h0M1322.0 1160.9h0M1331.5 1160.9h0M1341.0 1160.9h0M1350.5 1160.9h0M1409.9 1160.9h0M1419.4 1160.9h0M1428.9 1160.9h0M1438.4 1160.9h0M1447.9 1160.9h0M1320.2 1169.7h0M1329.7 1169.7h0M1339.2 1169.7h0M1348.7 1169.7h0M1410.0 1169.7h0M1419.5 1169.7h0M1429.0 1169.7h0M1438.5 1169.7h0M1448.0 1169.7h0M1318.5 1178.5h0M1328.0 1178.5h0M1337.5 1178.5h0M1347.0 1178.5h0M1410.1 1178.5h0M1419.6 1178.5h0M1429.1 1178.5h0M1438.6 1178.5h0M1448.1 1178.5h0M1316.9 1187.3h0M1326.4 1187.3h0M1335.9 1187.3h0M1345.4 1187.3h0M1410.2 1187.3h0M1419.7 1187.3h0M1429.2 1187.3h0M1438.7 1187.3h0M1448.2 1187.3h0M1314.7 1196.1h0M1324.2 1196.1h0M1333.7 1196.1h0M1343.2 1196.1h0M1316.6 1204.9h0M1326.1 1204.9h0M1335.6 1204.9h0M1313.8 1213.7h0M1323.3 1213.7h0M1332.8 1213.7h0M1547.5 739.1h0M1557.0 739.1h0M1539.4 747.9h0M1548.9 747.9h0M1558.4 747.9h0M1531.6 756.7h0M1541.1 756.7h0M1550.6 756.7h0M1560.1 756.7h0M1524.1 765.5h0M1533.6 765.5h0M1543.1 765.5h0M1552.6 765.5h0M1562.1 765.5h0M1516.9 774.3h0M1526.4 774.3h0M1535.9 774.3h0M1545.4 774.3h0M1554.9 774.3h0M1564.4 774.3h0M1516.6 783.1h0M1526.1 783.1h0M1535.6 783.1h0M1545.1 783.1h0M1554.6 783.1h0M1564.1 783.1h0M1516.8 791.9h0M1526.3 791.9h0M1535.8 791.9h0M1545.3 791.9h0M1554.8 791.9h0M1564.3 791.9h0M1517.3 800.7h0M1526.8 800.7h0M1536.3 800.7h0M1545.8 800.7h0M1555.3 800.7h0M1564.8 800.7h0M1518.0 809.5h0M1527.5 809.5h0M1537.0 809.5h0M1546.5 809.5h0M1556.0 809.5h0M1565.5 809.5h0M1518.2 818.3h0M1527.7 818.3h0M1537.2 818.3h0M1546.7 818.3h0M1556.2 818.3h0M1565.7 818.3h0M1518.4 827.1h0M1527.9 827.1h0M1537.4 827.1h0M1546.9 827.1h0M1556.4 827.1h0M1565.9 827.1h0M1467.5 835.9h0M1518.4 835.9h0M1527.9 835.9h0M1537.4 835.9h0M1546.9 835.9h0M1556.4 835.9h0M1565.9 835.9h0M1460.7 844.7h0M1470.2 844.7h0M1518.0 844.7h0M1527.5 844.7h0M1537.0 844.7h0M1546.5 844.7h0M1556.0 844.7h0M1565.5 844.7h0M1453.8 853.5h0M1463.3 853.5h0M1472.8 853.5h0M1517.3 853.5h0M1526.8 853.5h0M1536.3 853.5h0M1545.8 853.5h0M1555.3 853.5h0M1564.8 853.5h0M1446.8 862.3h0M1456.3 862.3h0M1465.8 862.3h0M1475.3 862.3h0M1521.3 862.3h0M1530.8 862.3h0M1540.3 862.3h0M1549.8 862.3h0M1559.3 862.3h0M1440.4 871.1h0M1449.9 871.1h0M1459.4 871.1h0M1468.9 871.1h0M1478.4 871.1h0M1520.6 871.1h0M1530.1 871.1h0M1539.6 871.1h0M1549.1 871.1h0M1558.6 871.1h0M1440.9 879.9h0M1450.4 879.9h0M1459.9 879.9h0M1469.4 879.9h0M1478.9 879.9h0M1519.8 879.9h0M1529.3 879.9h0M1538.8 879.9h0M1548.3 879.9h0M1557.8 879.9h0M1442.0 888.7h0M1451.5 888.7h0M1461.0 888.7h0M1470.5 888.7h0M1480.0 888.7h0M1518.8 888.7h0M1528.3 888.7h0M1537.8 888.7h0M1547.3 888.7h0M1556.8 888.7h0M1443.9 897.5h0M1453.4 897.5h0M1462.9 897.5h0M1472.4 897.5h0M1481.9 897.5h0M1517.9 897.5h0M1527.4 897.5h0M1536.9 897.5h0M1546.4 897.5h0M1555.9 897.5h0M1446.0 906.3h0M1455.5 906.3h0M1465.0 906.3h0M1474.5 906.3h0M1484.0 906.3h0M1516.9 906.3h0M1526.4 906.3h0M1535.9 906.3h0M1545.4 906.3h0M1554.9 906.3h0M1448.2 915.1h0M1457.7 915.1h0M1467.2 915.1h0M1476.7 915.1h0M1486.2 915.1h0M1515.9 915.1h0M1525.4 915.1h0M1534.9 915.1h0M1544.4 915.1h0M1553.9 915.1h0M1450.8 923.9h0M1460.3 923.9h0M1469.8 923.9h0M1479.3 923.9h0M1488.8 923.9h0M1519.7 923.9h0M1529.2 923.9h0M1538.7 923.9h0M1548.2 923.9h0M1452.2 932.7h0M1461.7 932.7h0M1471.2 932.7h0M1480.7 932.7h0M1490.2 932.7h0M1499.7 932.7h0M1509.2 932.7h0M1518.7 932.7h0M1528.2 932.7h0M1537.7 932.7h0M1547.2 932.7h0M1452.6 941.5h0M1462.1 941.5h0M1471.6 941.5h0M1481.1 941.5h0M1490.6 941.5h0M1500.1 941.5h0M1509.6 941.5h0M1519.1 941.5h0M1528.6 941.5h0M1538.1 941.5h0M1547.6 941.5h0M1457.8 950.3h0M1467.3 950.3h0M1476.8 950.3h0M1486.3 950.3h0M1495.8 950.3h0M1505.3 950.3h0M1514.8 950.3h0M1524.3 950.3h0M1533.8 950.3h0M1543.3 950.3h0M1458.2 959.1h0M1467.7 959.1h0M1477.2 959.1h0M1486.7 959.1h0M1496.2 959.1h0M1505.7 959.1h0M1515.2 959.1h0M1524.7 959.1h0M1534.2 959.1h0M1543.7 959.1h0M1459.5 967.9h0M1469.0 967.9h0M1478.5 967.9h0M1488.0 967.9h0M1497.5 967.9h0M1507.0 967.9h0M1516.5 967.9h0M1526.0 967.9h0M1535.5 967.9h0M1545.0 967.9h0M1462.7 976.7h0M1472.2 976.7h0M1481.7 976.7h0M1491.2 976.7h0M1500.7 976.7h0M1510.2 976.7h0M1519.7 976.7h0M1529.2 976.7h0M1538.7 976.7h0M1548.2 976.7h0M1461.8 985.5h0M1471.3 985.5h0M1480.8 985.5h0M1490.3 985.5h0M1499.8 985.5h0M1509.3 985.5h0M1518.8 985.5h0M1528.3 985.5h0M1537.8 985.5h0M1547.3 985.5h0M1556.8 985.5h0M1466.4 994.3h0M1475.9 994.3h0M1485.4 994.3h0M1494.9 994.3h0M1504.4 994.3h0M1513.9 994.3h0M1523.4 994.3h0M1532.9 994.3h0M1542.4 994.3h0M1551.9 994.3h0M1561.4 994.3h0M1465.4 1003.1h0M1474.9 1003.1h0M1484.4 1003.1h0M1493.9 1003.1h0M1503.4 1003.1h0M1512.9 1003.1h0M1522.4 1003.1h0M1531.9 1003.1h0M1541.4 1003.1h0M1550.9 1003.1h0M1560.4 1003.1h0M1569.9 1003.1h0M1469.0 1011.9h0M1478.5 1011.9h0M1488.0 1011.9h0M1497.5 1011.9h0M1507.0 1011.9h0M1516.5 1011.9h0M1526.0 1011.9h0M1535.5 1011.9h0M1545.0 1011.9h0M1554.5 1011.9h0M1564.0 1011.9h0M1573.5 1011.9h0M1472.7 1020.7h0M1482.2 1020.7h0M1491.7 1020.7h0M1501.2 1020.7h0M1510.7 1020.7h0M1520.2 1020.7h0M1529.7 1020.7h0M1539.2 1020.7h0M1548.7 1020.7h0M1558.2 1020.7h0M1567.7 1020.7h0M1577.2 1020.7h0M1471.4 1029.5h0M1480.9 1029.5h0M1490.4 1029.5h0M1499.9 1029.5h0M1509.4 1029.5h0M1518.9 1029.5h0M1528.4 1029.5h0M1537.9 1029.5h0M1547.4 1029.5h0M1556.9 1029.5h0M1566.4 1029.5h0M1575.9 1029.5h0M1585.4 1029.5h0M1473.1 1038.3h0M1482.6 1038.3h0M1492.1 1038.3h0M1501.6 1038.3h0M1511.1 1038.3h0M1546.1 1038.3h0M1555.6 1038.3h0M1565.1 1038.3h0M1574.6 1038.3h0M1584.1 1038.3h0M1593.6 1038.3h0M1473.8 1047.1h0M1483.3 1047.1h0M1492.8 1047.1h0M1502.3 1047.1h0M1511.8 1047.1h0M1551.1 1047.1h0M1560.6 1047.1h0M1570.1 1047.1h0M1579.6 1047.1h0M1589.1 1047.1h0M1598.6 1047.1h0M1474.5 1055.9h0M1484.0 1055.9h0M1493.5 1055.9h0M1503.0 1055.9h0M1512.5 1055.9h0M1555.9 1055.9h0M1565.4 1055.9h0M1574.9 1055.9h0M1584.4 1055.9h0M1593.9 1055.9h0M1603.4 1055.9h0M1475.2 1064.7h0M1484.7 1064.7h0M1494.2 1064.7h0M1503.7 1064.7h0M1513.2 1064.7h0M1559.9 1064.7h0M1569.4 1064.7h0M1578.9 1064.7h0M1588.4 1064.7h0M1597.9 1064.7h0M1607.4 1064.7h0M1475.9 1073.5h0M1485.4 1073.5h0M1494.9 1073.5h0M1504.4 1073.5h0M1513.9 1073.5h0M1563.4 1073.5h0M1572.9 1073.5h0M1582.4 1073.5h0M1591.9 1073.5h0M1601.4 1073.5h0M1610.9 1073.5h0M1476.5 1082.3h0M1486.0 1082.3h0M1495.5 1082.3h0M1505.0 1082.3h0M1514.5 1082.3h0M1566.6 1082.3h0M1576.1 1082.3h0M1585.6 1082.3h0M1595.1 1082.3h0M1604.6 1082.3h0M1614.1 1082.3h0M1477.1 1091.1h0M1486.6 1091.1h0M1496.1 1091.1h0M1505.6 1091.1h0M1515.1 1091.1h0M1569.7 1091.1h0M1579.2 1091.1h0M1588.7 1091.1h0M1598.2 1091.1h0M1607.7 1091.1h0M1617.2 1091.1h0M1477.6 1099.9h0M1487.1 1099.9h0M1496.6 1099.9h0M1506.1 1099.9h0M1515.6 1099.9h0M1572.3 1099.9h0M1581.8 1099.9h0M1591.3 1099.9h0M1600.8 1099.9h0M1610.3 1099.9h0M1619.8 1099.9h0M1478.1 1108.7h0M1487.6 1108.7h0M1497.1 1108.7h0M1506.6 1108.7h0M1516.1 1108.7h0M1573.5 1108.7h0M1583.0 1108.7h0M1592.5 1108.7h0M1602.0 1108.7h0M1611.5 1108.7h0M1621.0 1108.7h0M1478.6 1117.5h0M1488.1 1117.5h0M1497.6 1117.5h0M1507.1 1117.5h0M1516.6 1117.5h0M1574.7 1117.5h0M1584.2 1117.5h0M1593.7 1117.5h0M1603.2 1117.5h0M1612.7 1117.5h0M1622.2 1117.5h0M1479.0 1126.3h0M1488.5 1126.3h0M1498.0 1126.3h0M1507.5 1126.3h0M1517.0 1126.3h0M1577.2 1126.3h0M1586.7 1126.3h0M1596.2 1126.3h0M1605.7 1126.3h0M1615.2 1126.3h0M1479.4 1135.1h0M1488.9 1135.1h0M1498.4 1135.1h0M1507.9 1135.1h0M1517.4 1135.1h0M1479.7 1143.9h0M1489.2 1143.9h0M1498.7 1143.9h0M1508.2 1143.9h0M1517.7 1143.9h0M1481.9 1152.7h0M1491.4 1152.7h0M1500.9 1152.7h0M1510.4 1152.7h0M1478.9 1161.5h0M1488.4 1161.5h0M1497.9 1161.5h0" stroke="#f8c8f8" stroke-width="3.0" stroke-linecap="round" fill="none" transform="translate(1.0 -1.0)"/>
<path d="M1269.2 975.9h0M1278.7 975.9h0M1288.2 975.9h0M1297.7 975.9h0M1307.2 975.9h0M1267.4 984.7h0M1276.9 984.7h0M1286.4 984.7h0M1295.9 984.7h0M1305.4 984.7h0M1267.4 993.5h0M1276.9 993.5h0M1286.4 993.5h0M1295.9 993.5h0M1305.4 993.5h0M1167.9 1002.3h0M1177.4 1002.3h0M1186.9 1002.3h0M1196.4 1002.3h0M1267.3 1002.3h0M1276.8 1002.3h0M1286.3 1002.3h0M1295.8 1002.3h0M1305.3 1002.3h0M1165.1 1011.1h0M1174.6 1011.1h0M1184.1 1011.1h0M1193.6 1011.1h0M1203.1 1011.1h0M1267.2 1011.1h0M1276.7 1011.1h0M1286.2 1011.1h0M1295.7 1011.1h0M1305.2 1011.1h0M1167.4 1019.9h0M1176.9 1019.9h0M1186.4 1019.9h0M1195.9 1019.9h0M1205.4 1019.9h0M1267.1 1019.9h0M1276.6 1019.9h0M1286.1 1019.9h0M1295.6 1019.9h0M1305.1 1019.9h0M1164.9 1028.7h0M1174.4 1028.7h0M1183.9 1028.7h0M1193.4 1028.7h0M1202.9 1028.7h0M1212.4 1028.7h0M1267.1 1028.7h0M1276.6 1028.7h0M1286.1 1028.7h0M1295.6 1028.7h0M1305.1 1028.7h0M1167.1 1037.5h0M1176.6 1037.5h0M1186.1 1037.5h0M1195.6 1037.5h0M1205.1 1037.5h0M1214.6 1037.5h0M1267.0 1037.5h0M1276.5 1037.5h0M1286.0 1037.5h0M1295.5 1037.5h0M1305.0 1037.5h0M1164.5 1046.3h0M1174.0 1046.3h0M1183.5 1046.3h0M1193.0 1046.3h0M1202.5 1046.3h0M1212.0 1046.3h0M1221.5 1046.3h0M1266.9 1046.3h0M1276.4 1046.3h0M1285.9 1046.3h0M1295.4 1046.3h0M1304.9 1046.3h0M1166.6 1055.1h0M1176.1 1055.1h0M1185.6 1055.1h0M1195.1 1055.1h0M1204.6 1055.1h0M1214.1 1055.1h0M1223.6 1055.1h0M1266.8 1055.1h0M1276.3 1055.1h0M1285.8 1055.1h0M1295.3 1055.1h0M1304.8 1055.1h0M1168.7 1063.9h0M1178.2 1063.9h0M1187.7 1063.9h0M1197.2 1063.9h0M1206.7 1063.9h0M1216.2 1063.9h0M1225.7 1063.9h0M1266.7 1063.9h0M1276.2 1063.9h0M1285.7 1063.9h0M1295.2 1063.9h0M1304.7 1063.9h0M1166.1 1072.7h0M1175.6 1072.7h0M1185.1 1072.7h0M1194.6 1072.7h0M1204.1 1072.7h0M1213.6 1072.7h0M1223.1 1072.7h0M1232.6 1072.7h0M1266.6 1072.7h0M1276.1 1072.7h0M1285.6 1072.7h0M1295.1 1072.7h0M1304.6 1072.7h0M1168.2 1081.5h0M1177.7 1081.5h0M1187.2 1081.5h0M1196.7 1081.5h0M1206.2 1081.5h0M1215.7 1081.5h0M1225.2 1081.5h0M1234.7 1081.5h0M1266.5 1081.5h0M1276.0 1081.5h0M1285.5 1081.5h0M1295.0 1081.5h0M1304.5 1081.5h0M1165.6 1090.3h0M1175.1 1090.3h0M1184.6 1090.3h0M1194.1 1090.3h0M1203.6 1090.3h0M1213.1 1090.3h0M1222.6 1090.3h0M1232.1 1090.3h0M1241.6 1090.3h0M1266.1 1090.3h0M1275.6 1090.3h0M1285.1 1090.3h0M1294.6 1090.3h0M1304.1 1090.3h0M1165.0 1099.1h0M1174.5 1099.1h0M1184.0 1099.1h0M1193.5 1099.1h0M1203.0 1099.1h0M1212.5 1099.1h0M1222.0 1099.1h0M1231.5 1099.1h0M1241.0 1099.1h0M1250.5 1099.1h0M1265.7 1099.1h0M1275.2 1099.1h0M1284.7 1099.1h0M1294.2 1099.1h0M1303.7 1099.1h0M1167.5 1107.9h0M1177.0 1107.9h0M1186.5 1107.9h0M1196.0 1107.9h0M1205.5 1107.9h0M1215.0 1107.9h0M1224.5 1107.9h0M1234.0 1107.9h0M1243.5 1107.9h0M1253.0 1107.9h0M1262.5 1107.9h0M1272.0 1107.9h0M1281.5 1107.9h0M1291.0 1107.9h0M1300.5 1107.9h0M1166.5 1116.7h0M1176.0 1116.7h0M1185.5 1116.7h0M1195.0 1116.7h0M1204.5 1116.7h0M1214.0 1116.7h0M1223.5 1116.7h0M1233.0 1116.7h0M1242.5 1116.7h0M1252.0 1116.7h0M1261.5 1116.7h0M1271.0 1116.7h0M1280.5 1116.7h0M1290.0 1116.7h0M1299.5 1116.7h0M1161.7 1125.5h0M1171.2 1125.5h0M1180.7 1125.5h0M1190.2 1125.5h0M1199.7 1125.5h0M1223.4 1125.5h0M1232.9 1125.5h0M1242.4 1125.5h0M1251.9 1125.5h0M1261.4 1125.5h0M1270.9 1125.5h0M1280.4 1125.5h0M1289.9 1125.5h0M1299.4 1125.5h0M1160.3 1134.3h0M1169.8 1134.3h0M1179.3 1134.3h0M1188.8 1134.3h0M1198.3 1134.3h0M1224.3 1134.3h0M1233.8 1134.3h0M1243.3 1134.3h0M1252.8 1134.3h0M1262.3 1134.3h0M1271.8 1134.3h0M1281.3 1134.3h0M1290.8 1134.3h0M1300.3 1134.3h0M1159.4 1143.1h0M1168.9 1143.1h0M1178.4 1143.1h0M1187.9 1143.1h0M1197.4 1143.1h0M1229.8 1143.1h0M1239.3 1143.1h0M1248.8 1143.1h0M1258.3 1143.1h0M1267.8 1143.1h0M1277.3 1143.1h0M1286.8 1143.1h0M1296.3 1143.1h0M1158.4 1151.9h0M1167.9 1151.9h0M1177.4 1151.9h0M1186.9 1151.9h0M1196.4 1151.9h0M1230.6 1151.9h0M1240.1 1151.9h0M1249.6 1151.9h0M1259.1 1151.9h0M1268.6 1151.9h0M1278.1 1151.9h0M1287.6 1151.9h0M1297.1 1151.9h0M1157.4 1160.7h0M1166.9 1160.7h0M1176.4 1160.7h0M1185.9 1160.7h0M1195.4 1160.7h0M1236.0 1160.7h0M1245.5 1160.7h0M1255.0 1160.7h0M1264.5 1160.7h0M1274.0 1160.7h0M1283.5 1160.7h0M1293.0 1160.7h0M1156.3 1169.5h0M1165.8 1169.5h0M1175.3 1169.5h0M1184.8 1169.5h0M1194.3 1169.5h0M1236.6 1169.5h0M1246.1 1169.5h0M1255.6 1169.5h0M1265.1 1169.5h0M1274.6 1169.5h0M1284.1 1169.5h0M1293.6 1169.5h0M1155.4 1178.3h0M1164.9 1178.3h0M1174.4 1178.3h0M1183.9 1178.3h0M1193.4 1178.3h0M1241.9 1178.3h0M1251.4 1178.3h0M1260.9 1178.3h0M1270.4 1178.3h0M1279.9 1178.3h0M1289.4 1178.3h0M1154.5 1187.1h0M1164.0 1187.1h0M1173.5 1187.1h0M1183.0 1187.1h0M1192.5 1187.1h0M1242.5 1187.1h0M1252.0 1187.1h0M1261.5 1187.1h0M1271.0 1187.1h0M1280.5 1187.1h0M1290.0 1187.1h0M1153.5 1195.9h0M1163.0 1195.9h0M1172.5 1195.9h0M1182.0 1195.9h0M1191.5 1195.9h0M1247.8 1195.9h0M1257.3 1195.9h0M1266.8 1195.9h0M1276.3 1195.9h0M1285.8 1195.9h0M1152.6 1204.7h0M1162.1 1204.7h0M1171.6 1204.7h0M1181.1 1204.7h0M1190.6 1204.7h0M1248.3 1204.7h0M1257.8 1204.7h0M1267.3 1204.7h0M1276.8 1204.7h0M1286.3 1204.7h0M1151.8 1213.5h0M1161.3 1213.5h0M1170.8 1213.5h0M1180.3 1213.5h0M1189.8 1213.5h0M1253.4 1213.5h0M1262.9 1213.5h0M1272.4 1213.5h0M1281.9 1213.5h0M1150.9 1222.3h0M1160.4 1222.3h0M1169.9 1222.3h0M1179.4 1222.3h0M1188.9 1222.3h0M1255.5 1222.3h0M1265.0 1222.3h0M1274.5 1222.3h0M1398.2 905.7h0M1407.7 905.7h0M1384.7 914.5h0M1394.2 914.5h0M1403.7 914.5h0M1413.2 914.5h0M1376.2 923.3h0M1385.7 923.3h0M1395.2 923.3h0M1404.7 923.3h0M1414.2 923.3h0M1362.6 932.1h0M1372.1 932.1h0M1381.6 932.1h0M1391.1 932.1h0M1400.6 932.1h0M1410.1 932.1h0M1419.6 932.1h0M1354.1 940.9h0M1363.6 940.9h0M1373.1 940.9h0M1382.6 940.9h0M1392.1 940.9h0M1401.6 940.9h0M1411.1 940.9h0M1420.6 940.9h0M1347.1 949.7h0M1356.6 949.7h0M1366.1 949.7h0M1375.6 949.7h0M1385.1 949.7h0M1394.6 949.7h0M1404.1 949.7h0M1413.6 949.7h0M1423.1 949.7h0M1342.0 958.5h0M1351.5 958.5h0M1361.0 958.5h0M1370.5 958.5h0M1380.0 958.5h0M1389.5 958.5h0M1399.0 958.5h0M1408.5 958.5h0M1418.0 958.5h0M1427.5 958.5h0M1343.1 967.3h0M1352.6 967.3h0M1362.1 967.3h0M1371.6 967.3h0M1381.1 967.3h0M1390.6 967.3h0M1400.1 967.3h0M1409.6 967.3h0M1419.1 967.3h0M1428.6 967.3h0M1344.3 976.1h0M1353.8 976.1h0M1363.3 976.1h0M1372.8 976.1h0M1382.3 976.1h0M1391.8 976.1h0M1401.3 976.1h0M1410.8 976.1h0M1420.3 976.1h0M1429.8 976.1h0M1340.6 984.9h0M1350.1 984.9h0M1359.6 984.9h0M1369.1 984.9h0M1378.6 984.9h0M1388.1 984.9h0M1397.6 984.9h0M1407.1 984.9h0M1416.6 984.9h0M1426.1 984.9h0M1435.6 984.9h0M1341.5 993.7h0M1351.0 993.7h0M1360.5 993.7h0M1370.0 993.7h0M1379.5 993.7h0M1389.0 993.7h0M1408.0 993.7h0M1417.5 993.7h0M1427.0 993.7h0M1436.5 993.7h0M1341.7 1002.5h0M1351.2 1002.5h0M1360.7 1002.5h0M1408.2 1002.5h0M1417.7 1002.5h0M1427.2 1002.5h0M1436.7 1002.5h0M1341.9 1011.3h0M1351.4 1011.3h0M1360.9 1011.3h0M1408.4 1011.3h0M1417.9 1011.3h0M1427.4 1011.3h0M1436.9 1011.3h0M1337.4 1020.1h0M1346.9 1020.1h0M1356.4 1020.1h0M1365.9 1020.1h0M1413.4 1020.1h0M1422.9 1020.1h0M1432.4 1020.1h0M1441.9 1020.1h0M1337.7 1028.9h0M1347.2 1028.9h0M1356.7 1028.9h0M1366.2 1028.9h0M1413.7 1028.9h0M1423.2 1028.9h0M1432.7 1028.9h0M1442.2 1028.9h0M1338.0 1037.7h0M1347.5 1037.7h0M1357.0 1037.7h0M1366.5 1037.7h0M1414.0 1037.7h0M1423.5 1037.7h0M1433.0 1037.7h0M1442.5 1037.7h0M1338.2 1046.5h0M1347.7 1046.5h0M1357.2 1046.5h0M1366.7 1046.5h0M1404.7 1046.5h0M1414.2 1046.5h0M1423.7 1046.5h0M1433.2 1046.5h0M1442.7 1046.5h0M1338.5 1055.3h0M1348.0 1055.3h0M1357.5 1055.3h0M1367.0 1055.3h0M1405.0 1055.3h0M1414.5 1055.3h0M1424.0 1055.3h0M1433.5 1055.3h0M1443.0 1055.3h0M1334.0 1064.1h0M1343.5 1064.1h0M1353.0 1064.1h0M1362.5 1064.1h0M1410.0 1064.1h0M1419.5 1064.1h0M1429.0 1064.1h0M1438.5 1064.1h0M1448.0 1064.1h0M1334.0 1072.9h0M1343.5 1072.9h0M1353.0 1072.9h0M1362.5 1072.9h0M1410.0 1072.9h0M1419.5 1072.9h0M1429.0 1072.9h0M1438.5 1072.9h0M1448.0 1072.9h0M1333.8 1081.7h0M1343.3 1081.7h0M1352.8 1081.7h0M1362.3 1081.7h0M1371.8 1081.7h0M1381.3 1081.7h0M1390.8 1081.7h0M1400.3 1081.7h0M1409.8 1081.7h0M1419.3 1081.7h0M1428.8 1081.7h0M1438.3 1081.7h0M1447.8 1081.7h0M1333.5 1090.5h0M1343.0 1090.5h0M1352.5 1090.5h0M1362.0 1090.5h0M1371.5 1090.5h0M1381.0 1090.5h0M1390.5 1090.5h0M1400.0 1090.5h0M1409.5 1090.5h0M1419.0 1090.5h0M1428.5 1090.5h0M1438.0 1090.5h0M1447.5 1090.5h0M1333.2 1099.3h0M1342.7 1099.3h0M1352.2 1099.3h0M1361.7 1099.3h0M1371.2 1099.3h0M1380.7 1099.3h0M1390.2 1099.3h0M1399.7 1099.3h0M1409.2 1099.3h0M1418.7 1099.3h0M1428.2 1099.3h0M1437.7 1099.3h0M1447.2 1099.3h0M1332.8 1108.1h0M1342.3 1108.1h0M1351.8 1108.1h0M1361.3 1108.1h0M1370.8 1108.1h0M1380.3 1108.1h0M1389.8 1108.1h0M1399.3 1108.1h0M1408.8 1108.1h0M1418.3 1108.1h0M1427.8 1108.1h0M1437.3 1108.1h0M1446.8 1108.1h0M1332.5 1116.9h0M1342.0 1116.9h0M1351.5 1116.9h0M1361.0 1116.9h0M1370.5 1116.9h0M1380.0 1116.9h0M1389.5 1116.9h0M1399.0 1116.9h0M1408.5 1116.9h0M1418.0 1116.9h0M1427.5 1116.9h0M1437.0 1116.9h0M1446.5 1116.9h0M1329.3 1125.7h0M1338.8 1125.7h0M1348.3 1125.7h0M1357.8 1125.7h0M1409.3 1125.7h0M1418.8 1125.7h0M1428.3 1125.7h0M1437.8 1125.7h0M1447.3 1125.7h0M1327.5 1134.5h0M1337.0 1134.5h0M1346.5 1134.5h0M1356.0 1134.5h0M1409.4 1134.5h0M1418.9 1134.5h0M1428.4 1134.5h0M1437.9 1134.5h0M1447.4 1134.5h0M1325.6 1143.3h0M1335.1 1143.3h0M1344.6 1143.3h0M1354.1 1143.3h0M1409.6 1143.3h0M1419.1 1143.3h0M1428.6 1143.3h0M1438.1 1143.3h0M1447.6 1143.3h0M1323.8 1152.1h0M1333.3 1152.1h0M1342.8 1152.1h0M1352.3 1152.1h0M1409.8 1152.1h0M1419.3 1152.1h0M1428.8 1152.1h0M1438.3 1152.1h0M1447.8 1152.1h0M1322.0 1160.9h0M1331.5 1160.9h0M1341.0 1160.9h0M1350.5 1160.9h0M1409.9 1160.9h0M1419.4 1160.9h0M1428.9 1160.9h0M1438.4 1160.9h0M1447.9 1160.9h0M1320.2 1169.7h0M1329.7 1169.7h0M1339.2 1169.7h0M1348.7 1169.7h0M1410.0 1169.7h0M1419.5 1169.7h0M1429.0 1169.7h0M1438.5 1169.7h0M1448.0 1169.7h0M1318.5 1178.5h0M1328.0 1178.5h0M1337.5 1178.5h0M1347.0 1178.5h0M1410.1 1178.5h0M1419.6 1178.5h0M1429.1 1178.5h0M1438.6 1178.5h0M1448.1 1178.5h0M1316.9 1187.3h0M1326.4 1187.3h0M1335.9 1187.3h0M1345.4 1187.3h0M1410.2 1187.3h0M1419.7 1187.3h0M1429.2 1187.3h0M1438.7 1187.3h0M1448.2 1187.3h0M1314.7 1196.1h0M1324.2 1196.1h0M1333.7 1196.1h0M1343.2 1196.1h0M1316.6 1204.9h0M1326.1 1204.9h0M1335.6 1204.9h0M1313.8 1213.7h0M1323.3 1213.7h0M1332.8 1213.7h0M1547.5 739.1h0M1557.0 739.1h0M1539.4 747.9h0M1548.9 747.9h0M1558.4 747.9h0M1531.6 756.7h0M1541.1 756.7h0M1550.6 756.7h0M1560.1 756.7h0M1524.1 765.5h0M1533.6 765.5h0M1543.1 765.5h0M1552.6 765.5h0M1562.1 765.5h0M1516.9 774.3h0M1526.4 774.3h0M1535.9 774.3h0M1545.4 774.3h0M1554.9 774.3h0M1564.4 774.3h0M1516.6 783.1h0M1526.1 783.1h0M1535.6 783.1h0M1545.1 783.1h0M1554.6 783.1h0M1564.1 783.1h0M1516.8 791.9h0M1526.3 791.9h0M1535.8 791.9h0M1545.3 791.9h0M1554.8 791.9h0M1564.3 791.9h0M1517.3 800.7h0M1526.8 800.7h0M1536.3 800.7h0M1545.8 800.7h0M1555.3 800.7h0M1564.8 800.7h0M1518.0 809.5h0M1527.5 809.5h0M1537.0 809.5h0M1546.5 809.5h0M1556.0 809.5h0M1565.5 809.5h0M1518.2 818.3h0M1527.7 818.3h0M1537.2 818.3h0M1546.7 818.3h0M1556.2 818.3h0M1565.7 818.3h0M1518.4 827.1h0M1527.9 827.1h0M1537.4 827.1h0M1546.9 827.1h0M1556.4 827.1h0M1565.9 827.1h0M1467.5 835.9h0M1518.4 835.9h0M1527.9 835.9h0M1537.4 835.9h0M1546.9 835.9h0M1556.4 835.9h0M1565.9 835.9h0M1460.7 844.7h0M1470.2 844.7h0M1518.0 844.7h0M1527.5 844.7h0M1537.0 844.7h0M1546.5 844.7h0M1556.0 844.7h0M1565.5 844.7h0M1453.8 853.5h0M1463.3 853.5h0M1472.8 853.5h0M1517.3 853.5h0M1526.8 853.5h0M1536.3 853.5h0M1545.8 853.5h0M1555.3 853.5h0M1564.8 853.5h0M1446.8 862.3h0M1456.3 862.3h0M1465.8 862.3h0M1475.3 862.3h0M1521.3 862.3h0M1530.8 862.3h0M1540.3 862.3h0M1549.8 862.3h0M1559.3 862.3h0M1440.4 871.1h0M1449.9 871.1h0M1459.4 871.1h0M1468.9 871.1h0M1478.4 871.1h0M1520.6 871.1h0M1530.1 871.1h0M1539.6 871.1h0M1549.1 871.1h0M1558.6 871.1h0M1440.9 879.9h0M1450.4 879.9h0M1459.9 879.9h0M1469.4 879.9h0M1478.9 879.9h0M1519.8 879.9h0M1529.3 879.9h0M1538.8 879.9h0M1548.3 879.9h0M1557.8 879.9h0M1442.0 888.7h0M1451.5 888.7h0M1461.0 888.7h0M1470.5 888.7h0M1480.0 888.7h0M1518.8 888.7h0M1528.3 888.7h0M1537.8 888.7h0M1547.3 888.7h0M1556.8 888.7h0M1443.9 897.5h0M1453.4 897.5h0M1462.9 897.5h0M1472.4 897.5h0M1481.9 897.5h0M1517.9 897.5h0M1527.4 897.5h0M1536.9 897.5h0M1546.4 897.5h0M1555.9 897.5h0M1446.0 906.3h0M1455.5 906.3h0M1465.0 906.3h0M1474.5 906.3h0M1484.0 906.3h0M1516.9 906.3h0M1526.4 906.3h0M1535.9 906.3h0M1545.4 906.3h0M1554.9 906.3h0M1448.2 915.1h0M1457.7 915.1h0M1467.2 915.1h0M1476.7 915.1h0M1486.2 915.1h0M1515.9 915.1h0M1525.4 915.1h0M1534.9 915.1h0M1544.4 915.1h0M1553.9 915.1h0M1450.8 923.9h0M1460.3 923.9h0M1469.8 923.9h0M1479.3 923.9h0M1488.8 923.9h0M1519.7 923.9h0M1529.2 923.9h0M1538.7 923.9h0M1548.2 923.9h0M1452.2 932.7h0M1461.7 932.7h0M1471.2 932.7h0M1480.7 932.7h0M1490.2 932.7h0M1499.7 932.7h0M1509.2 932.7h0M1518.7 932.7h0M1528.2 932.7h0M1537.7 932.7h0M1547.2 932.7h0M1452.6 941.5h0M1462.1 941.5h0M1471.6 941.5h0M1481.1 941.5h0M1490.6 941.5h0M1500.1 941.5h0M1509.6 941.5h0M1519.1 941.5h0M1528.6 941.5h0M1538.1 941.5h0M1547.6 941.5h0M1457.8 950.3h0M1467.3 950.3h0M1476.8 950.3h0M1486.3 950.3h0M1495.8 950.3h0M1505.3 950.3h0M1514.8 950.3h0M1524.3 950.3h0M1533.8 950.3h0M1543.3 950.3h0M1458.2 959.1h0M1467.7 959.1h0M1477.2 959.1h0M1486.7 959.1h0M1496.2 959.1h0M1505.7 959.1h0M1515.2 959.1h0M1524.7 959.1h0M1534.2 959.1h0M1543.7 959.1h0M1459.5 967.9h0M1469.0 967.9h0M1478.5 967.9h0M1488.0 967.9h0M1497.5 967.9h0M1507.0 967.9h0M1516.5 967.9h0M1526.0 967.9h0M1535.5 967.9h0M1545.0 967.9h0M1462.7 976.7h0M1472.2 976.7h0M1481.7 976.7h0M1491.2 976.7h0M1500.7 976.7h0M1510.2 976.7h0M1519.7 976.7h0M1529.2 976.7h0M1538.7 976.7h0M1548.2 976.7h0M1461.8 985.5h0M1471.3 985.5h0M1480.8 985.5h0M1490.3 985.5h0M1499.8 985.5h0M1509.3 985.5h0M1518.8 985.5h0M1528.3 985.5h0M1537.8 985.5h0M1547.3 985.5h0M1556.8 985.5h0M1466.4 994.3h0M1475.9 994.3h0M1485.4 994.3h0M1494.9 994.3h0M1504.4 994.3h0M1513.9 994.3h0M1523.4 994.3h0M1532.9 994.3h0M1542.4 994.3h0M1551.9 994.3h0M1561.4 994.3h0M1465.4 1003.1h0M1474.9 1003.1h0M1484.4 1003.1h0M1493.9 1003.1h0M1503.4 1003.1h0M1512.9 1003.1h0M1522.4 1003.1h0M1531.9 1003.1h0M1541.4 1003.1h0M1550.9 1003.1h0M1560.4 1003.1h0M1569.9 1003.1h0M1469.0 1011.9h0M1478.5 1011.9h0M1488.0 1011.9h0M1497.5 1011.9h0M1507.0 1011.9h0M1516.5 1011.9h0M1526.0 1011.9h0M1535.5 1011.9h0M1545.0 1011.9h0M1554.5 1011.9h0M1564.0 1011.9h0M1573.5 1011.9h0M1472.7 1020.7h0M1482.2 1020.7h0M1491.7 1020.7h0M1501.2 1020.7h0M1510.7 1020.7h0M1520.2 1020.7h0M1529.7 1020.7h0M1539.2 1020.7h0M1548.7 1020.7h0M1558.2 1020.7h0M1567.7 1020.7h0M1577.2 1020.7h0M1471.4 1029.5h0M1480.9 1029.5h0M1490.4 1029.5h0M1499.9 1029.5h0M1509.4 1029.5h0M1518.9 1029.5h0M1528.4 1029.5h0M1537.9 1029.5h0M1547.4 1029.5h0M1556.9 1029.5h0M1566.4 1029.5h0M1575.9 1029.5h0M1585.4 1029.5h0M1473.1 1038.3h0M1482.6 1038.3h0M1492.1 1038.3h0M1501.6 1038.3h0M1511.1 1038.3h0M1546.1 1038.3h0M1555.6 1038.3h0M1565.1 1038.3h0M1574.6 1038.3h0M1584.1 1038.3h0M1593.6 1038.3h0M1473.8 1047.1h0M1483.3 1047.1h0M1492.8 1047.1h0M1502.3 1047.1h0M1511.8 1047.1h0M1551.1 1047.1h0M1560.6 1047.1h0M1570.1 1047.1h0M1579.6 1047.1h0M1589.1 1047.1h0M1598.6 1047.1h0M1474.5 1055.9h0M1484.0 1055.9h0M1493.5 1055.9h0M1503.0 1055.9h0M1512.5 1055.9h0M1555.9 1055.9h0M1565.4 1055.9h0M1574.9 1055.9h0M1584.4 1055.9h0M1593.9 1055.9h0M1603.4 1055.9h0M1475.2 1064.7h0M1484.7 1064.7h0M1494.2 1064.7h0M1503.7 1064.7h0M1513.2 1064.7h0M1559.9 1064.7h0M1569.4 1064.7h0M1578.9 1064.7h0M1588.4 1064.7h0M1597.9 1064.7h0M1607.4 1064.7h0M1475.9 1073.5h0M1485.4 1073.5h0M1494.9 1073.5h0M1504.4 1073.5h0M1513.9 1073.5h0M1563.4 1073.5h0M1572.9 1073.5h0M1582.4 1073.5h0M1591.9 1073.5h0M1601.4 1073.5h0M1610.9 1073.5h0M1476.5 1082.3h0M1486.0 1082.3h0M1495.5 1082.3h0M1505.0 1082.3h0M1514.5 1082.3h0M1566.6 1082.3h0M1576.1 1082.3h0M1585.6 1082.3h0M1595.1 1082.3h0M1604.6 1082.3h0M1614.1 1082.3h0M1477.1 1091.1h0M1486.6 1091.1h0M1496.1 1091.1h0M1505.6 1091.1h0M1515.1 1091.1h0M1569.7 1091.1h0M1579.2 1091.1h0M1588.7 1091.1h0M1598.2 1091.1h0M1607.7 1091.1h0M1617.2 1091.1h0M1477.6 1099.9h0M1487.1 1099.9h0M1496.6 1099.9h0M1506.1 1099.9h0M1515.6 1099.9h0M1572.3 1099.9h0M1581.8 1099.9h0M1591.3 1099.9h0M1600.8 1099.9h0M1610.3 1099.9h0M1619.8 1099.9h0M1478.1 1108.7h0M1487.6 1108.7h0M1497.1 1108.7h0M1506.6 1108.7h0M1516.1 1108.7h0M1573.5 1108.7h0M1583.0 1108.7h0M1592.5 1108.7h0M1602.0 1108.7h0M1611.5 1108.7h0M1621.0 1108.7h0M1478.6 1117.5h0M1488.1 1117.5h0M1497.6 1117.5h0M1507.1 1117.5h0M1516.6 1117.5h0M1574.7 1117.5h0M1584.2 1117.5h0M1593.7 1117.5h0M1603.2 1117.5h0M1612.7 1117.5h0M1622.2 1117.5h0M1479.0 1126.3h0M1488.5 1126.3h0M1498.0 1126.3h0M1507.5 1126.3h0M1517.0 1126.3h0M1577.2 1126.3h0M1586.7 1126.3h0M1596.2 1126.3h0M1605.7 1126.3h0M1615.2 1126.3h0M1479.4 1135.1h0M1488.9 1135.1h0M1498.4 1135.1h0M1507.9 1135.1h0M1517.4 1135.1h0M1479.7 1143.9h0M1489.2 1143.9h0M1498.7 1143.9h0M1508.2 1143.9h0M1517.7 1143.9h0M1481.9 1152.7h0M1491.4 1152.7h0M1500.9 1152.7h0M1510.4 1152.7h0M1478.9 1161.5h0M1488.4 1161.5h0M1497.9 1161.5h0" stroke="#ffffff" stroke-width="1.6" stroke-linecap="round" fill="none" transform="translate(2.2 -1.8)"/>
</svg>
</div>
<div class="a" style="left:475px;top:105px;width:3151px;height:50px;background:#fff"></div>
<div class="a" style="left:473px;top:155px;width:3153px;height:2px;background:#e3e3e3"></div>
<div class="a" style="left:524px;top:105px;width:2px;height:2111px;background:#e3e3e3"></div>
<div class="a" style="left:586.8px;top:147px;width:2px;height:8px;background:#c4c4c4"></div>
<div class="rl" style="left:487.8px;top:122.5px;width:200px;text-align:center">-8.33</div>
<div class="a" style="left:718.8px;top:147px;width:2px;height:8px;background:#c4c4c4"></div>
<div class="rl" style="left:619.8px;top:122.5px;width:200px;text-align:center">-6.94</div>
<div class="a" style="left:850.7px;top:147px;width:2px;height:8px;background:#c4c4c4"></div>
<div class="rl" style="left:751.7px;top:122.5px;width:200px;text-align:center">-5.56</div>
<div class="a" style="left:982.7px;top:147px;width:2px;height:8px;background:#c4c4c4"></div>
<div class="rl" style="left:883.7px;top:122.5px;width:200px;text-align:center">-4.17</div>
<div class="a" style="left:1114.6px;top:147px;width:2px;height:8px;background:#c4c4c4"></div>
<div class="rl" style="left:1015.6px;top:122.5px;width:200px;text-align:center">-2.78</div>
<div class="a" style="left:1246.5px;top:147px;width:2px;height:8px;background:#c4c4c4"></div>
<div class="rl" style="left:1147.5px;top:122.5px;width:200px;text-align:center">-1.39</div>
<div class="a" style="left:1378.5px;top:147px;width:2px;height:8px;background:#c4c4c4"></div>
<div class="rl" style="left:1279.5px;top:122.5px;width:200px;text-align:center">0</div>
<div class="a" style="left:1510.5px;top:147px;width:2px;height:8px;background:#c4c4c4"></div>
<div class="rl" style="left:1411.5px;top:122.5px;width:200px;text-align:center">1.39</div>
<div class="a" style="left:1642.4px;top:147px;width:2px;height:8px;background:#c4c4c4"></div>
<div class="rl" style="left:1543.4px;top:122.5px;width:200px;text-align:center">2.78</div>
<div class="a" style="left:1774.3px;top:147px;width:2px;height:8px;background:#c4c4c4"></div>
<div class="rl" style="left:1675.3px;top:122.5px;width:200px;text-align:center">4.17</div>
<div class="a" style="left:1906.3px;top:147px;width:2px;height:8px;background:#c4c4c4"></div>
<div class="rl" style="left:1807.3px;top:122.5px;width:200px;text-align:center">5.56</div>
<div class="a" style="left:2038.2px;top:147px;width:2px;height:8px;background:#c4c4c4"></div>
<div class="rl" style="left:1939.2px;top:122.5px;width:200px;text-align:center">6.94</div>
<div class="a" style="left:2170.2px;top:147px;width:2px;height:8px;background:#c4c4c4"></div>
<div class="rl" style="left:2071.2px;top:122.5px;width:200px;text-align:center">8.33</div>
<div class="a" style="left:2302.1px;top:147px;width:2px;height:8px;background:#c4c4c4"></div>
<div class="rl" style="left:2203.1px;top:122.5px;width:200px;text-align:center">9.72</div>
<div class="a" style="left:2434.1px;top:147px;width:2px;height:8px;background:#c4c4c4"></div>
<div class="rl" style="left:2335.1px;top:122.5px;width:200px;text-align:center">11.11</div>
<div class="a" style="left:2566.1px;top:147px;width:2px;height:8px;background:#c4c4c4"></div>
<div class="rl" style="left:2467.1px;top:122.5px;width:200px;text-align:center">12.5</div>
<div class="a" style="left:2698.0px;top:147px;width:2px;height:8px;background:#c4c4c4"></div>
<div class="rl" style="left:2599.0px;top:122.5px;width:200px;text-align:center">13.89</div>
<div class="a" style="left:2829.9px;top:147px;width:2px;height:8px;background:#c4c4c4"></div>
<div class="rl" style="left:2730.9px;top:122.5px;width:200px;text-align:center">15.28</div>
<div class="a" style="left:2961.9px;top:147px;width:2px;height:8px;background:#c4c4c4"></div>
<div class="rl" style="left:2862.9px;top:122.5px;width:200px;text-align:center">16.67</div>
<div class="a" style="left:3093.8px;top:147px;width:2px;height:8px;background:#c4c4c4"></div>
<div class="rl" style="left:2994.8px;top:122.5px;width:200px;text-align:center">18.06</div>
<div class="a" style="left:3225.8px;top:147px;width:2px;height:8px;background:#c4c4c4"></div>
<div class="rl" style="left:3126.8px;top:122.5px;width:200px;text-align:center">19.44</div>
<div class="a" style="left:3357.8px;top:147px;width:2px;height:8px;background:#c4c4c4"></div>
<div class="rl" style="left:3258.8px;top:122.5px;width:200px;text-align:center">20.83</div>
<div class="a" style="left:3489.7px;top:147px;width:2px;height:8px;background:#c4c4c4"></div>
<div class="rl" style="left:3390.7px;top:122.5px;width:200px;text-align:center">22.22</div>
<div class="a" style="left:3621.6px;top:147px;width:2px;height:8px;background:#c4c4c4"></div>
<div class="rl" style="left:3522.6px;top:122.5px;width:200px;text-align:center">23.61</div>
<div class="a" style="left:516px;top:255.1px;width:9px;height:2px;background:#c4c4c4"></div>
<div class="rl" style="left:403px;top:246.1px;width:200px;height:20px;text-align:center;transform:rotate(-90deg)">-2.78</div>
<div class="a" style="left:516px;top:387.1px;width:9px;height:2px;background:#c4c4c4"></div>
<div class="rl" style="left:403px;top:378.1px;width:200px;height:20px;text-align:center;transform:rotate(-90deg)">-1.39</div>
<div class="a" style="left:516px;top:519.0px;width:9px;height:2px;background:#c4c4c4"></div>
<div class="rl" style="left:403px;top:510.0px;width:200px;height:20px;text-align:center;transform:rotate(-90deg)">0</div>
<div class="a" style="left:516px;top:651.0px;width:9px;height:2px;background:#c4c4c4"></div>
<div class="rl" style="left:403px;top:642.0px;width:200px;height:20px;text-align:center;transform:rotate(-90deg)">1.39</div>
<div class="a" style="left:516px;top:782.9px;width:9px;height:2px;background:#c4c4c4"></div>
<div class="rl" style="left:403px;top:773.9px;width:200px;height:20px;text-align:center;transform:rotate(-90deg)">2.78</div>
<div class="a" style="left:516px;top:914.8px;width:9px;height:2px;background:#c4c4c4"></div>
<div class="rl" style="left:403px;top:905.8px;width:200px;height:20px;text-align:center;transform:rotate(-90deg)">4.17</div>
<div class="a" style="left:516px;top:1046.8px;width:9px;height:2px;background:#c4c4c4"></div>
<div class="rl" style="left:403px;top:1037.8px;width:200px;height:20px;text-align:center;transform:rotate(-90deg)">5.56</div>
<div class="a" style="left:516px;top:1178.8px;width:9px;height:2px;background:#c4c4c4"></div>
<div class="rl" style="left:403px;top:1169.8px;width:200px;height:20px;text-align:center;transform:rotate(-90deg)">6.94</div>
<div class="a" style="left:516px;top:1310.7px;width:9px;height:2px;background:#c4c4c4"></div>
<div class="rl" style="left:403px;top:1301.7px;width:200px;height:20px;text-align:center;transform:rotate(-90deg)">8.33</div>
<div class="a" style="left:516px;top:1442.6px;width:9px;height:2px;background:#c4c4c4"></div>
<div class="rl" style="left:403px;top:1433.6px;width:200px;height:20px;text-align:center;transform:rotate(-90deg)">9.72</div>
<div class="a" style="left:516px;top:1574.6px;width:9px;height:2px;background:#c4c4c4"></div>
<div class="rl" style="left:403px;top:1565.6px;width:200px;height:20px;text-align:center;transform:rotate(-90deg)">11.11</div>
<div class="a" style="left:516px;top:1706.5px;width:9px;height:2px;background:#c4c4c4"></div>
<div class="rl" style="left:403px;top:1697.5px;width:200px;height:20px;text-align:center;transform:rotate(-90deg)">12.5</div>
<div class="a" style="left:516px;top:1838.5px;width:9px;height:2px;background:#c4c4c4"></div>
<div class="rl" style="left:403px;top:1829.5px;width:200px;height:20px;text-align:center;transform:rotate(-90deg)">13.89</div>
<div class="a" style="left:516px;top:1970.4px;width:9px;height:2px;background:#c4c4c4"></div>
<div class="rl" style="left:403px;top:1961.4px;width:200px;height:20px;text-align:center;transform:rotate(-90deg)">15.28</div>
<div class="a" style="left:516px;top:2102.4px;width:9px;height:2px;background:#c4c4c4"></div>
<div class="rl" style="left:403px;top:2093.4px;width:200px;height:20px;text-align:center;transform:rotate(-90deg)">16.67</div>
<div class="a" style="left:516px;top:2234.3px;width:9px;height:2px;background:#c4c4c4"></div>
<div class="rl" style="left:403px;top:2225.3px;width:200px;height:20px;text-align:center;transform:rotate(-90deg)">18.06</div>
<div class="a" style="left:0;top:105px;width:473px;height:2111px;background:#fff"></div>
<div class="a" style="left:472.5px;top:105px;width:2px;height:2111px;background:#e3e3e3"></div>
<div class="a" style="left:97px;top:155px;width:80px;height:80px;border-radius:16px;background:linear-gradient(135deg,#6b7fe3 0%,#7a52a6 100%);box-shadow:0 6px 22px rgba(110,110,240,.35)">
<svg width="80" height="80" viewBox="0 0 80 80" style="position:absolute;left:0;top:0">
<path d="M40 22 Q42 32 52 34 Q42 36 40 46 Q38 36 28 34 Q38 32 40 22Z" fill="#fff"/>
<path d="M26 44 Q27 49 32 50 Q27 51 26 56 Q25 51 20 50 Q25 49 26 44Z" fill="#c9c0ee"/>
<path d="M54 45 Q55 50 60 51 Q55 52 54 57 Q53 52 48 51 Q53 50 54 45Z" fill="#c9c0ee"/>
<path d="M75 8 Q76.5 17 82 19 Q76.5 21 75 30 Q73.5 21 68 19 Q73.5 17 75 8Z" fill="#f6c33a"/>
<path d="M64 5 Q65 10 68.5 11 Q65 12 64 17 Q63 12 59.5 11 Q63 10 64 5Z" fill="#f6c33a"/>
<path d="M68 18 Q69 23 72.5 24 Q69 25 68 30 Q67 25 63.5 24 Q67 23 68 18Z" fill="#f6c33a"/>
</svg></div>
<div class="a" style="left:235px;top:153px;width:72px;height:72px;border-radius:16px;background:#f4f4f4;box-shadow:0 3px 6px rgba(0,0,0,.06)">
<svg width="72" height="72" viewBox="0 0 72 72" style="position:absolute;left:0;top:0">
<rect x="21" y="21.5" width="12.5" height="12.5" fill="none" stroke="#6a83e6" stroke-width="2.6"/>
<circle cx="43.5" cy="27.7" r="6.4" fill="none" stroke="#6a83e6" stroke-width="2.6"/>
<path d="M29.5 40 L42.5 40 L36 51.5 Z" fill="none" stroke="#6a83e6" stroke-width="2.6" stroke-linejoin="round"/>
</svg></div>
<div class="a" style="left:323px;top:153px;width:72px;height:72px;border-radius:16px;background:#f4f4f4;box-shadow:0 3px 6px rgba(0,0,0,.06)">
<svg width="72" height="72" viewBox="0 0 72 72" style="position:absolute;left:0;top:0">
<path d="M22.5 26.5 V22.5 H50.5 V26.5 M36.5 22.5 V49.5 M29.5 49.5 H43.5" fill="none" stroke="#6a83e6" stroke-width="3" stroke-linecap="round"/>
</svg></div>
<div class="a" style="left:26px;top:253px;width:414px;height:2px;background:#e8e8e8"></div>
<div class="t" style="left:27px;top:262.6px;font-size:24px;font-weight:bold;color:#666;letter-spacing:0.8px">TOOLS</div>
<div class="a" style="left:33px;top:307.5px;width:88px;height:88px;border-radius:18px;background:#f4f4f4;box-shadow:0 3px 7px rgba(0,0,0,.07)"><svg width="88" height="88" viewBox="0 0 88 88" style="position:absolute;left:0;top:0"><circle cx="44" cy="43" r="16" fill="#f28b8b" stroke="#111" stroke-width="2"/>
<circle cx="44" cy="43" r="11" fill="#fff" stroke="#111" stroke-width="2"/>
<circle cx="44" cy="43" r="6" fill="#e05252" stroke="#111" stroke-width="2"/>
<path d="M44 22 V64 M22 43 H66 M22 64 H66" stroke="#111" stroke-width="2" fill="none"/></svg></div>
<div class="a" style="left:136.5px;top:307.5px;width:88px;height:88px;border-radius:18px;background:#f4f4f4;box-shadow:0 3px 7px rgba(0,0,0,.07)"><svg width="88" height="88" viewBox="0 0 88 88" style="position:absolute;left:0;top:0"><path d="M37 21.5 H51.5 L56 27 L44.3 38.5 L32.5 27 Z" fill="#bfe3e6" stroke="#111" stroke-width="2" stroke-linejoin="round"/>
<path d="M32.5 27 H56 M40 21.5 L37.5 27 L44.3 38.5 L51 27 L48.5 21.5" fill="none" stroke="#111" stroke-width="1.3"/>
<path d="M44.3 38.5 L37 49 H51.5 Z" fill="#333" stroke="#111" stroke-width="1.6" stroke-linejoin="round"/>
<path d="M39 46.5 H49.5" stroke="#e9c98a" stroke-width="2"/>
<rect x="36.3" y="49" width="16.2" height="16" fill="#545c6e" stroke="#111" stroke-width="2"/>
<path d="M41.5 50 V65 M47 50 V65" stroke="#111" stroke-width="1.3"/>
<path d="M23.2 65 H66.2" stroke="#111" stroke-width="2.2"/>
<circle cx="58.2" cy="38.7" r="3" fill="#fff" stroke="#111" stroke-width="1.6"/>
<circle cx="27.2" cy="48.2" r="2.3" fill="#fff" stroke="#111" stroke-width="1.5"/>
<circle cx="59" cy="54.5" r="2.3" fill="#fff" stroke="#111" stroke-width="1.5"/></svg></div>
<div class="a" style="left:241px;top:307.5px;width:88px;height:88px;border-radius:18px;background:#f4f4f4;box-shadow:0 3px 7px rgba(0,0,0,.07)"><svg width="88" height="88" viewBox="0 0 88 88" style="position:absolute;left:0;top:0"><rect x="23" y="28" width="36" height="12" rx="3" fill="#f4c54a" stroke="#111" stroke-width="2"/>
<path d="M29 33 q2 4 4 0 M38 32 v4 q3 0 3 -4 M45 33 v3 q3 0 3-3" fill="none" stroke="#111" stroke-width="1.5"/>
<path d="M59 34 H62 V44 H42 V52" fill="none" stroke="#111" stroke-width="2"/>
<rect x="38.5" y="51" width="7" height="14" rx="3.5" fill="#333" stroke="#111" stroke-width="2"/>
<circle cx="28" cy="48" r="2.8" fill="#7cc36a" stroke="#111" stroke-width="1.4"/>
<circle cx="60" cy="58" r="3.2" fill="#7cc36a" stroke="#111" stroke-width="1.4"/>
<circle cx="31" cy="23" r="1" fill="#111"/><circle cx="58" cy="24" r="1" fill="#111"/><circle cx="29" cy="59" r="1" fill="#111"/><circle cx="53" cy="58" r="1" fill="#111"/></svg></div>
<div class="a" style="left:345px;top:307.5px;width:88px;height:88px;border-radius:18px;background:#f4f4f4;box-shadow:0 3px 7px rgba(0,0,0,.07)"><svg width="88" height="88" viewBox="0 0 88 88" style="position:absolute;left:0;top:0"><g transform="rotate(-45 43 42)"><rect x="32" y="33" width="31" height="18" rx="2" fill="#e08c5c" stroke="#111" stroke-width="2"/>
<rect x="23" y="33" width="11" height="18" rx="2" fill="#b7bfdc" stroke="#111" stroke-width="2"/>
<path d="M44 39 H58 M47 43 H56" stroke="#111" stroke-width="1.4" stroke-dasharray="4 1.5"/></g>
<path d="M25.6 62 H62.2" stroke="#111" stroke-width="1.6"/>
<circle cx="36" cy="26" r="2.5" fill="#fff" stroke="#111" stroke-width="1.4"/>
<circle cx="26" cy="42" r="1.8" fill="#111"/><circle cx="56" cy="56" r="2.5" fill="#fff" stroke="#111" stroke-width="1.4"/>
<path d="M23 31 h4 M23 33 h4 M24 30 v5 M26 30 v5 M59 51 h4 M59 53 h4 M60 50 v5 M62 50 v5" stroke="#111" stroke-width="0.9"/></svg></div>
<div class="t" style="left:27px;top:442.6px;font-size:24px;font-weight:bold;color:#666;letter-spacing:0.9px">FILL PATTERN</div>
<div class="fb" style="left:26px;top:487px;width:199px;height:71px;">Smart Fill</div>
<div class="fb" style="left:241px;top:487px;width:199px;height:71px;">Outline</div>
<div class="fb" style="left:26px;top:575px;width:199px;height:71px;">Grid Fill</div>
<div class="fb" style="left:241px;top:575px;width:199px;height:71px;border-color:#4a8fe7;background:#e9f5fd;color:#4a8fe7;">Flexible Fill</div>
<div class="fb" style="left:26px;top:663px;width:199px;height:71px;">Hexa Fill</div>
<div class="fb" style="left:241px;top:663px;width:199px;height:71px;">Radial</div>
<div class="t" style="left:27px;top:781.5px;font-size:25px;color:#666;letter-spacing:0.3px;-webkit-text-stroke:0.45px #666">Stone Spacing:</div>
<div class="fb" style="left:26px;top:829.5px;width:64px;height:63px;border-radius:11px"></div><div class="a" style="left:53px;top:862.5px;width:11px;height:3.6px;background:#111"></div>
<div class="a" style="left:106px;top:827px;width:100px;height:68px;border:2px solid #c2c2c2;border-radius:13px;background:#fff"></div>
<div class="t" style="left:121px;top:846.2px;font-size:32px;color:#111;letter-spacing:-2.5px;transform:scaleX(0.92);transform-origin:left">1.1</div>
<div class="a" style="left:160px;top:843px;width:36px;height:36px;background:#e6e6eb">
<svg width="36" height="36" viewBox="0 0 36 36" style="position:absolute;left:0;top:0"><path d="M11 11.5 L18 5 L25 11.5 M11 23 L18 29.5 L25 23" fill="none" stroke="#8a8a98" stroke-width="2.4" stroke-linecap="round"/></svg></div>
<div class="fb" style="left:222px;top:829.5px;width:64px;height:63px;border-radius:11px"></div><div class="a" style="left:245px;top:862px;width:18px;height:3.4px;background:#111"></div><div class="a" style="left:252.3px;top:855px;width:3.4px;height:17.5px;background:#111"></div>
<div class="t" style="left:27px;top:942.6px;font-size:24px;font-weight:bold;color:#666;letter-spacing:0.9px">STONE SIZE</div>
<div class="fb" style="left:26px;top:987px;width:127px;height:71px;font-size:25px;-webkit-text-stroke:0.4px currentColor;border-color:#4a8fe7;background:#e9f5fd;color:#4a8fe7;">SS6</div>
<div class="fb" style="left:169px;top:987px;width:127px;height:71px;font-size:25px;-webkit-text-stroke:0.4px currentColor;">SS10</div>
<div class="fb" style="left:313px;top:987px;width:127px;height:71px;font-size:25px;-webkit-text-stroke:0.4px currentColor;">SS16</div>
<div class="t" style="left:27px;top:1107.6px;font-size:24px;font-weight:bold;color:#666;letter-spacing:0.9px">STONE COLORS</div>
<div class="a" style="left:34.0px;top:1158.5px;width:53.0px;height:53.0px;border-radius:50%;background:radial-gradient(circle at 50% 50%, #ececec 0%, #dedede 78%, #ededed 86%, #f0f0f0 100%);box-shadow:0 4px 8px rgba(0,0,0,.14);overflow:hidden"><div class="a" style="left:11.925px;top:9.274999999999999px;width:13.25px;height:13.25px;border-radius:50%;background:radial-gradient(circle,rgba(255,255,255,.55),rgba(255,255,255,0) 70%)"></div><div class="a" style="left:29.150000000000002px;top:31.799999999999997px;width:9.01px;height:9.01px;border-radius:50%;background:radial-gradient(circle,rgba(255,255,255,.45),rgba(255,255,255,0) 70%)"></div></div>
<div class="a" style="left:103.0px;top:1158.5px;width:53.0px;height:53.0px;border-radius:50%;background:radial-gradient(circle at 45% 30%, #4a78d0 0%, #2753b8 55%, #1d3f95 84%, #2753b8 88%, #2753b8 100%);box-shadow:0 4px 8px rgba(0,0,0,.14);overflow:hidden"><div class="a" style="left:11.925px;top:9.274999999999999px;width:13.25px;height:13.25px;border-radius:50%;background:radial-gradient(circle,rgba(255,255,255,.55),rgba(255,255,255,0) 70%)"></div><div class="a" style="left:29.150000000000002px;top:31.799999999999997px;width:9.01px;height:9.01px;border-radius:50%;background:radial-gradient(circle,rgba(255,255,255,.45),rgba(255,255,255,0) 70%)"></div></div>
<div class="a" style="left:172.0px;top:1158.5px;width:53.0px;height:53.0px;border-radius:50%;background:radial-gradient(circle at 45% 30%, #86b8e3 0%, #5e9bd0 55%, #4a84bb 84%, #5e9bd0 88%, #5e9bd0 100%);box-shadow:0 4px 8px rgba(0,0,0,.14);overflow:hidden"><div class="a" style="left:11.925px;top:9.274999999999999px;width:13.25px;height:13.25px;border-radius:50%;background:radial-gradient(circle,rgba(255,255,255,.55),rgba(255,255,255,0) 70%)"></div><div class="a" style="left:29.150000000000002px;top:31.799999999999997px;width:9.01px;height:9.01px;border-radius:50%;background:radial-gradient(circle,rgba(255,255,255,.45),rgba(255,255,255,0) 70%)"></div></div>
<div class="a" style="left:229.0px;top:1146.5px;width:77px;height:77px;border-radius:50%;border:4.5px solid #3d86eb;background:#f3f0ea;box-shadow:0 0 18px rgba(80,140,230,.35)"></div>
<div class="a" style="left:237.5px;top:1155px;width:60px;height:60px;border-radius:50%;background:#418cf0"></div>
<div class="a" style="left:242.3px;top:1159.8px;width:50.4px;height:50.4px;border-radius:50%;background:radial-gradient(circle at 45% 30%, #e2aad6 0%, #d384c3 55%, #b070a0 84%, #d384c3 88%, #d384c3 100%);overflow:hidden"><div class="a" style="left:11.34px;top:8.819999999999999px;width:12.6px;height:12.6px;border-radius:50%;background:radial-gradient(circle,rgba(255,255,255,.55),rgba(255,255,255,0) 70%)"></div><div class="a" style="left:27.720000000000002px;top:30.24px;width:8.568px;height:8.568px;border-radius:50%;background:radial-gradient(circle,rgba(255,255,255,.45),rgba(255,255,255,0) 70%)"></div></div>
<div class="a" style="left:310.0px;top:1158.5px;width:53.0px;height:53.0px;border-radius:50%;background:radial-gradient(circle at 45% 30%, #f0b25a 0%, #e59430 55%, #c07020 84%, #e59430 88%, #e59430 100%);box-shadow:0 4px 8px rgba(0,0,0,.14);overflow:hidden"><div class="a" style="left:11.925px;top:9.274999999999999px;width:13.25px;height:13.25px;border-radius:50%;background:radial-gradient(circle,rgba(255,255,255,.55),rgba(255,255,255,0) 70%)"></div><div class="a" style="left:29.150000000000002px;top:31.799999999999997px;width:9.01px;height:9.01px;border-radius:50%;background:radial-gradient(circle,rgba(255,255,255,.45),rgba(255,255,255,0) 70%)"></div></div>
<div class="a" style="left:379.0px;top:1158.5px;width:53.0px;height:53.0px;border-radius:50%;background:radial-gradient(circle at 45% 30%, #f6bdd8 0%, #f09cc3 55%, #d07aa2 84%, #f09cc3 88%, #f09cc3 100%);box-shadow:0 4px 8px rgba(0,0,0,.14);overflow:hidden"><div class="a" style="left:11.925px;top:9.274999999999999px;width:13.25px;height:13.25px;border-radius:50%;background:radial-gradient(circle,rgba(255,255,255,.55),rgba(255,255,255,0) 70%)"></div><div class="a" style="left:29.150000000000002px;top:31.799999999999997px;width:9.01px;height:9.01px;border-radius:50%;background:radial-gradient(circle,rgba(255,255,255,.45),rgba(255,255,255,0) 70%)"></div></div>
<div class="a" style="left:34.0px;top:1227.5px;width:53.0px;height:53.0px;border-radius:50%;background:radial-gradient(circle at 45% 30%, #3a3a3a 0%, #050505 55%, #000 84%, #050505 88%, #050505 100%);box-shadow:0 4px 8px rgba(0,0,0,.14);overflow:hidden"><div class="a" style="left:11.925px;top:9.274999999999999px;width:13.25px;height:13.25px;border-radius:50%;background:radial-gradient(circle,rgba(255,255,255,.55),rgba(255,255,255,0) 70%)"></div><div class="a" style="left:29.150000000000002px;top:31.799999999999997px;width:9.01px;height:9.01px;border-radius:50%;background:radial-gradient(circle,rgba(255,255,255,.45),rgba(255,255,255,0) 70%)"></div></div>
<div class="a" style="left:103.0px;top:1227.5px;width:53.0px;height:53.0px;border-radius:50%;background:radial-gradient(circle at 45% 30%, #f2604f 0%, #e83323 55%, #c42315 84%, #e83323 88%, #e83323 100%);box-shadow:0 4px 8px rgba(0,0,0,.14);overflow:hidden"><div class="a" style="left:11.925px;top:9.274999999999999px;width:13.25px;height:13.25px;border-radius:50%;background:radial-gradient(circle,rgba(255,255,255,.55),rgba(255,255,255,0) 70%)"></div><div class="a" style="left:29.150000000000002px;top:31.799999999999997px;width:9.01px;height:9.01px;border-radius:50%;background:radial-gradient(circle,rgba(255,255,255,.45),rgba(255,255,255,0) 70%)"></div></div>
<div class="a" style="left:172.0px;top:1227.5px;width:53.0px;height:53.0px;border-radius:50%;background:radial-gradient(circle at 45% 30%, #90d6a0 0%, #6cc27e 55%, #50a463 84%, #6cc27e 88%, #6cc27e 100%);box-shadow:0 4px 8px rgba(0,0,0,.14);overflow:hidden"><div class="a" style="left:11.925px;top:9.274999999999999px;width:13.25px;height:13.25px;border-radius:50%;background:radial-gradient(circle,rgba(255,255,255,.55),rgba(255,255,255,0) 70%)"></div><div class="a" style="left:29.150000000000002px;top:31.799999999999997px;width:9.01px;height:9.01px;border-radius:50%;background:radial-gradient(circle,rgba(255,255,255,.45),rgba(255,255,255,0) 70%)"></div></div>
<div class="a" style="left:241.0px;top:1227.5px;width:53.0px;height:53.0px;border-radius:50%;background:radial-gradient(circle at 45% 30%, #b2dea8 0%, #94cd88 55%, #78b06c 84%, #94cd88 88%, #94cd88 100%);box-shadow:0 4px 8px rgba(0,0,0,.14);overflow:hidden"><div class="a" style="left:11.925px;top:9.274999999999999px;width:13.25px;height:13.25px;border-radius:50%;background:radial-gradient(circle,rgba(255,255,255,.55),rgba(255,255,255,0) 70%)"></div><div class="a" style="left:29.150000000000002px;top:31.799999999999997px;width:9.01px;height:9.01px;border-radius:50%;background:radial-gradient(circle,rgba(255,255,255,.45),rgba(255,255,255,0) 70%)"></div></div>
<div class="a" style="left:310.0px;top:1227.5px;width:53.0px;height:53.0px;border-radius:50%;background:radial-gradient(circle at 45% 30%, #f29a58 0%, #e87c30 55%, #c8621c 84%, #e87c30 88%, #e87c30 100%);box-shadow:0 4px 8px rgba(0,0,0,.14);overflow:hidden"><div class="a" style="left:11.925px;top:9.274999999999999px;width:13.25px;height:13.25px;border-radius:50%;background:radial-gradient(circle,rgba(255,255,255,.55),rgba(255,255,255,0) 70%)"></div><div class="a" style="left:29.150000000000002px;top:31.799999999999997px;width:9.01px;height:9.01px;border-radius:50%;background:radial-gradient(circle,rgba(255,255,255,.45),rgba(255,255,255,0) 70%)"></div></div>
<div class="a" style="left:379.0px;top:1227.5px;width:53.0px;height:53.0px;border-radius:50%;background:radial-gradient(circle at 45% 30%, #f8ee88 0%, #f0e14e 55%, #d4c232 84%, #f0e14e 88%, #f0e14e 100%);box-shadow:0 4px 8px rgba(0,0,0,.14);overflow:hidden"><div class="a" style="left:11.925px;top:9.274999999999999px;width:13.25px;height:13.25px;border-radius:50%;background:radial-gradient(circle,rgba(255,255,255,.55),rgba(255,255,255,0) 70%)"></div><div class="a" style="left:29.150000000000002px;top:31.799999999999997px;width:9.01px;height:9.01px;border-radius:50%;background:radial-gradient(circle,rgba(255,255,255,.45),rgba(255,255,255,0) 70%)"></div></div>
<div class="a" style="left:34.0px;top:1297.0px;width:53.0px;height:53.0px;border-radius:50%;background:radial-gradient(circle at 45% 30%, #9a48a8 0%, #7a1a8a 55%, #5c0f6a 84%, #7a1a8a 88%, #7a1a8a 100%);box-shadow:0 4px 8px rgba(0,0,0,.14);overflow:hidden"><div class="a" style="left:11.925px;top:9.274999999999999px;width:13.25px;height:13.25px;border-radius:50%;background:radial-gradient(circle,rgba(255,255,255,.55),rgba(255,255,255,0) 70%)"></div><div class="a" style="left:29.150000000000002px;top:31.799999999999997px;width:9.01px;height:9.01px;border-radius:50%;background:radial-gradient(circle,rgba(255,255,255,.45),rgba(255,255,255,0) 70%)"></div></div>
<div class="t" style="left:27px;top:1405.6px;font-size:24px;font-weight:bold;color:#666;letter-spacing:0.9px">STONE COUNT</div>
<div class="a" style="left:26.5px;top:1450.5px;width:129px;height:99px;border:2px solid #d2d2d2;border-radius:9px;background:#f9f9f9"></div>
<div class="t" style="left:26.5px;top:1467.6px;width:129px;text-align:center;font-size:20px;font-weight:bold;color:#555">SS6</div>
<div class="t" style="left:26.5px;top:1503.0px;width:129px;text-align:center;font-size:30px;font-weight:bold;color:#3d8ff0">3743</div>
<div class="a" style="left:168.5px;top:1450.5px;width:129px;height:99px;border:2px solid #d2d2d2;border-radius:9px;background:#f9f9f9"></div>
<div class="t" style="left:168.5px;top:1467.6px;width:129px;text-align:center;font-size:20px;font-weight:bold;color:#555">SS10</div>
<div class="t" style="left:168.5px;top:1503.0px;width:129px;text-align:center;font-size:30px;font-weight:bold;color:#3d8ff0">0</div>
<div class="a" style="left:310.5px;top:1450.5px;width:129px;height:99px;border:2px solid #d2d2d2;border-radius:9px;background:#f9f9f9"></div>
<div class="t" style="left:310.5px;top:1467.6px;width:129px;text-align:center;font-size:20px;font-weight:bold;color:#555">SS16</div>
<div class="t" style="left:310.5px;top:1503.0px;width:129px;text-align:center;font-size:30px;font-weight:bold;color:#3d8ff0">0</div>
<div class="a" style="left:26px;top:1566px;width:414px;height:66px;border-radius:12px;background:linear-gradient(100deg,#6a7de2 0%,#7a52a8 100%);box-shadow:0 6px 16px rgba(110,100,230,.22)"></div>
<div class="t" style="left:47px;top:1590.2px;font-size:20px;font-weight:bold;color:#fff;letter-spacing:1.1px">TOTAL STONES:</div>
<div class="t" style="left:240px;top:1583.5px;width:180px;text-align:right;font-size:30px;font-weight:bold;color:#fff">3743</div>
<div class="a" style="left:26px;top:1644px;width:414px;height:147px;border:4px solid #54b586;border-radius:17px;background:#f1fbf4"></div>
<div class="t" style="left:42.5px;top:1665.7px;font-size:19px;font-weight:bold;color:#666;letter-spacing:1.4px">PLAN LIMIT</div>
<div class="t" style="left:42.5px;top:1705.1px;font-size:24px;color:#2d3748;letter-spacing:0.5px"><b>3743 / 8,000</b> stones</div>
<div class="a" style="left:42px;top:1748px;width:382px;height:12px;border-radius:6px;background:#e5e6ea;overflow:hidden"><div class="a" style="left:0;top:0;width:179px;height:12px;background:linear-gradient(90deg,#54b586,#3f8f68)"></div></div>
<div class="a" style="left:26px;top:1832px;width:414px;height:74px;border-radius:14px;background:#2a2a2a"></div>
<div class="t" style="left:51px;top:1857.6px;font-size:25px;color:#8c8c8c">Transfer</div>
<div class="t" style="left:200px;top:1854.5px;width:172px;text-align:right;font-size:30px;font-weight:bold;color:#5db55e">$20.00</div>
<div class="a" style="left:389.5px;top:1856.5px;width:25px;height:25px;border-radius:50%;border:2px solid #777"></div><div class="a" style="left:401px;top:1868px;width:2px;height:6px;background:#777"></div>
<div class="a" style="left:3626px;top:105px;width:480px;height:2111px;background:#fff"></div>
<div class="a" style="left:3626px;top:105px;width:2px;height:2111px;background:#e3e3e3"></div>
<div class="a" style="left:3628px;top:105px;width:478px;height:146px;background:#f9f9f9"></div>
<div class="a" style="left:3628px;top:251px;width:478px;height:2px;background:#e9e9e9"></div>
<div class="t" style="left:3652px;top:130.3px;font-size:27px;font-weight:bold;color:#2b2b2b">Layers</div>
<div class="t" style="left:3880px;top:131.1px;width:201px;text-align:right;font-size:24.5px;color:#9a9a9a">18 items</div>
<div class="a c" style="left:3652.5px;top:180px;width:131.5px;height:54px;border-radius:11px;border:2px solid #e6e6e6;background:#f4f4f4;font-size:24.5px;line-height:1;color:#c6c6c6">Lock</div>
<div class="a c" style="left:3801.5px;top:180px;width:130.5px;height:54px;border-radius:11px;border:2px solid #e6e6e6;background:#f4f4f4;font-size:24.5px;line-height:1;color:#c6c6c6">Hide</div>
<div class="a c" style="left:3949px;top:180px;width:132px;height:54px;border-radius:11px;border:2px solid #e6e6e6;background:#f4f4f4;font-size:24.5px;line-height:1;color:#f0a2a2">Delete</div>
<div class="a" style="left:3628px;top:253px;width:478px;height:57px;background:#f4f4f4"></div>
<div class="a" style="left:3628px;top:310px;width:478px;height:2px;background:#dedede"></div>
<svg class="a" style="left:3650px;top:269.0px" width="50" height="30" viewBox="0 0 50 30"><path d="M3 4.5 H16.3 L9.65 17.6 Z" fill="#666"/><circle cx="31.4" cy="6.1" r="1.8" fill="#777"/><circle cx="31.4" cy="11.5" r="1.8" fill="#777"/><circle cx="31.4" cy="17.2" r="1.8" fill="#777"/><circle cx="41.5" cy="6.1" r="1.8" fill="#777"/><circle cx="41.5" cy="11.5" r="1.8" fill="#777"/><circle cx="41.5" cy="17.2" r="1.8" fill="#777"/></svg>
<div class="a" style="left:3712.4px;top:267.9px;width:27.2px;height:27.3px;border:2.5px solid #8b8b97;border-radius:5px;background:#fff"></div>
<div class="t" style="left:3757px;top:271.8px;font-size:21px;font-weight:bold;color:#666;letter-spacing:1.3px">SHAPES</div>
<div class="t" style="left:3980px;top:271.5px;width:100px;text-align:right;font-size:22px;font-weight:bold;color:#777">9</div>
<div class="a" style="left:3628px;top:635.5px;width:478px;height:58.5px;background:#f4f4f4"></div>
<div class="a" style="left:3628px;top:694px;width:478px;height:2px;background:#dedede"></div>
<svg class="a" style="left:3650px;top:652.25px" width="50" height="30" viewBox="0 0 50 30"><path d="M3 4.5 H16.3 L9.65 17.6 Z" fill="#666"/><circle cx="31.4" cy="6.1" r="1.8" fill="#777"/><circle cx="31.4" cy="11.5" r="1.8" fill="#777"/><circle cx="31.4" cy="17.2" r="1.8" fill="#777"/><circle cx="41.5" cy="6.1" r="1.8" fill="#777"/><circle cx="41.5" cy="11.5" r="1.8" fill="#777"/><circle cx="41.5" cy="17.2" r="1.8" fill="#777"/></svg>
<div class="a" style="left:3712.4px;top:651.1px;width:27.2px;height:27.3px;border:2.5px solid #8b8b97;border-radius:5px;background:#fff"></div>
<div class="t" style="left:3757px;top:655.0px;font-size:21px;font-weight:bold;color:#666;letter-spacing:1.3px">RHINESTONES</div>
<div class="t" style="left:3980px;top:654.7px;width:100px;text-align:right;font-size:22px;font-weight:bold;color:#777">9</div>
<div class="a" style="left:3668.2px;top:314.2px;width:31.6px;height:31.6px;border:2.4px solid #3d8ff5"></div>
<div class="a" style="left:3670.6px;top:316.59999999999997px;width:26.8px;height:26.8px;border:2.2px solid #8a8a8a;border-radius:4px;background:#fff"></div>
<div class="t" style="left:3755px;top:321.4px;font-size:20.5px;color:#2c2c2c;letter-spacing:0.35px">Path 8</div>
<div class="a" style="left:3668.2px;top:350.2px;width:31.6px;height:31.6px;border:2.4px solid #3d8ff5"></div>
<div class="a" style="left:3670.6px;top:352.59999999999997px;width:26.8px;height:26.8px;border:2.2px solid #8a8a8a;border-radius:4px;background:#fff"></div>
<div class="t" style="left:3755px;top:357.4px;font-size:20.5px;color:#2c2c2c;letter-spacing:0.35px">Path 7</div>
<div class="a" style="left:3668.2px;top:386.2px;width:31.6px;height:31.6px;border:2.4px solid #3d8ff5"></div>
<div class="a" style="left:3670.6px;top:388.59999999999997px;width:26.8px;height:26.8px;border:2.2px solid #8a8a8a;border-radius:4px;background:#fff"></div>
<div class="t" style="left:3755px;top:393.4px;font-size:20.5px;color:#2c2c2c;letter-spacing:0.35px">Path 6</div>
<div class="a" style="left:3668.2px;top:422.2px;width:31.6px;height:31.6px;border:2.4px solid #3d8ff5"></div>
<div class="a" style="left:3670.6px;top:424.59999999999997px;width:26.8px;height:26.8px;border:2.2px solid #8a8a8a;border-radius:4px;background:#fff"></div>
<div class="t" style="left:3755px;top:429.4px;font-size:20.5px;color:#2c2c2c;letter-spacing:0.35px">Path 5</div>
<div class="a" style="left:3668.2px;top:458.2px;width:31.6px;height:31.6px;border:2.4px solid #3d8ff5"></div>
<div class="a" style="left:3670.6px;top:460.59999999999997px;width:26.8px;height:26.8px;border:2.2px solid #8a8a8a;border-radius:4px;background:#fff"></div>
<div class="t" style="left:3755px;top:465.4px;font-size:20.5px;color:#2c2c2c;letter-spacing:0.35px">Path 4</div>
<div class="a" style="left:3668.2px;top:494.2px;width:31.6px;height:31.6px;border:2.4px solid #3d8ff5"></div>
<div class="a" style="left:3670.6px;top:496.59999999999997px;width:26.8px;height:26.8px;border:2.2px solid #8a8a8a;border-radius:4px;background:#fff"></div>
<div class="t" style="left:3755px;top:501.4px;font-size:20.5px;color:#2c2c2c;letter-spacing:0.35px">Path 3</div>
<div class="a" style="left:3668.2px;top:530.2px;width:31.6px;height:31.6px;border:2.4px solid #3d8ff5"></div>
<div class="a" style="left:3670.6px;top:532.6px;width:26.8px;height:26.8px;border:2.2px solid #8a8a8a;border-radius:4px;background:#fff"></div>
<div class="t" style="left:3755px;top:537.4px;font-size:20.5px;color:#2c2c2c;letter-spacing:0.35px">Path 2</div>
<div class="a" style="left:3668.2px;top:566.2px;width:31.6px;height:31.6px;border:2.4px solid #3d8ff5"></div>
<div class="a" style="left:3670.6px;top:568.6px;width:26.8px;height:26.8px;border:2.2px solid #8a8a8a;border-radius:4px;background:#fff"></div>
<div class="t" style="left:3755px;top:573.4px;font-size:20.5px;color:#2c2c2c;letter-spacing:0.35px">Path 1</div>
<div class="a" style="left:3668.2px;top:602.2px;width:31.6px;height:31.6px;border:2.4px solid #3d8ff5"></div>
<div class="a" style="left:3670.6px;top:604.6px;width:26.8px;height:26.8px;border:2.2px solid #8a8a8a;border-radius:4px;background:#fff"></div>
<div class="t" style="left:3755px;top:609.4px;font-size:20.5px;color:#2c2c2c;letter-spacing:0.35px">Compound Path</div>
<div class="a" style="left:3668.2px;top:697.5px;width:31.6px;height:31.6px;border:2.4px solid #3d8ff5"></div>
<div class="a" style="left:3670.6px;top:699.9px;width:26.8px;height:26.8px;border:2.2px solid #8a8a8a;border-radius:4px;background:#fff"></div>
<div class="t" style="left:3755px;top:704.7px;font-size:20.5px;color:#2c2c2c;letter-spacing:0.35px">RhinestoneForm 29</div>
<div class="a" style="left:3668.2px;top:733.5px;width:31.6px;height:31.6px;border:2.4px solid #3d8ff5"></div>
<div class="a" style="left:3670.6px;top:735.9px;width:26.8px;height:26.8px;border:2.2px solid #8a8a8a;border-radius:4px;background:#fff"></div>
<div class="t" style="left:3755px;top:740.7px;font-size:20.5px;color:#2c2c2c;letter-spacing:0.35px">RhinestoneForm 28</div>
<div class="a" style="left:3668.2px;top:769.5px;width:31.6px;height:31.6px;border:2.4px solid #3d8ff5"></div>
<div class="a" style="left:3670.6px;top:771.9px;width:26.8px;height:26.8px;border:2.2px solid #8a8a8a;border-radius:4px;background:#fff"></div>
<div class="t" style="left:3755px;top:776.7px;font-size:20.5px;color:#2c2c2c;letter-spacing:0.35px">RhinestoneForm 27</div>
<div class="a" style="left:3668.2px;top:805.5px;width:31.6px;height:31.6px;border:2.4px solid #3d8ff5"></div>
<div class="a" style="left:3670.6px;top:807.9px;width:26.8px;height:26.8px;border:2.2px solid #8a8a8a;border-radius:4px;background:#fff"></div>
<div class="t" style="left:3755px;top:812.7px;font-size:20.5px;color:#2c2c2c;letter-spacing:0.35px">RhinestoneForm 26</div>
<div class="a" style="left:3668.2px;top:841.5px;width:31.6px;height:31.6px;border:2.4px solid #3d8ff5"></div>
<div class="a" style="left:3670.6px;top:843.9px;width:26.8px;height:26.8px;border:2.2px solid #8a8a8a;border-radius:4px;background:#fff"></div>
<div class="t" style="left:3755px;top:848.7px;font-size:20.5px;color:#2c2c2c;letter-spacing:0.35px">RhinestoneForm 25</div>
<div class="a" style="left:3668.2px;top:877.5px;width:31.6px;height:31.6px;border:2.4px solid #3d8ff5"></div>
<div class="a" style="left:3670.6px;top:879.9px;width:26.8px;height:26.8px;border:2.2px solid #8a8a8a;border-radius:4px;background:#fff"></div>
<div class="t" style="left:3755px;top:884.7px;font-size:20.5px;color:#2c2c2c;letter-spacing:0.35px">RhinestoneForm 24</div>
<div class="a" style="left:3668.2px;top:913.5px;width:31.6px;height:31.6px;border:2.4px solid #3d8ff5"></div>
<div class="a" style="left:3670.6px;top:915.9px;width:26.8px;height:26.8px;border:2.2px solid #8a8a8a;border-radius:4px;background:#fff"></div>
<div class="t" style="left:3755px;top:920.7px;font-size:20.5px;color:#2c2c2c;letter-spacing:0.35px">RhinestoneForm 23</div>
<div class="a" style="left:3668.2px;top:949.5px;width:31.6px;height:31.6px;border:2.4px solid #3d8ff5"></div>
<div class="a" style="left:3670.6px;top:951.9px;width:26.8px;height:26.8px;border:2.2px solid #8a8a8a;border-radius:4px;background:#fff"></div>
<div class="t" style="left:3755px;top:956.7px;font-size:20.5px;color:#2c2c2c;letter-spacing:0.35px">RhinestoneForm 22</div>
<div class="a" style="left:3668.2px;top:985.5px;width:31.6px;height:31.6px;border:2.4px solid #3d8ff5"></div>
<div class="a" style="left:3670.6px;top:987.9px;width:26.8px;height:26.8px;border:2.2px solid #8a8a8a;border-radius:4px;background:#fff"></div>
<div class="t" style="left:3755px;top:992.7px;font-size:20.5px;color:#2c2c2c;letter-spacing:0.35px">RhinestoneForm 21</div>
<svg class="a" style="left:0;top:0" width="4106" height="1100" viewBox="0 0 4106 1100"><path d="M3714.9 325.4 L3734.5 323.4 L3726.5 329.9 Q3737 332 3737 336 L3736.5 337.8 H3721.5 Z" fill="none" stroke="#111" stroke-width="2.4" stroke-linejoin="round"/><path d="M3717.4 358.6 L3734 354.6 L3726.5 371.7 Q3734 372.5 3734 375 V377.2 H3719.4 Z" fill="none" stroke="#111" stroke-width="2.4" stroke-linejoin="round"/><path d="M3715.8 395 Q3717 390.3 3722 390.3 L3726 391.8 L3730 407.6 Q3735.5 407.6 3737 410.5 V412.4 L3723.7 413.2 Z" fill="none" stroke="#111" stroke-width="2.4" stroke-linejoin="round"/><path d="M3719 429.7 L3723.7 429 L3728.4 440 L3729.2 427.4 L3733.5 426.6 L3732.4 447 L3728.4 448.7 L3723.7 436.8 L3722.9 448.7 L3718.2 448.7 Z" fill="none" stroke="#111" stroke-width="2.4" stroke-linejoin="round"/><path d="M3720.5 484.2 L3723.7 463.7 L3728.4 462.1 L3732.4 482.6 L3728.4 483.4 L3727.2 476.3 L3724.5 476.6 L3723.7 484.2 Z M3725 472 L3726 468 L3727 472 Z" fill="none" stroke="#111" stroke-width="2.4" stroke-linejoin="round"/><path d="M3717 520.5 L3716.5 514.5 Q3718 510.5 3722.5 510.5 L3724 507.5 Q3719.5 506.5 3719.5 503.5 Q3720.5 499.5 3726 499.5 Q3732 499.8 3734.5 497.5 Q3737.5 499.5 3734 502.5 Q3730 505 3726.5 505 L3725.5 512 Q3723.5 518.5 3720.5 519.5 Z M3720 516 L3722 513.5" fill="none" stroke="#111" stroke-width="2.4" stroke-linejoin="round"/><path d="M3720.5 537.9 L3726.8 534.7 L3729.2 536.3 L3726.8 547.4 L3731.6 553.7 L3730.8 556 L3723.7 556.8 L3722.1 547.4 Z" fill="none" stroke="#111" stroke-width="2.4" stroke-linejoin="round"/><path d="M3718 574 Q3720 570.5 3727 571 Q3734 572 3734 577 Q3733.5 586 3729 592 Q3725 595 3722 592 Q3716 584 3718 574 Z M3722 577 Q3724 580 3722 584 M3727 576 L3731 580 M3724 587 L3728 588" fill="none" stroke="#111" stroke-width="2.4" stroke-linejoin="round"/><path d="M3726 704.8 L3734.5 713.3 L3726 721.8 L3717.5 713.3 Z M3726 709.6999999999999 L3729.6 713.3 L3726 716.9 L3722.4 713.3 Z" fill="none" stroke="#555" stroke-width="2"/><path d="M3726 740.8 L3734.5 749.3 L3726 757.8 L3717.5 749.3 Z M3726 745.6999999999999 L3729.6 749.3 L3726 752.9 L3722.4 749.3 Z" fill="none" stroke="#555" stroke-width="2"/><path d="M3726 776.8 L3734.5 785.3 L3726 793.8 L3717.5 785.3 Z M3726 781.6999999999999 L3729.6 785.3 L3726 788.9 L3722.4 785.3 Z" fill="none" stroke="#555" stroke-width="2"/><path d="M3726 812.8 L3734.5 821.3 L3726 829.8 L3717.5 821.3 Z M3726 817.6999999999999 L3729.6 821.3 L3726 824.9 L3722.4 821.3 Z" fill="none" stroke="#555" stroke-width="2"/><path d="M3726 848.8 L3734.5 857.3 L3726 865.8 L3717.5 857.3 Z M3726 853.6999999999999 L3729.6 857.3 L3726 860.9 L3722.4 857.3 Z" fill="none" stroke="#555" stroke-width="2"/><path d="M3726 884.8 L3734.5 893.3 L3726 901.8 L3717.5 893.3 Z M3726 889.6999999999999 L3729.6 893.3 L3726 896.9 L3722.4 893.3 Z" fill="none" stroke="#555" stroke-width="2"/><path d="M3726 920.8 L3734.5 929.3 L3726 937.8 L3717.5 929.3 Z M3726 925.6999999999999 L3729.6 929.3 L3726 932.9 L3722.4 929.3 Z" fill="none" stroke="#555" stroke-width="2"/><path d="M3726 956.8 L3734.5 965.3 L3726 973.8 L3717.5 965.3 Z M3726 961.6999999999999 L3729.6 965.3 L3726 968.9 L3722.4 965.3 Z" fill="none" stroke="#555" stroke-width="2"/><path d="M3726 992.8 L3734.5 1001.3 L3726 1009.8 L3717.5 1001.3 Z M3726 997.6999999999999 L3729.6 1001.3 L3726 1004.9 L3722.4 1001.3 Z" fill="none" stroke="#555" stroke-width="2"/></svg>
<div class="a" style="left:3628px;top:1524px;width:478px;height:2px;background:#e6e6e6"></div>
<div class="a" style="left:3628px;top:1526px;width:478px;height:690px;background:#f8f8f8"></div>
<div class="t" style="left:3628px;top:1880.0px;width:478px;text-align:center;font-size:25px;color:#9a9a9a;line-height:1">Banner Area</div>
<div class="t" style="left:3628px;top:1915.5px;width:478px;text-align:center;font-size:25px;color:#9a9a9a;line-height:1;letter-spacing:0.5px">(Ads / Notifications)</div>
<div class="a" style="left:0;top:0;width:4106px;height:105px;background:#fff"></div>
<svg class="a" style="left:0;top:0" width="1450" height="105" viewBox="0 0 1450 105">
<circle cx="89.75" cy="45" r="29.2" fill="#fff" stroke="#d5d9e0" stroke-width="2"/>
<path d="M85.56 37.26 L76.67 20.81 A27.5 27.5 0 0 1 90.29 17.51 L89.92 36.20 A8.8 8.8 0 0 0 85.56 37.26Z" fill="#f2c040"/><path d="M90.41 36.23 L91.82 17.58 A27.5 27.5 0 0 1 105.07 22.16 L94.65 37.69 A8.8 8.8 0 0 0 90.41 36.23Z" fill="#f0a232"/><path d="M95.05 37.98 L106.32 23.05 A27.5 27.5 0 0 1 114.98 34.07 L97.83 41.50 A8.8 8.8 0 0 0 95.05 37.98Z" fill="#43537a"/><path d="M98.01 41.96 L115.56 35.50 A27.5 27.5 0 0 1 116.89 49.45 L98.43 46.42 A8.8 8.8 0 0 0 98.01 41.96Z" fill="#aab0df"/><path d="M98.34 46.91 L116.60 50.96 A27.5 27.5 0 0 1 110.17 63.41 L96.29 50.89 A8.8 8.8 0 0 0 98.34 46.91Z" fill="#b2b8c2"/><path d="M95.95 51.25 L109.12 64.53 A27.5 27.5 0 0 1 96.98 71.53 L92.06 53.49 A8.8 8.8 0 0 0 95.95 51.25Z" fill="#7cc4e4"/><path d="M91.59 53.61 L95.48 71.90 A27.5 27.5 0 0 1 81.48 71.23 L87.11 53.39 A8.8 8.8 0 0 0 91.59 53.61Z" fill="#8ed0de"/><path d="M86.64 53.23 L80.03 70.73 A27.5 27.5 0 0 1 68.62 62.60 L82.99 50.63 A8.8 8.8 0 0 0 86.64 53.23Z" fill="#bfe4eb"/><path d="M82.68 50.24 L67.67 61.39 A27.5 27.5 0 0 1 62.46 48.38 L81.02 46.08 A8.8 8.8 0 0 0 82.68 50.24Z" fill="#e27db2"/><path d="M80.97 45.59 L62.31 46.85 A27.5 27.5 0 0 1 64.96 33.09 L81.82 41.19 A8.8 8.8 0 0 0 80.97 45.59Z" fill="#e9786e"/><path d="M82.04 40.75 L65.67 31.72 A27.5 27.5 0 0 1 75.34 21.58 L85.14 37.50 A8.8 8.8 0 0 0 82.04 40.75Z" fill="#b53b2b"/>
<circle cx="89.75" cy="45" r="8.4" fill="#c8ccd3"/>
<circle cx="89.75" cy="45" r="1.3" fill="#111"/>
<path d="M206 36 H228 M206 44 H228 M206 52 H228" stroke="#111" stroke-width="2.2"/>
</svg>
<div class="a" style="left:282.5px;top:3.5px;width:82.5px;height:83px;border-radius:16px;border:2px solid #d9d9d9;background:linear-gradient(140deg,#e590f0 0%,#e27ab0 50%,#e05c70 100%);box-shadow:0 4px 14px rgba(230,130,230,.18)">
<svg width="80" height="80" viewBox="0 0 80 80" style="position:absolute;left:0;top:0"><path d="M35.4 25.8 L25.3 35 L35.4 44.2 M25.8 35 H46.5 Q53.6 35 53.6 42.5 V53.5" fill="none" stroke="#fff" stroke-width="4" stroke-linecap="round" stroke-linejoin="round"/></svg></div>
<div class="a" style="left:367px;top:3.5px;width:81px;height:83px;border-radius:16px;border:1.5px solid #ececec;background:#f9f9f9;box-shadow:0 3px 10px rgba(0,0,0,.04)">
<svg width="80" height="80" viewBox="0 0 80 80" style="position:absolute;left:0;top:0"><path d="M43.3 25.8 L53.4 34.8 L43.3 43.8 M53 34.8 H32.5 Q25.1 34.8 25.1 42.3 V53.5" fill="none" stroke="#c8c8c8" stroke-width="4" stroke-linecap="round" stroke-linejoin="round"/></svg></div>
<div class="a" style="left:458px;top:15px;width:64px;height:60px;border-radius:11px;background:#418cf4">
<svg width="64" height="60" viewBox="0 0 64 60" style="position:absolute;left:0;top:0"><path d="M18.4 14.8 L47.1 27.9 L35.5 32.5 L26.4 45.6 Z" fill="none" stroke="#fff" stroke-width="2.2" stroke-linejoin="miter"/></svg></div>
<svg class="a" style="left:0;top:0" width="1450" height="105" viewBox="0 0 1450 105">
<path d="M559.8 26.3 L560.7 56.6 L568 49.6 L575.5 63.6 L581.3 60 L573.8 47 L582.9 46.1 Z" fill="#fff" stroke="#000" stroke-width="2.8" stroke-linejoin="round"/>
<rect x="635" y="29.6" width="28.2" height="28.7" fill="none" stroke="#222" stroke-width="2"/>
<circle cx="655" cy="39.7" r="4.4" fill="none" stroke="#222" stroke-width="1.8"/>
<path d="M635 50.8 L643 41.4 L660.5 58.3" fill="none" stroke="#222" stroke-width="2"/>
<path d="M716.4 29.8 L738 39.7 Q741.5 42 739.8 44.5 L738 50.2 L743.2 56.6 L736.2 61.2 L731.6 55.4 L726.3 56.6 Q722 56.5 720.5 51.9 Z" fill="none" stroke="#222" stroke-width="2" stroke-linejoin="round"/>
<path d="M716.4 29.8 L729.6 47" stroke="#222" stroke-width="1.6"/><circle cx="729.6" cy="47" r="2.2" fill="#222"/>
<path d="M795 50.5 L798.2 47.6 Q800 46.4 801.6 47.9 L803.8 50 V35.5 Q803.8 33 806.1 33 Q808.4 33 808.4 35.5 V32 Q808.4 29.6 810.7 29.6 Q813 29.6 813 32 V32.8 Q813 30.5 815.3 30.5 Q817.7 30.5 817.7 32.8 V36.5 Q817.7 34.2 820.3 34.2 H822.6 Q825.3 34.2 825.3 36.8 V57.5 Q825.3 60.7 822 60.7 H804.5 Z" fill="none" stroke="#222" stroke-width="2" stroke-linejoin="round"/>
<path d="M808.4 35 V44.5 M813 33 V44.5 M817.7 35.5 V44.5" stroke="#222" stroke-width="2.6"/>
</svg>
<svg class="a" style="left:0;top:0" width="1450" height="105" viewBox="0 0 1450 105">
<circle cx="882" cy="44.8" r="22.6" fill="#111"/>
<path d="M882.00 30.00 L882.00 22.60 A22.2 22.2 0 0 1 897.70 29.10 L892.47 34.33 A14.8 14.8 0 0 0 882.00 30.00Z" fill="#d65a4a" stroke="#111" stroke-width="1.1"/><path d="M892.47 34.33 L897.70 29.10 A22.2 22.2 0 0 1 904.20 44.80 L896.80 44.80 A14.8 14.8 0 0 0 892.47 34.33Z" fill="#f2a838" stroke="#111" stroke-width="1.1"/><path d="M896.80 44.80 L904.20 44.80 A22.2 22.2 0 0 1 897.70 60.50 L892.47 55.27 A14.8 14.8 0 0 0 896.80 44.80Z" fill="#f8c850" stroke="#111" stroke-width="1.1"/><path d="M892.47 55.27 L897.70 60.50 A22.2 22.2 0 0 1 882.00 67.00 L882.00 59.60 A14.8 14.8 0 0 0 892.47 55.27Z" fill="#88d068" stroke="#111" stroke-width="1.1"/><path d="M882.00 59.60 L882.00 67.00 A22.2 22.2 0 0 1 866.30 60.50 L871.53 55.27 A14.8 14.8 0 0 0 882.00 59.60Z" fill="#4ea058" stroke="#111" stroke-width="1.1"/><path d="M871.53 55.27 L866.30 60.50 A22.2 22.2 0 0 1 859.80 44.80 L867.20 44.80 A14.8 14.8 0 0 0 871.53 55.27Z" fill="#3a80e8" stroke="#111" stroke-width="1.1"/><path d="M867.20 44.80 L859.80 44.80 A22.2 22.2 0 0 1 866.30 29.10 L871.53 34.33 A14.8 14.8 0 0 0 867.20 44.80Z" fill="#8850b0" stroke="#111" stroke-width="1.1"/><path d="M871.53 34.33 L866.30 29.10 A22.2 22.2 0 0 1 882.00 22.60 L882.00 30.00 A14.8 14.8 0 0 0 871.53 34.33Z" fill="#7038a0" stroke="#111" stroke-width="1.1"/>
<circle cx="882" cy="44.8" r="14.8" fill="#ececec" stroke="#111" stroke-width="1.4"/>
<path d="M869.5 57 L887 39.5" stroke="#111" stroke-width="4.8" stroke-linecap="round"/>
<path d="M869.5 57 L887 39.5" stroke="#e8eef4" stroke-width="2.4" stroke-linecap="round"/>
<path d="M885 36 L891 42" stroke="#111" stroke-width="4" stroke-linecap="round"/>
<path d="M889 37.5 L894.5 32" stroke="#333" stroke-width="4.4" stroke-linecap="round"/>
</svg>
<div class="a" style="left:930px;top:13px;width:64px;height:64px;border-radius:13px;background:#eaf1fc"></div>
<svg class="a" style="left:0;top:0" width="1450" height="105" viewBox="0 0 1450 105">
<rect x="942" y="25" width="40" height="40" rx="6" fill="#4a80ec"/><rect x="946" y="29.0" width="8" height="8" rx="1" fill="#eaf1fc"/><rect x="946" y="40.9" width="8" height="8" rx="1" fill="#eaf1fc"/><rect x="946" y="52.8" width="8" height="8" rx="1" fill="#eaf1fc"/><rect x="958" y="29.0" width="8" height="8" rx="1" fill="#eaf1fc"/><rect x="958" y="40.9" width="8" height="8" rx="1" fill="#eaf1fc"/><rect x="958" y="52.8" width="8" height="8" rx="1" fill="#eaf1fc"/><rect x="970" y="29.0" width="8" height="8" rx="1" fill="#eaf1fc"/><rect x="970" y="40.9" width="8" height="8" rx="1" fill="#eaf1fc"/><rect x="970" y="52.8" width="8" height="8" rx="1" fill="#eaf1fc"/>
</svg>
<svg class="a" style="left:0;top:0" width="1450" height="105" viewBox="0 0 1450 105">
<defs><radialGradient id="rb" cx="40%" cy="30%" r="70%"><stop offset="0" stop-color="#f06a55"/><stop offset=".6" stop-color="#d63c2c"/><stop offset="1" stop-color="#a02818"/></radialGradient>
<radialGradient id="bb" cx="40%" cy="30%" r="70%"><stop offset="0" stop-color="#5ab0e0"/><stop offset=".6" stop-color="#2e80c0"/><stop offset="1" stop-color="#1c5a98"/></radialGradient></defs>
<circle cx="1051.5" cy="38.5" r="11.4" fill="rgba(0,0,0,.12)"/>
<circle cx="1050.4" cy="36.5" r="11.4" fill="url(#rb)"/>
<circle cx="1034.5" cy="55.5" r="11.4" fill="rgba(0,0,0,.12)"/>
<circle cx="1033.4" cy="53.5" r="11.4" fill="url(#bb)"/>
<path d="M1025.5 30.5 L1033 36.5 M1034 30 L1035 36 M1024 38.5 L1031 39.5 M1053 49.5 L1058.5 49.5 M1050 52.5 L1058 57.5 M1048.5 55.5 L1051.5 61.5" stroke="#555" stroke-width="1.4" stroke-linecap="round"/>
</svg>
<div class="a" style="left:1090.5px;top:13px;width:63px;height:63.5px;border-radius:11px;border:2px solid #dedede;background:#fff"></div>
<svg class="a" style="left:0;top:0" width="1450" height="105" viewBox="0 0 1450 105">
<rect x="1114" y="30.7" width="16.3" height="28.4" rx="2.6" fill="none" stroke="#333" stroke-width="2.6"/>
<path d="M1117.8 54.8 H1126.5" stroke="#333" stroke-width="2" stroke-linecap="round"/>
</svg>
<div class="a" style="left:1178px;top:15px;width:64px;height:60px;border-radius:11px;background:#418cf4"></div>
<svg class="a" style="left:0;top:0" width="1450" height="105" viewBox="0 0 1450 105">
<path d="M1228.60 46.54 L1232.58 46.96" stroke="#111" stroke-width="2.1" stroke-linecap="round"/><path d="M1227.70 50.61 L1231.49 51.90" stroke="#111" stroke-width="2.1" stroke-linecap="round"/><path d="M1225.92 54.38 L1229.33 56.48" stroke="#111" stroke-width="2.1" stroke-linecap="round"/><path d="M1223.35 57.65 L1226.20 60.46" stroke="#111" stroke-width="2.1" stroke-linecap="round"/><path d="M1220.11 60.27 L1222.27 63.65" stroke="#111" stroke-width="2.1" stroke-linecap="round"/><path d="M1216.37 62.11 L1217.72 65.88" stroke="#111" stroke-width="2.1" stroke-linecap="round"/><path d="M1212.32 63.07 L1212.80 67.04" stroke="#111" stroke-width="2.1" stroke-linecap="round"/><path d="M1208.16 63.10 L1207.74 67.08" stroke="#111" stroke-width="2.1" stroke-linecap="round"/><path d="M1204.09 62.20 L1202.80 65.99" stroke="#111" stroke-width="2.1" stroke-linecap="round"/><path d="M1200.32 60.42 L1198.22 63.83" stroke="#111" stroke-width="2.1" stroke-linecap="round"/><path d="M1197.05 57.85 L1194.24 60.70" stroke="#111" stroke-width="2.1" stroke-linecap="round"/><path d="M1194.43 54.61 L1191.05 56.77" stroke="#111" stroke-width="2.1" stroke-linecap="round"/><path d="M1192.59 50.87 L1188.82 52.22" stroke="#111" stroke-width="2.1" stroke-linecap="round"/><path d="M1191.63 46.82 L1187.66 47.30" stroke="#111" stroke-width="2.1" stroke-linecap="round"/><path d="M1191.60 42.66 L1187.62 42.24" stroke="#111" stroke-width="2.1" stroke-linecap="round"/><path d="M1192.50 38.59 L1188.71 37.30" stroke="#111" stroke-width="2.1" stroke-linecap="round"/><path d="M1194.28 34.82 L1190.87 32.72" stroke="#111" stroke-width="2.1" stroke-linecap="round"/><path d="M1196.85 31.55 L1194.00 28.74" stroke="#111" stroke-width="2.1" stroke-linecap="round"/><path d="M1200.09 28.93 L1197.93 25.55" stroke="#111" stroke-width="2.1" stroke-linecap="round"/><path d="M1203.83 27.09 L1202.48 23.32" stroke="#111" stroke-width="2.1" stroke-linecap="round"/><path d="M1207.88 26.13 L1207.40 22.16" stroke="#111" stroke-width="2.1" stroke-linecap="round"/><path d="M1212.04 26.10 L1212.46 22.12" stroke="#111" stroke-width="2.1" stroke-linecap="round"/><path d="M1216.11 27.00 L1217.40 23.21" stroke="#111" stroke-width="2.1" stroke-linecap="round"/><path d="M1219.88 28.78 L1221.98 25.37" stroke="#111" stroke-width="2.1" stroke-linecap="round"/><path d="M1223.15 31.35 L1225.96 28.50" stroke="#111" stroke-width="2.1" stroke-linecap="round"/><path d="M1225.77 34.59 L1229.15 32.43" stroke="#111" stroke-width="2.1" stroke-linecap="round"/><path d="M1227.61 38.33 L1231.38 36.98" stroke="#111" stroke-width="2.1" stroke-linecap="round"/><path d="M1228.57 42.38 L1232.54 41.90" stroke="#111" stroke-width="2.1" stroke-linecap="round"/>
<polygon points="1210.10,29.00 1219.27,31.98 1224.94,39.78 1224.94,49.42 1219.27,57.22 1210.10,60.20 1200.93,57.22 1195.26,49.42 1195.26,39.78 1200.93,31.98" fill="#dff0ef" stroke="#111" stroke-width="1.6"/>
<polygon points="1210.10,34.60 1215.98,36.51 1219.61,41.51 1219.61,47.69 1215.98,52.69 1210.10,54.60 1204.22,52.69 1200.59,47.69 1200.59,41.51 1204.22,36.51" fill="#b8dcdc" stroke="#111" stroke-width="1.2"/>
<circle cx="1213" cy="43" r="0.9" fill="#111"/><circle cx="1207" cy="47" r="0.9" fill="#111"/>
</svg>
<svg class="a" style="left:0;top:0" width="1450" height="105" viewBox="0 0 1450 105">
<circle cx="1308.7" cy="29.6" r="10" fill="#f2d38c" stroke="#111" stroke-width="1.6"/>
<circle cx="1300.8" cy="41.3" r="10" fill="#7d5c60" stroke="#111" stroke-width="1.6" fill-opacity=".95"/>
<circle cx="1316.7" cy="41.3" r="10" fill="#e27c82" stroke="#111" stroke-width="1.6" fill-opacity=".95"/>
<circle cx="1308.7" cy="29.6" r="10" fill="none" stroke="#111" stroke-width="1.6"/>
<circle cx="1300.8" cy="41.3" r="10" fill="none" stroke="#111" stroke-width="1.6"/>
<path d="M1291 56.7 H1326.5" stroke="#111" stroke-width="1.6"/>
<rect x="1289" y="54.2" width="4.6" height="4.6" fill="#fff" stroke="#111" stroke-width="1.4"/>
<rect x="1306.5" y="54.2" width="4.6" height="4.6" fill="#fff" stroke="#111" stroke-width="1.4"/>
<rect x="1324.2" y="54.2" width="4.6" height="4.6" fill="#fff" stroke="#111" stroke-width="1.4"/>
<circle cx="1292.2" cy="27.7" r="2.3" fill="#fff" stroke="#111" stroke-width="1.2"/>
<circle cx="1327.2" cy="24.8" r="2.3" fill="#fff" stroke="#111" stroke-width="1.2"/>
<circle cx="1298" cy="21.5" r=".8" fill="#111"/><circle cx="1319" cy="20.5" r=".8" fill="#111"/><circle cx="1288" cy="36" r=".8" fill="#111"/><circle cx="1290" cy="49" r=".8" fill="#111"/><circle cx="1328" cy="49.5" r=".8" fill="#111"/><circle cx="1324" cy="31" r=".8" fill="#111"/>
</svg>
<div class="a" style="left:1353px;top:13px;width:62px;height:63.5px;border-radius:11px;border:2px solid #dedede;background:#fff"></div>
<svg class="a" style="left:0;top:0" width="1450" height="105" viewBox="0 0 1450 105">
<path d="M1370 27 H1392 L1401.8 36.5 V58.5 Q1401.8 62.7 1397.6 62.7 H1370.3 Q1366.2 62.7 1366.2 58.5 V31 Q1366.2 27 1370 27 Z" fill="none" stroke="#666" stroke-width="4" stroke-linejoin="round"/>
<path d="M1373 27 V36.7 H1388.6" fill="none" stroke="#666" stroke-width="3.6" stroke-linecap="round"/>
<path d="M1373 62 V47.5 H1394.5 V62" fill="none" stroke="#666" stroke-width="3.6"/>
<circle cx="1384" cy="55" r="2.5" fill="#666"/>
</svg>
<div class="a" style="left:3279px;top:18px;width:243px;height:54px;border-radius:11px;background:#f3f3f3"></div>
<svg class="a" style="left:3290px;top:0" width="60" height="90" viewBox="3290 0 60 90"><path d="M3309 31 H3322.5 L3330 38.5 V57 Q3330 59.5 3327.5 59.5 H3309 Q3306.5 59.5 3306.5 57 V33.5 Q3306.5 31 3309 31 Z M3322 31.5 V38.8 H3329.5" fill="none" stroke="#555" stroke-width="2.2" stroke-linejoin="round"/></svg>
<div class="t" style="left:3351px;top:33.0px;font-size:27px;color:#2b2b2b;letter-spacing:0.2px">New Design</div>
<div class="a" style="left:3540px;top:12px;width:317px;height:66px;border-radius:15px;border:2px solid #fbe1b6;background:#fff6ea"></div>
<svg class="a" style="left:3560px;top:25px" width="40" height="40" viewBox="0 0 40 40"><circle cx="20.7" cy="19.9" r="13.6" fill="none" stroke="#f2b25a" stroke-width="2.6"/><path d="M20.7 11.5 V20 L26 23.5" fill="none" stroke="#f2b25a" stroke-width="2.6" stroke-linecap="round"/></svg>
<div class="t" style="left:3613px;top:33.0px;font-size:27px;color:#f1b15a;-webkit-text-stroke:0.8px #f1b15a;letter-spacing:0.1px">Unsaved changes</div>
<div class="a" style="left:3874px;top:7px;width:76px;height:76px;border-radius:20px;background:linear-gradient(135deg,#6a7fe2 0%,#7a4fa6 100%);box-shadow:0 5px 16px rgba(110,120,230,.25)">
<svg width="76" height="76" viewBox="0 0 76 76" style="position:absolute;left:0;top:0"><path d="M21.5 38 Q38 14 55.5 38 Q38 62 21.5 38 Z" fill="none" stroke="#fff" stroke-width="3.2" stroke-linejoin="round"/><circle cx="37.7" cy="37.8" r="4.8" fill="none" stroke="#fff" stroke-width="3.2"/></svg></div>
<svg class="a" style="left:4000px;top:15px" width="60" height="60" viewBox="4000 15 60 60">
<path d="M4009.5 26.5 H4015.5 Q4016.5 26.5 4016.8 27.5 L4021.4 51.2 H4042.7 L4046.6 34.6 H4018.4" fill="none" stroke="#111" stroke-width="3.4" stroke-linecap="round" stroke-linejoin="round"/>
<circle cx="4022.7" cy="60.2" r="3.2" fill="#111"/><circle cx="4041.5" cy="60.2" r="3.2" fill="#111"/></svg>
<div class="a" style="left:0;top:2216px;width:4106px;height:2px;background:#2e2e2e"></div>
<script>(function(){var w=window.innerWidth;if(w&&Math.abs(w-4106)>2){document.documentElement.style.zoom=(w/4106);}})();</script>
</body></html>
